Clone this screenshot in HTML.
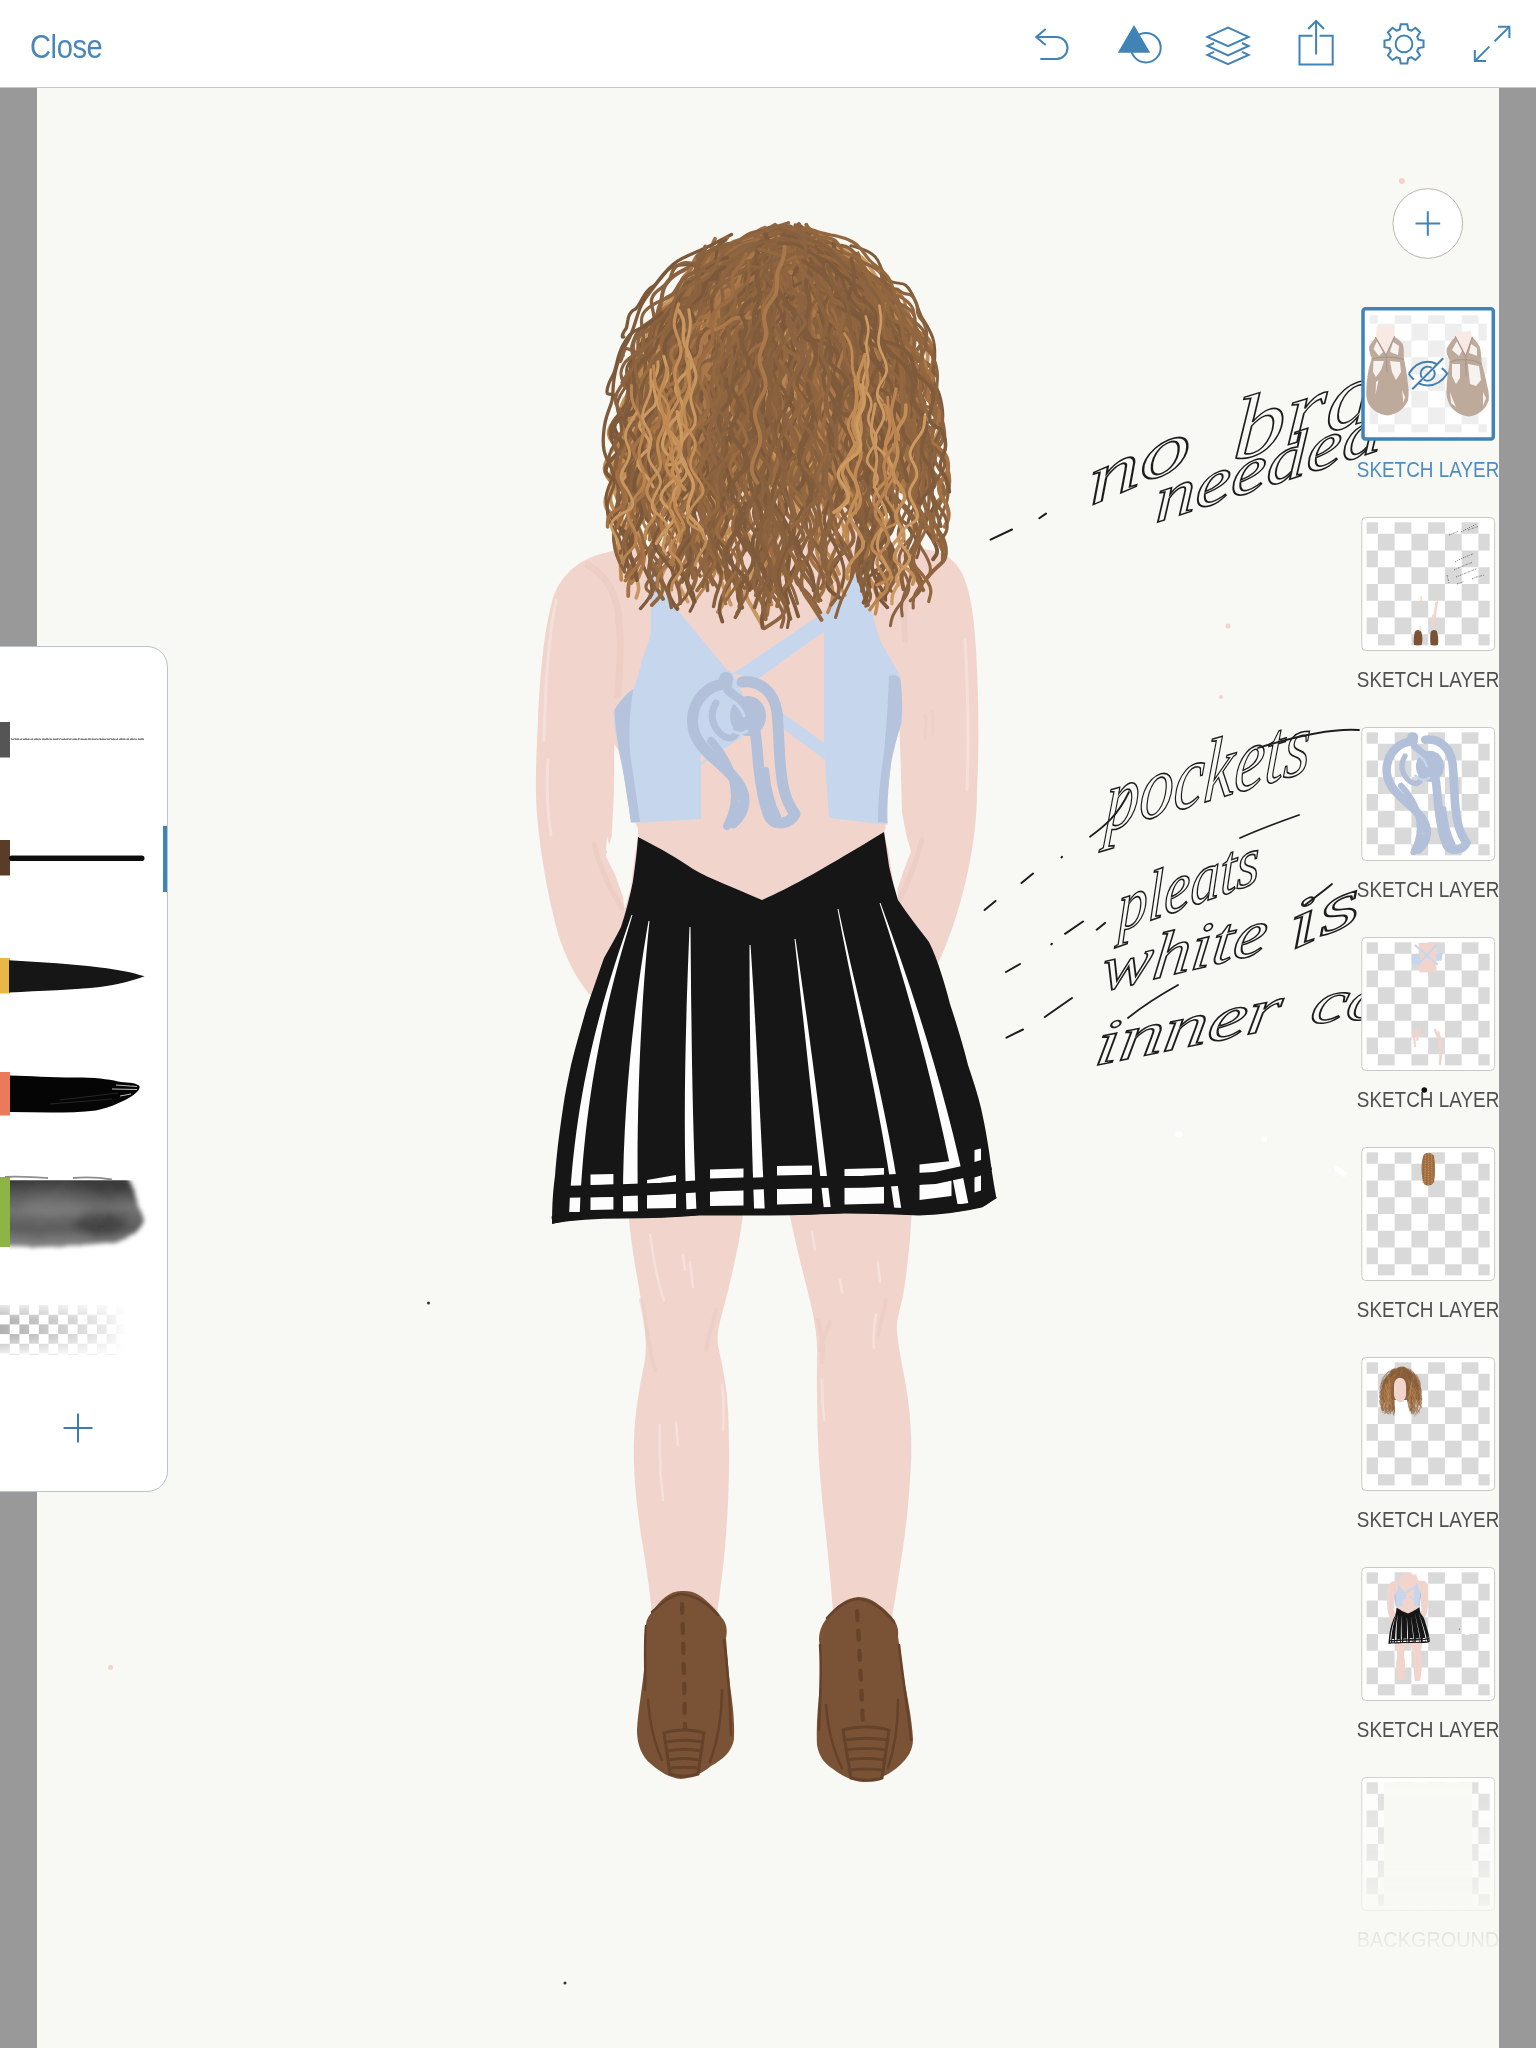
<!DOCTYPE html>
<html lang="en">
<head>
<meta charset="utf-8">
<title>Sketch</title>
<style>

html,body{margin:0;padding:0;}
body{width:1536px;height:2048px;position:relative;overflow:hidden;background:#999;font-family:"Liberation Sans",sans-serif;}
#canvas{position:absolute;left:37px;top:88px;width:1462px;height:1960px;background:#f8f8f4;}
#art{position:absolute;left:0;top:0;width:1536px;height:2048px;}
#stripL{position:absolute;left:0;top:88px;width:37px;height:1960px;background:#999;}
#stripR{position:absolute;left:1499px;top:88px;width:37px;height:1960px;background:#999;}
#header{position:absolute;left:0;top:0;width:1536px;height:87px;background:#fff;border-bottom:1px solid #c6c6c6;}
#close{position:absolute;left:30px;top:28px;font-size:33.5px;line-height:38px;color:#4a87b9;letter-spacing:-0.5px;transform:scaleX(0.87);transform-origin:0 0;}
#hicons{position:absolute;left:0;top:0;width:1536px;height:88px;}
#layers{position:absolute;left:1336px;top:88px;width:163px;height:1960px;overflow:hidden;
 -webkit-mask-image:linear-gradient(to bottom,#000 0,#000 1652px,transparent 1872px);
 mask-image:linear-gradient(to bottom,#000 0,#000 1652px,transparent 1872px);}
#layers svg{position:absolute;left:0;top:0;}
#brushes{position:absolute;left:-22px;top:646px;width:188px;height:844px;background:#fff;border:1px solid #b7c3cf;border-radius:21px;overflow:hidden;}
#brushes svg{position:absolute;left:21px;top:-1px;}
#selbar{position:absolute;left:163px;top:826px;width:4px;height:66px;background:#4083b7;}

</style>
</head>
<body>
<div id="canvas"></div>
<svg id="art" viewBox="0 0 1536 2048">
<g id="skin">
<path fill="#f1d5cc" d="M640,548 C625,548 614,550 605,553 C582,558 562,572 553,598 C545,625 540,670 538,720
 C536,760 535,790 537,815 C540,850 548,900 560,940 C570,968 583,990 596,1000 L640,1010 L900,1000 L934,972
 C946,948 958,915 966,880 C973,850 977,820 977,790 C979,750 979,700 976,650 C974,615 970,590 962,573
 C955,560 945,553 930,550 C915,547 900,547 890,548 L870,540 L850,480 L690,480 L670,540 Z"/>
<path fill="#f8f8f4" d="M607,836 C609,845 611,853 613,862 L606,850 Z"/>
<path fill="none" stroke="#eacbc2" stroke-width="7" stroke-linecap="round" opacity="0.75" d="M588,565 C600,572 608,582 611,589 C616,600 619,612 619,621 C621,640 620.5,650 620,660 C619.5,675 618.5,686 617.7,695"/>
<path fill="none" stroke="#eacbc2" stroke-width="6" stroke-linecap="round" opacity="0.7" d="M905,640 C903,610 905,590 912,570"/>
<path fill="none" stroke="#eacbc2" stroke-width="5" stroke-linecap="round" opacity="0.7" d="M594,845 C600,868 610,890 622,908"/>
<path fill="none" stroke="#eacbc2" stroke-width="5" stroke-linecap="round" opacity="0.7" d="M922,840 C915,865 905,890 898,902"/>
<path fill="none" stroke="#f6e2dc" stroke-width="3" stroke-linecap="round" opacity="0.8" d="M556,600 C548,640 545,690 544,740 M548,760 C546,790 548,815 551,835"/>
<path fill="none" stroke="#f6e2dc" stroke-width="3" stroke-linecap="round" opacity="0.8" d="M965,640 C968,690 969,740 967,790"/>
<path fill="none" stroke="#eacbc2" stroke-width="3" stroke-linecap="round" opacity="0.5" d="M925,715 C926,722 926,730 925,738 M932,712 C933,720 933,728 932,735"/>

<path fill="#f1d5cc" d="M628,1205 L744,1205 C742,1230 735,1262 727,1295 C721,1318 716,1332 718,1345
 C722,1365 727,1385 728,1410 C730,1450 729,1490 727,1520 C725,1555 721,1585 717,1615 L652,1615
 C650,1590 646,1565 641,1535 C636,1500 633,1470 634,1440 C635,1410 640,1385 645,1360 C647,1345 645,1325 641,1300
 C636,1270 630,1240 628,1205 Z"/>
<path fill="#f1d5cc" d="M788,1205 L912,1205 C911,1235 908,1262 904,1290 C901,1308 896,1318 897,1332
 C899,1355 905,1375 908,1400 C912,1430 912,1455 910,1480 C908,1515 903,1550 898,1580 C896,1595 893,1610 891,1625 L834,1625
 C832,1595 829,1565 826,1535 C822,1500 819,1470 818,1440 C817,1410 817,1385 817,1360 C818,1340 815,1322 811,1305
 C804,1275 794,1240 788,1205 Z"/>
<path fill="none" stroke="#f6e2dc" stroke-width="2.5" stroke-linecap="round" opacity="0.9" d="M650,1235 C654,1262 658,1285 664,1300 M690,1262 L693,1287 M683,1255 L685,1270 M660,1425 C659,1450 660,1475 663,1500 M676,1422 L678,1445 M722,1385 C724,1400 724,1415 723,1430"/>
<path fill="none" stroke="#f6e2dc" stroke-width="2.5" stroke-linecap="round" opacity="0.9" d="M812,1232 L815,1250 M878,1262 L880,1282 M840,1280 L842,1292 M876,1315 C874,1325 873,1335 874,1348 M822,1380 C822,1395 823,1410 824,1420"/>
<path fill="none" stroke="#eacbc2" stroke-width="4" stroke-linecap="round" opacity="0.55" d="M641,1300 C646,1320 648,1345 655,1370 M716,1310 C712,1325 708,1338 706,1350 M818,1320 C822,1335 824,1345 822,1362 M830,1322 C826,1332 822,1340 820,1350 M886,1300 C884,1312 880,1322 878,1335"/>
</g>
<g id="shoes">
<path fill="#7a5336" d="M681,1591 C670,1591 660,1600 652,1612 C648,1617 646,1620 646,1626 C644,1640 645,1650 645,1660
 C643,1685 638,1710 637,1730 C637,1745 642,1757 651,1764 C660,1772 670,1778 681,1779 C692,1778 703,1773 711,1766
 C722,1760 732,1752 734,1739 C735,1720 732,1700 730,1685 C728,1665 727,1650 726,1638 C728,1630 726,1622 722,1618
 C715,1608 705,1598 695,1593 C690,1591 686,1591 681,1591 Z"/>
<path fill="#7a5336" d="M858,1597 C846,1598 835,1606 827,1618 C823,1623 819,1630 819,1640 C821,1655 820,1670 820,1685
 C818,1705 816,1725 817,1745 C819,1757 825,1764 833,1769 C842,1776 852,1781 864,1782 C877,1781 890,1774 899,1766
 C908,1758 913,1750 913,1739 C912,1720 908,1700 905,1685 C902,1668 900,1652 898,1636 C899,1628 896,1622 892,1617
 C884,1608 874,1600 866,1598 C863,1597 860,1597 858,1597 Z"/>
<g fill="none" stroke="#65422a" stroke-linecap="round">
<path stroke-width="4.2" stroke-dasharray="9 11" d="M682,1604 C683,1630 684,1670 685,1728"/>
<path stroke-width="4.2" stroke-dasharray="9 11" d="M857,1611 C859,1640 861,1680 863,1726"/>
<path stroke-width="2.5" d="M652,1612 C660,1605 668,1596 681,1594 C694,1595 706,1602 718,1615 M646,1626 C644,1650 646,1670 645,1690 M724,1640 C728,1670 730,1700 731,1735"/>
<path stroke-width="2.5" d="M827,1618 C836,1608 846,1600 858,1599 C872,1600 884,1610 894,1622 M820,1645 C822,1670 820,1700 819,1730 M899,1645 C903,1680 908,1710 911,1740"/>
<path stroke-width="2.5" d="M648,1700 C650,1725 655,1745 662,1760 M722,1690 C722,1715 718,1740 710,1762 M826,1705 C828,1730 834,1752 842,1768 M898,1700 C898,1725 894,1750 888,1768"/>
<path stroke-width="3" d="M664,1733 C676,1729 692,1729 704,1733 L698,1774 C690,1777 678,1777 670,1774 Z" fill="#7a5336"/>
<path stroke-width="3" d="M843,1730 C856,1726 876,1726 889,1730 L882,1778 C874,1781 860,1781 851,1778 Z" fill="#7a5336"/>
<path stroke-width="3" d="M666,1742 C678,1740 692,1740 702,1742 M667,1751 C678,1749 692,1749 701,1751 M668,1760 C678,1758 690,1758 700,1760 M669,1768 C678,1767 690,1767 699,1768"/>
<path stroke-width="3" d="M845,1740 C858,1738 876,1738 888,1740 M846,1750 C858,1748 876,1748 886,1750 M848,1760 C858,1758 874,1758 885,1760 M849,1770 C858,1769 874,1769 883,1770"/>
</g>
</g>
<g id="top">
<path fill="#f8f8f4" d="M614.5,744 L618,750 L621,761 L630,798 L634.5,821 L638,829 L638,836 L634.5,859 L630.7,889 L624.5,909
 L623,897 L614.8,874 L605.7,856 L611.7,836 L614,791 L614.2,750 Z"/>
<path fill="#f8f8f4" d="M899.5,730 L898.3,732 L891.5,760.6 L887,798.4 L885.4,821 L885.4,829 L884,833 L888.4,851.4 L893,881.7 L898.3,902
 L897.5,889 L903.6,871 L911,851.4 L906.6,836 L902,812 L900.6,760.6 Z"/>
<path fill="#c6d6ed" d="M649.5,540 L654.5,540 L656,570 L664.5,595 L686.7,621 L727,670 L733,673.5 L745,700 L733,736 L701,765 L701,819 C680,820 655,822 631,823
 C628,800 625,780 620.8,760.6 C617,740 614,725 613.3,712 C620,700 628,692 633.3,689 C637,680 640,670 641.7,660
 C646,650 650,640 651,630 C651,610 650.5,580 649.5,540 Z"/>
<path fill="#c6d6ed" d="M858,570 L846,591 L824,612 L824,747.5 L825,760 L829,818 C850,820 870,823 887.5,824.6
 C886,810 886,800 887,798.4 C888,785 890,772 891.5,760.6 C894,748 897,738 898.3,731.8 C900,728 901,725 902,722.7
 C903,705 902,690 900,676.7 C893,662 885,650 880,640 C875,625 870,605 866,585 C864,578 862,573 858,570 Z"/>
<path fill="#c6d6ed" d="M824,612 L826,630 L758,679 L733,673.5 Z"/>
<path fill="#c6d6ed" d="M781,712 L824,743 L825,760 L781,727 Z"/>
<path fill="#c6d6ed" d="M700,747.5 L733,728 L742,737 L700,765 Z"/>
<path fill="#f1d5cc" d="M701,745 L712,752 L701,763 Z"/>
<path fill="#b2c1d9" opacity="0.9" d="M633.3,689 C626,694 619,702 614.5,710 C615,730 619,750 623,770 C626,790 629,808 631,822 L640,822
 C637,800 634,780 631,760 C628,740 629,715 633.3,689 Z"/>
<path fill="#b2c1d9" opacity="0.9" d="M889,676 C895,674 899,676 900.5,680 C903,700 902,715 901,724 C897,738 893,750 891,762 C889,780 887,800 887.5,823 L878,822
 C878,800 880,780 883,760 C886,735 888,705 889,676 Z"/>
</g>
<g id="knot" fill="none" stroke="#b2c1d9" stroke-linecap="round" stroke-linejoin="round">
<path stroke-width="11" d="M727,684 C708,684 693,700 692.5,720 C692,738 704,750 718,762 C734,776 745,788 744,802 C743,812 738,819 733,823"/>
<path stroke-width="7" d="M716,703 C709,714 712,727 722,735 C730,741 737,737 736,730"/>
<path stroke-width="8" d="M711,741 C725,756 735,776 735,796 C735,808 731,818 727,826"/>
<path stroke-width="11" d="M742,682 C760,680 774,692 777,712 C780,740 778,765 784,790 C787,802 792,810 795,814 C790,824 776,826 770,818 C763,804 760,780 758,760 C757,745 756,735 754,725"/>
<path stroke-width="6" d="M766,770 C768,790 772,805 778,816"/>
<ellipse cx="748" cy="716" rx="18" ry="20" fill="#b2c1d9" stroke="none"/>
<path stroke-width="9" d="M728,690 C734,696 740,700 746,704"/>
<circle cx="726" cy="679" r="7" fill="#b2c1d9" stroke="none"/>
<path stroke="#c6d6ed" stroke-width="3" d="M731,700 C737,704 742,709 744,716 M729,728 C735,734 742,735 747,731"/>
</g>
<g id="skirt">
<path fill="#161616" d="M638,837 C660,848 680,860 693,869 C710,879 735,888 762,900 C790,888 830,865 884,832
 C886,845 888,858 889,866 C892,880 895,890 898,900 C908,915 920,930 929,942 C938,960 945,985 950,1004
 C957,1025 963,1045 968,1065 C973,1080 978,1095 981,1108 C986,1130 989,1150 991,1165 C993,1180 995,1190 996,1196
 C990,1203 985,1206 981,1207 C960,1212 940,1214 919,1215 C895,1214 870,1213 846,1213 C820,1214 795,1215 769,1215
 C745,1215 722,1215 699,1215 C675,1217 650,1218 623,1218 C608,1218 595,1218 580,1218 C570,1220 560,1222 552,1224
 C552,1205 553,1190 555,1176 C557,1150 560,1128 563,1108 C565,1093 568,1080 571,1065 C576,1045 581,1028 586,1010
 C592,992 598,975 604,958 C610,947 616,937 621,927 C626,912 630,896 633,881 C635,866 637,852 638,837 Z"/>
<path fill="#fdfdfd" d="M631.5,915.0 C601.6,1000.0 575.1,1090.0 569.2,1212.0 L579.8,1212.0 C584.9,1090.0 606.4,1000.0 632.5,915.0 Z"/>
<path fill="#fdfdfd" d="M648.5,921.0 C634.7,1000.0 622.1,1108.0 623.0,1212.0 L638.0,1212.0 C635.9,1108.0 641.3,1000.0 649.5,921.0 Z"/>
<path fill="#fdfdfd" d="M689.5,927.0 C686.7,1000.0 682.4,1108.0 686.5,1211.0 L696.5,1211.0 C691.6,1108.0 691.3,1000.0 690.5,927.0 Z"/>
<path fill="#fdfdfd" d="M749.5,945.0 C749.6,1000.0 750.1,1108.0 754.2,1211.0 L764.8,1211.0 C759.9,1108.0 754.4,1000.0 750.5,945.0 Z"/>
<path fill="#fdfdfd" d="M794.5,939.0 C801.3,1000.0 812.7,1108.0 824.0,1210.0 L831.0,1210.0 C819.3,1108.0 804.7,1000.0 795.5,939.0 Z"/>
<path fill="#fdfdfd" d="M837.5,909.0 C854.3,1000.0 880.7,1108.0 894.5,1210.0 L901.5,1210.0 C887.3,1108.0 857.7,1000.0 838.5,909.0 Z"/>
<path fill="#fdfdfd" d="M879.5,903.0 C911.5,1000.0 939.9,1108.0 957.5,1204.0 L968.5,1204.0 C950.1,1108.0 916.5,1000.0 880.5,903.0 Z"/>
<path fill="#fdfdfd" d="M590.5,1174.4 L613.4,1174.0 L613.4,1184.5 L590.5,1185 Z"/>
<path fill="#fdfdfd" d="M590.5,1197.3 L613.4,1197 L613.4,1209.5 L590.5,1210 Z"/>
<path fill="#fdfdfd" d="M647,1180 L676,1175 L676,1182.5 L647,1185.5 Z"/>
<path fill="#fdfdfd" d="M647,1193.5 L676,1193 L676,1208 L647,1208.6 Z"/>
<path fill="#fdfdfd" d="M710,1169.5 L743.5,1168.5 L743.5,1177.5 L710,1178.5 Z"/>
<path fill="#fdfdfd" d="M710,1191.5 L743.5,1190.5 L743.5,1205.5 L710,1206 Z"/>
<path fill="#fdfdfd" d="M777,1166 L812,1165.5 L812,1174.8 L777,1175.5 Z"/>
<path fill="#fdfdfd" d="M777,1189 L812,1188.5 L812,1203.5 L777,1204.5 Z"/>
<path fill="#fdfdfd" d="M844.5,1169 L884,1168 L884,1176 L844.5,1177 Z"/>
<path fill="#fdfdfd" d="M844.5,1187.5 L884,1186.5 L884,1203.5 L844.5,1204.5 Z"/>
<path fill="#fdfdfd" d="M919.5,1164.5 L951.5,1161 L951.5,1171.5 L919.5,1175 Z"/>
<path fill="#fdfdfd" d="M919.5,1184.5 L951.5,1180.5 L951.5,1196 L919.5,1200 Z"/>
<path fill="#fdfdfd" d="M974.5,1150 L981,1148.5 L981,1160 L974.5,1162 Z"/>
<path fill="#fdfdfd" d="M974.5,1177.5 L981,1175.5 L981,1190.5 L974.5,1192.5 Z"/>
<path fill="none" stroke="#161616" stroke-width="12" d="M557,1192 L601,1191 L661,1188.7 L727,1184.5 L795,1182 L864,1181.7 L935,1178 L978,1168.7 L990,1164"/>
<path fill="none" stroke="#161616" stroke-width="9" d="M770,1152 L771.5,1214"/>
<path fill="none" stroke="#161616" stroke-width="7" stroke-linejoin="round" d="M552,1220 C570,1217 590,1215 623,1215 C650,1215 675,1214 699,1212
 C722,1212 745,1212 769,1212 C795,1212 820,1211 846,1210 C870,1210 895,1211 919,1212 C940,1211 960,1209 981,1204 L995,1195"/>
</g>
<g id="hair">
<path fill="#a97849" d="M771.0,228.0 L732.9,240.0 L707.0,256.0 L686.0,282.0 L659.0,308.0 L647.0,334.0 L638.0,360.0 L629.0,385.0 L622.0,412.0 L620.0,450.0 L620.0,475.0 L621.6,492.0 L647.5,514.4 L673.4,497.1 L699.2,507.4 L725.1,480.4 L750.9,496.4 L776.8,485.2 L802.7,512.6 L828.5,497.9 L854.4,510.1 L880.3,482.6 L906.1,496.0 L932.0,492.0 L931.5,475.0 L929.0,450.0 L924.0,412.0 L921.0,385.0 L917.0,360.0 L911.0,334.0 L902.0,308.0 L876.0,282.0 L858.0,256.0 L832.1,240.0 L799.0,228.0 Z"/>
<g fill="none" stroke-linecap="round" stroke-linejoin="round">
<path stroke="#c48f57" stroke-width="3.2" d="M832.9,268.5Q834.8,273.2 834.9,276.2Q835.0,279.2 835.1,282.3Q835.2,285.3 836.7,287.5Q838.3,289.6 841.4,291.6Q844.6,293.6 847.8,296.8Q851.0,300.1 852.1,303.2Q853.2,306.3 851.9,309.1Q850.6,311.9 848.7,314.9Q846.9,317.9 846.7,321.5Q846.6,325.0 848.4,327.8Q850.2,330.6 851.9,334.3Q853.5,337.9 852.9,341.1Q852.2,344.3 849.5,349.1Q846.9,353.9 845.0,358.5Q843.1,363.2 844.6,366.3Q846.1,369.5 850.5,371.5Q854.8,373.6 858.6,378.5Q862.4,383.4 862.8,387.4Q863.1,391.4 860.5,394.6Q857.8,397.8 855.7,402.2Q853.7,406.7 854.9,410.5Q856.1,414.2 859.7,419.3Q863.2,424.5 865.0,429.4Q866.8,434.4 864.2,437.9Q861.6,441.5 856.3,446.5Q851.0,451.5 847.8,457.3Q844.5,463.0 846.3,467.0Q848.0,471.1 853.0,474.3Q858.0,477.5 861.2,483.6Q864.3,489.7 862.7,494.1Q861.1,498.4 856.8,503.4Q852.5,508.3 850.8,513.9Q849.0,519.5 852.3,523.6Q855.7,527.7 861.1,535.1Q866.5,542.5 868.3,548.7Q870.0,554.9 865.5,558.6Q861.0,562.4 853.9,567.5Q846.7,572.7 843.2,579.1Q839.7,585.6 842.4,590.4L845.1,595.2"/>
<path stroke="#cd9a62" stroke-width="3.5" d="M816.3,248.3Q805.1,249.6 799.7,250.6Q794.4,251.6 789.2,252.5Q784.1,253.4 779.1,253.7Q774.1,254.1 769.1,253.8Q764.2,253.4 759.2,253.4Q754.3,253.4 749.4,253.9Q744.6,254.3 740.0,255.4Q735.5,256.5 731.4,258.3Q727.4,260.1 724.0,262.6Q720.6,265.1 717.7,267.9Q714.8,270.7 712.2,274.2Q709.5,277.6 706.6,280.3Q703.8,283.0 700.5,284.6Q697.1,286.3 693.5,287.9Q689.9,289.5 686.5,292.0Q683.0,294.5 680.5,297.5Q677.9,300.5 676.6,303.9Q675.4,307.4 675.2,311.8Q675.1,316.3 675.4,321.3Q675.7,326.3 675.5,330.6Q675.2,334.9 673.6,338.2Q672.0,341.4 669.0,344.0Q666.0,346.5 662.4,349.5Q658.7,352.5 655.5,357.4Q652.3,362.3 650.8,367.3L649.3,372.2"/>
<path stroke="#b98450" stroke-width="4.3" d="M831.4,318.6Q833.2,320.3 833.5,321.4Q833.8,322.5 833.8,323.8Q833.9,325.1 834.2,326.4Q834.5,327.8 835.4,329.3Q836.2,330.9 837.1,332.6Q838.1,334.4 838.5,336.4Q839.0,338.3 838.6,340.6Q838.2,342.9 837.4,345.9Q836.7,349.0 836.5,351.8Q836.3,354.7 837.3,357.2Q838.3,359.6 840.2,361.8Q842.1,364.0 843.9,367.4Q845.7,370.7 846.3,374.2Q847.0,377.6 846.5,381.0Q846.0,384.4 845.3,388.2Q844.6,392.1 844.8,396.1Q845.0,400.2 846.4,404.3Q847.8,408.4 849.6,413.2Q851.3,418.0 852.0,422.8Q852.7,427.5 851.7,432.0Q850.6,436.4 848.6,441.6Q846.5,446.7 845.1,452.5Q843.6,458.4 844.0,463.7Q844.5,469.1 846.5,474.0Q848.5,478.9 850.5,484.9Q852.5,490.8 852.9,497.0Q853.4,503.1 852.0,508.9Q850.7,514.7 849.0,521.8Q847.3,528.8 847.0,535.6Q846.8,542.4 848.7,548.6Q850.5,554.8 853.2,562.6L856.0,570.5"/>
<path stroke="#cd9a62" stroke-width="3.4" d="M853.9,283.2Q854.0,288.8 853.3,292.8Q852.7,296.7 853.3,299.9Q853.9,303.2 856.1,305.3Q858.2,307.4 860.1,309.8Q862.0,312.3 862.5,315.7Q863.0,319.1 863.6,322.5Q864.2,325.9 866.7,328.5Q869.1,331.2 872.0,334.7Q874.9,338.1 875.5,341.4Q876.1,344.8 874.5,348.0Q872.9,351.3 872.2,355.6Q871.6,360.0 873.4,362.8Q875.3,365.7 877.2,369.0Q879.0,372.3 878.5,376.3Q877.9,380.4 876.7,385.1Q875.5,389.8 877.3,393.0Q879.0,396.1 883.1,399.4Q887.2,402.7 889.3,406.9Q891.4,411.1 889.7,414.7Q888.1,418.2 886.5,422.5Q884.8,426.9 886.4,430.5Q888.1,434.0 890.7,438.6Q893.2,443.1 892.4,447.0Q891.6,451.0 888.3,456.4Q885.0,461.8 884.6,466.5Q884.1,471.2 888.1,474.0Q892.1,476.8 895.5,481.9Q899.0,487.0 897.9,491.2Q896.8,495.3 894.2,500.1Q891.6,504.9 892.8,509.1Q894.0,513.3 897.9,518.8Q901.8,524.2 902.3,529.1Q902.7,534.0 898.3,538.2Q893.8,542.4 890.6,548.5Q887.4,554.7 889.9,558.7Q892.5,562.7 896.7,567.6Q900.9,572.5 900.4,577.4Q899.9,582.3 896.0,587.8Q892.2,593.3 892.1,598.5L891.9,603.7"/>
<path stroke="#c99760" stroke-width="4.1" d="M733.7,313.3Q725.4,321.0 721.9,325.5Q718.4,329.9 715.2,335.0Q712.0,340.1 708.5,344.3Q705.0,348.5 700.8,351.5Q696.7,354.4 692.1,356.4Q687.6,358.5 683.3,361.1Q679.0,363.8 675.6,367.2Q672.2,370.6 669.7,374.5Q667.2,378.4 664.8,382.6Q662.4,386.9 659.4,390.0Q656.4,393.1 652.5,395.5Q648.6,398.0 644.5,400.9Q640.4,403.9 637.4,407.2Q634.4,410.4 633.3,414.1Q632.1,417.8 632.4,421.7Q632.6,425.7 632.7,430.8Q632.9,435.9 631.6,439.3Q630.3,442.8 627.4,444.8Q624.5,446.8 621.3,449.1Q618.1,451.5 616.4,454.8Q614.7,458.1 615.1,461.3Q615.6,464.5 617.1,469.1Q618.7,473.7 619.2,477.4Q619.8,481.0 618.0,483.4Q616.1,485.7 612.4,488.0Q608.7,490.4 607.0,494.6Q605.3,498.9 605.4,502.4Q605.6,505.9 606.6,508.2Q607.6,510.5 610.9,512.8L614.2,515.1"/>
<path stroke="#cd9a62" stroke-width="3.3" d="M773.4,293.5Q763.7,298.9 759.2,301.8Q754.6,304.6 750.2,306.6Q745.8,308.5 741.1,308.9Q736.4,309.3 731.5,308.8Q726.5,308.3 721.7,309.5Q716.9,310.6 713.0,312.7Q709.0,314.7 706.2,317.6Q703.4,320.6 701.4,323.8Q699.5,327.1 697.4,330.7Q695.3,334.3 692.3,336.2Q689.3,338.2 685.4,340.6Q681.6,343.1 678.2,346.0Q674.8,349.0 673.4,352.5Q672.0,356.0 673.2,359.6Q674.3,363.1 676.7,368.6Q679.1,374.1 680.4,378.6Q681.7,383.1 680.4,386.1Q679.1,389.1 675.5,391.4Q672.0,393.7 668.4,398.1Q664.9,402.5 663.9,407.3Q662.9,412.2 665.3,415.8L667.7,419.4"/>
<path stroke="#b98450" stroke-width="3.7" d="M768.4,307.2Q768.3,312.1 767.2,315.1Q766.1,318.2 765.0,321.9Q763.9,325.7 764.1,328.7Q764.2,331.7 766.1,333.8Q767.9,336.0 770.3,338.0Q772.8,340.0 774.2,343.3Q775.7,346.6 775.2,349.7Q774.8,352.9 773.4,357.1Q772.0,361.3 771.6,365.2Q771.3,369.0 773.2,371.9Q775.2,374.9 778.9,379.4Q782.5,383.9 785.2,388.8Q787.9,393.7 787.5,397.8Q787.0,401.8 783.4,404.8Q779.8,407.8 775.6,412.6Q771.3,417.3 769.5,422.3Q767.7,427.2 769.5,431.2Q771.3,435.3 774.6,439.9Q778.0,444.6 779.4,450.4Q780.8,456.1 778.3,460.3L775.8,464.4"/>
<path stroke="#cd9a62" stroke-width="3.6" d="M822.8,271.8Q822.4,277.7 822.5,280.7Q822.7,283.7 822.2,286.8Q821.6,290.0 820.1,293.5Q818.5,297.0 816.6,300.7Q814.8,304.3 814.0,307.8Q813.3,311.2 814.6,314.2Q815.9,317.2 818.7,320.6Q821.4,324.0 823.7,328.6Q826.0,333.3 826.2,337.0Q826.3,340.8 824.1,343.6Q821.9,346.4 819.1,349.4Q816.3,352.3 815.1,356.4Q813.9,360.5 815.1,364.0Q816.4,367.4 818.7,372.3Q821.0,377.3 821.8,381.6Q822.6,386.0 820.2,389.2Q817.9,392.4 813.5,396.8Q809.1,401.3 805.5,406.5Q802.0,411.8 802.0,416.0Q802.0,420.2 805.8,423.3Q809.5,426.4 814.1,431.0Q818.8,435.6 820.8,440.9Q822.8,446.1 820.8,449.9Q818.8,453.6 814.6,457.7Q810.5,461.7 808.0,467.1Q805.6,472.5 807.4,476.6L809.2,480.7"/>
<path stroke="#cd9a62" stroke-width="3.4" d="M722.5,252.7Q722.0,255.9 722.8,259.7Q723.6,263.5 723.2,264.7Q722.8,265.9 720.2,264.3Q717.6,262.8 715.1,262.9Q712.7,263.0 712.3,264.6Q712.0,266.2 711.6,268.1Q711.2,270.0 708.5,271.4Q705.7,272.7 702.7,274.7Q699.8,276.6 700.6,278.8Q701.5,281.1 704.7,284.9Q707.9,288.6 708.3,291.8Q708.7,295.1 705.4,296.0Q702.1,296.9 700.0,299.3Q698.0,301.7 699.5,305.7Q701.0,309.7 701.5,313.5Q701.9,317.4 697.5,319.1Q693.1,320.8 688.2,325.1Q683.2,329.3 683.8,332.8Q684.4,336.3 688.6,340.2Q692.8,344.1 693.3,348.7Q693.7,353.3 689.8,356.5Q685.8,359.8 684.6,364.3Q683.3,368.8 687.2,374.5Q691.1,380.2 693.2,386.2Q695.3,392.2 690.2,395.0Q685.1,397.7 678.7,403.5Q672.2,409.2 672.7,414.2Q673.1,419.3 677.7,424.4Q682.2,429.6 681.8,435.3Q681.4,440.9 676.0,447.0Q670.6,453.0 669.5,459.2Q668.5,465.3 674.7,471.6Q680.9,477.8 684.9,486.0Q688.8,494.2 683.8,498.7Q678.7,503.3 671.8,510.0Q664.9,516.8 666.0,523.2Q667.0,529.7 672.2,537.3Q677.4,544.8 675.8,551.5Q674.2,558.3 666.6,566.5Q659.0,574.7 657.4,582.7L655.7,590.7"/>
<path stroke="#c08a52" stroke-width="3.2" d="M793.0,253.6Q782.7,256.4 777.3,255.9Q771.9,255.5 766.5,255.0Q761.1,254.4 756.1,255.4Q751.1,256.4 746.7,258.3Q742.3,260.3 738.2,262.5Q734.1,264.6 729.7,266.2Q725.3,267.8 720.6,268.8Q715.9,269.9 711.7,271.5Q707.4,273.1 704.4,276.1Q701.4,279.0 699.4,284.0Q697.5,288.9 695.1,293.0Q692.7,297.1 688.9,297.9Q685.1,298.8 680.5,298.5Q675.8,298.3 672.3,300.5Q668.7,302.7 667.1,306.0Q665.4,309.2 664.4,313.9Q663.4,318.6 660.6,320.8Q657.9,323.0 653.1,324.3Q648.4,325.6 644.1,328.4Q639.9,331.2 638.9,334.7Q638.0,338.3 639.9,342.4Q641.9,346.5 643.3,351.9Q644.6,357.4 642.5,360.1Q640.4,362.8 636.2,364.8Q631.9,366.8 629.6,370.7Q627.3,374.7 629.0,378.3Q630.7,382.0 633.8,387.6Q636.9,393.2 636.7,397.1L636.6,401.1"/>
<path stroke="#c08a52" stroke-width="3.7" d="M786.1,281.2Q788.4,284.5 789.0,286.7Q789.5,288.9 789.6,291.6Q789.7,294.3 790.0,296.9Q790.2,299.5 791.5,301.4Q792.8,303.4 795.3,304.6Q797.8,305.8 800.9,308.1Q804.0,310.5 806.4,313.3Q808.8,316.1 809.7,318.9Q810.5,321.8 809.8,324.6Q809.1,327.3 807.8,330.1Q806.6,332.9 806.2,336.7Q805.8,340.4 807.1,343.3Q808.3,346.3 810.5,349.5Q812.7,352.7 814.4,356.4Q816.1,360.0 816.0,363.5Q815.9,367.0 814.0,371.1Q812.1,375.2 809.9,380.5Q807.6,385.7 806.9,390.3Q806.2,394.8 808.2,398.1Q810.2,401.5 814.1,404.0Q818.1,406.5 821.9,411.2Q825.8,415.8 827.6,420.6Q829.3,425.3 828.3,429.5Q827.3,433.7 824.9,437.8Q822.6,441.9 821.2,447.5Q819.8,453.1 821.0,457.6Q822.2,462.1 825.6,467.0Q829.0,471.8 832.5,477.8Q835.9,483.8 836.9,489.2Q837.8,494.6 835.3,499.1Q832.8,503.7 828.3,509.4Q823.8,515.1 820.3,522.2Q816.8,529.3 816.7,535.1Q816.7,540.9 820.3,545.4Q823.8,549.8 828.6,554.9Q833.4,560.0 836.3,566.9L839.1,573.8"/>
<path stroke="#c08a52" stroke-width="3.3" d="M795.8,227.0Q798.7,226.8 799.9,227.7Q801.2,228.5 802.2,230.0Q803.2,231.5 804.4,232.3Q805.6,233.2 807.5,232.8Q809.4,232.4 812.0,232.5Q814.5,232.6 816.7,233.7Q818.8,234.7 819.7,236.4Q820.7,238.1 820.8,240.1Q820.8,242.2 821.3,244.4Q821.7,246.7 823.3,248.2Q824.8,249.8 826.7,251.7Q828.6,253.7 829.4,256.0Q830.3,258.3 829.8,261.6Q829.3,264.9 828.7,268.6Q828.1,272.4 829.1,274.9Q830.2,277.5 833.2,278.9Q836.1,280.3 839.3,282.9Q842.4,285.6 843.8,288.8Q845.2,292.1 844.7,295.3Q844.3,298.5 843.8,302.3Q843.4,306.1 844.8,309.4Q846.1,312.7 848.8,316.8Q851.5,320.8 853.3,324.9Q855.1,329.1 854.3,332.9Q853.5,336.8 851.1,341.8Q848.7,346.7 847.5,352.0Q846.4,357.4 848.1,361.4Q849.9,365.4 853.3,368.9Q856.6,372.4 858.7,377.6Q860.8,382.9 860.2,387.7Q859.6,392.4 858.0,398.2Q856.3,404.0 856.6,409.5Q856.9,414.9 860.0,419.8Q863.1,424.7 866.6,431.2Q870.0,437.7 870.7,443.6Q871.3,449.6 868.6,454.7Q865.8,459.8 862.6,466.7Q859.5,473.7 859.2,480.2Q858.9,486.7 861.7,492.1Q864.5,497.6 867.3,504.4Q870.0,511.3 869.7,517.9Q869.3,524.5 866.4,531.8Q863.4,539.1 861.5,546.9Q859.6,554.7 861.5,561.3Q863.5,567.8 868.0,575.1Q872.5,582.4 875.4,590.9Q878.3,599.4 876.9,606.6L875.4,613.8"/>
<path stroke="#b98450" stroke-width="3.6" d="M798.4,302.7Q791.2,310.6 788.4,314.7Q785.7,318.7 784.5,322.8Q783.3,327.0 783.1,331.1Q782.8,335.2 782.0,339.5Q781.1,343.9 779.0,347.5Q776.9,351.1 774.4,355.0Q771.9,358.9 770.9,362.8Q769.9,366.7 770.7,371.5Q771.6,376.2 772.7,381.5Q773.7,386.8 772.6,390.5Q771.6,394.2 767.9,396.2Q764.2,398.2 760.1,401.6Q756.0,405.0 754.4,408.8Q752.7,412.7 754.0,416.1Q755.2,419.5 756.9,423.6Q758.6,427.7 757.8,431.2Q757.0,434.6 753.6,438.0Q750.2,441.5 747.4,445.7Q744.5,449.9 745.4,453.1Q746.3,456.4 750.6,459.5Q755.0,462.6 758.8,467.4Q762.6,472.2 762.2,475.3Q761.8,478.5 757.6,480.4Q753.5,482.2 749.9,486.7L746.3,491.1"/>
<path stroke="#cd9a62" stroke-width="3.4" d="M789.7,304.3Q790.5,305.7 791.9,306.2Q793.4,306.6 795.1,307.5Q796.7,308.4 797.4,310.1Q798.2,311.7 797.7,313.2Q797.2,314.6 796.4,316.3Q795.6,318.0 795.7,319.9Q795.8,321.9 797.2,324.4Q798.6,327.0 800.5,330.0Q802.4,333.1 803.1,335.9Q803.8,338.7 802.3,340.9Q800.9,343.1 797.8,345.4Q794.8,347.6 792.1,351.7Q789.3,355.7 788.8,359.2Q788.2,362.7 790.0,365.5Q791.7,368.4 794.1,371.5Q796.5,374.7 797.3,378.9Q798.2,383.0 796.7,386.7Q795.2,390.3 792.7,395.4Q790.3,400.4 789.3,405.2Q788.3,409.9 790.2,413.9Q792.1,417.8 796.1,423.0Q800.0,428.2 803.1,434.3Q806.2,440.5 806.0,445.6Q805.8,450.8 802.3,454.9Q798.8,459.0 794.5,464.5Q790.3,470.0 788.4,476.3Q786.6,482.7 788.3,488.0Q790.0,493.3 793.3,499.3Q796.7,505.2 798.4,512.2Q800.1,519.2 798.1,525.0Q796.1,530.7 791.6,538.0Q787.0,545.3 783.5,553.3Q780.0,561.2 780.7,568.0L781.4,574.8"/>
<path stroke="#cd9a62" stroke-width="3.7" d="M807.0,229.6Q814.1,233.4 817.3,235.7Q820.6,238.0 823.7,240.3Q826.9,242.5 830.1,244.3Q833.2,246.1 836.7,247.3Q840.1,248.4 843.7,249.2Q847.3,249.9 851.0,251.3Q854.6,252.8 857.9,254.9Q861.2,257.0 863.9,259.6Q866.6,262.2 868.7,265.2Q870.8,268.1 872.7,271.4Q874.6,274.8 876.8,278.0Q878.9,281.2 881.7,283.9Q884.4,286.5 887.5,289.5Q890.7,292.5 893.7,295.9Q896.8,299.2 899.1,302.9Q901.3,306.6 902.4,310.5Q903.4,314.5 903.4,318.6Q903.4,322.7 903.1,328.2Q902.8,333.7 903.1,338.6Q903.5,343.5 905.0,347.7Q906.6,351.8 909.3,355.4Q912.0,359.0 915.0,363.0Q918.0,367.1 920.2,372.2Q922.4,377.4 923.1,382.4L923.8,387.5"/>
<path stroke="#c99760" stroke-width="3.6" d="M761.7,301.1Q768.2,313.9 770.5,319.8Q772.9,325.7 773.9,331.0Q775.0,336.3 775.2,341.2Q775.5,346.0 776.2,350.7Q776.8,355.4 778.6,359.1Q780.5,362.7 783.4,366.2Q786.3,369.7 789.0,372.7Q791.7,375.6 792.7,378.1Q793.6,380.5 792.3,382.6Q791.0,384.6 788.3,388.2Q785.6,391.9 783.8,396.1Q782.0,400.3 783.3,402.6Q784.6,404.9 789.6,402.6Q794.6,400.4 793.3,395.6L791.9,390.9"/>
<path stroke="#c08a52" stroke-width="3.7" d="M786.9,260.9Q780.7,263.6 778.8,265.7Q776.9,267.8 776.6,270.6Q776.3,273.5 775.9,277.4Q775.5,281.3 773.5,283.2Q771.5,285.2 768.9,286.5Q766.3,287.8 765.0,290.8Q763.8,293.7 763.5,297.6Q763.1,301.4 761.0,303.5Q758.9,305.5 754.7,306.9Q750.4,308.3 747.2,311.2Q744.0,314.0 744.1,317.2Q744.2,320.4 745.4,324.2Q746.6,328.0 745.3,331.2Q744.0,334.4 741.0,337.3Q738.1,340.2 737.5,343.7Q736.8,347.1 738.9,352.3Q741.1,357.5 741.5,362.0Q742.0,366.6 738.1,368.5Q734.2,370.4 729.5,374.1Q724.9,377.7 724.3,381.7Q723.7,385.7 726.0,389.7Q728.3,393.7 727.9,398.1Q727.6,402.4 723.7,406.8Q719.9,411.2 718.2,415.9Q716.4,420.7 719.8,424.6Q723.2,428.5 727.1,435.0Q731.0,441.6 729.4,445.7Q727.8,449.9 722.7,453.6Q717.7,457.3 716.2,462.6Q714.7,467.9 718.0,472.7Q721.3,477.5 722.8,483.2Q724.2,489.0 720.0,493.7Q715.9,498.5 711.6,505.3Q707.4,512.2 709.8,516.9Q712.2,521.6 718.5,527.0Q724.8,532.4 726.4,538.6Q728.0,544.7 723.7,549.1Q719.4,553.6 716.9,560.6Q714.5,567.6 718.7,572.8L722.8,578.0"/>
<path stroke="#c99760" stroke-width="3.1" d="M756.2,233.1Q765.5,237.1 770.0,238.8Q774.6,240.5 779.1,241.7Q783.6,243.0 788.1,244.1Q792.6,245.2 796.9,246.6Q801.2,248.0 805.3,249.9Q809.4,251.7 813.1,253.8Q816.9,255.9 820.4,258.4Q823.9,260.9 827.4,263.2Q830.8,265.6 834.4,267.4Q837.9,269.3 841.6,270.9Q845.3,272.5 849.0,274.4Q852.7,276.3 856.1,278.4Q859.5,280.6 862.4,283.0Q865.2,285.5 867.4,288.4Q869.6,291.2 871.4,294.4Q873.1,297.5 874.8,301.2Q876.4,304.8 878.4,307.8Q880.4,310.7 882.9,312.9Q885.4,315.1 888.2,317.0Q891.0,318.9 893.6,321.5Q896.2,324.2 898.0,327.1Q899.9,330.1 900.9,333.2Q901.8,336.3 902.1,340.1Q902.4,343.9 902.7,347.7L903.0,351.6"/>
<path stroke="#c08a52" stroke-width="3.9" d="M770.4,291.1Q763.3,290.8 759.9,291.3Q756.5,291.7 753.3,292.8Q750.2,293.9 747.2,295.3Q744.3,296.7 741.3,297.9Q738.3,299.2 735.1,300.2Q731.9,301.2 728.7,302.4Q725.6,303.6 722.8,305.4Q720.1,307.2 718.1,309.7Q716.2,312.1 714.7,316.1Q713.2,320.0 711.4,323.2Q709.7,326.3 707.1,328.0Q704.4,329.7 701.0,330.5Q697.5,331.3 694.2,333.1Q690.8,334.9 688.5,337.7Q686.1,340.5 684.8,343.7Q683.6,347.0 682.5,350.9Q681.4,354.9 679.4,358.1Q677.5,361.2 674.3,364.1Q671.1,366.9 667.7,370.5Q664.2,374.1 662.1,378.0Q660.0,381.9 659.9,386.0Q659.8,390.1 660.9,394.9Q661.9,399.6 662.4,405.1Q662.8,410.6 661.4,414.9Q659.9,419.2 656.9,422.7Q653.9,426.2 651.1,430.8Q648.3,435.4 647.3,440.4Q646.3,445.5 647.2,450.8Q648.2,456.2 649.3,462.5Q650.4,468.8 649.7,474.2Q649.0,479.7 646.1,484.3Q643.1,488.8 639.4,495.3Q635.7,501.7 633.7,508.2Q631.7,514.7 632.6,520.6Q633.5,526.4 636.4,531.9Q639.3,537.4 641.5,544.8Q643.7,552.2 643.5,558.8Q643.2,565.4 640.8,571.4L638.4,577.5"/>
<path stroke="#c08a52" stroke-width="3.9" d="M810.8,260.9Q803.3,261.7 799.7,262.5Q796.1,263.2 792.8,264.5Q789.5,265.9 786.6,267.8Q783.7,269.8 781.1,272.1Q778.5,274.4 776.0,277.3Q773.4,280.3 770.5,282.2Q767.7,284.2 764.4,285.3Q761.2,286.5 757.9,287.5Q754.6,288.6 751.6,290.5Q748.7,292.4 746.3,295.3Q744.0,298.1 742.1,301.8Q740.2,305.4 738.1,308.7Q736.1,312.0 733.3,314.1Q730.5,316.2 726.8,317.1Q723.1,318.1 719.0,319.8Q714.9,321.4 711.2,324.0Q707.5,326.5 705.1,329.6Q702.6,332.7 701.5,336.3Q700.3,339.8 699.6,343.6Q699.0,347.4 697.8,351.8Q696.5,356.2 694.1,359.3Q691.7,362.5 688.4,365.3Q685.0,368.1 681.8,371.7Q678.6,375.4 676.7,379.3Q674.8,383.2 674.5,387.4Q674.2,391.5 674.9,397.5Q675.5,403.4 675.5,408.9Q675.5,414.5 673.7,418.6Q671.9,422.8 668.2,425.7Q664.5,428.6 660.1,431.9Q655.6,435.3 652.2,440.1Q648.8,445.0 647.5,449.9Q646.2,454.8 646.8,459.6Q647.3,464.4 648.3,470.2Q649.2,476.0 648.8,481.6Q648.3,487.3 645.8,491.8Q643.2,496.3 639.4,501.7Q635.5,507.1 632.2,513.0Q629.0,519.0 628.1,524.7Q627.1,530.5 628.9,535.8L630.6,541.1"/>
<path stroke="#c48f57" stroke-width="3.3" d="M821.1,252.7Q827.8,254.7 831.1,256.0Q834.4,257.2 837.4,259.0Q840.3,260.8 843.0,263.1Q845.7,265.4 848.1,268.0Q850.5,270.6 852.9,273.0Q855.3,275.5 858.0,277.4Q860.6,279.4 863.6,280.9Q866.6,282.5 869.8,284.5Q872.9,286.5 875.9,289.2Q878.9,291.8 881.3,294.9Q883.6,297.9 885.1,301.3Q886.5,304.7 887.2,308.2Q887.9,311.8 888.5,315.8Q889.0,319.8 889.9,323.8Q890.8,327.9 892.4,331.5Q894.0,335.1 896.2,338.8Q898.3,342.5 900.4,346.9Q902.5,351.4 903.7,355.9Q905.0,360.5 905.0,365.0Q905.0,369.5 903.9,374.3Q902.8,379.1 901.4,384.8Q900.0,390.6 899.2,396.1L898.4,401.6"/>
<path stroke="#b98450" stroke-width="3.7" d="M770.6,264.6Q770.2,267.3 769.5,268.9Q768.7,270.5 768.0,272.2Q767.2,274.0 767.4,275.7Q767.5,277.4 768.7,279.1Q769.8,280.9 771.0,283.5Q772.2,286.2 772.2,288.5Q772.3,290.8 771.1,292.7Q769.9,294.6 768.7,296.8Q767.4,299.0 767.3,301.6Q767.2,304.2 767.9,307.3Q768.6,310.3 768.6,313.3Q768.6,316.3 767.1,319.1Q765.7,321.9 763.7,325.7Q761.7,329.5 761.2,333.0Q760.6,336.5 762.0,339.5Q763.4,342.5 765.4,346.3Q767.3,350.0 767.8,354.1Q768.2,358.1 766.9,361.6Q765.6,365.1 764.2,369.2Q762.8,373.3 763.2,377.4Q763.6,381.5 765.3,386.4Q767.1,391.4 768.0,396.2Q768.8,401.1 767.2,405.2Q765.6,409.3 762.6,414.3Q759.6,419.2 758.1,424.7Q756.5,430.1 757.7,434.8Q759.0,439.4 761.3,444.3Q763.7,449.2 764.4,454.9Q765.1,460.6 763.4,465.7Q761.6,470.7 759.7,477.0Q757.7,483.3 758.3,489.0Q758.8,494.6 761.7,500.6Q764.5,506.7 766.7,513.6Q768.9,520.6 767.9,526.5Q766.8,532.4 763.3,538.0Q759.9,543.6 757.5,550.9Q755.1,558.3 756.1,564.6Q757.1,571.0 759.8,577.5L762.6,584.1"/>
<path stroke="#c99760" stroke-width="3.6" d="M716.5,284.8Q709.6,286.2 706.5,287.9Q703.4,289.7 700.9,292.7Q698.5,295.6 696.1,298.5Q693.8,301.3 690.8,302.4Q687.7,303.5 683.5,303.0Q679.4,302.4 674.9,303.8Q670.4,305.2 667.1,307.5Q663.8,309.9 662.6,313.2Q661.3,316.5 661.3,320.1Q661.3,323.6 660.5,327.9Q659.7,332.1 657.0,334.4Q654.3,336.7 650.6,339.8Q647.0,343.0 644.9,346.7Q642.8,350.4 643.7,354.3Q644.6,358.1 647.2,364.4Q649.8,370.8 650.9,376.1Q651.9,381.3 649.3,384.5Q646.6,387.6 641.4,390.0Q636.1,392.3 631.8,397.9Q627.5,403.5 627.2,408.5Q626.9,413.5 630.0,417.6Q633.1,421.8 636.0,427.9Q638.9,434.1 638.1,439.2Q637.4,444.4 633.3,450.1Q629.2,455.9 625.6,463.3Q622.0,470.7 622.9,476.5L623.9,482.4"/>
<path stroke="#c48f57" stroke-width="3.3" d="M778.3,230.3Q779.1,231.4 778.7,232.4Q778.4,233.4 778.1,234.6Q777.8,235.8 778.4,236.9Q779.1,237.9 780.9,239.7Q782.7,241.4 784.5,243.6Q786.4,245.9 786.7,247.8Q787.1,249.8 785.6,251.4Q784.1,253.0 781.8,255.0Q779.5,257.0 778.3,260.0Q777.1,263.0 777.9,265.4Q778.6,267.9 780.3,270.3Q782.0,272.8 782.7,276.0Q783.3,279.3 782.0,282.7Q780.6,286.0 778.5,290.4Q776.4,294.9 775.8,298.9Q775.3,302.9 777.6,305.9Q779.8,309.0 783.7,313.0Q787.5,317.0 790.1,322.0Q792.7,327.0 792.2,331.3Q791.7,335.5 789.0,339.3Q786.2,343.2 784.2,348.7Q782.1,354.2 782.9,359.0Q783.7,363.9 786.8,369.2Q789.8,374.4 792.0,380.4Q794.2,386.5 793.2,391.8Q792.1,397.1 788.3,403.3Q784.5,409.6 781.4,417.1Q778.4,424.6 779.1,430.7Q779.9,436.9 784.4,441.7Q788.9,446.6 793.6,453.8Q798.4,461.1 799.7,468.2Q800.9,475.4 798.3,481.7L795.7,487.9"/>
<path stroke="#cd9a62" stroke-width="3.6" d="M753.3,281.0Q747.0,283.9 744.0,286.1Q741.1,288.2 738.8,291.0Q736.4,293.7 734.7,296.7Q732.9,299.7 731.3,302.7Q729.7,305.8 727.6,308.7Q725.5,311.6 722.7,314.5Q720.0,317.4 717.0,320.4Q714.0,323.4 711.7,326.5Q709.4,329.7 708.4,333.1Q707.4,336.5 707.5,340.0Q707.7,343.5 708.2,348.4Q708.7,353.2 708.4,357.5Q708.1,361.8 706.3,365.0Q704.5,368.1 701.7,370.5Q698.8,372.9 696.1,375.8Q693.3,378.7 691.8,382.5Q690.3,386.2 690.2,390.2Q690.2,394.1 690.7,399.0Q691.3,403.8 691.0,408.1Q690.6,412.4 688.5,415.6Q686.4,418.8 682.8,422.2Q679.2,425.6 675.7,430.1Q672.2,434.7 670.5,439.1Q668.9,443.5 669.7,447.5Q670.5,451.5 672.9,455.2Q675.3,458.9 677.4,464.3Q679.5,469.8 679.6,474.4Q679.7,479.1 677.6,482.8Q675.5,486.5 672.6,490.8Q669.8,495.2 668.3,500.2Q666.7,505.2 667.8,509.5Q668.8,513.8 671.8,519.0Q674.7,524.1 677.5,530.0Q680.2,535.8 680.6,540.8Q681.0,545.7 678.4,549.7Q675.7,553.7 671.6,558.5Q667.4,563.3 664.3,569.7Q661.1,576.0 661.1,581.4L661.0,586.7"/>
<path stroke="#c99760" stroke-width="3.6" d="M738.8,272.6Q731.9,272.4 728.9,273.5Q725.9,274.6 723.8,276.5Q721.6,278.4 719.9,280.7Q718.3,282.9 716.2,285.0Q714.2,287.0 711.5,288.7Q708.7,290.4 705.9,292.2Q703.0,294.1 701.3,296.5Q699.5,299.0 699.2,302.5Q698.9,306.0 699.1,311.0Q699.3,316.0 698.2,319.4Q697.1,322.7 693.9,323.8Q690.8,324.9 686.7,325.4Q682.5,325.9 679.5,328.6Q676.4,331.3 675.4,334.5Q674.3,337.7 674.3,341.7Q674.3,345.7 673.0,349.3Q671.8,352.8 668.3,355.3Q664.8,357.7 660.6,361.2Q656.3,364.7 654.0,368.5Q651.7,372.2 652.6,376.1Q653.6,379.9 656.2,385.0Q658.9,390.1 660.1,395.7Q661.2,401.3 659.0,404.7Q656.8,408.0 652.5,410.3Q648.3,412.6 645.3,417.1Q642.4,421.6 642.7,426.0Q643.0,430.3 645.2,436.4Q647.4,442.6 647.9,448.0Q648.3,453.5 644.9,457.0Q641.5,460.4 635.8,465.1Q630.1,469.9 626.3,475.7Q622.4,481.4 623.1,486.4Q623.9,491.4 627.9,495.7Q632.0,500.0 635.1,507.0Q638.2,514.1 637.1,519.4Q636.0,524.7 631.8,529.2Q627.5,533.7 624.3,540.3Q621.1,546.9 622.4,552.4Q623.7,557.9 628.4,564.7Q633.1,571.6 636.5,579.1Q639.9,586.7 638.0,592.3L636.2,597.9"/>
<path stroke="#c48f57" stroke-width="2.9" d="M690.5,281.9Q690.0,285.2 688.7,286.6Q687.3,287.9 685.7,290.4Q684.2,292.8 683.8,294.9Q683.5,297.1 684.4,299.1Q685.3,301.0 686.0,303.2Q686.7,305.5 686.2,308.0Q685.6,310.6 684.7,313.4Q683.8,316.3 684.3,318.9Q684.7,321.5 686.4,325.0Q688.1,328.5 689.0,332.1Q689.9,335.7 688.5,338.4Q687.1,341.1 684.5,344.0Q682.0,346.9 680.8,350.6Q679.7,354.4 680.6,357.6Q681.5,360.9 682.4,364.9Q683.2,368.9 682.0,372.5Q680.7,376.1 678.3,380.7Q675.9,385.3 675.4,389.5Q674.9,393.7 677.2,397.5Q679.4,401.2 681.7,406.8Q684.0,412.5 683.3,416.9Q682.6,421.4 679.6,425.0Q676.5,428.6 674.6,433.8Q672.8,439.0 673.9,443.7Q675.0,448.3 676.5,454.4Q678.1,460.4 676.8,465.3Q675.4,470.2 671.5,475.6Q667.6,481.0 665.2,487.0Q662.8,493.1 664.5,498.2Q666.2,503.3 669.4,509.5Q672.7,515.7 673.0,522.0Q673.2,528.4 669.9,533.3Q666.7,538.1 663.9,544.9L661.2,551.6"/>
<path stroke="#c99760" stroke-width="3.8" d="M776.3,260.6Q769.7,266.4 766.9,269.6Q764.0,272.9 762.1,276.9Q760.2,281.0 758.6,285.2Q757.0,289.3 754.4,292.4Q751.8,295.5 748.2,298.7Q744.5,301.8 741.2,305.4Q737.9,309.0 736.8,312.8Q735.6,316.6 736.5,320.3Q737.3,324.0 738.1,328.8Q738.8,333.6 737.4,337.1Q736.1,340.5 733.3,343.2Q730.5,345.9 728.9,349.7Q727.2,353.5 728.3,357.2Q729.4,360.9 731.6,365.8Q733.8,370.6 733.8,374.3Q733.8,377.9 730.5,380.2Q727.2,382.4 723.3,386.9Q719.3,391.4 718.5,395.5Q717.7,399.5 720.8,402.0Q723.9,404.5 727.5,408.0Q731.1,411.4 731.5,414.9Q731.9,418.3 729.3,422.4L726.7,426.4"/>
<path stroke="#c08a52" stroke-width="3.2" d="M800.8,294.4Q802.0,298.8 803.0,300.8Q804.1,302.7 806.1,304.3Q808.1,305.8 810.5,308.1Q812.9,310.4 814.2,312.9Q815.5,315.4 815.2,317.9Q814.8,320.4 814.0,323.3Q813.2,326.2 813.5,329.2Q813.8,332.2 815.4,334.6Q817.0,336.9 818.2,340.0Q819.4,343.0 819.0,346.4Q818.6,349.8 817.5,354.0Q816.4,358.2 816.8,361.7Q817.2,365.1 820.0,367.4Q822.7,369.7 825.9,373.5Q829.0,377.2 830.1,381.1Q831.1,384.9 829.9,388.3Q828.6,391.8 827.5,396.0Q826.3,400.1 827.5,403.9Q828.6,407.6 831.0,412.2Q833.5,416.7 834.3,421.1Q835.2,425.5 833.1,429.5Q830.9,433.4 828.2,439.3Q825.5,445.2 825.5,449.9Q825.6,454.6 828.8,458.2Q832.0,461.7 835.2,466.9Q838.4,472.0 838.4,477.0Q838.4,481.9 836.1,486.8Q833.7,491.6 832.7,497.3Q831.8,503.0 834.2,507.7Q836.7,512.4 840.2,519.0Q843.7,525.5 844.0,531.2Q844.4,536.8 840.7,541.3Q837.0,545.7 833.2,552.9Q829.4,560.1 829.7,565.9Q829.9,571.8 833.6,576.5L837.2,581.3"/>
<path stroke="#c08a52" stroke-width="3.6" d="M841.7,286.1Q845.6,290.5 848.0,292.8Q850.3,295.1 852.2,297.6Q854.1,300.1 854.8,302.9Q855.5,305.7 855.0,309.1Q854.4,312.4 853.7,317.0Q852.9,321.5 853.4,325.0Q853.9,328.5 856.2,330.6Q858.6,332.7 861.8,334.3Q865.0,335.9 867.5,339.1Q869.9,342.3 870.4,345.6Q870.9,349.0 870.1,353.3Q869.4,357.5 869.2,361.7Q869.1,366.0 871.2,368.9Q873.3,371.9 877.3,375.5Q881.2,379.0 884.8,383.5Q888.4,388.0 889.2,392.2Q890.0,396.3 887.7,400.0Q885.3,403.6 881.7,408.5Q878.2,413.4 876.6,418.8Q875.0,424.1 876.8,428.0Q878.7,431.8 882.5,435.3Q886.3,438.7 888.9,444.1Q891.5,449.4 890.6,454.0Q889.7,458.5 886.0,464.0Q882.3,469.4 879.3,475.7L876.2,482.0"/>
<path stroke="#c99760" stroke-width="3.4" d="M757.8,255.5Q749.7,255.4 745.8,255.7Q741.8,256.0 738.1,256.9Q734.3,257.8 730.9,259.4Q727.6,260.9 724.5,262.8Q721.3,264.6 718.2,266.7Q715.1,268.7 711.8,269.9Q708.5,271.2 705.2,272.4Q701.8,273.7 698.9,275.6Q695.9,277.4 693.5,280.3Q691.1,283.2 689.0,286.6Q687.0,290.0 684.6,292.6Q682.2,295.2 679.0,296.6Q675.8,298.0 672.1,299.3Q668.4,300.7 665.1,303.2Q661.8,305.7 659.6,308.8Q657.4,311.9 656.2,315.3Q655.0,318.7 653.9,322.5Q652.7,326.3 650.7,329.6Q648.6,332.9 645.8,336.2Q642.9,339.5 640.4,343.3Q637.8,347.0 636.6,351.0Q635.5,355.0 635.8,359.5Q636.0,364.0 636.5,369.4Q637.0,374.9 636.1,379.4Q635.2,384.0 632.6,387.6Q630.0,391.2 626.9,395.2Q623.8,399.2 621.8,404.3Q619.9,409.3 619.9,414.2Q619.9,419.1 620.8,424.5Q621.8,429.9 621.8,435.5Q621.9,441.1 620.1,446.1Q618.4,451.0 615.7,457.2Q613.1,463.3 611.6,469.6Q610.0,475.8 611.0,481.5Q611.9,487.2 614.6,492.8Q617.3,498.4 619.6,505.4Q621.9,512.5 622.0,518.9Q622.1,525.3 620.3,531.2Q618.4,537.1 618.1,544.2L617.8,551.4"/>
<path stroke="#cd9a62" stroke-width="3.2" d="M671.7,311.5Q668.2,315.8 666.5,318.1Q664.8,320.4 663.6,323.2Q662.4,326.0 661.9,329.2Q661.3,332.5 661.0,335.9Q660.7,339.3 660.0,342.5Q659.3,345.6 657.7,348.3Q656.0,351.0 653.6,354.0Q651.2,357.1 648.7,360.8Q646.2,364.6 644.7,368.3Q643.2,372.0 643.2,375.6Q643.3,379.1 644.7,382.4Q646.2,385.6 648.0,389.4Q649.9,393.2 650.9,397.6Q652.0,401.9 651.5,405.7Q651.0,409.5 649.3,412.9Q647.6,416.3 645.9,420.7Q644.2,425.1 643.7,429.5Q643.2,433.9 644.7,437.7Q646.1,441.5 648.8,446.4Q651.5,451.2 654.0,456.3Q656.5,461.4 657.2,466.0Q657.9,470.6 656.2,474.6Q654.6,478.7 651.5,483.0Q648.4,487.4 645.7,493.7Q643.0,500.0 642.5,505.5Q641.9,511.0 644.1,515.3L646.3,519.6"/>
<path stroke="#cd9a62" stroke-width="3.6" d="M736.4,276.1Q732.1,277.9 730.2,279.1Q728.2,280.3 726.9,282.0Q725.5,283.7 725.0,285.8Q724.4,287.8 724.3,290.7Q724.1,293.5 723.8,296.4Q723.4,299.2 722.2,301.2Q721.0,303.3 719.0,304.6Q717.0,306.0 714.9,307.6Q712.8,309.1 711.4,311.5Q710.0,313.8 709.5,316.9Q709.1,320.0 709.0,323.5Q708.9,327.0 708.2,330.1Q707.4,333.1 705.4,335.5Q703.4,337.8 700.5,340.6Q697.5,343.5 694.8,347.1Q692.0,350.7 690.7,354.3Q689.5,358.0 690.0,361.5Q690.5,365.1 692.0,368.6Q693.5,372.1 694.5,376.9Q695.4,381.7 694.8,385.8Q694.1,389.9 692.1,393.4Q690.0,397.0 688.0,401.5Q685.9,406.1 685.2,410.7Q684.6,415.3 685.8,419.8Q687.0,424.3 689.0,430.2Q691.0,436.1 692.0,441.7Q693.1,447.2 691.8,451.9Q690.5,456.6 687.3,460.7Q684.1,464.8 680.7,470.9Q677.3,477.1 675.8,483.1Q674.3,489.1 675.3,494.5Q676.4,499.9 679.0,504.8Q681.6,509.8 683.6,516.5Q685.6,523.1 685.4,529.2Q685.2,535.3 682.9,541.2Q680.5,547.1 678.1,554.5Q675.6,561.9 675.1,568.7Q674.7,575.6 677.1,581.5Q679.6,587.4 683.7,594.5L687.8,601.7"/>
<path stroke="#c48f57" stroke-width="3.3" d="M827.4,268.0Q831.5,269.9 832.1,271.8Q832.8,273.8 831.8,277.9Q830.9,282.1 831.0,285.1Q831.1,288.2 833.9,287.9Q836.7,287.7 840.0,287.8Q843.2,287.8 844.2,289.9Q845.2,292.0 845.4,295.1Q845.6,298.2 848.3,299.6Q850.9,301.1 855.2,303.3Q859.5,305.6 860.8,308.4Q862.1,311.1 859.3,314.1Q856.5,317.1 854.5,322.3Q852.4,327.4 854.8,329.4Q857.2,331.5 860.7,333.5Q864.2,335.4 863.9,339.1Q863.6,342.8 861.4,348.2Q859.2,353.6 861.3,356.5Q863.3,359.4 869.7,362.1Q876.0,364.8 879.5,369.2Q883.0,373.6 880.0,377.1Q877.1,380.7 873.6,385.8Q870.0,390.9 872.1,394.5Q874.2,398.2 878.5,402.7Q882.7,407.3 881.6,411.7Q880.6,416.0 875.3,422.9Q870.1,429.8 869.5,435.2Q868.9,440.6 875.7,443.0Q882.5,445.4 888.1,452.0Q893.6,458.6 891.3,463.2Q889.0,467.9 884.4,473.8Q879.9,479.6 881.9,484.6Q883.9,489.6 890.0,496.5Q896.0,503.5 895.9,509.4Q895.7,515.2 888.1,521.3Q880.5,527.4 876.3,535.3Q872.2,543.2 877.7,547.5Q883.2,551.9 890.0,558.9Q896.7,565.9 894.8,571.9Q892.9,578.0 886.8,585.5L880.7,593.1"/>
<path stroke="#c99760" stroke-width="3.7" d="M768.8,279.1Q765.3,282.5 763.5,284.4Q761.8,286.2 760.7,288.4Q759.6,290.5 759.3,293.1Q758.9,295.7 758.7,299.0Q758.5,302.2 757.5,304.7Q756.6,307.2 754.6,309.0Q752.7,310.8 750.6,312.6Q748.4,314.4 747.1,317.1Q745.7,319.8 745.2,322.8Q744.7,325.8 744.2,329.0Q743.7,332.3 742.1,334.9Q740.6,337.6 738.2,340.9Q735.9,344.1 734.1,347.6Q732.3,351.0 732.2,354.4Q732.1,357.8 733.3,361.2Q734.4,364.6 735.2,369.0Q736.0,373.5 735.1,377.1Q734.3,380.7 732.3,383.9Q730.4,387.1 729.0,391.1Q727.7,395.2 728.0,399.2Q728.3,403.3 729.4,408.2Q730.5,413.2 730.5,417.7Q730.6,422.2 728.5,425.9Q726.5,429.6 723.7,434.6Q720.9,439.5 719.6,444.6Q718.3,449.6 719.5,454.0Q720.7,458.4 722.9,463.1Q725.0,467.7 725.8,473.1Q726.6,478.5 725.3,483.2Q723.9,487.9 722.1,493.6Q720.3,499.3 720.5,504.7Q720.6,510.0 723.0,515.3Q725.4,520.6 727.9,527.0Q730.3,533.4 730.4,539.1Q730.5,544.8 728.0,549.7Q725.4,554.7 722.9,561.6Q720.3,568.5 720.4,574.7Q720.4,580.9 723.1,586.2Q725.7,591.5 728.3,598.1L730.8,604.7"/>
<path stroke="#c48f57" stroke-width="3.9" d="M878.3,304.2Q882.6,305.7 884.9,306.2Q887.1,306.8 889.4,307.6Q891.6,308.4 893.5,309.8Q895.5,311.2 896.7,313.6Q898.0,316.0 898.6,319.3Q899.3,322.6 899.9,325.8Q900.5,328.9 901.9,331.0Q903.3,333.2 906.0,334.3Q908.6,335.4 912.2,336.2Q915.7,337.0 919.2,339.8Q922.6,342.7 924.8,346.0Q927.0,349.3 927.5,352.9Q928.0,356.5 927.4,360.1Q926.8,363.8 926.3,368.4Q925.9,373.1 926.8,377.3Q927.7,381.5 930.3,385.3Q932.8,389.1 935.8,394.2Q938.8,399.3 939.9,404.6Q941.0,409.9 941.4,415.0Q941.9,420.1 940.6,424.9Q939.3,429.7 936.1,436.6Q932.9,443.5 930.9,450.4Q928.8,457.4 929.3,463.4Q929.9,469.4 933.0,474.6Q936.1,479.8 940.2,485.7L944.3,491.6"/>
<path stroke="#c48f57" stroke-width="3.9" d="M781.7,242.0Q779.1,243.0 777.2,242.7Q775.3,242.4 773.5,243.0Q771.6,243.6 770.4,244.9Q769.3,246.3 768.5,248.0Q767.7,249.6 766.4,251.2Q765.2,252.9 763.1,254.5Q761.1,256.2 759.2,258.1Q757.4,260.0 756.8,262.2Q756.3,264.5 757.0,267.2Q757.7,269.9 758.1,273.4Q758.5,276.9 757.4,279.3Q756.2,281.7 753.9,283.5Q751.7,285.2 750.0,287.9Q748.3,290.5 748.1,293.8Q748.0,297.0 748.2,300.9Q748.4,304.8 747.1,307.9Q745.9,311.0 742.9,313.9Q740.0,316.8 737.2,320.7Q734.5,324.6 734.0,328.4Q733.5,332.2 735.0,335.8Q736.5,339.4 737.5,344.3Q738.5,349.2 737.3,353.2Q736.1,357.2 733.7,361.1Q731.2,365.1 730.0,369.7Q728.8,374.4 730.0,379.3Q731.1,384.1 732.7,390.1Q734.2,396.0 733.3,400.8Q732.4,405.7 728.8,409.6Q725.3,413.5 722.0,419.5Q718.6,425.5 718.2,430.9Q717.8,436.4 719.8,441.3Q721.8,446.3 723.0,452.8Q724.2,459.2 722.5,464.6Q720.8,470.0 717.8,476.5Q714.7,483.0 713.9,489.3Q713.0,495.6 715.4,501.5Q717.9,507.3 720.8,515.3Q723.7,523.2 723.4,529.9Q723.1,536.6 719.4,542.1Q715.7,547.6 712.2,555.1Q708.7,562.7 708.7,569.7L708.7,576.8"/>
<path stroke="#c08a52" stroke-width="3.9" d="M761.8,312.0Q758.1,317.4 756.1,320.2Q754.1,323.0 752.7,325.8Q751.3,328.7 751.1,331.6Q750.9,334.6 751.9,337.5Q752.8,340.4 753.9,344.7Q754.9,349.0 755.0,352.7Q755.1,356.4 753.7,359.3Q752.3,362.1 750.0,364.4Q747.7,366.8 745.7,369.6Q743.8,372.5 743.1,375.9Q742.5,379.3 743.1,383.4Q743.6,387.6 744.1,391.8Q744.6,396.0 743.7,399.5Q742.7,403.0 739.9,405.6Q737.1,408.2 733.6,412.6Q730.0,416.9 727.5,421.2Q725.1,425.5 725.1,429.4Q725.1,433.3 727.3,436.7Q729.5,440.2 732.1,444.6Q734.6,449.1 735.5,453.9Q736.3,458.7 734.8,462.4Q733.2,466.1 730.4,469.8Q727.5,473.6 725.7,478.4Q723.9,483.2 724.6,487.4Q725.3,491.6 728.1,496.6Q730.9,501.7 733.6,507.6Q736.2,513.4 736.4,518.2Q736.5,523.0 733.3,526.6Q730.1,530.2 725.4,534.7Q720.6,539.3 717.2,545.3Q713.8,551.2 713.9,556.2Q713.9,561.2 717.1,565.2Q720.3,569.2 723.9,574.4Q727.6,579.6 728.8,585.3Q730.0,590.9 727.8,595.5Q725.6,600.0 721.8,606.0L717.9,612.1"/>
<path stroke="#b98450" stroke-width="3.0" d="M815.9,245.1Q806.9,248.3 802.4,249.8Q798.0,251.3 793.5,252.4Q789.1,253.5 784.6,254.1Q780.1,254.8 775.7,255.6Q771.2,256.5 766.9,257.8Q762.6,259.2 758.6,260.9Q754.5,262.6 750.8,264.7Q747.0,266.7 743.4,268.9Q739.9,271.1 736.3,273.3Q732.6,275.5 728.9,277.4Q725.2,279.4 721.4,281.4Q717.6,283.4 714.1,285.7Q710.6,287.9 707.5,290.6Q704.5,293.3 701.9,296.4Q699.3,299.5 697.0,303.3Q694.7,307.1 692.2,310.4Q689.7,313.8 686.7,316.3Q683.7,318.8 680.3,320.8Q676.9,322.9 673.6,325.4Q670.2,327.9 667.4,331.0Q664.6,334.2 662.6,337.7Q660.5,341.1 658.9,345.0Q657.4,348.9 655.7,352.8Q653.9,356.8 651.6,360.2Q649.3,363.6 646.4,366.8Q643.5,370.1 640.6,373.9Q637.7,377.7 635.5,381.7Q633.4,385.7 632.4,389.9Q631.4,394.0 631.3,398.3Q631.2,402.6 631.1,407.8Q631.1,413.0 630.2,417.6Q629.3,422.3 627.5,426.3Q625.6,430.3 623.2,434.3Q620.8,438.2 619.0,443.1Q617.1,448.0 616.4,452.8Q615.7,457.6 616.1,462.6L616.5,467.5"/>
<path stroke="#b98450" stroke-width="4.0" d="M789.7,262.9Q792.6,265.8 794.7,267.1Q796.7,268.5 799.2,270.1Q801.7,271.7 803.3,273.8Q805.0,276.0 804.8,278.6Q804.6,281.1 803.7,284.9Q802.8,288.6 803.3,291.6Q803.8,294.6 806.2,296.6Q808.6,298.5 810.6,301.4Q812.7,304.3 812.6,307.8Q812.5,311.4 811.4,316.0Q810.2,320.7 811.0,324.4Q811.8,328.2 815.4,331.5Q818.9,334.8 822.2,339.9Q825.5,344.9 825.2,349.4Q825.0,353.9 821.9,358.0Q818.8,362.1 817.0,368.0Q815.2,373.8 817.1,378.4Q818.9,383.0 821.8,388.9Q824.7,394.9 824.2,400.5Q823.7,406.0 819.8,412.2L815.8,418.3"/>
<path stroke="#c99760" stroke-width="4.1" d="M775.2,239.0Q772.0,240.0 771.9,241.4Q771.7,242.9 772.8,245.0Q774.0,247.2 774.6,249.7Q775.3,252.2 774.3,253.0Q773.3,253.7 771.4,254.0Q769.6,254.4 768.9,255.9Q768.2,257.4 768.9,260.0Q769.5,262.7 769.5,264.9Q769.5,267.1 767.0,267.8Q764.5,268.5 760.7,270.6Q756.9,272.8 754.9,275.4Q752.8,278.0 754.1,280.3Q755.3,282.6 757.7,285.2Q760.1,287.8 760.5,291.0Q760.8,294.2 758.7,296.5Q756.6,298.8 754.9,302.2Q753.3,305.6 754.7,308.7Q756.2,311.9 759.2,316.9Q762.2,321.9 762.8,325.8Q763.3,329.8 759.8,332.1Q756.2,334.3 751.5,338.4Q746.9,342.4 745.6,346.8Q744.2,351.1 746.7,354.6Q749.2,358.0 751.5,362.6Q753.7,367.2 752.3,371.3Q750.8,375.3 747.2,380.9Q743.6,386.5 742.7,391.6Q741.9,396.7 745.8,400.5Q749.6,404.3 754.5,411.3Q759.3,418.2 759.7,423.7Q760.1,429.2 755.6,433.0Q751.1,436.9 747.0,443.1Q742.8,449.3 743.6,454.8Q744.3,460.3 748.2,466.1Q752.1,471.9 753.4,478.4Q754.6,484.9 750.7,490.5Q746.7,496.0 741.8,504.2Q736.9,512.4 737.3,518.9Q737.7,525.4 743.7,530.1Q749.7,534.8 755.1,543.4Q760.4,552.0 759.6,558.6Q758.7,565.3 753.7,571.4Q748.6,577.4 746.4,585.7Q744.1,593.9 747.9,600.3Q751.7,606.7 757.0,615.9L762.2,625.1"/>
<path stroke="#b98450" stroke-width="3.4" d="M798.7,291.0Q799.5,296.2 799.7,298.8Q800.0,301.5 800.3,304.2Q800.7,307.0 801.5,309.8Q802.3,312.7 803.5,315.7Q804.6,318.8 805.8,321.9Q806.9,325.0 807.6,328.1Q808.2,331.2 808.0,334.2Q807.8,337.2 807.0,340.1Q806.2,343.0 805.3,346.7Q804.4,350.4 804.0,354.0Q803.7,357.7 804.3,361.0Q804.8,364.3 806.1,367.4Q807.3,370.5 808.6,373.7Q809.8,376.9 810.5,380.6Q811.1,384.3 810.9,388.0Q810.7,391.6 810.1,395.9Q809.4,400.1 809.1,404.2Q808.8,408.4 809.5,412.1Q810.2,415.9 812.0,419.2Q813.8,422.6 816.0,427.0Q818.2,431.4 819.9,435.9Q821.5,440.4 821.8,444.6Q822.2,448.8 821.2,452.7Q820.2,456.6 818.6,460.6Q817.1,464.7 816.2,469.7Q815.2,474.6 815.6,479.1Q815.9,483.6 817.5,487.6Q819.0,491.7 820.8,496.5Q822.6,501.3 823.5,506.1Q824.4,511.0 823.8,515.5Q823.2,520.1 821.5,525.2Q819.9,530.4 818.3,536.1Q816.8,541.9 816.6,547.1Q816.4,552.3 818.1,556.8Q819.7,561.3 822.6,565.6Q825.5,569.8 828.2,575.7Q830.9,581.6 832.1,587.2Q833.2,592.7 832.4,597.8Q831.7,602.8 829.7,607.6L827.8,612.4"/>
<path stroke="#b98450" stroke-width="4.1" d="M761.4,310.1Q757.9,317.9 756.9,321.7Q755.9,325.5 755.9,329.2Q755.9,332.9 756.7,337.2Q757.4,341.5 758.2,346.3Q759.1,351.1 759.1,355.2Q759.1,359.2 757.8,362.5Q756.5,365.7 754.1,368.3Q751.7,370.9 749.2,373.8Q746.7,376.7 745.1,380.5Q743.6,384.3 743.7,387.7Q743.9,391.1 745.5,394.5Q747.1,397.9 749.1,402.1Q751.1,406.3 752.1,409.9Q753.0,413.5 751.9,416.4Q750.8,419.3 747.9,422.1Q744.9,425.0 741.5,430.1Q738.1,435.1 736.2,439.8L734.2,444.4"/>
<path stroke="#b98450" stroke-width="3.0" d="M762.8,258.2Q759.8,262.5 758.1,264.6Q756.4,266.7 755.3,269.3Q754.2,272.0 753.9,275.2Q753.6,278.5 753.3,281.8Q753.0,285.1 751.8,287.8Q750.5,290.5 747.8,292.3Q745.2,294.1 741.9,297.3Q738.6,300.5 736.1,303.8Q733.7,307.1 733.2,310.3Q732.6,313.6 733.8,316.7Q734.9,319.8 736.3,323.4Q737.6,326.9 737.6,330.8Q737.6,334.7 735.8,337.7Q734.1,340.6 731.8,344.1Q729.6,347.5 728.6,351.3Q727.5,355.0 728.6,358.7Q729.6,362.5 731.7,367.8Q733.8,373.1 734.8,377.8Q735.8,382.5 734.1,385.9Q732.4,389.2 728.4,391.5Q724.4,393.8 720.3,398.3Q716.2,402.8 714.4,407.2Q712.5,411.7 713.6,415.6Q714.7,419.5 717.1,423.4Q719.5,427.2 720.5,432.3Q721.5,437.4 719.7,441.3Q718.0,445.1 714.5,450.1Q711.0,455.0 708.5,460.1Q706.0,465.3 706.8,469.7Q707.6,474.1 711.4,478.3Q715.1,482.5 719.1,489.2Q723.0,495.9 724.0,501.3Q725.0,506.8 722.1,510.6Q719.1,514.5 714.2,518.1Q709.3,521.7 705.9,527.8Q702.6,533.8 703.1,538.8Q703.6,543.8 706.9,548.4Q710.2,553.0 713.0,559.5Q715.8,566.0 715.0,571.2Q714.3,576.3 709.9,581.1Q705.5,585.8 700.6,592.9L695.7,600.0"/>
<path stroke="#b98450" stroke-width="3.9" d="M774.1,247.8Q775.1,249.5 776.3,250.1Q777.5,250.8 778.9,252.1Q780.3,253.4 781.1,255.1Q782.0,256.8 782.0,258.4Q781.9,260.0 781.3,261.5Q780.7,263.0 780.2,264.8Q779.7,266.5 780.0,268.6Q780.3,270.7 781.1,273.1Q781.9,275.6 782.6,278.1Q783.2,280.6 782.8,282.9Q782.4,285.2 780.9,287.4Q779.4,289.5 777.6,292.9Q775.7,296.2 774.7,299.4Q773.7,302.6 774.1,305.4Q774.6,308.3 776.2,310.9Q777.8,313.4 779.3,316.8Q780.8,320.1 781.1,323.6Q781.5,327.2 780.5,330.4Q779.5,333.7 778.2,337.6Q776.9,341.5 776.6,345.4Q776.3,349.3 777.5,353.0Q778.7,356.7 780.7,361.6Q782.6,366.5 783.8,371.3Q784.9,376.0 784.0,380.2Q783.2,384.3 780.7,388.0Q778.1,391.6 775.4,396.7Q772.7,401.9 771.5,407.0Q770.3,412.1 771.2,416.8Q772.1,421.4 774.0,425.9Q775.9,430.5 776.9,436.2Q778.0,442.0 777.1,447.1Q776.2,452.2 773.8,457.9Q771.4,463.5 769.4,469.7Q767.4,475.9 767.5,481.6Q767.6,487.3 769.9,492.5Q772.2,497.6 775.1,504.9Q778.0,512.1 779.3,518.9Q780.5,525.8 779.0,531.7Q777.5,537.6 774.1,542.8Q770.7,548.1 767.8,555.3Q764.8,562.6 764.2,569.4Q763.6,576.3 765.4,582.6Q767.1,588.9 769.3,596.6L771.4,604.4"/>
<path stroke="#b98450" stroke-width="3.0" d="M753.9,268.0Q753.5,270.0 753.7,271.0Q753.8,272.1 753.3,273.4Q752.8,274.7 751.9,276.3Q751.0,277.9 751.0,279.4Q751.0,281.0 752.2,282.7Q753.5,284.4 754.7,286.9Q755.9,289.5 755.4,291.4Q754.9,293.3 753.4,295.0Q751.8,296.6 751.0,299.0Q750.2,301.4 750.8,304.0Q751.3,306.6 751.5,309.5Q751.8,312.4 750.3,315.0Q748.9,317.7 746.9,321.2Q744.9,324.7 744.8,327.9Q744.7,331.1 746.6,333.9Q748.5,336.6 749.9,340.8Q751.4,345.0 750.6,348.4Q749.8,351.8 748.1,355.4Q746.4,358.9 746.5,362.8Q746.5,366.8 748.1,371.5Q749.8,376.2 750.2,380.8Q750.6,385.3 748.2,389.0Q745.9,392.6 743.1,398.0Q740.3,403.4 740.3,408.2Q740.2,413.0 742.5,417.2Q744.8,421.4 745.9,427.1Q747.0,432.7 745.4,437.5Q743.7,442.3 741.9,448.3Q740.1,454.2 741.2,459.4Q742.3,464.6 745.2,471.2Q748.0,477.8 748.5,484.0Q749.1,490.2 746.0,495.2Q743.0,500.2 739.9,507.1Q736.9,514.0 737.4,520.2Q737.9,526.4 740.4,532.8Q743.0,539.1 743.3,546.0Q743.5,552.9 740.6,559.7Q737.7,566.6 735.7,574.3Q733.7,581.9 735.8,588.4L738.0,594.8"/>
<path stroke="#b98450" stroke-width="3.5" d="M745.1,246.0Q752.3,246.4 755.9,247.0Q759.4,247.6 762.8,248.7Q766.1,249.8 769.3,251.0Q772.5,252.3 775.7,253.5Q778.9,254.8 782.2,256.0Q785.4,257.1 788.7,258.4Q792.0,259.6 795.1,261.2Q798.2,262.7 801.0,264.7Q803.7,266.7 806.1,269.5Q808.5,272.3 810.7,275.4Q812.9,278.4 815.4,281.0Q817.9,283.5 820.9,285.2Q823.8,287.0 827.2,288.3Q830.5,289.6 833.7,291.8Q837.0,293.9 839.7,296.7Q842.4,299.4 844.4,302.6Q846.5,305.7 848.2,309.2Q849.8,312.7 851.8,316.3Q853.7,319.9 856.3,322.9Q858.9,325.9 861.9,329.2Q865.0,332.6 867.9,336.3Q870.7,340.0 872.7,343.9Q874.7,347.9 875.5,352.0Q876.4,356.2 876.7,361.1Q876.9,366.0 877.5,371.2Q878.1,376.4 879.8,380.9Q881.4,385.3 884.0,389.2Q886.7,393.1 889.5,397.3Q892.3,401.5 894.4,406.6Q896.5,411.6 897.3,416.7Q898.2,421.8 898.2,427.5Q898.2,433.2 898.5,439.2Q898.7,445.2 900.1,450.6Q901.5,456.0 904.2,460.9Q906.8,465.9 909.7,472.1Q912.6,478.4 914.6,484.7Q916.6,491.0 916.9,497.1Q917.1,503.3 916.1,509.2Q915.0,515.2 913.7,522.2L912.5,529.3"/>
<path stroke="#c08a52" stroke-width="3.7" d="M710.2,301.4Q702.3,303.0 698.9,304.5Q695.5,306.1 692.7,308.3Q689.9,310.5 687.4,312.9Q684.8,315.3 682.1,317.4Q679.3,319.5 676.0,321.3Q672.7,323.2 669.3,325.1Q665.9,327.0 663.1,329.4Q660.4,331.9 659.1,335.0Q657.8,338.1 657.6,342.6Q657.5,347.2 657.4,352.2Q657.3,357.3 656.0,360.6Q654.6,364.0 651.4,365.4Q648.3,366.9 644.1,367.8Q640.0,368.6 636.5,371.6Q633.1,374.5 631.6,378.0Q630.1,381.6 630.4,385.3Q630.7,389.1 631.1,393.9Q631.5,398.8 630.2,402.4Q628.9,406.1 625.4,409.0Q622.0,411.9 617.7,416.5Q613.5,421.0 610.8,425.7Q608.2,430.3 608.7,434.6Q609.3,438.8 612.7,442.5Q616.0,446.1 619.6,452.1Q623.3,458.0 624.6,463.3Q625.9,468.6 624.0,472.7Q622.0,476.7 618.4,480.4Q614.7,484.0 612.3,490.0Q609.8,496.0 610.6,501.0Q611.4,506.0 615.1,511.1Q618.8,516.1 622.6,522.5Q626.5,528.9 627.4,534.5Q628.4,540.1 625.5,544.9Q622.6,549.7 621.4,556.8Q620.2,563.8 620.8,571.8L621.3,579.8"/>
<path stroke="#b98450" stroke-width="2.8" d="M795.0,224.8Q802.0,226.9 805.5,227.9Q809.0,229.0 812.4,230.1Q815.9,231.2 819.1,232.7Q822.4,234.2 825.2,236.2Q828.0,238.2 830.3,241.4Q832.7,244.6 835.0,247.7Q837.3,250.7 840.0,252.8Q842.7,254.8 846.0,255.9Q849.4,257.0 852.9,258.1Q856.5,259.3 859.6,261.7Q862.7,264.0 865.0,267.0Q867.2,269.9 868.7,273.2Q870.2,276.5 871.8,280.3Q873.4,284.1 875.8,287.0Q878.2,289.9 881.5,292.9Q884.8,295.8 888.0,299.3Q891.2,302.8 893.3,306.7Q895.3,310.6 895.7,314.7Q896.0,318.8 895.4,323.7Q894.8,328.6 894.8,334.0Q894.7,339.3 896.2,343.6Q897.7,347.9 900.6,351.4Q903.6,354.9 906.7,359.3Q909.7,363.7 911.3,368.8Q912.9,373.8 912.6,378.8Q912.3,383.7 911.1,389.9L909.9,396.0"/>
<path stroke="#b98450" stroke-width="3.0" d="M712.9,311.5Q706.1,313.5 702.3,313.5Q698.5,313.5 694.5,313.8Q690.5,314.2 687.0,315.8Q683.4,317.3 680.5,319.6Q677.7,321.8 675.5,324.5Q673.3,327.2 671.3,329.9Q669.2,332.6 666.5,335.1Q663.8,337.5 660.5,339.8Q657.2,342.1 653.8,344.5Q650.4,347.0 648.0,349.9Q645.6,352.8 644.8,356.3Q644.0,359.7 644.5,364.1Q644.9,368.5 645.4,373.7Q645.9,378.9 644.9,382.7Q644.0,386.5 641.2,388.8Q638.4,391.1 634.6,392.8Q630.8,394.4 627.7,398.0Q624.6,401.5 623.4,405.4Q622.3,409.3 623.0,413.4Q623.7,417.5 624.6,422.7Q625.6,427.9 625.1,432.2Q624.5,436.5 621.6,439.6Q618.8,442.8 614.7,447.7Q610.5,452.6 607.5,458.0Q604.4,463.3 604.2,468.1Q604.0,472.8 606.9,476.8Q609.8,480.8 613.8,485.7Q617.9,490.7 620.4,496.6Q623.0,502.5 622.5,507.4Q622.0,512.3 619.1,516.6Q616.3,520.8 614.5,526.9Q612.7,533.0 613.8,538.9Q614.9,544.7 616.9,549.3Q618.9,553.8 622.3,560.3L625.7,566.8"/>
<path stroke="#cd9a62" stroke-width="2.9" d="M812.6,258.8Q818.1,260.6 820.6,261.9Q823.0,263.3 825.5,264.8Q828.0,266.2 830.9,267.4Q833.8,268.6 837.0,269.9Q840.2,271.2 843.1,273.0Q846.0,274.8 847.8,277.4Q849.6,280.0 850.2,283.1Q850.8,286.3 851.2,290.8Q851.6,295.4 853.0,298.7Q854.4,302.0 857.3,304.0Q860.1,306.0 863.4,308.0Q866.7,310.1 869.0,313.7Q871.3,317.2 871.8,321.1Q872.3,325.1 872.0,330.4Q871.7,335.7 872.5,340.3Q873.4,344.8 876.4,348.0Q879.4,351.3 883.8,355.4Q888.2,359.5 891.6,364.7Q895.0,369.8 895.7,374.9Q896.3,380.0 894.4,384.8Q892.5,389.7 890.4,396.1Q888.3,402.6 888.6,408.6Q888.9,414.5 891.8,419.4L894.8,424.2"/>
<path stroke="#cd9a62" stroke-width="3.4" d="M770.8,297.5Q770.1,301.3 771.5,302.5Q772.9,303.8 774.9,304.9Q776.9,306.1 777.9,308.3Q778.9,310.6 778.4,312.6Q778.0,314.7 777.5,317.3Q777.1,319.8 778.1,322.2Q779.1,324.6 781.5,327.9Q783.8,331.2 785.2,334.4Q786.7,337.6 785.5,340.1Q784.2,342.6 781.0,345.1Q777.8,347.5 775.4,351.6Q773.0,355.7 773.4,358.8Q773.9,361.9 776.3,364.5Q778.7,367.1 780.1,370.8Q781.4,374.5 780.1,378.0Q778.7,381.6 776.3,386.2Q773.9,390.9 773.6,394.9Q773.4,399.0 776.6,402.0Q779.9,405.0 784.0,410.7Q788.1,416.4 789.2,421.2Q790.3,426.0 787.1,429.3Q784.0,432.7 779.9,437.1Q775.7,441.5 774.5,446.6Q773.4,451.7 776.0,455.7Q778.6,459.6 781.2,465.6Q783.9,471.5 782.8,476.3Q781.7,481.1 777.1,486.6Q772.6,492.2 769.1,498.7Q765.6,505.2 767.1,510.2Q768.7,515.2 774.2,519.9Q779.6,524.6 783.7,532.0Q787.8,539.5 786.5,545.0Q785.3,550.5 780.3,555.0Q775.3,559.5 772.2,566.6Q769.0,573.7 771.2,579.3L773.3,584.9"/>
<path stroke="#c48f57" stroke-width="3.7" d="M771.2,274.7Q771.1,280.3 771.8,283.0Q772.5,285.8 771.9,288.8Q771.4,291.9 769.8,295.2Q768.3,298.5 768.3,301.6Q768.3,304.7 770.9,308.3Q773.5,311.9 775.8,316.4Q778.1,320.9 776.8,323.9Q775.6,326.8 771.8,328.9Q768.0,330.9 765.9,334.9Q763.9,338.9 765.3,342.0Q766.6,345.2 768.0,349.4Q769.4,353.7 767.2,356.9Q764.9,360.2 760.9,365.1Q756.8,370.0 756.4,374.0Q755.9,377.9 760.4,380.7Q764.9,383.5 769.0,389.3Q773.1,395.1 771.7,398.7Q770.4,402.4 765.8,405.5Q761.3,408.6 760.1,413.2Q759.0,417.7 762.7,422.3Q766.4,426.8 768.9,432.2Q771.4,437.6 767.5,440.7Q763.6,443.7 757.1,449.7Q750.6,455.8 749.5,460.7Q748.5,465.7 754.4,468.4Q760.2,471.2 765.1,477.4Q770.0,483.7 767.7,487.7L765.3,491.7"/>
<path stroke="#c08a52" stroke-width="3.6" d="M774.3,284.4Q762.5,290.3 757.1,293.9Q751.7,297.5 747.0,301.4Q742.2,305.3 738.1,309.2Q733.9,313.2 729.9,317.2Q726.0,321.3 721.8,324.6Q717.6,328.0 713.1,330.9Q708.6,333.9 703.9,336.6Q699.3,339.4 695.2,342.3Q691.0,345.2 688.0,348.4Q685.0,351.7 683.3,355.4Q681.7,359.1 680.9,363.6Q680.2,368.2 679.4,373.2Q678.7,378.2 677.1,381.5Q675.5,384.8 672.7,386.2Q669.9,387.6 666.3,387.9Q662.7,388.3 659.4,390.1Q656.2,391.8 654.5,394.2Q652.8,396.6 653.0,399.0Q653.3,401.4 654.8,404.8Q656.3,408.3 657.5,411.2Q658.8,414.1 658.2,415.5Q657.7,416.9 655.0,417.4Q652.3,418.0 648.7,420.8L645.1,423.7"/>
<path stroke="#a57246" stroke-width="4.3" d="M820.8,247.8Q830.1,253.8 834.2,257.0Q838.4,260.2 841.8,263.7Q845.3,267.1 848.0,270.7Q850.7,274.3 852.9,278.1Q855.1,281.9 857.2,285.9Q859.2,289.9 861.5,293.1Q863.7,296.4 866.2,299.0Q868.8,301.6 871.3,304.2Q873.9,306.8 876.0,309.9Q878.0,313.1 879.0,316.3Q880.0,319.5 879.7,322.8Q879.5,326.2 878.5,330.0Q877.5,333.8 876.6,337.1Q875.7,340.5 875.6,343.3Q875.5,346.1 876.5,348.6Q877.5,351.1 879.1,354.3Q880.6,357.4 881.6,362.0Q882.7,366.7 882.2,370.8L881.7,374.9"/>
<path stroke="#8a613e" stroke-width="3.5" d="M739.0,247.4Q737.5,249.5 737.1,250.7Q736.7,252.0 735.8,253.0Q734.9,254.0 733.6,255.1Q732.4,256.1 731.9,257.6Q731.5,259.0 732.2,261.6Q733.0,264.2 733.5,266.8Q734.0,269.4 732.7,270.6Q731.4,271.8 728.7,272.4Q726.0,273.0 724.1,275.2Q722.2,277.4 722.2,279.7Q722.2,282.0 722.6,284.5Q723.0,287.1 721.8,289.6Q720.7,292.1 718.3,295.2Q716.0,298.3 715.0,301.4Q714.0,304.5 715.7,307.2Q717.4,309.9 719.7,314.3Q722.0,318.7 722.0,322.3Q722.0,325.9 719.4,328.5Q716.9,331.1 714.9,334.8Q712.8,338.5 713.4,342.2Q714.0,345.9 715.6,350.8Q717.1,355.6 716.4,359.7Q715.6,363.8 712.3,368.1Q709.0,372.5 706.5,377.8Q704.0,383.1 705.4,387.4Q706.7,391.8 710.1,396.3Q713.6,400.9 714.9,406.6Q716.3,412.2 714.2,416.7Q712.0,421.2 709.8,426.9Q707.6,432.6 708.7,437.8Q709.8,443.0 713.1,449.6Q716.3,456.2 717.1,462.4Q718.0,468.6 714.6,473.5Q711.2,478.4 707.2,485.9Q703.3,493.4 703.5,499.8Q703.7,506.2 707.5,511.4Q711.3,516.6 713.8,524.1Q716.2,531.5 714.4,537.8Q712.6,544.0 709.6,552.1Q706.6,560.1 707.6,567.1Q708.5,574.1 713.4,581.3L718.2,588.6"/>
<path stroke="#8c6340" stroke-width="2.9" d="M759.1,238.5Q756.2,244.2 756.3,246.9Q756.3,249.6 757.3,252.2Q758.3,254.8 758.8,257.9Q759.2,261.1 758.5,263.9Q757.8,266.8 756.6,269.6Q755.5,272.5 755.5,275.7Q755.4,278.8 756.6,282.8Q757.7,286.7 758.3,290.5Q759.0,294.3 757.6,297.1Q756.3,299.9 753.3,302.4Q750.3,304.9 747.9,308.8Q745.5,312.7 745.3,316.1Q745.2,319.6 746.6,322.7Q748.0,325.8 748.6,329.5Q749.2,333.2 747.8,336.9Q746.3,340.5 744.4,344.7Q742.5,348.9 742.5,352.6Q742.5,356.3 745.0,360.1Q747.5,363.9 750.1,369.0Q752.6,374.1 752.3,378.1Q752.0,382.1 748.9,385.0Q745.9,387.9 743.0,392.2Q740.1,396.6 740.0,400.7Q739.9,404.9 741.9,408.9Q744.0,412.9 744.9,417.7Q745.8,422.4 743.6,426.3Q741.4,430.2 738.1,435.7Q734.7,441.2 733.9,446.0Q733.1,450.8 736.1,454.4Q739.2,458.0 743.2,463.4Q747.3,468.8 748.3,473.9Q749.2,479.0 746.5,482.9Q743.7,486.7 740.6,491.6Q737.5,496.5 737.8,501.4Q738.1,506.2 741.4,511.4Q744.6,516.6 746.5,522.4Q748.5,528.1 746.1,532.4Q743.8,536.7 739.0,542.6Q734.2,548.5 731.9,554.6Q729.6,560.8 732.4,565.1Q735.1,569.5 740.0,574.4Q745.0,579.3 746.9,585.4Q748.8,591.4 746.2,596.0Q743.5,600.6 740.1,607.0L736.7,613.3"/>
<path stroke="#9c6c43" stroke-width="3.2" d="M786.4,290.4Q775.4,292.0 771.0,294.2Q766.5,296.4 762.9,299.5Q759.3,302.6 755.5,305.4Q751.7,308.2 747.2,309.4Q742.7,310.5 738.5,312.3Q734.4,314.1 731.9,317.9Q729.5,321.7 728.1,328.0Q726.7,334.2 723.9,336.8Q721.1,339.5 715.8,337.4Q710.5,335.4 705.1,335.9Q699.7,336.4 697.4,339.3Q695.1,342.1 695.2,346.3Q695.4,350.6 693.8,354.0Q692.3,357.4 687.4,358.1Q682.4,358.8 677.9,361.2Q673.3,363.6 674.0,367.0Q674.7,370.4 679.1,376.5Q683.6,382.6 685.0,387.1Q686.5,391.7 681.5,391.5Q676.4,391.4 670.4,393.6Q664.3,395.7 664.3,398.9L664.3,402.1"/>
<path stroke="#86603d" stroke-width="3.5" d="M799.0,224.2Q801.9,227.3 802.1,228.7Q802.2,230.1 800.8,231.3Q799.3,232.5 797.3,234.2Q795.2,236.0 794.2,238.3Q793.1,240.6 793.7,242.4Q794.3,244.1 795.6,245.6Q796.9,247.2 797.4,249.2Q797.9,251.3 796.9,254.0Q795.9,256.8 794.6,259.8Q793.3,262.9 793.6,265.4Q793.9,267.9 796.4,269.6Q798.9,271.3 802.2,274.9Q805.5,278.5 807.1,281.9Q808.7,285.4 807.6,288.1Q806.4,290.8 803.7,293.1Q801.1,295.5 799.5,299.3Q797.9,303.1 798.7,306.3Q799.6,309.5 801.7,313.3Q803.8,317.0 804.5,321.0Q805.2,324.9 803.1,328.3Q801.0,331.6 797.6,336.9Q794.2,342.2 792.6,346.9Q791.0,351.6 793.1,355.1Q795.1,358.7 799.4,362.1Q803.8,365.6 806.8,371.1Q809.9,376.7 809.4,381.2Q808.9,385.6 805.9,389.4Q802.8,393.1 800.7,398.6Q798.6,404.1 799.8,408.7Q801.1,413.3 804.7,419.2Q808.2,425.2 810.4,431.2Q812.5,437.3 810.4,442.0Q808.4,446.7 803.3,452.0Q798.2,457.3 794.3,464.3Q790.3,471.4 790.8,477.0Q791.4,482.7 795.8,487.1Q800.2,491.5 804.2,498.3Q808.3,505.0 808.3,511.2Q808.3,517.5 804.6,523.0Q800.9,528.5 797.6,536.1Q794.4,543.6 795.5,549.9Q796.6,556.1 801.6,562.7Q806.7,569.4 811.2,577.9Q815.7,586.4 815.1,593.2L814.6,600.1"/>
<path stroke="#a57246" stroke-width="4.0" d="M765.2,227.7Q760.1,229.5 758.3,231.0Q756.5,232.4 755.8,234.3Q755.0,236.1 754.9,238.2Q754.7,240.2 754.2,242.2Q753.6,244.3 752.1,246.3Q750.6,248.3 748.6,250.4Q746.5,252.5 745.1,254.9Q743.6,257.2 743.7,259.7Q743.8,262.3 745.2,265.9Q746.6,269.6 748.0,273.9Q749.5,278.3 749.2,281.6Q749.0,284.8 746.6,286.7Q744.1,288.5 740.4,289.7Q736.7,291.0 733.7,294.2Q730.7,297.5 729.8,300.9Q728.8,304.3 729.7,307.6Q730.5,310.9 731.4,315.3Q732.2,319.7 731.2,323.4Q730.2,327.0 727.0,330.4Q723.8,333.8 720.0,338.3Q716.2,342.9 714.3,347.3Q712.4,351.7 713.7,355.7Q715.0,359.6 718.5,363.8Q722.0,367.9 725.0,374.3Q728.0,380.7 728.0,385.7Q728.1,390.7 725.0,394.2Q721.9,397.8 717.7,401.6Q713.6,405.5 711.3,411.0Q709.1,416.4 710.2,421.3Q711.2,426.1 714.2,432.4Q717.1,438.7 718.8,445.2Q720.6,451.6 718.7,456.6Q716.8,461.5 711.6,466.0Q706.5,470.5 701.2,477.7Q695.9,484.9 693.9,491.4Q691.9,497.9 694.4,503.2Q697.0,508.5 701.9,513.8Q706.9,519.1 710.4,527.0Q713.9,535.0 713.2,541.4L712.5,547.7"/>
<path stroke="#8c6340" stroke-width="3.7" d="M789.3,265.3Q794.1,269.4 797.0,271.3Q799.8,273.2 802.7,275.2Q805.6,277.1 807.7,279.6Q809.8,282.0 810.9,285.0Q812.0,288.0 813.1,291.9Q814.1,295.9 816.1,298.5Q818.1,301.1 821.0,302.7Q823.9,304.3 826.4,306.5Q828.8,308.8 830.2,312.2Q831.6,315.5 832.8,319.1Q834.0,322.7 836.5,325.0Q838.9,327.4 842.5,329.9Q846.0,332.5 848.7,335.7Q851.4,338.8 851.9,342.3Q852.5,345.8 852.1,349.8Q851.6,353.8 852.4,357.8Q853.2,361.9 855.7,364.7Q858.2,367.4 860.5,371.0Q862.8,374.5 863.1,378.5Q863.4,382.4 862.7,387.6Q861.9,392.8 862.8,396.9Q863.7,401.1 867.1,403.6Q870.5,406.2 874.1,410.6Q877.8,414.9 878.8,419.2Q879.8,423.5 878.5,427.6Q877.3,431.6 876.7,436.7Q876.2,441.7 878.2,445.6Q880.3,449.5 883.0,454.6Q885.7,459.6 885.9,464.2Q886.1,468.9 883.7,474.1Q881.2,479.3 879.5,485.2Q877.8,491.1 879.7,495.4Q881.6,499.8 885.5,504.1Q889.3,508.4 891.1,514.0Q892.9,519.6 891.2,524.4Q889.6,529.1 887.6,535.0Q885.6,540.9 886.8,546.0Q887.9,551.1 891.4,557.2Q894.8,563.3 896.1,569.4Q897.4,575.5 894.5,580.3Q891.6,585.0 887.6,591.6L883.5,598.2"/>
<path stroke="#7f5a3b" stroke-width="3.7" d="M765.4,294.9Q765.8,297.0 766.3,298.0Q766.8,299.0 767.3,300.2Q767.8,301.4 768.0,303.0Q768.2,304.5 768.0,306.3Q767.8,308.2 767.6,310.2Q767.4,312.3 767.6,314.3Q767.8,316.2 768.7,318.0Q769.5,319.8 771.0,321.7Q772.4,323.6 773.8,326.3Q775.3,328.9 776.1,331.6Q777.0,334.3 777.0,336.9Q776.9,339.6 776.3,342.2Q775.6,344.8 775.0,347.8Q774.4,350.8 774.5,354.1Q774.5,357.4 775.4,360.5Q776.2,363.6 777.4,367.3Q778.5,370.9 779.3,374.6Q780.0,378.4 779.8,382.0Q779.6,385.7 778.6,389.8Q777.6,393.9 776.6,398.6Q775.5,403.3 775.3,407.8Q775.1,412.3 776.2,416.4Q777.3,420.4 779.4,424.3Q781.4,428.1 783.5,433.0Q785.5,438.0 786.5,443.0Q787.6,448.1 787.3,452.9Q787.0,457.7 786.0,462.6Q785.1,467.4 784.4,473.1Q783.8,478.9 784.4,484.3Q784.9,489.7 786.7,495.1Q788.4,500.5 790.5,506.7Q792.5,513.0 793.6,519.1Q794.7,525.3 794.2,531.1Q793.8,536.9 792.0,542.8Q790.3,548.6 788.5,555.9Q786.7,563.2 786.3,570.2Q785.8,577.1 787.2,583.4Q788.5,589.7 791.0,595.7Q793.6,601.7 795.9,609.0L798.2,616.4"/>
<path stroke="#8c6340" stroke-width="4.0" d="M784.9,231.5Q775.5,234.1 771.1,235.8Q766.6,237.6 762.3,239.3Q758.1,241.1 753.8,242.2Q749.6,243.3 745.3,243.6Q741.0,243.8 736.6,243.5Q732.1,243.2 727.8,244.0Q723.4,244.8 719.4,246.2Q715.4,247.7 711.9,249.7Q708.4,251.8 705.3,254.3Q702.3,256.8 699.4,259.6Q696.5,262.4 693.3,264.6Q690.1,266.8 686.5,268.6Q682.9,270.5 679.1,272.6Q675.3,274.8 672.0,277.4Q668.8,280.0 666.6,283.2Q664.3,286.4 663.3,290.0Q662.2,293.6 661.6,298.8Q661.0,303.9 660.0,308.3Q658.9,312.7 656.7,315.8Q654.4,318.9 651.1,321.1Q647.7,323.3 644.0,326.0Q640.3,328.8 637.6,332.8Q634.9,336.8 633.8,341.0Q632.7,345.2 633.0,349.6Q633.3,353.9 633.8,359.4Q634.3,364.8 633.7,369.6Q633.1,374.4 630.8,378.3L628.5,382.3"/>
<path stroke="#8f6541" stroke-width="4.3" d="M780.2,243.6Q770.4,242.9 765.8,244.3Q761.3,245.7 757.0,247.7Q752.8,249.6 748.4,249.9Q743.9,250.2 739.0,249.6Q734.1,248.9 729.0,249.1Q724.0,249.3 720.0,251.1Q716.1,253.0 713.8,256.5Q711.6,260.1 710.1,265.2Q708.7,270.3 706.3,273.6Q703.9,276.9 699.8,277.1Q695.7,277.3 691.4,278.7Q687.2,280.0 685.1,283.2Q683.1,286.3 683.6,292.2Q684.1,298.1 684.4,303.4Q684.6,308.8 681.4,310.5Q678.2,312.2 671.7,312.6Q665.2,312.9 659.5,316.7Q653.7,320.6 652.8,324.8Q651.9,329.0 655.2,332.9Q658.5,336.8 661.2,342.8Q664.0,348.7 662.1,352.4Q660.3,356.2 655.0,360.5Q649.8,364.8 646.8,370.5Q643.8,376.2 646.9,380.3L650.0,384.5"/>
<path stroke="#8a613e" stroke-width="4.1" d="M804.2,312.0Q810.8,310.8 814.1,310.8Q817.4,310.9 820.3,312.0Q823.3,313.1 825.5,315.1Q827.8,317.2 829.6,319.9Q831.3,322.7 833.0,325.8Q834.8,329.0 837.0,330.5Q839.3,332.0 842.3,332.4Q845.2,332.8 848.2,333.7Q851.2,334.6 853.3,336.8Q855.4,339.0 856.3,342.8Q857.2,346.6 857.5,351.0Q857.8,355.4 858.8,358.8Q859.9,362.3 862.7,363.9Q865.6,365.5 870.1,365.9Q874.6,366.4 879.5,369.4Q884.3,372.5 887.5,376.0Q890.7,379.6 891.3,383.5Q891.9,387.4 890.5,391.4Q889.2,395.3 887.8,400.3Q886.5,405.3 887.1,410.0Q887.6,414.6 890.6,418.0Q893.5,421.3 897.3,426.2Q901.1,431.1 903.4,436.2Q905.7,441.4 905.0,446.2Q904.3,451.1 901.0,456.8Q897.8,462.6 894.4,470.0Q891.1,477.3 890.3,483.5Q889.6,489.7 892.6,494.3Q895.6,498.9 901.0,502.9Q906.4,506.8 911.1,514.3Q915.8,521.8 917.1,528.6Q918.5,535.5 916.1,541.3Q913.6,547.1 909.6,553.6Q905.5,560.0 903.1,567.9Q900.8,575.7 902.1,582.4L903.5,589.1"/>
<path stroke="#9c6c43" stroke-width="3.0" d="M775.3,275.5Q767.5,280.8 763.6,283.5Q759.8,286.2 757.1,289.5Q754.4,292.8 753.3,297.2Q752.2,301.5 751.4,307.3Q750.6,313.1 748.3,316.5Q746.0,319.9 741.9,320.7Q737.7,321.6 733.4,322.9Q729.1,324.3 726.8,327.4Q724.5,330.5 724.1,334.9Q723.8,339.3 723.0,343.6Q722.2,347.9 718.6,349.3Q715.1,350.7 709.7,353.1Q704.2,355.5 700.6,358.7Q697.0,361.9 697.7,365.4Q698.5,368.9 702.1,373.4Q705.6,377.9 707.4,383.0Q709.1,388.2 706.3,390.1Q703.5,392.0 698.5,393.9Q693.6,395.7 691.6,399.3Q689.6,402.9 692.7,406.2Q695.8,409.5 700.2,414.9L704.6,420.4"/>
<path stroke="#9c6c43" stroke-width="4.2" d="M796.2,232.7Q798.6,239.9 800.3,243.1Q802.0,246.2 804.4,248.3Q806.9,250.5 809.5,252.3Q812.2,254.1 814.4,256.6Q816.6,259.1 817.9,262.6Q819.1,266.1 820.0,270.0Q820.9,273.9 822.3,277.2Q823.7,280.4 826.5,282.3Q829.3,284.2 833.3,285.8Q837.2,287.4 841.0,290.4Q844.7,293.4 847.0,296.7Q849.3,300.0 849.5,303.5Q849.8,307.0 849.1,310.5Q848.3,314.0 848.2,318.3Q848.1,322.6 849.7,326.0Q851.3,329.3 854.1,332.5Q856.8,335.6 859.1,339.5Q861.5,343.3 861.8,347.1Q862.1,350.9 860.4,355.6Q858.7,360.2 856.7,365.8Q854.7,371.4 854.6,375.9Q854.6,380.4 857.4,383.4Q860.2,386.3 864.6,389.0Q869.1,391.6 872.6,396.6Q876.2,401.6 876.9,406.1Q877.7,410.6 875.8,414.5Q873.9,418.5 871.6,423.3Q869.3,428.1 869.1,433.0Q868.9,437.8 871.5,441.9Q874.1,445.9 877.7,451.8Q881.2,457.7 882.9,463.1Q884.5,468.5 882.5,472.9Q880.4,477.2 875.8,481.7Q871.1,486.1 866.9,492.6Q862.7,499.1 861.8,504.4Q861.0,509.8 863.9,514.1Q866.8,518.3 871.0,523.3Q875.2,528.3 877.3,534.7Q879.3,541.2 877.4,546.2Q875.5,551.1 871.1,556.2Q866.8,561.2 863.4,567.6L860.1,574.0"/>
<path stroke="#7f5a3b" stroke-width="3.8" d="M755.8,240.6Q754.5,244.0 753.7,245.7Q753.0,247.4 751.7,248.8Q750.4,250.2 748.6,251.4Q746.8,252.5 744.7,254.6Q742.7,256.7 741.0,259.0Q739.4,261.4 738.6,263.9Q737.8,266.5 737.9,269.1Q737.9,271.7 738.1,274.6Q738.4,277.4 738.1,280.7Q737.8,284.1 736.6,287.0Q735.5,289.9 733.8,293.3Q732.2,296.6 730.9,300.2Q729.6,303.9 729.4,307.5Q729.1,311.2 729.9,315.3Q730.7,319.5 731.7,324.4Q732.7,329.3 732.8,333.9Q732.9,338.4 731.4,342.4Q729.9,346.4 727.3,350.0Q724.6,353.6 722.1,358.6Q719.5,363.7 718.2,368.8Q717.0,374.0 717.4,378.9Q717.8,383.8 719.0,388.8Q720.3,393.9 721.0,399.9Q721.7,405.9 720.8,411.4Q719.9,416.8 717.6,422.4Q715.3,428.0 712.9,434.6Q710.5,441.2 709.5,447.6Q708.5,453.9 709.7,459.9L710.8,465.8"/>
<path stroke="#8c6340" stroke-width="4.3" d="M770.2,288.3Q777.9,296.7 780.9,301.1Q783.8,305.5 786.1,310.0Q788.3,314.6 790.6,319.5Q792.8,324.5 795.7,328.7Q798.5,332.9 802.0,336.2Q805.4,339.5 808.7,343.0Q812.1,346.6 814.5,350.5Q816.9,354.4 818.1,359.3Q819.4,364.1 820.2,369.3Q821.1,374.4 822.7,378.5Q824.3,382.6 827.4,385.1Q830.5,387.6 834.7,389.5Q838.9,391.4 842.7,394.9Q846.6,398.3 848.6,401.9Q850.6,405.4 850.5,409.0Q850.4,412.6 849.4,416.2Q848.4,419.9 848.3,424.0Q848.2,428.1 850.1,430.7Q851.9,433.4 854.9,436.5Q857.9,439.7 860.1,443.2Q862.2,446.8 861.8,449.9Q861.4,453.0 858.4,455.8Q855.5,458.7 852.2,463.0Q848.8,467.2 847.6,470.4Q846.3,473.5 848.2,475.7Q850.0,477.8 853.6,480.0Q857.2,482.2 859.7,486.7L862.2,491.2"/>
<path stroke="#8c6340" stroke-width="3.6" d="M734.7,250.2Q730.8,252.1 729.4,253.5Q728.0,254.8 727.7,256.7Q727.5,258.5 727.6,261.1Q727.7,263.7 726.8,265.5Q725.9,267.4 724.2,268.7Q722.6,269.9 721.5,271.9Q720.5,273.9 720.4,276.7Q720.3,279.6 719.5,281.9Q718.7,284.2 716.3,285.9Q713.9,287.5 711.5,290.2Q709.1,292.9 708.7,295.7Q708.3,298.4 709.3,301.2Q710.3,304.0 710.2,307.3Q710.1,310.6 708.4,313.5Q706.7,316.3 705.8,319.6Q704.9,323.0 706.0,326.8Q707.1,330.6 708.1,334.9Q709.1,339.2 707.5,342.3Q705.9,345.4 702.9,348.8Q699.8,352.3 698.6,356.4Q697.4,360.6 698.8,364.3Q700.1,368.0 700.8,372.4Q701.5,376.9 699.7,381.2Q698.0,385.4 696.2,390.4Q694.4,395.4 695.7,399.6Q697.0,403.8 699.9,409.2Q702.8,414.7 703.2,419.8Q703.6,424.8 700.9,428.9Q698.1,433.0 696.2,438.7Q694.3,444.3 695.8,449.2Q697.2,454.0 699.1,460.0Q701.0,465.9 699.6,471.0Q698.3,476.2 695.3,482.9Q692.4,489.6 692.4,495.5Q692.5,501.4 696.2,506.5Q699.9,511.6 702.5,518.5Q705.1,525.4 703.6,531.1Q702.1,536.8 699.7,543.5Q697.4,550.2 698.7,556.3Q700.0,562.5 703.4,569.7Q706.9,576.9 707.2,583.7L707.5,590.5"/>
<path stroke="#93683f" stroke-width="2.9" d="M829.4,323.8Q829.5,330.3 830.8,333.0Q832.1,335.7 833.3,338.7Q834.4,341.6 834.3,344.9Q834.3,348.2 834.1,351.7Q834.0,355.2 835.3,358.5Q836.5,361.8 838.5,365.7Q840.4,369.7 840.5,373.2Q840.7,376.7 838.6,379.5Q836.5,382.4 834.8,386.6Q833.1,390.9 833.9,394.2Q834.6,397.6 836.2,401.1Q837.8,404.5 837.3,408.1Q836.8,411.7 834.8,416.2Q832.8,420.7 832.7,424.5Q832.5,428.4 835.4,431.9Q838.2,435.3 840.6,440.2Q843.0,445.1 841.7,448.7Q840.4,452.3 837.3,455.8Q834.2,459.3 833.6,463.5Q832.9,467.8 835.1,471.9Q837.2,476.1 837.9,480.7Q838.6,485.2 835.4,489.0Q832.3,492.8 829.0,497.9Q825.8,503.1 826.9,507.0Q828.0,511.0 831.9,515.4Q835.9,519.9 836.9,525.0Q838.0,530.1 834.7,533.3Q831.3,536.6 828.6,541.6L825.9,546.6"/>
<path stroke="#8c6340" stroke-width="4.2" d="M797.0,266.1Q807.7,275.6 813.3,278.2Q818.9,280.8 825.0,280.7Q831.1,280.6 837.2,280.2Q843.3,279.8 848.5,281.6Q853.7,283.5 857.6,286.5Q861.6,289.5 865.2,293.4Q868.8,297.3 873.2,298.4Q877.6,299.5 883.0,300.0Q888.4,300.4 893.4,301.7Q898.4,302.9 901.0,305.9Q903.5,308.8 903.3,313.1Q903.1,317.4 902.3,324.3Q901.5,331.1 903.0,333.6Q904.6,336.1 909.1,335.0Q913.6,333.9 918.0,334.9Q922.5,336.0 923.2,338.7Q923.9,341.4 920.6,345.5Q917.3,349.6 914.5,353.4Q911.7,357.2 913.9,358.2Q916.1,359.2 922.6,361.5Q929.0,363.7 932.7,369.6L936.4,375.5"/>
<path stroke="#8c6340" stroke-width="3.6" d="M840.4,288.1Q842.2,291.7 843.2,293.7Q844.2,295.7 845.1,297.9Q845.9,300.1 846.3,302.3Q846.6,304.6 846.4,307.4Q846.3,310.3 845.9,313.6Q845.6,317.0 845.7,320.1Q845.7,323.3 846.7,326.1Q847.7,328.8 849.5,331.2Q851.4,333.5 853.7,335.9Q856.0,338.3 857.9,341.8Q859.9,345.2 860.8,348.8Q861.8,352.3 861.9,355.8Q862.0,359.3 861.7,363.3Q861.4,367.3 861.7,371.5Q862.0,375.8 863.5,379.5Q864.9,383.3 867.3,387.4Q869.7,391.5 872.2,396.1Q874.7,400.8 876.2,405.4Q877.8,410.0 877.8,414.6Q877.8,419.1 876.5,423.6Q875.2,428.0 873.7,434.2Q872.2,440.3 871.8,446.1Q871.4,452.0 872.7,457.0Q874.1,462.0 877.0,466.4Q879.8,470.8 883.0,475.9Q886.2,481.0 888.2,487.0L890.3,492.9"/>
<path stroke="#7f5a3b" stroke-width="3.3" d="M751.6,285.6Q748.1,292.2 745.5,293.7Q742.9,295.2 739.9,295.9Q736.9,296.7 734.4,298.5Q732.0,300.3 730.2,303.2Q728.4,306.1 726.1,308.1Q723.8,310.2 720.2,311.2Q716.7,312.2 713.1,314.0Q709.5,315.9 707.6,318.6Q705.7,321.3 705.5,324.5Q705.3,327.8 704.6,331.7Q703.9,335.7 701.5,337.9Q699.0,340.0 696.2,342.4Q693.5,344.8 692.6,348.2Q691.6,351.6 692.0,356.6Q692.3,361.5 690.9,364.9Q689.6,368.3 685.6,369.5Q681.5,370.7 677.4,374.0Q673.2,377.4 672.1,381.0Q670.9,384.6 671.9,388.3Q672.9,392.0 672.5,396.4Q672.1,400.8 669.1,404.1Q666.0,407.5 663.4,411.6Q660.8,415.7 661.7,419.7Q662.5,423.6 665.2,429.7Q667.8,435.7 667.5,440.4Q667.3,445.0 663.2,447.6Q659.0,450.1 655.1,454.7Q651.2,459.2 651.3,463.7Q651.3,468.2 653.5,473.3Q655.6,478.3 655.0,483.1Q654.3,487.9 650.2,492.8Q646.1,497.6 643.4,503.2Q640.7,508.9 643.1,513.3Q645.5,517.7 649.9,523.9Q654.3,530.1 654.9,535.7Q655.4,541.4 651.5,545.3Q647.5,549.3 644.6,555.4Q641.6,561.6 643.6,566.6Q645.6,571.5 649.1,578.4Q652.7,585.3 651.7,590.8Q650.8,596.4 645.7,602.5L640.5,608.6"/>
<path stroke="#8c6340" stroke-width="3.9" d="M824.6,261.0Q827.4,263.6 829.2,264.9Q831.0,266.2 833.2,267.5Q835.5,268.9 837.9,270.5Q840.3,272.0 842.0,274.0Q843.8,276.0 844.3,278.4Q844.8,280.7 844.2,283.3Q843.6,285.8 842.6,289.6Q841.7,293.4 841.6,296.8Q841.4,300.2 842.7,302.6Q844.0,305.0 846.5,306.9Q848.9,308.7 851.3,311.0Q853.7,313.3 854.9,316.6Q856.1,319.8 855.7,323.5Q855.4,327.1 854.4,331.7Q853.3,336.3 853.1,340.5Q852.8,344.7 854.5,348.0Q856.2,351.3 859.7,354.1Q863.2,356.9 867.1,361.8Q871.0,366.7 873.4,371.5Q875.7,376.3 875.5,380.7Q875.2,385.1 872.7,389.1Q870.2,393.1 867.3,398.2Q864.4,403.3 863.3,408.9Q862.1,414.6 863.5,419.3Q864.9,424.0 868.0,428.6Q871.0,433.2 873.6,439.4Q876.1,445.5 876.2,451.2Q876.3,456.8 873.6,461.8Q870.8,466.8 867.0,474.2Q863.1,481.6 860.7,488.6Q858.3,495.6 859.2,501.5Q860.2,507.5 864.2,512.4L868.3,517.4"/>
<path stroke="#7f5a3b" stroke-width="3.8" d="M764.4,305.6Q761.6,308.3 760.5,309.9Q759.4,311.5 758.9,313.5Q758.5,315.5 758.6,318.5Q758.7,321.5 758.7,324.4Q758.7,327.2 757.8,329.4Q756.9,331.5 754.9,332.9Q752.8,334.2 750.2,335.4Q747.5,336.6 745.3,339.3Q743.1,342.0 742.1,344.8Q741.1,347.6 741.2,350.5Q741.3,353.4 741.4,356.7Q741.6,360.1 740.7,363.3Q739.8,366.5 737.7,369.8Q735.6,373.1 733.1,376.9Q730.6,380.8 729.3,384.6Q727.9,388.5 728.6,392.2Q729.2,395.9 731.2,399.9Q733.3,403.9 735.2,409.3Q737.1,414.7 737.1,419.3Q737.2,423.9 735.1,427.7Q733.0,431.4 730.0,435.1Q727.0,438.7 725.0,443.9Q723.0,449.1 723.1,454.0Q723.3,458.8 725.1,464.1Q726.8,469.3 728.2,475.4Q729.7,481.4 729.0,486.7Q728.3,492.0 725.2,496.6Q722.2,501.3 718.5,508.1Q714.8,514.9 712.8,521.4Q710.9,527.8 712.1,533.5Q713.2,539.2 716.7,544.2Q720.2,549.3 723.5,556.7Q726.7,564.1 727.5,571.0L728.2,577.8"/>
<path stroke="#8c6340" stroke-width="3.5" d="M821.4,239.5Q826.6,241.5 829.0,242.6Q831.4,243.7 833.8,244.3Q836.3,244.9 838.7,245.2Q841.2,245.4 843.7,246.0Q846.2,246.5 848.4,247.7Q850.7,248.9 852.6,251.0Q854.5,253.0 856.1,255.3Q857.8,257.6 859.7,259.6Q861.5,261.5 863.9,262.8Q866.3,264.1 869.2,265.2Q872.2,266.3 875.2,268.4Q878.2,270.5 880.6,273.0Q883.0,275.6 884.4,278.6Q885.8,281.5 886.4,284.8Q887.0,288.0 887.5,291.7Q888.0,295.4 889.1,299.1Q890.2,302.9 892.2,306.0Q894.2,309.2 896.6,312.8Q899.0,316.4 900.9,320.5Q902.9,324.6 903.6,328.8Q904.4,333.0 904.1,337.8Q903.8,342.5 903.2,348.2Q902.6,353.8 902.8,359.0Q903.1,364.2 904.8,368.7Q906.6,373.3 909.4,377.4Q912.3,381.6 915.2,387.2Q918.1,392.8 919.8,398.7Q921.4,404.5 921.4,410.2Q921.4,416.0 920.3,421.6Q919.1,427.2 918.3,434.0Q917.4,440.8 917.8,447.2Q918.3,453.7 920.2,459.8Q922.1,465.9 924.4,473.4Q926.8,480.9 928.2,488.3Q929.5,495.7 928.9,502.7L928.2,509.7"/>
<path stroke="#86603d" stroke-width="3.1" d="M773.5,229.9Q768.6,233.3 766.2,235.1Q763.9,236.9 761.4,238.1Q758.9,239.4 756.1,239.9Q753.3,240.4 750.3,240.9Q747.4,241.5 744.6,242.8Q741.8,244.2 739.5,246.0Q737.1,247.8 735.1,249.9Q733.0,252.0 730.8,254.1Q728.6,256.2 726.0,258.1Q723.4,260.1 720.7,262.1Q717.9,264.1 715.7,266.5Q713.4,268.9 711.9,271.7Q710.4,274.6 709.4,278.3Q708.4,282.0 706.9,285.5Q705.5,289.0 703.2,291.4Q700.9,293.9 697.9,295.9Q695.0,297.9 692.3,300.7Q689.7,303.6 687.9,307.0Q686.2,310.3 685.2,314.2Q684.1,318.1 682.7,322.0Q681.3,325.9 678.8,329.0Q676.4,332.1 673.3,335.7Q670.2,339.2 667.6,343.2Q665.0,347.1 663.9,351.3Q662.7,355.4 662.8,359.6Q662.8,363.9 662.6,369.2Q662.5,374.6 661.0,379.1Q659.6,383.5 656.9,387.3Q654.3,391.1 651.7,395.7Q649.2,400.2 648.0,405.1Q646.8,409.9 646.9,415.4Q647.0,420.9 646.9,426.7Q646.7,432.5 645.1,437.5Q643.4,442.5 640.3,446.9Q637.1,451.4 634.0,457.2Q630.9,463.0 629.4,468.7Q628.0,474.4 628.5,479.9Q628.9,485.5 629.8,491.7Q630.7,498.0 630.2,504.2Q629.7,510.5 627.5,516.0Q625.2,521.5 622.6,528.0L620.0,534.5"/>
<path stroke="#a57246" stroke-width="3.9" d="M892.8,305.6Q897.8,307.2 900.4,307.9Q903.1,308.7 905.2,310.3Q907.4,312.0 908.7,314.7Q909.9,317.5 910.8,320.7Q911.6,324.0 912.9,326.7Q914.2,329.3 916.8,330.9Q919.4,332.4 923.1,334.6Q926.9,336.9 928.8,339.9Q930.6,343.0 931.8,346.4Q932.9,349.7 933.3,353.1Q933.7,356.6 933.3,359.8Q932.9,363.1 931.0,368.1Q929.1,373.1 929.1,377.2Q929.2,381.3 931.5,384.2Q933.9,387.2 936.3,390.8Q938.7,394.3 939.5,398.9Q940.4,403.4 940.4,407.5Q940.4,411.5 937.6,416.9Q934.8,422.3 931.9,428.1Q928.9,434.0 928.7,438.8Q928.6,443.6 931.9,447.3Q935.3,451.0 940.5,456.1Q945.7,461.2 947.5,468.1Q949.2,475.1 949.4,480.7Q949.5,486.3 947.3,490.4Q945.1,494.6 939.8,499.5L934.6,504.3"/>
<path stroke="#8f6541" stroke-width="3.2" d="M712.8,280.2Q711.3,286.1 710.9,289.3Q710.4,292.5 708.2,293.8Q705.9,295.1 702.0,296.1Q698.1,297.0 695.5,299.4Q692.9,301.8 692.9,304.6Q692.9,307.5 693.0,310.4Q693.1,313.3 691.1,316.1Q689.0,318.8 687.0,321.8Q684.9,324.8 685.9,328.1Q686.8,331.3 689.0,336.6Q691.2,341.9 690.0,345.0Q688.8,348.0 684.4,349.4Q679.9,350.7 677.2,354.4Q674.5,358.2 675.5,361.5Q676.6,364.9 677.2,369.2Q677.7,373.5 674.4,377.0Q671.1,380.5 667.8,385.0Q664.5,389.4 666.3,393.0Q668.2,396.6 672.7,402.0Q677.1,407.3 677.3,411.8Q677.4,416.4 673.0,418.9Q668.6,421.5 666.5,426.4Q664.4,431.3 667.2,436.1Q670.1,440.8 671.6,446.2Q673.2,451.7 668.7,455.4Q664.3,459.1 659.3,465.5Q654.3,471.9 656.2,476.3Q658.1,480.7 664.0,485.5Q669.9,490.4 670.8,495.9Q671.8,501.5 667.3,506.0Q662.8,510.6 661.5,516.5Q660.2,522.5 665.4,528.0Q670.6,533.5 674.0,540.2Q677.4,546.9 672.7,551.1Q668.0,555.2 661.6,563.1L655.3,570.9"/>
<path stroke="#7f5a3b" stroke-width="4.1" d="M774.9,314.1Q771.0,316.8 768.2,318.6Q765.5,320.3 762.6,322.3Q759.7,324.3 757.9,326.7Q756.0,329.2 756.0,331.9Q756.0,334.7 757.3,337.7Q758.5,340.7 759.4,345.1Q760.3,349.5 759.4,352.4Q758.4,355.4 755.7,357.3Q753.1,359.2 750.4,361.9Q747.7,364.6 746.9,368.0Q746.1,371.4 747.4,375.8Q748.8,380.3 750.4,385.4Q752.0,390.5 751.4,394.4Q750.8,398.2 747.0,400.5Q743.2,402.7 737.9,406.7Q732.6,410.7 729.1,415.5Q725.6,420.4 726.0,424.7Q726.4,428.9 729.8,432.6Q733.3,436.4 736.4,442.1Q739.6,447.9 739.3,452.9Q739.1,457.8 735.3,461.5Q731.6,465.2 727.4,471.3Q723.3,477.5 722.5,483.0L721.8,488.4"/>
<path stroke="#8f6541" stroke-width="3.3" d="M783.8,281.2Q787.7,289.1 790.4,291.9Q793.1,294.8 796.1,297.1Q799.2,299.5 801.7,302.6Q804.2,305.6 805.8,309.7Q807.3,313.8 808.5,318.3Q809.6,322.8 811.5,326.3Q813.4,329.8 816.9,331.7Q820.3,333.6 824.9,335.3Q829.5,337.0 833.7,340.1Q837.8,343.1 840.1,346.6Q842.4,350.1 842.6,353.9Q842.9,357.7 842.4,361.6Q842.0,365.5 842.7,369.9Q843.5,374.3 846.1,377.1Q848.8,379.8 852.1,383.4Q855.5,386.9 857.5,390.6Q859.5,394.4 859.0,398.2Q858.5,401.9 856.4,408.0Q854.2,414.0 853.1,419.4Q852.0,424.9 853.9,428.1Q855.8,431.4 860.5,432.9Q865.3,434.4 870.3,437.9Q875.3,441.3 877.7,445.6Q880.1,449.8 879.1,453.7Q878.1,457.5 875.7,461.9Q873.4,466.2 872.8,471.0Q872.2,475.8 874.9,478.9Q877.7,482.0 882.2,486.9Q886.8,491.8 889.6,496.6Q892.5,501.5 891.1,505.5Q889.8,509.4 884.9,513.2Q880.1,517.0 875.5,523.4Q870.9,529.8 870.2,534.6Q869.5,539.3 873.3,542.3Q877.0,545.3 882.2,549.1Q887.4,552.9 889.9,558.3Q892.3,563.7 890.0,567.6Q887.8,571.4 883.1,576.3L878.4,581.1"/>
<path stroke="#7c583a" stroke-width="3.7" d="M808.0,299.3Q809.4,305.9 810.9,307.8Q812.3,309.7 814.8,310.2Q817.3,310.7 819.8,311.4Q822.4,312.1 824.0,314.1Q825.5,316.2 826.6,318.9Q827.7,321.6 829.6,323.3Q831.6,325.1 834.7,327.1Q837.8,329.1 840.3,331.5Q842.9,334.0 843.2,336.8Q843.6,339.7 842.6,343.4Q841.6,347.0 841.8,350.8Q842.0,354.7 844.3,356.8Q846.7,359.0 849.2,361.4Q851.8,363.9 852.3,367.3Q852.9,370.8 852.2,375.5Q851.5,380.3 852.4,383.9Q853.3,387.5 857.1,389.7Q860.8,391.9 864.7,396.0Q868.6,400.1 869.4,404.1Q870.2,408.1 868.3,411.8Q866.4,415.6 865.5,420.7Q864.6,425.8 866.7,429.3Q868.9,432.9 871.8,437.6Q874.8,442.2 874.8,446.7Q874.7,451.1 872.0,456.9Q869.2,462.7 868.0,468.4Q866.8,474.2 869.9,478.0Q873.0,481.7 877.8,486.5Q882.6,491.2 884.3,496.8Q885.9,502.3 883.6,507.0Q881.2,511.6 879.3,517.8Q877.3,524.0 879.4,529.0Q881.5,533.9 885.5,540.5Q889.4,547.1 889.9,553.1Q890.5,559.1 886.4,564.4Q882.3,569.8 878.5,577.5Q874.7,585.2 876.1,591.0Q877.5,596.8 882.4,602.1L887.3,607.4"/>
<path stroke="#8f6541" stroke-width="3.6" d="M765.5,306.0Q760.9,312.1 759.0,315.7Q757.1,319.2 755.5,323.1Q754.0,327.0 752.5,330.8Q751.0,334.6 748.9,337.8Q746.8,341.0 743.9,343.4Q741.0,345.8 737.7,348.3Q734.4,350.7 731.5,354.0Q728.5,357.3 726.5,360.8Q724.5,364.2 723.5,367.9Q722.5,371.5 721.9,375.1Q721.3,378.8 720.2,382.7Q719.1,386.6 717.1,389.9Q715.1,393.2 712.6,396.9Q710.0,400.6 708.0,404.3Q706.0,408.1 705.3,411.8Q704.6,415.6 705.1,419.8Q705.7,424.0 706.5,429.2Q707.3,434.3 707.0,438.7Q706.8,443.1 704.8,446.4Q702.8,449.7 699.6,452.3Q696.5,454.9 693.6,459.0Q690.8,463.0 689.4,467.1Q688.1,471.3 688.6,475.2Q689.0,479.2 690.0,483.7Q691.0,488.2 691.1,492.8Q691.1,497.3 689.4,500.9Q687.6,504.6 684.6,509.1Q681.7,513.6 679.3,518.4Q676.9,523.2 676.7,527.6Q676.4,532.0 678.5,535.8Q680.6,539.6 683.6,544.5Q686.6,549.4 688.4,554.7Q690.2,559.9 689.5,564.2Q688.8,568.5 686.2,572.1Q683.6,575.7 681.0,580.6L678.4,585.5"/>
<path stroke="#7f5a3b" stroke-width="3.3" d="M764.7,232.7Q763.0,235.9 762.3,237.7Q761.6,239.4 761.5,241.5Q761.5,243.6 762.0,246.1Q762.6,248.5 762.9,250.9Q763.2,253.4 762.4,255.5Q761.7,257.7 759.9,260.3Q758.2,262.9 756.2,266.2Q754.2,269.5 753.4,272.6Q752.5,275.6 753.4,278.1Q754.2,280.7 756.4,282.9Q758.5,285.1 760.5,288.4Q762.4,291.7 763.0,295.0Q763.6,298.4 762.6,301.3Q761.6,304.3 760.2,307.5Q758.9,310.8 758.6,314.4Q758.3,318.0 759.7,321.5Q761.1,325.0 763.3,329.5Q765.6,334.0 766.8,338.2Q768.1,342.5 767.1,346.1Q766.1,349.6 763.2,352.6Q760.2,355.6 757.0,360.7Q753.8,365.9 752.5,370.6Q751.2,375.3 752.5,379.2Q753.9,383.0 756.6,386.5Q759.4,390.0 761.4,395.0Q763.3,400.0 762.9,404.5Q762.6,409.0 760.3,413.7Q758.0,418.5 755.9,424.1Q753.7,429.7 754.0,434.6Q754.2,439.5 757.2,443.6Q760.3,447.6 764.2,454.1Q768.2,460.6 770.4,466.6Q772.6,472.6 771.3,477.5Q770.0,482.5 766.1,486.7Q762.3,490.8 758.6,497.3Q754.8,503.7 753.9,509.8Q753.0,515.8 755.3,520.8Q757.6,525.9 761.0,531.7Q764.4,537.6 766.0,544.1Q767.5,550.6 765.6,556.1Q763.7,561.6 759.6,568.5Q755.6,575.5 752.6,582.9L749.6,590.4"/>
<path stroke="#8f6541" stroke-width="3.4" d="M723.6,273.6Q721.1,281.5 719.2,285.4Q717.3,289.2 714.8,293.2Q712.4,297.3 710.4,301.3Q708.4,305.3 707.8,309.2Q707.2,313.1 707.8,316.8Q708.4,320.6 709.0,325.3Q709.5,330.0 708.8,334.1Q708.0,338.1 706.0,341.3Q703.9,344.5 701.9,348.0Q699.9,351.5 699.3,355.2Q698.7,359.0 699.4,363.7Q700.0,368.5 700.2,372.9Q700.4,377.3 698.6,380.5Q696.8,383.7 693.3,386.6Q689.8,389.4 686.6,393.4Q683.3,397.5 682.5,401.2Q681.7,404.9 683.2,408.3Q684.7,411.6 686.3,415.9Q688.0,420.2 687.4,423.9Q686.9,427.7 684.2,430.5Q681.6,433.4 679.0,437.3Q676.5,441.2 676.6,444.7Q676.6,448.2 679.2,452.3Q681.7,456.4 684.0,461.4Q686.3,466.4 685.4,469.8Q684.6,473.2 680.6,474.9Q676.5,476.6 672.3,480.5Q668.1,484.3 666.9,487.9L665.8,491.6"/>
<path stroke="#8c6340" stroke-width="4.2" d="M773.5,256.9Q769.8,260.8 767.6,262.8Q765.4,264.8 763.3,267.0Q761.1,269.1 759.7,271.6Q758.3,274.0 757.8,276.6Q757.2,279.3 756.9,282.6Q756.6,286.0 755.6,289.0Q754.6,292.0 752.7,294.2Q750.8,296.5 748.8,298.8Q746.8,301.0 745.6,304.0Q744.4,307.1 743.9,310.8Q743.5,314.5 742.7,318.0Q742.0,321.5 740.1,324.2Q738.2,326.8 735.2,329.6Q732.3,332.3 729.8,335.8Q727.3,339.2 726.4,342.7Q725.5,346.3 726.0,349.8Q726.4,353.3 726.6,357.6Q726.8,361.8 725.5,365.5Q724.3,369.1 722.0,372.6Q719.7,376.1 718.1,380.2Q716.5,384.2 716.7,388.2Q716.8,392.1 717.9,397.5Q719.0,402.8 719.0,407.5Q718.9,412.3 716.7,415.8Q714.4,419.4 711.0,423.2Q707.6,427.0 705.3,431.8Q703.1,436.6 703.2,441.1Q703.3,445.6 704.6,450.3Q705.8,455.0 705.8,460.2Q705.8,465.4 703.7,469.7Q701.5,474.1 698.7,479.6Q696.0,485.1 695.1,490.2Q694.2,495.4 696.0,500.1Q697.7,504.8 700.1,511.3Q702.5,517.9 702.6,523.6Q702.8,529.3 700.0,533.8Q697.3,538.3 694.0,543.7L690.6,549.1"/>
<path stroke="#8f6541" stroke-width="3.8" d="M808.2,242.2Q804.6,240.7 803.5,241.5Q802.4,242.3 802.5,243.2Q802.7,244.1 803.0,245.1Q803.2,246.1 802.4,247.5Q801.5,248.9 799.8,250.7Q798.1,252.5 797.5,254.2Q796.9,255.9 798.5,257.2Q800.2,258.5 802.9,260.9Q805.6,263.2 807.0,265.9Q808.3,268.5 807.2,270.3Q806.0,272.1 803.8,273.7Q801.6,275.4 801.0,278.1Q800.3,280.8 801.7,283.8Q803.1,286.8 804.3,290.2Q805.4,293.5 804.0,296.2Q802.6,298.8 799.3,302.6Q795.9,306.5 793.8,310.7Q791.7,314.9 793.2,318.0Q794.7,321.2 798.4,324.1Q802.0,327.0 804.2,331.7Q806.4,336.4 805.2,340.1Q804.0,343.9 801.5,348.0Q799.1,352.2 799.0,356.8Q798.9,361.3 801.9,366.2Q805.0,371.0 807.8,376.7Q810.7,382.5 809.7,387.1Q808.7,391.8 804.2,396.2Q799.8,400.7 796.2,407.4Q792.7,414.1 793.6,419.4Q794.6,424.6 798.7,428.8Q802.9,433.0 805.4,439.7Q808.0,446.3 806.2,451.7Q804.5,457.1 801.1,464.4Q797.7,471.6 797.6,478.1Q797.5,484.6 802.0,490.2Q806.5,495.7 811.5,504.0Q816.5,512.2 816.7,519.1Q816.9,526.0 812.2,531.5Q807.4,536.9 803.0,545.5Q798.5,554.1 799.2,561.4Q799.9,568.6 804.6,575.1L809.3,581.5"/>
<path stroke="#a57246" stroke-width="3.8" d="M702.1,252.7Q697.4,255.5 696.0,257.6Q694.6,259.6 693.8,261.9Q693.0,264.3 692.0,266.7Q691.1,269.2 689.3,271.2Q687.6,273.1 685.5,275.1Q683.5,277.1 682.1,279.4Q680.8,281.8 680.5,285.3Q680.3,288.9 680.2,292.7Q680.2,296.5 678.9,299.2Q677.7,301.9 674.7,303.2Q671.8,304.6 668.3,306.6Q664.8,308.7 662.6,311.7Q660.3,314.8 660.0,318.0Q659.6,321.2 660.0,324.5Q660.3,327.9 659.5,331.5Q658.7,335.0 656.2,338.3Q653.7,341.6 651.2,345.4Q648.7,349.2 648.2,352.9Q647.6,356.7 649.3,360.6Q651.0,364.6 652.9,370.1Q654.8,375.6 654.4,379.9Q654.0,384.2 651.0,387.1Q648.0,390.1 644.5,393.8Q641.0,397.5 639.7,402.1Q638.3,406.6 639.5,410.8Q640.6,415.0 641.9,420.6Q643.2,426.1 642.1,430.6Q640.9,435.1 637.4,439.8Q633.8,444.6 630.7,450.3Q627.5,456.0 627.6,461.1Q627.8,466.1 631.0,470.3Q634.3,474.6 637.5,481.3Q640.8,487.9 640.8,493.5Q640.9,499.1 637.8,503.6Q634.7,508.0 631.8,514.0Q628.8,520.0 629.1,525.7Q629.3,531.4 632.5,537.5Q635.6,543.6 638.0,550.5Q640.4,557.4 639.0,563.1Q637.5,568.7 633.0,574.7Q628.5,580.6 628.3,588.4L628.2,596.1"/>
<path stroke="#93683f" stroke-width="3.1" d="M816.9,243.1Q818.2,247.2 818.6,250.1Q819.0,253.0 820.0,254.3Q820.9,255.7 822.8,255.8Q824.6,255.8 826.7,256.0Q828.7,256.2 830.0,257.7Q831.3,259.2 831.6,261.8Q831.9,264.4 832.4,266.9Q832.8,269.4 834.7,270.7Q836.6,272.0 840.0,273.2Q843.4,274.4 846.8,276.9Q850.2,279.3 851.6,282.1Q853.0,284.9 852.0,287.7Q851.0,290.5 849.1,293.9Q847.2,297.3 846.8,301.2Q846.4,305.2 848.2,307.8Q850.1,310.5 852.8,313.6Q855.5,316.6 856.6,320.4Q857.7,324.2 856.2,328.3Q854.7,332.4 852.3,338.0Q849.9,343.5 849.6,348.2Q849.2,352.8 852.3,355.9Q855.4,359.1 860.3,363.0Q865.1,366.9 868.4,372.4Q871.6,377.9 871.1,382.6Q870.6,387.4 867.6,391.6Q864.6,395.8 862.5,401.8Q860.4,407.8 861.6,412.9Q862.9,418.0 866.5,423.8Q870.1,429.7 872.6,436.2Q875.0,442.7 873.4,448.2Q871.8,453.6 867.1,459.8Q862.3,465.9 858.3,473.7Q854.3,481.6 854.7,487.9Q855.1,494.3 859.6,499.4Q864.2,504.4 869.0,512.0Q873.7,519.5 874.6,526.9Q875.5,534.3 872.1,540.4Q868.6,546.4 864.5,554.4L860.3,562.5"/>
<path stroke="#93683f" stroke-width="3.7" d="M712.0,266.8Q709.0,270.4 708.3,274.1Q707.5,277.8 706.5,280.5Q705.5,283.2 703.2,283.7Q700.8,284.3 697.4,283.8Q694.1,283.3 691.3,285.0Q688.6,286.8 687.5,289.3Q686.4,291.8 685.8,295.2Q685.3,298.5 683.2,300.8Q681.2,303.0 677.4,305.5Q673.6,308.0 670.3,311.1Q667.0,314.2 666.8,317.7Q666.6,321.2 668.9,325.5Q671.2,329.9 672.6,335.5Q674.0,341.1 671.9,344.3Q669.7,347.6 665.5,349.9Q661.2,352.2 658.7,356.7Q656.1,361.2 657.2,365.9Q658.4,370.6 660.4,377.0Q662.5,383.5 661.1,388.2Q659.8,392.9 654.5,396.6Q649.1,400.3 643.9,406.6Q638.6,412.9 638.3,418.4Q637.9,424.0 642.1,428.7Q646.2,433.5 649.6,441.1Q653.0,448.8 651.3,454.5L649.6,460.1"/>
<path stroke="#9c6c43" stroke-width="3.9" d="M817.2,304.4Q820.7,311.8 822.8,315.2Q824.9,318.6 827.5,321.8Q830.2,324.9 832.8,327.9Q835.4,330.8 836.8,333.7Q838.1,336.7 837.5,339.4Q836.9,342.2 835.0,346.2Q833.0,350.2 831.6,353.8Q830.1,357.4 830.8,359.1Q831.5,360.7 834.4,360.9Q837.3,361.1 840.7,362.5Q844.0,363.8 845.2,366.0Q846.4,368.2 844.4,368.9Q842.4,369.6 838.9,369.8L835.4,370.0"/>
<path stroke="#ab784a" stroke-width="4.2" d="M714.6,253.2Q709.9,259.5 707.4,262.4Q704.9,265.2 702.8,268.6Q700.8,271.9 699.6,275.9Q698.4,279.9 697.7,284.3Q697.0,288.7 695.9,292.5Q694.7,296.4 692.3,299.3Q689.9,302.1 686.3,304.4Q682.7,306.7 679.0,310.5Q675.3,314.2 672.8,318.1Q670.4,321.9 670.1,325.7Q669.8,329.4 671.0,333.1Q672.3,336.7 673.4,341.0Q674.6,345.4 674.2,349.5Q673.9,353.5 671.7,356.6Q669.6,359.7 667.0,363.8Q664.4,368.0 663.2,372.1Q662.0,376.2 663.3,379.7Q664.7,383.3 667.6,388.4Q670.6,393.4 673.1,398.5Q675.5,403.5 675.4,407.5Q675.2,411.4 672.1,414.3Q668.9,417.1 664.6,421.0Q660.3,424.9 657.6,430.2Q654.9,435.4 655.5,439.5Q656.1,443.7 659.5,446.6Q662.9,449.6 666.5,453.9Q670.1,458.2 671.3,462.6Q672.4,467.0 670.4,470.7Q668.4,474.4 665.1,480.6Q661.8,486.9 660.3,492.6L658.8,498.2"/>
<path stroke="#ab784a" stroke-width="3.3" d="M879.1,270.8Q883.3,273.9 885.2,275.8Q887.0,277.7 888.2,280.4Q889.4,283.1 890.8,285.7Q892.2,288.2 894.7,290.1Q897.2,291.9 900.0,294.4Q902.8,297.0 904.1,299.9Q905.4,302.7 905.1,305.7Q904.9,308.8 905.0,312.5Q905.1,316.2 906.9,318.9Q908.6,321.6 910.5,324.6Q912.5,327.5 912.7,331.1Q913.0,334.7 912.4,339.2Q911.8,343.8 912.9,347.2Q914.0,350.6 917.4,353.1Q920.7,355.6 923.5,359.6Q926.2,363.7 926.1,367.4Q926.1,371.2 924.9,375.3Q923.7,379.4 924.5,383.4Q925.3,387.4 927.9,391.7Q930.5,395.9 931.4,400.3Q932.3,404.7 930.3,409.2Q928.2,413.7 926.4,419.3Q924.6,424.9 926.3,428.9Q928.0,433.0 931.7,437.1Q935.4,441.2 936.6,446.3Q937.9,451.4 936.0,455.9Q934.0,460.4 933.0,466.0Q932.0,471.6 934.5,476.3Q937.0,481.0 939.9,487.2Q942.9,493.3 941.8,498.4Q940.8,503.4 936.8,508.9Q932.7,514.3 931.1,520.5Q929.5,526.7 932.2,531.4L935.0,536.1"/>
<path stroke="#7c583a" stroke-width="4.1" d="M704.9,275.6Q696.0,279.2 693.1,282.0Q690.2,284.8 688.8,288.5Q687.4,292.1 685.9,296.4Q684.5,300.7 681.6,303.3Q678.7,305.9 675.3,307.7Q671.9,309.6 669.9,313.1Q667.8,316.5 667.4,321.9Q667.0,327.3 665.8,331.4Q664.6,335.6 660.6,336.5Q656.5,337.4 650.9,338.8Q645.3,340.2 641.9,343.4Q638.4,346.6 638.6,350.3Q638.7,354.1 639.5,358.4Q640.3,362.7 638.3,365.9Q636.4,369.1 632.3,372.5Q628.3,375.9 626.5,379.7Q624.7,383.5 627.3,387.9Q629.8,392.2 633.1,398.8Q636.4,405.3 635.2,408.9Q634.0,412.5 628.4,413.7Q622.7,414.9 618.2,419.5Q613.7,424.1 614.5,428.0Q615.3,432.0 618.7,436.6Q622.0,441.2 621.8,445.5Q621.6,449.8 616.6,454.2Q611.6,458.6 607.8,464.4Q604.0,470.1 606.9,473.8Q609.7,477.5 616.8,481.9Q623.9,486.3 627.3,491.8Q630.7,497.4 627.1,500.9Q623.5,504.5 618.6,509.8Q613.6,515.1 614.4,519.9Q615.3,524.8 621.3,529.2Q627.3,533.6 630.7,539.1Q634.0,544.6 629.9,548.7L625.9,552.9"/>
<path stroke="#8a613e" stroke-width="4.2" d="M790.9,238.3Q788.3,241.2 787.5,242.7Q786.7,244.3 786.6,246.0Q786.5,247.7 786.9,249.5Q787.3,251.3 787.7,253.7Q788.1,256.2 788.0,258.5Q787.9,260.7 787.0,262.7Q786.2,264.6 785.0,266.4Q783.8,268.2 782.9,270.4Q781.9,272.5 781.7,275.1Q781.5,277.7 781.8,280.8Q782.0,283.8 782.2,286.8Q782.3,289.8 781.7,292.5Q781.0,295.2 779.3,297.5Q777.6,299.8 775.5,303.1Q773.4,306.3 771.8,309.7Q770.2,313.2 769.8,316.5Q769.5,319.8 770.3,323.0Q771.1,326.1 772.3,329.4Q773.5,332.7 774.0,336.8Q774.5,340.8 773.8,344.4Q773.1,348.0 771.7,351.7Q770.3,355.4 769.2,359.7Q768.0,364.0 768.1,368.0Q768.2,372.0 769.5,376.3Q770.9,380.5 772.5,385.6Q774.1,390.7 774.8,395.5Q775.4,400.4 774.4,404.6Q773.3,408.9 770.9,412.7Q768.6,416.6 766.2,421.9Q763.9,427.2 762.9,432.5Q761.9,437.7 762.7,442.5Q763.5,447.3 765.2,451.9Q767.0,456.5 768.2,462.3Q769.4,468.1 769.0,473.4Q768.7,478.7 766.9,484.2Q765.1,489.6 763.1,496.0Q761.2,502.3 760.8,508.2Q760.3,514.2 761.9,519.5Q763.6,524.9 766.5,530.9Q769.4,536.8 771.8,543.8Q774.1,550.7 774.5,557.1Q774.9,563.4 773.0,569.1Q771.2,574.9 768.5,580.9Q765.9,587.0 764.2,594.2Q762.6,601.5 763.2,608.1L763.8,614.6"/>
<path stroke="#8f6541" stroke-width="3.2" d="M707.3,251.8Q704.1,252.2 701.6,253.1Q699.1,254.0 697.7,255.3Q696.3,256.6 697.5,258.1Q698.7,259.5 701.1,261.5Q703.6,263.4 704.5,265.9Q705.4,268.4 703.9,269.5Q702.4,270.7 700.7,272.1Q699.0,273.4 699.5,276.1Q700.1,278.7 702.0,282.3Q703.9,285.8 703.8,288.5Q703.8,291.2 700.2,292.3Q696.6,293.4 692.1,297.1Q687.6,300.8 686.4,304.1Q685.2,307.5 687.9,310.0Q690.6,312.6 693.4,316.2Q696.1,319.9 695.2,323.3Q694.3,326.7 691.1,330.6Q688.0,334.6 687.2,338.7Q686.4,342.8 690.0,346.9Q693.5,351.0 697.6,357.1Q701.6,363.2 701.0,367.5Q700.3,371.9 694.8,374.4Q689.3,376.9 684.6,383.1Q679.9,389.2 680.6,393.9Q681.3,398.7 685.4,403.3Q689.5,407.9 690.6,413.8Q691.8,419.8 687.7,424.9Q683.6,430.0 679.1,437.2Q674.6,444.3 675.9,449.7Q677.2,455.2 683.8,460.9Q690.4,466.5 695.0,474.6Q699.7,482.7 697.1,488.3Q694.5,493.8 687.9,499.1Q681.3,504.5 678.6,512.1Q676.0,519.8 680.0,525.4Q684.0,531.1 688.7,540.1L693.3,549.0"/>
<path stroke="#93683f" stroke-width="3.9" d="M806.3,224.8Q807.1,226.8 808.3,227.9Q809.6,228.9 810.5,230.5Q811.5,232.0 811.4,232.9Q811.3,233.8 810.3,234.4Q809.3,235.0 808.5,235.9Q807.6,236.7 807.8,238.3Q807.9,239.9 808.8,241.9Q809.7,244.0 810.1,245.9Q810.5,247.9 809.4,249.4Q808.3,250.8 805.9,252.5Q803.5,254.2 801.2,257.1Q798.8,259.9 798.2,262.5Q797.6,265.1 799.0,267.2Q800.4,269.3 802.5,271.4Q804.6,273.5 805.6,276.7Q806.6,280.0 805.8,282.7Q805.0,285.5 803.5,288.9Q801.9,292.2 801.5,295.7Q801.1,299.2 802.8,302.3Q804.5,305.5 807.2,310.1Q809.9,314.7 811.3,319.0Q812.8,323.3 811.6,326.9Q810.3,330.5 807.1,333.6Q803.9,336.7 801.1,342.1Q798.3,347.5 798.0,352.1Q797.8,356.7 800.0,360.6Q802.1,364.5 804.5,369.2Q806.9,373.9 807.2,378.9Q807.5,383.9 805.4,389.1Q803.3,394.2 800.9,400.5Q798.5,406.7 798.5,412.2Q798.6,417.8 801.8,422.2Q805.0,426.7 809.3,433.3Q813.6,440.0 815.8,446.5Q818.1,453.1 816.6,458.7Q815.1,464.3 811.5,469.4Q807.9,474.5 805.4,482.0Q803.0,489.5 803.9,495.9Q804.8,502.3 808.1,508.4Q811.5,514.6 814.1,522.2Q816.7,529.8 815.8,536.6Q815.0,543.3 811.3,550.8Q807.6,558.2 804.3,567.1Q801.0,575.9 801.4,583.5Q801.9,591.0 806.4,597.1Q810.9,603.2 816.2,611.6L821.5,619.9"/>
<path stroke="#93683f" stroke-width="4.1" d="M780.2,284.7Q775.8,289.8 773.3,291.2Q770.8,292.7 767.9,293.1Q765.0,293.5 762.5,295.0Q760.0,296.5 758.2,299.1Q756.3,301.8 753.9,303.5Q751.5,305.1 748.0,305.6Q744.4,306.1 741.0,307.9Q737.6,309.6 736.1,312.3Q734.6,315.1 734.1,318.5Q733.6,322.0 731.9,324.9Q730.1,327.8 727.1,330.0Q724.2,332.1 722.5,335.3Q720.8,338.4 721.1,343.1Q721.4,347.8 720.8,352.1Q720.1,356.3 716.5,358.1Q712.9,359.9 708.8,363.2Q704.7,366.5 703.6,370.5Q702.5,374.5 703.4,378.9Q704.3,383.3 703.1,387.6Q702.0,391.9 698.5,396.2Q694.9,400.4 693.3,405.1Q691.6,409.9 693.8,414.8Q696.0,419.8 697.8,426.2Q699.6,432.7 697.1,436.8Q694.5,441.0 690.2,445.6Q685.9,450.3 685.1,455.8Q684.4,461.3 686.7,467.2Q689.0,473.1 688.7,479.0Q688.5,484.9 684.4,490.8Q680.2,496.6 677.6,503.4Q675.1,510.2 678.0,515.6L681.0,521.0"/>
<path stroke="#8f6541" stroke-width="4.2" d="M798.4,260.1Q800.0,266.5 801.1,269.9Q802.2,273.2 801.0,275.5Q799.8,277.7 796.3,279.5Q792.8,281.2 790.3,284.5Q787.9,287.8 788.5,290.6Q789.2,293.3 790.5,295.9Q791.8,298.5 790.7,301.8Q789.7,305.1 787.8,308.7Q786.0,312.3 787.1,315.2Q788.3,318.1 792.1,322.4Q795.8,326.7 797.2,330.7Q798.6,334.8 795.4,337.0Q792.3,339.3 788.8,342.7Q785.2,346.2 785.7,349.6Q786.2,353.1 788.5,357.0Q790.7,360.9 789.4,364.3Q788.2,367.7 784.0,372.8Q779.9,377.9 779.1,382.2Q778.3,386.4 783.1,389.0Q787.8,391.5 792.1,397.2Q796.4,402.9 794.9,406.5Q793.3,410.2 789.2,413.9Q785.2,417.6 785.6,421.9Q786.0,426.1 790.1,431.4Q794.2,436.6 794.6,441.2Q794.9,445.8 789.3,450.2Q783.7,454.5 779.6,460.9Q775.5,467.2 778.9,470.7Q782.4,474.3 788.6,478.8Q794.8,483.3 795.2,488.2Q795.5,493.2 790.9,498.1Q786.3,503.0 785.9,508.4Q785.4,513.8 791.5,518.9Q797.6,524.0 801.5,530.3Q805.5,536.7 800.8,540.5Q796.1,544.4 789.1,551.6Q782.1,558.8 782.9,564.1Q783.6,569.5 790.5,573.4Q797.4,577.2 799.6,583.4L801.8,589.6"/>
<path stroke="#93683f" stroke-width="3.1" d="M857.5,273.2Q863.9,276.4 866.7,278.7Q869.5,281.1 872.0,283.7Q874.5,286.4 877.1,288.6Q879.8,290.7 882.9,291.9Q886.0,293.0 889.8,293.5Q893.6,294.0 897.6,295.8Q901.6,297.5 905.1,299.8Q908.5,302.1 910.7,305.1Q912.9,308.0 913.6,311.4Q914.4,314.8 914.4,318.4Q914.4,322.0 914.9,326.4Q915.3,330.8 917.0,333.9Q918.7,337.1 921.6,339.4Q924.6,341.7 927.6,345.4Q930.6,349.1 931.7,353.0Q932.9,356.9 933.4,360.7Q933.8,364.6 931.9,369.6Q930.0,374.6 927.9,380.3Q925.8,386.0 925.3,390.7Q924.9,395.5 927.0,399.0Q929.2,402.6 933.3,405.6Q937.4,408.5 939.9,414.1Q942.4,419.7 943.6,425.4Q944.7,431.1 944.8,436.0L945.0,440.8"/>
<path stroke="#ab784a" stroke-width="3.0" d="M766.4,285.2Q763.3,291.0 762.3,295.0Q761.3,299.0 760.3,302.9Q759.3,306.8 757.6,309.6Q755.9,312.4 753.1,313.9Q750.3,315.3 746.7,316.0Q743.1,316.6 739.5,318.3Q735.9,320.0 733.3,322.8Q730.7,325.5 729.4,328.5Q728.1,331.6 727.6,334.8Q727.1,338.1 726.2,341.7Q725.3,345.4 723.2,348.0Q721.0,350.7 717.7,353.9Q714.5,357.1 711.1,360.5Q707.8,363.9 705.9,367.4Q704.1,371.0 704.4,374.6Q704.8,378.2 706.8,382.3Q708.9,386.3 710.9,392.1Q712.9,397.9 713.1,402.4Q713.4,407.0 711.1,410.0Q708.8,413.0 704.9,415.2Q701.0,417.4 697.6,421.2Q694.2,425.0 693.0,429.3Q691.7,433.5 693.0,437.5Q694.2,441.4 696.3,447.1Q698.4,452.8 699.2,457.8Q700.0,462.9 697.9,466.6Q695.8,470.3 691.3,474.2Q686.8,478.0 682.2,483.9Q677.6,489.8 675.6,495.2Q673.5,500.6 675.3,505.0Q677.0,509.4 681.4,512.9Q685.9,516.5 690.3,522.7Q694.7,528.9 696.3,534.6Q697.9,540.3 695.9,544.8Q693.9,549.2 689.9,553.7Q685.9,558.1 683.0,564.7L680.2,571.3"/>
<path stroke="#7c583a" stroke-width="4.3" d="M767.9,258.0Q772.2,258.6 774.6,259.8Q777.0,260.9 778.0,262.3Q779.0,263.7 778.1,265.2Q777.2,266.6 775.4,268.0Q773.6,269.5 772.8,271.9Q772.0,274.3 772.9,275.9Q773.9,277.4 775.3,279.1Q776.8,280.8 776.9,282.9Q777.0,285.0 775.4,288.4Q773.7,291.7 772.1,295.2Q770.5,298.7 771.2,301.1Q771.9,303.6 775.3,304.8Q778.7,306.1 782.7,309.4Q786.6,312.7 788.1,316.1Q789.7,319.5 788.2,322.3Q786.7,325.1 784.4,328.2Q782.1,331.2 781.9,335.0Q781.7,338.8 784.2,342.4Q786.6,346.0 789.1,350.4Q791.6,354.9 791.1,358.7Q790.6,362.5 786.9,366.6Q783.2,370.6 779.6,376.6Q775.9,382.6 776.0,387.2Q776.0,391.7 780.0,394.8Q784.1,397.8 788.7,402.5Q793.3,407.2 794.6,412.4Q795.9,417.6 793.4,421.9Q790.8,426.1 788.1,432.1Q785.3,438.2 786.2,443.3Q787.0,448.4 791.6,454.0Q796.1,459.6 800.1,466.4Q804.2,473.3 803.6,478.9Q802.9,484.5 797.7,488.8Q792.5,493.2 787.3,501.4Q782.1,509.6 781.8,516.1Q781.4,522.6 786.0,527.4Q790.5,532.2 795.2,539.1Q800.0,545.9 800.1,552.7Q800.2,559.4 795.9,566.1Q791.6,572.8 788.0,581.3Q784.3,589.8 786.1,596.4L787.8,603.0"/>
<path stroke="#7f5a3b" stroke-width="3.9" d="M874.9,317.5Q876.4,318.9 877.5,319.7Q878.7,320.6 879.7,321.8Q880.8,323.1 881.1,324.7Q881.5,326.3 880.9,328.8Q880.3,331.4 879.2,334.7Q878.1,338.1 877.6,341.2Q877.0,344.3 878.1,346.7Q879.1,349.1 881.7,350.8Q884.4,352.5 887.9,354.7Q891.4,357.0 894.1,360.9Q896.9,364.8 897.9,368.7Q898.9,372.6 898.0,376.5Q897.2,380.4 895.7,384.9Q894.2,389.5 893.7,394.8Q893.3,400.1 895.0,404.7Q896.6,409.2 900.1,414.4Q903.6,419.5 907.1,425.8Q910.6,432.0 912.2,438.1Q913.8,444.3 912.5,450.0Q911.1,455.7 907.6,461.9Q904.1,468.1 900.7,476.8L897.3,485.4"/>
<path stroke="#a57246" stroke-width="3.6" d="M813.9,262.2Q809.7,264.0 808.5,266.0Q807.2,268.1 807.8,269.4Q808.3,270.6 809.3,271.8Q810.3,273.0 809.8,275.1Q809.3,277.1 807.8,279.8Q806.3,282.4 806.3,284.4Q806.4,286.5 809.3,287.4Q812.3,288.4 815.8,291.5Q819.4,294.6 820.3,297.2Q821.1,299.9 818.9,301.8Q816.7,303.7 814.6,306.2Q812.5,308.8 813.3,311.4Q814.1,314.0 816.2,317.5Q818.3,321.0 818.1,324.1Q817.8,327.1 814.4,330.7Q810.9,334.4 807.9,339.0Q804.9,343.6 806.4,346.7Q807.8,349.7 812.6,352.1Q817.3,354.4 820.3,359.2Q823.2,363.9 821.7,367.4Q820.2,370.8 817.2,374.8Q814.3,378.7 814.7,382.8Q815.2,386.9 819.2,392.0Q823.1,397.1 825.4,402.3Q827.6,407.6 824.3,411.1Q821.0,414.7 815.2,420.4Q809.4,426.1 807.6,431.7Q805.8,437.4 809.7,441.0Q813.7,444.7 818.3,450.0Q822.9,455.2 822.4,460.4Q821.9,465.6 817.6,471.4Q813.4,477.1 812.0,483.3Q810.7,489.4 815.4,494.1Q820.1,498.8 825.9,506.7Q831.8,514.6 831.5,520.5Q831.2,526.5 824.8,530.6Q818.3,534.7 813.2,542.9Q808.0,551.0 809.9,556.9Q811.8,562.7 817.3,568.8Q822.9,574.9 824.1,582.0Q825.3,589.2 820.0,595.7L814.7,602.2"/>
<path stroke="#7f5a3b" stroke-width="3.3" d="M703.9,263.8Q697.3,265.0 693.9,265.0Q690.5,264.9 686.9,264.6Q683.3,264.4 679.8,265.0Q676.2,265.7 672.9,266.9Q669.6,268.2 667.5,270.1Q665.5,272.0 663.5,274.4Q661.5,276.8 659.5,279.3Q657.5,281.9 655.8,284.4Q654.1,286.9 652.5,289.0Q650.8,291.0 649.0,293.4Q647.2,295.8 645.3,298.6Q643.5,301.4 641.8,304.5Q640.1,307.7 638.7,311.7Q637.3,315.6 635.8,320.4Q634.3,325.2 632.9,329.4Q631.4,333.5 630.0,336.7Q628.6,340.0 627.0,342.5Q625.5,345.1 623.6,348.6Q621.8,352.1 620.0,356.6Q618.2,361.2 616.9,365.7Q615.6,370.2 614.8,374.6Q613.9,379.0 613.4,384.4Q612.9,389.7 612.8,394.9Q612.6,400.1 610.8,404.7Q609.1,409.3 607.0,415.4Q605.0,421.4 604.2,427.7Q603.4,433.9 603.2,439.8Q603.1,445.6 604.1,450.8Q605.1,456.0 608.6,462.1Q612.1,468.2 614.9,475.2Q617.7,482.3 618.4,488.8Q619.1,495.3 617.7,501.5L616.3,507.6"/>
<path stroke="#93683f" stroke-width="4.2" d="M754.4,300.1Q753.5,306.0 752.3,308.2Q751.2,310.3 749.3,311.7Q747.4,313.1 745.3,314.5Q743.2,315.8 741.8,318.0Q740.4,320.2 739.6,323.0Q738.8,325.9 737.8,328.5Q736.8,331.2 734.7,333.2Q732.7,335.1 729.9,337.8Q727.2,340.5 725.3,343.4Q723.3,346.3 723.0,349.3Q722.7,352.3 723.6,355.6Q724.4,358.8 724.6,362.9Q724.8,366.9 723.4,369.9Q722.0,373.0 719.8,375.7Q717.5,378.4 716.2,382.0Q714.9,385.6 715.3,389.6Q715.6,393.7 716.4,398.4Q717.2,403.1 716.3,407.0Q715.5,410.8 712.5,413.6Q709.5,416.3 706.1,420.8Q702.8,425.3 701.4,429.7Q700.1,434.1 701.2,438.1Q702.3,442.1 703.8,446.8Q705.4,451.5 705.0,456.2Q704.6,460.9 702.1,465.2Q699.7,469.4 697.6,474.6Q695.4,479.8 695.9,484.5Q696.3,489.3 698.8,494.8Q701.4,500.4 703.1,506.5Q704.8,512.6 703.3,517.4Q701.9,522.2 698.1,526.5Q694.3,530.7 691.4,536.9Q688.5,543.1 688.9,548.6Q689.3,554.0 691.8,559.3Q694.3,564.7 695.5,571.1Q696.7,577.5 694.6,582.8L692.6,588.1"/>
<path stroke="#7c583a" stroke-width="4.3" d="M793.6,293.8Q787.7,297.2 785.3,299.5Q783.0,301.7 781.4,305.0Q779.7,308.3 777.9,311.5Q776.1,314.7 773.3,316.2Q770.4,317.7 767.2,318.9Q764.0,320.1 761.7,322.6Q759.4,325.1 757.7,328.2Q756.0,331.3 753.5,333.5Q750.9,335.8 747.6,338.2Q744.2,340.6 741.9,343.5Q739.7,346.4 739.3,349.7Q738.9,353.1 738.6,357.5Q738.3,362.0 736.1,364.7Q733.9,367.4 731.0,369.8Q728.1,372.2 726.9,375.7Q725.7,379.3 725.5,383.9Q725.4,388.5 723.6,391.7Q721.8,395.0 717.9,397.8Q714.1,400.5 711.4,404.3Q708.8,408.2 709.1,412.0Q709.4,415.9 710.3,420.5Q711.1,425.1 709.4,428.8Q707.7,432.5 705.0,436.5Q702.3,440.5 702.0,444.6Q701.8,448.8 703.6,454.4Q705.4,459.9 705.0,464.6Q704.7,469.3 701.0,472.4Q697.3,475.5 694.3,480.7Q691.3,485.8 692.0,490.3Q692.8,494.8 694.5,499.9Q696.2,505.0 694.9,509.6Q693.5,514.1 690.4,519.7Q687.4,525.3 687.6,530.3Q687.7,535.4 691.2,540.8Q694.6,546.2 696.2,552.2Q697.7,558.2 694.8,562.5Q691.9,566.9 689.0,572.9Q686.1,578.8 687.4,584.0Q688.8,589.2 691.6,595.3L694.5,601.5"/>
<path stroke="#8c6340" stroke-width="3.8" d="M747.4,266.5Q743.4,268.7 741.6,270.2Q739.8,271.7 738.6,274.0Q737.4,276.4 736.3,278.8Q735.2,281.2 733.2,282.8Q731.2,284.4 728.4,286.4Q725.6,288.4 723.3,290.8Q721.0,293.2 720.3,295.9Q719.6,298.6 720.0,301.4Q720.4,304.3 720.2,307.9Q720.0,311.4 718.3,313.9Q716.6,316.4 714.6,319.0Q712.6,321.6 711.8,324.8Q711.1,327.9 711.7,332.3Q712.2,336.6 712.0,340.5Q711.8,344.4 709.4,346.8Q707.0,349.3 703.5,352.2Q699.9,355.1 697.7,358.9Q695.5,362.7 695.8,366.4Q696.1,370.0 697.2,374.0Q698.2,378.0 697.4,382.0Q696.7,386.0 694.1,389.9Q691.6,393.8 689.9,398.1Q688.1,402.5 689.1,406.5Q690.0,410.5 692.3,416.2Q694.6,421.9 694.8,426.8Q695.1,431.8 692.2,435.2Q689.3,438.7 685.7,443.1Q682.0,447.4 680.9,452.4Q679.9,457.3 681.5,461.8Q683.1,466.3 684.1,472.0Q685.1,477.7 683.1,482.1Q681.0,486.6 677.5,492.6Q674.0,498.6 672.9,504.1Q671.8,509.6 674.5,514.2Q677.2,518.9 680.6,525.6Q684.0,532.4 684.0,538.1Q684.0,543.9 680.6,548.4Q677.1,552.9 674.3,559.2Q671.5,565.6 672.5,571.2Q673.5,576.8 676.5,583.5Q679.5,590.2 680.0,596.7L680.4,603.1"/>
<path stroke="#8c6340" stroke-width="3.0" d="M768.6,303.1Q763.3,308.8 759.7,310.7Q756.2,312.6 751.8,314.5Q747.4,316.4 744.3,319.0Q741.3,321.7 740.7,325.4Q740.2,329.1 740.1,334.3Q740.0,339.5 737.8,342.6Q735.6,345.7 731.9,347.0Q728.2,348.2 726.0,351.3Q723.7,354.4 723.6,359.7Q723.4,364.9 721.9,368.6Q720.4,372.4 715.4,372.8Q710.4,373.2 704.9,376.0Q699.4,378.9 697.8,382.5Q696.3,386.0 698.0,390.0Q699.7,393.9 699.6,398.8Q699.6,403.7 695.8,406.0Q692.0,408.3 688.9,412.0Q685.8,415.7 687.3,420.1Q688.9,424.6 691.8,431.5Q694.7,438.4 692.6,441.7Q690.6,444.9 683.8,445.9Q677.0,446.9 672.6,451.2Q668.2,455.6 669.9,459.5Q671.5,463.4 674.1,468.5Q676.7,473.7 673.8,476.8Q671.0,480.0 665.4,485.0Q659.8,489.9 659.5,494.3Q659.1,498.7 665.1,503.7Q671.0,508.6 674.8,515.2Q678.5,521.9 674.3,524.6Q670.0,527.3 663.3,531.1Q656.6,534.9 656.4,539.6Q656.3,544.3 661.3,549.5Q666.4,554.7 667.0,559.9Q667.7,565.0 660.9,569.3Q654.2,573.6 648.9,580.3Q643.6,587.0 647.8,590.7L652.0,594.4"/>
<path stroke="#93683f" stroke-width="3.9" d="M722.5,326.4Q722.0,329.5 721.2,330.5Q720.5,331.5 718.9,331.7Q717.3,331.9 715.2,332.5Q713.1,333.2 711.5,334.8Q709.9,336.4 709.4,338.4Q708.9,340.3 708.9,342.4Q708.9,344.5 708.4,346.8Q707.8,349.1 706.2,351.6Q704.7,354.2 703.0,357.0Q701.3,359.8 700.8,362.7Q700.3,365.6 701.3,368.6Q702.4,371.6 703.8,376.0Q705.2,380.4 705.1,384.2Q705.0,388.0 703.0,390.9Q701.0,393.8 698.4,397.1Q695.8,400.5 694.5,404.7Q693.2,409.0 693.8,413.1Q694.5,417.1 695.4,422.3Q696.4,427.4 695.7,432.1Q695.0,436.7 692.3,441.3Q689.6,446.0 686.9,451.7Q684.1,457.5 683.6,462.9Q683.1,468.2 685.3,473.1Q687.4,478.0 690.0,484.4Q692.6,490.9 692.9,497.2Q693.3,503.4 691.0,508.8Q688.6,514.1 685.9,520.5Q683.1,526.9 682.7,533.5Q682.2,540.1 684.3,546.8Q686.4,553.4 688.6,561.4L690.7,569.3"/>
<path stroke="#8f6541" stroke-width="3.5" d="M793.8,232.9Q794.0,235.2 793.8,236.7Q793.5,238.1 793.5,239.5Q793.6,240.8 794.5,241.6Q795.4,242.4 797.0,243.0Q798.6,243.5 800.1,245.1Q801.6,246.8 802.1,248.5Q802.7,250.2 802.5,251.9Q802.3,253.7 802.1,255.6Q802.0,257.5 802.7,259.6Q803.4,261.8 804.6,264.2Q805.8,266.6 806.4,269.1Q807.1,271.6 806.5,274.0Q805.9,276.3 804.6,279.7Q803.3,283.0 802.7,286.3Q802.2,289.6 803.2,292.3Q804.2,295.0 806.1,297.4Q808.1,299.9 809.5,303.4Q810.9,306.9 810.9,310.2Q810.9,313.6 810.1,317.3Q809.4,321.1 809.5,324.9Q809.5,328.8 811.1,332.5Q812.7,336.2 814.8,340.7Q816.9,345.2 817.6,349.6Q818.4,353.9 817.2,357.9Q815.9,361.8 813.9,366.6Q811.9,371.4 811.2,376.5Q810.5,381.6 811.8,386.0Q813.1,390.3 815.2,394.9Q817.3,399.4 818.1,404.7Q818.9,410.0 817.8,415.1Q816.7,420.3 815.3,426.4Q813.9,432.5 814.3,438.0Q814.7,443.5 817.2,448.5Q819.7,453.5 822.5,460.1Q825.3,466.8 826.0,472.9Q826.7,479.1 824.9,484.6Q823.1,490.2 820.8,496.6Q818.6,503.1 818.3,509.8Q818.0,516.5 820.0,522.4Q821.9,528.4 824.0,535.6Q826.1,542.9 826.0,549.7Q825.8,556.5 823.5,563.6Q821.1,570.7 819.1,578.7Q817.0,586.8 817.8,594.0L818.5,601.2"/>
<path stroke="#7f5a3b" stroke-width="2.9" d="M688.6,281.6Q683.3,287.1 681.3,290.1Q679.2,293.2 677.3,296.4Q675.3,299.6 673.0,302.6Q670.6,305.6 667.9,308.1Q665.2,310.6 662.8,313.5Q660.3,316.4 658.6,319.8Q656.9,323.3 655.9,327.5Q654.9,331.6 653.6,335.5Q652.3,339.3 649.9,342.0Q647.6,344.7 644.3,346.6Q641.0,348.5 637.8,351.8Q634.7,355.1 632.8,358.6Q631.0,362.1 630.5,365.8Q630.0,369.4 629.8,373.3Q629.6,377.2 628.3,380.9Q627.0,384.6 624.7,388.2Q622.3,391.7 620.1,395.7Q617.9,399.7 617.3,403.6Q616.7,407.5 617.9,411.6Q619.1,415.7 620.5,420.9Q622.0,426.2 621.7,430.4Q621.5,434.7 619.2,438.0Q616.9,441.3 614.0,445.1Q611.1,449.0 609.9,453.6Q608.6,458.2 609.5,462.3Q610.5,466.4 612.2,471.2Q613.9,476.0 614.2,480.6Q614.5,485.3 612.5,489.5Q610.6,493.7 608.7,499.4Q606.9,505.1 607.2,510.3Q607.5,515.4 608.9,519.5Q610.4,523.5 613.6,528.2Q616.8,532.8 619.2,538.2Q621.5,543.6 621.0,548.4L620.4,553.1"/>
<path stroke="#86603d" stroke-width="4.1" d="M782.3,288.7Q783.1,291.0 784.3,291.8Q785.6,292.5 787.7,293.0Q789.7,293.5 791.9,295.4Q794.1,297.3 795.6,299.4Q797.1,301.4 797.4,303.5Q797.7,305.5 797.0,307.5Q796.3,309.5 795.4,311.7Q794.5,313.8 794.3,316.4Q794.2,319.1 795.2,321.5Q796.1,324.0 797.8,327.1Q799.5,330.1 800.8,333.3Q802.1,336.4 802.1,339.4Q802.1,342.5 800.5,345.5Q799.0,348.5 796.8,353.3Q794.6,358.0 793.2,362.5Q791.8,366.9 792.4,370.6Q792.9,374.3 795.5,377.2Q798.1,380.1 801.6,383.0Q805.1,386.0 807.9,390.8Q810.6,395.5 811.3,400.0Q812.0,404.4 810.8,408.6Q809.6,412.7 807.8,417.5Q806.0,422.4 805.4,427.8Q804.8,433.1 806.4,437.6Q808.0,442.1 811.4,447.3Q814.8,452.4 818.2,458.5Q821.5,464.6 822.9,470.3Q824.3,476.0 822.8,481.2Q821.3,486.3 817.7,491.3Q814.2,496.4 810.7,504.1Q807.2,511.8 806.1,518.6Q805.0,525.4 807.1,531.0Q809.1,536.6 813.3,541.4Q817.5,546.3 821.5,553.2Q825.4,560.0 826.8,567.0L828.3,574.0"/>
<path stroke="#8f6541" stroke-width="3.3" d="M837.0,284.2Q847.0,292.5 852.0,296.2Q857.1,299.8 861.1,304.4Q865.2,309.0 868.2,314.5Q871.3,320.0 874.7,324.4Q878.1,328.9 883.0,330.9Q887.9,333.0 893.6,335.7Q899.2,338.4 903.4,341.8Q907.5,345.2 908.9,349.3Q910.2,353.4 910.1,358.1Q910.0,362.8 911.2,367.2Q912.5,371.5 916.0,373.0Q919.5,374.6 923.1,377.4Q926.6,380.3 927.1,383.4Q927.7,386.5 925.2,391.5Q922.8,396.5 921.2,400.7Q919.5,404.9 922.2,405.8Q924.8,406.7 930.4,407.5Q936.0,408.3 938.6,411.8Q941.2,415.3 939.9,417.1Q938.7,419.0 934.0,420.0Q929.3,420.9 927.6,422.6Q925.9,424.3 928.5,426.8L931.1,429.3"/>
<path stroke="#7c583a" stroke-width="2.9" d="M795.3,244.6Q800.5,247.8 803.0,249.5Q805.6,251.1 808.3,252.7Q810.9,254.2 813.7,255.8Q816.5,257.3 819.2,259.1Q821.8,260.9 824.0,263.1Q826.2,265.3 828.0,268.4Q829.7,271.6 831.5,274.8Q833.2,278.0 835.5,280.3Q837.7,282.7 840.7,284.2Q843.7,285.6 847.0,287.2Q850.2,288.8 853.1,291.4Q855.9,294.0 857.8,297.1Q859.7,300.1 861.0,303.4Q862.3,306.6 863.7,310.3Q865.2,314.1 867.5,317.0Q869.8,320.0 872.8,323.2Q875.8,326.5 878.5,330.0Q881.3,333.6 882.8,337.4Q884.3,341.3 884.5,345.3Q884.7,349.3 884.5,354.6Q884.4,360.0 885.1,364.7Q885.9,369.5 888.3,373.1Q890.6,376.8 893.9,380.0Q897.1,383.2 899.8,387.9Q902.4,392.6 903.5,397.3Q904.5,402.0 904.4,407.2Q904.2,412.3 904.2,418.0Q904.2,423.8 905.8,428.7Q907.4,433.6 910.5,438.1Q913.7,442.6 917.0,448.4Q920.4,454.1 922.0,459.8L923.7,465.5"/>
<path stroke="#7f5a3b" stroke-width="2.9" d="M815.7,241.5Q818.1,244.6 819.5,245.9Q820.9,247.1 822.6,248.2Q824.3,249.3 825.7,250.9Q827.2,252.5 828.0,254.9Q828.8,257.3 829.1,260.3Q829.4,263.2 830.0,265.9Q830.7,268.6 832.4,270.6Q834.1,272.6 836.7,274.3Q839.3,276.1 841.8,279.2Q844.3,282.4 845.4,285.7Q846.6,289.0 846.4,292.4Q846.1,295.8 845.6,299.6Q845.1,303.5 845.5,307.5Q846.0,311.5 847.8,315.4Q849.6,319.3 851.6,323.9Q853.6,328.6 854.2,333.2Q854.7,337.9 853.4,342.2Q852.1,346.6 850.0,352.6Q848.0,358.7 847.2,364.4Q846.5,370.0 848.0,375.0Q849.6,379.9 852.4,384.8Q855.3,389.8 857.3,396.3Q859.2,402.8 858.9,408.8Q858.5,414.8 856.4,420.8Q854.3,426.7 852.6,433.8L851.0,440.9"/>
<path stroke="#86603d" stroke-width="3.3" d="M770.2,244.7Q765.5,245.6 763.4,247.0Q761.4,248.4 759.7,250.7Q758.0,252.9 756.4,255.1Q754.9,257.2 752.9,258.2Q750.9,259.2 748.0,258.7Q745.2,258.2 741.6,257.7Q738.1,257.3 734.6,258.3Q731.1,259.3 728.6,261.1Q726.1,262.9 725.0,265.5Q723.9,268.0 723.7,270.8Q723.5,273.7 723.0,276.8Q722.6,279.9 721.0,282.4Q719.5,285.0 716.7,287.0Q714.0,289.1 711.2,291.9Q708.5,294.6 707.0,297.7Q705.5,300.8 706.0,304.1Q706.5,307.4 708.2,312.7Q709.9,318.1 711.0,323.2Q712.2,328.2 711.2,331.8Q710.3,335.4 706.8,337.5Q703.3,339.6 698.7,341.7Q694.1,343.9 690.4,348.3Q686.7,352.8 685.6,357.2Q684.5,361.5 685.8,365.6Q687.0,369.7 688.8,374.7Q690.7,379.6 690.9,384.8Q691.1,390.0 688.7,394.0Q686.2,398.0 682.2,403.6Q678.1,409.2 674.9,415.1Q671.7,421.0 671.5,426.4Q671.3,431.7 674.4,436.3Q677.6,440.9 682.2,447.3Q686.9,453.6 690.1,460.8Q693.2,467.9 692.8,473.8Q692.4,479.6 688.8,484.4Q685.1,489.1 680.6,494.9Q676.2,500.6 673.9,507.8Q671.7,515.0 673.1,521.2Q674.5,527.3 678.5,533.8Q682.4,540.2 685.8,548.2Q689.3,556.1 689.4,563.2Q689.5,570.2 685.8,576.1L682.1,582.1"/>
<path stroke="#86603d" stroke-width="3.6" d="M782.8,250.9Q787.9,251.6 790.9,251.4Q793.8,251.3 796.2,252.7Q798.5,254.1 800.2,256.6Q801.9,259.0 804.1,260.7Q806.2,262.4 809.6,263.8Q813.0,265.1 816.1,267.1Q819.3,269.2 820.3,272.0Q821.2,274.9 820.5,278.8Q819.8,282.7 820.2,286.7Q820.6,290.6 823.4,292.5Q826.2,294.3 829.1,296.9Q832.0,299.4 832.5,303.0Q832.9,306.6 831.9,311.8Q830.9,317.0 832.2,320.7Q833.4,324.3 837.9,326.7Q842.5,329.1 846.5,333.7Q850.5,338.2 850.3,342.4Q850.1,346.7 847.3,351.2Q844.5,355.8 844.1,361.0Q843.7,366.2 847.0,370.2Q850.4,374.1 853.0,379.7Q855.7,385.2 853.8,389.9Q851.9,394.5 847.9,401.6Q843.9,408.7 843.9,414.3Q843.9,420.0 848.9,423.9L853.9,427.9"/>
<path stroke="#7c583a" stroke-width="3.0" d="M699.8,302.9Q693.9,303.6 691.0,303.9Q688.1,304.2 685.4,305.4Q682.8,306.6 680.6,308.9Q678.5,311.3 676.6,313.9Q674.7,316.5 672.5,318.1Q670.2,319.7 667.1,319.8Q664.0,319.9 660.1,320.3Q656.3,320.6 652.6,322.3Q649.0,323.9 646.7,326.4Q644.4,328.9 643.7,332.0Q643.0,335.1 642.9,338.4Q642.9,341.7 642.1,345.5Q641.3,349.2 639.0,351.7Q636.7,354.1 633.7,357.1Q630.7,360.2 628.6,363.7Q626.5,367.3 626.5,371.0Q626.5,374.7 628.2,379.9Q629.9,385.0 631.4,390.5Q632.8,396.0 632.0,400.1Q631.2,404.2 627.7,407.1Q624.3,409.9 619.8,413.7Q615.4,417.4 612.6,422.8Q609.7,428.1 609.9,432.9Q610.1,437.8 612.5,442.2Q614.8,446.6 616.7,452.7Q618.7,458.8 618.0,464.1Q617.4,469.4 614.3,474.9Q611.1,480.4 608.4,487.5Q605.6,494.5 606.1,500.8Q606.5,507.1 608.5,512.2Q610.5,517.3 615.7,523.8Q620.9,530.3 624.6,537.8Q628.3,545.3 628.1,551.8Q627.9,558.3 625.9,564.1L624.0,570.0"/>
<path stroke="#7c583a" stroke-width="4.2" d="M780.2,270.8Q773.8,272.7 770.5,273.9Q767.1,275.1 764.6,276.9Q762.0,278.7 760.9,281.3Q759.7,283.9 759.5,286.8Q759.4,289.8 758.9,293.8Q758.5,297.8 756.8,300.3Q755.2,302.8 752.4,304.2Q749.7,305.5 747.2,307.3Q744.7,309.2 743.5,312.4Q742.4,315.6 742.5,320.1Q742.5,324.6 742.2,328.7Q741.8,332.7 739.4,334.8Q737.0,336.9 732.5,337.5Q728.1,338.0 723.4,341.0Q718.7,343.9 716.0,347.2Q713.4,350.5 713.6,354.1Q713.9,357.6 715.3,361.3Q716.7,364.9 716.8,369.5Q716.9,374.2 714.4,377.1Q711.9,379.9 708.3,383.6Q704.6,387.3 702.5,391.3Q700.4,395.3 701.5,399.2Q702.6,403.1 705.6,409.4Q708.6,415.7 710.3,421.5Q711.9,427.4 709.7,430.9Q707.5,434.5 702.1,436.3Q696.7,438.1 691.5,442.7Q686.4,447.3 684.7,452.1Q682.9,457.0 684.9,461.3Q686.8,465.6 689.3,471.2Q691.9,476.9 691.4,482.0Q690.9,487.1 686.7,491.2Q682.5,495.3 677.6,501.4Q672.6,507.5 671.0,513.0Q669.4,518.6 672.7,523.1Q676.0,527.5 681.6,534.2Q687.1,540.9 690.1,548.0Q693.1,555.1 690.8,560.0Q688.5,564.8 682.7,568.2Q676.9,571.7 672.4,578.6Q667.9,585.4 668.2,591.2Q668.6,597.0 672.9,602.9L677.2,608.7"/>
<path stroke="#7c583a" stroke-width="4.0" d="M826.2,304.7Q829.8,308.9 829.9,310.5Q830.0,312.2 829.0,313.6Q828.0,315.1 827.9,317.0Q827.7,318.8 828.9,321.3Q830.1,323.7 830.7,326.2Q831.4,328.6 829.6,330.4Q827.9,332.2 824.9,335.5Q821.8,338.9 820.6,342.1Q819.4,345.3 821.4,347.4Q823.4,349.5 826.2,351.9Q829.1,354.3 829.7,357.5Q830.2,360.8 828.5,363.9Q826.8,367.1 826.3,370.8Q825.7,374.4 828.3,377.8Q831.0,381.1 834.3,385.8Q837.7,390.5 837.6,394.2Q837.5,398.0 833.6,400.8Q829.7,403.6 826.3,409.1Q822.9,414.7 823.8,418.7Q824.7,422.7 828.3,426.1Q831.9,429.4 833.2,434.3Q834.5,439.2 831.8,444.1Q829.1,448.9 826.6,454.9Q824.0,460.9 826.3,465.1Q828.5,469.4 834.2,474.6Q839.9,479.7 843.1,485.9Q846.2,492.0 843.4,496.6Q840.7,501.1 835.8,506.7Q831.0,512.3 830.4,518.4Q829.9,524.5 834.1,529.4Q838.3,534.3 841.3,541.1Q844.3,547.9 841.5,553.2Q838.7,558.4 833.4,566.8Q828.0,575.2 827.5,582.1Q826.9,588.9 833.0,593.2L839.1,597.5"/>
<path stroke="#8c6340" stroke-width="4.1" d="M769.3,261.7Q769.1,262.3 768.3,262.2Q767.4,262.2 765.6,262.7Q763.7,263.2 761.6,264.5Q759.4,265.8 758.1,267.3Q756.7,268.7 756.9,270.1Q757.1,271.5 758.8,272.6Q760.5,273.8 762.6,275.3Q764.8,276.8 766.0,279.2Q767.2,281.7 766.9,283.6Q766.6,285.6 765.1,287.3Q763.7,288.9 762.5,291.4Q761.4,293.8 761.6,296.3Q761.9,298.8 763.7,302.1Q765.5,305.4 767.7,309.1Q769.9,312.9 770.7,316.3Q771.6,319.7 770.0,322.5Q768.4,325.2 765.0,327.6Q761.6,330.1 758.1,334.9Q754.7,339.8 753.2,344.2Q751.7,348.6 753.0,352.2Q754.3,355.8 757.3,359.0Q760.3,362.1 762.9,366.7Q765.4,371.2 765.7,375.9Q766.0,380.5 764.0,384.8Q761.9,389.1 759.3,395.0Q756.7,401.0 755.9,406.5Q755.0,412.0 757.3,416.5Q759.5,421.0 763.9,426.4Q768.3,431.9 772.4,438.8Q776.5,445.7 777.6,451.8Q778.7,457.9 776.1,463.0Q773.5,468.1 768.9,473.1Q764.3,478.1 760.8,486.0Q757.2,493.8 757.1,500.5Q756.9,507.2 760.1,512.8Q763.3,518.4 767.4,525.3Q771.5,532.1 773.5,539.7Q775.4,547.3 773.6,553.9Q771.8,560.5 767.5,568.7Q763.1,576.9 759.5,586.1L755.9,595.2"/>
<path stroke="#8a613e" stroke-width="3.7" d="M697.8,278.3Q700.3,286.5 700.7,290.2Q701.0,294.0 699.2,296.6Q697.4,299.3 695.0,302.1Q692.6,304.9 691.9,308.3Q691.1,311.8 691.4,315.1Q691.7,318.4 690.6,322.0Q689.5,325.5 687.2,329.4Q684.8,333.3 684.1,336.9Q683.4,340.5 685.5,343.7Q687.7,346.9 689.6,351.8Q691.4,356.6 690.1,359.9Q688.8,363.2 686.1,366.1Q683.4,368.9 683.1,372.7Q682.7,376.4 684.1,381.1Q685.5,385.7 684.6,389.4Q683.7,393.1 679.8,396.7Q675.9,400.3 673.3,404.7Q670.7,409.1 672.6,412.5Q674.5,416.0 677.4,420.5Q680.3,425.1 679.5,429.0Q678.7,432.9 675.5,436.5Q672.4,440.0 672.1,444.1Q671.9,448.2 674.9,453.5Q678.0,458.8 678.6,463.6Q679.3,468.3 674.8,470.7Q670.3,473.1 665.9,478.4Q661.4,483.6 662.2,487.6Q663.1,491.6 666.5,496.0Q670.0,500.4 669.5,504.8Q668.9,509.2 664.7,513.6Q660.5,518.0 659.4,522.7Q658.4,527.3 662.7,532.0Q667.0,536.7 670.1,542.9Q673.1,549.1 669.4,552.3Q665.8,555.5 660.0,559.8Q654.3,564.2 654.1,568.8L653.9,573.4"/>
<path stroke="#7f5a3b" stroke-width="3.3" d="M786.5,230.2Q783.9,235.6 781.8,237.2Q779.7,238.8 777.7,240.7Q775.7,242.7 774.8,245.7Q773.8,248.7 773.1,251.9Q772.4,255.2 770.3,257.2Q768.3,259.2 764.8,260.7Q761.3,262.2 758.1,264.9Q755.0,267.7 754.1,270.7Q753.2,273.7 754.0,276.8Q754.8,279.9 754.9,283.7Q755.0,287.4 753.1,290.0Q751.1,292.7 748.9,296.1Q746.7,299.5 746.6,302.9Q746.6,306.3 748.4,311.2Q750.3,316.2 751.0,320.6Q751.7,325.0 749.0,327.7Q746.4,330.3 742.1,333.3Q737.9,336.4 735.8,340.7Q733.8,344.9 735.2,348.6Q736.5,352.3 738.2,356.7Q740.0,361.2 738.7,365.1Q737.5,368.9 734.2,373.9Q730.8,378.8 729.6,383.6Q728.4,388.4 731.4,392.0Q734.4,395.6 738.5,401.7Q742.6,407.8 743.0,412.7Q743.5,417.6 739.8,421.1Q736.1,424.7 732.8,430.2Q729.5,435.8 730.6,440.5Q731.6,445.2 735.2,450.5Q738.8,455.8 739.7,461.2Q740.6,466.7 737.0,471.8Q733.3,476.9 729.6,484.1Q725.8,491.3 727.2,496.5Q728.6,501.8 734.4,505.8Q740.2,509.9 744.5,516.7L748.7,523.4"/>
<path stroke="#86603d" stroke-width="3.0" d="M830.9,249.5Q839.7,251.8 844.2,252.7Q848.6,253.7 852.4,256.1Q856.1,258.6 858.9,261.9Q861.7,265.1 864.3,268.6Q866.9,272.2 870.4,274.2Q873.8,276.3 878.2,278.6Q882.6,281.0 886.6,283.7Q890.6,286.5 892.6,289.9Q894.5,293.4 894.1,297.3Q893.8,301.2 892.8,306.8Q891.8,312.3 892.6,316.3Q893.4,320.2 896.6,322.2Q899.8,324.2 903.5,326.8Q907.1,329.4 908.4,333.2Q909.7,337.0 908.1,341.3Q906.4,345.6 904.2,350.8Q902.0,356.0 902.7,359.6Q903.3,363.3 907.5,365.6Q911.7,368.0 916.4,373.8Q921.2,379.6 922.4,384.6Q923.7,389.6 920.1,392.7Q916.5,395.8 911.1,399.2Q905.8,402.6 903.0,407.3L900.3,411.9"/>
<path stroke="#7f5a3b" stroke-width="2.9" d="M850.8,245.7Q858.6,247.8 862.3,249.1Q866.0,250.4 869.3,252.3Q872.6,254.2 875.1,256.8Q877.6,259.4 879.4,263.7Q881.2,267.9 883.0,272.0Q884.7,276.1 887.0,278.6Q889.4,281.2 892.7,282.1Q896.1,283.0 900.0,283.4Q904.0,283.7 906.1,285.6Q908.3,287.6 910.1,290.5Q911.9,293.5 913.4,296.8Q915.0,300.2 916.8,304.7Q918.5,309.2 919.8,312.7Q921.1,316.3 922.6,318.5Q924.1,320.7 926.2,324.3Q928.3,327.9 930.3,332.0Q932.3,336.1 933.4,340.3Q934.5,344.5 934.7,348.6Q934.9,352.6 934.8,357.2Q934.6,361.8 933.8,367.7Q933.1,373.7 933.3,378.3Q933.6,382.9 935.8,386.6Q938.0,390.2 939.4,394.5Q940.8,398.8 941.8,404.5Q942.8,410.1 942.9,415.0Q943.0,419.9 941.7,425.4Q940.5,430.9 937.1,437.3Q933.7,443.8 932.9,449.5Q932.0,455.2 934.7,460.2L937.3,465.1"/>
<path stroke="#86603d" stroke-width="3.5" d="M738.3,320.0Q739.6,323.6 741.0,325.8Q742.4,328.0 743.4,330.9Q744.5,333.7 744.1,335.9Q743.8,338.2 742.3,340.0Q740.8,341.9 739.4,344.2Q738.1,346.5 738.1,349.3Q738.1,352.1 739.6,355.8Q741.1,359.4 742.5,363.1Q743.9,366.9 743.5,370.1Q743.1,373.3 740.5,376.1Q737.8,378.8 734.5,384.0Q731.1,389.1 729.7,393.8Q728.2,398.5 729.9,402.2Q731.7,405.8 735.5,408.7Q739.4,411.5 742.6,416.7Q745.8,421.9 746.1,426.6Q746.4,431.3 744.1,435.7Q741.8,440.1 739.6,446.5Q737.5,452.8 738.4,458.0Q739.3,463.2 743.6,467.6Q747.9,472.0 753.1,478.7L758.2,485.3"/>
<path stroke="#93683f" stroke-width="3.6" d="M804.1,229.3Q809.4,231.4 811.3,233.2Q813.2,235.1 814.3,237.3Q815.3,239.6 816.5,241.8Q817.6,244.1 819.6,246.3Q821.5,248.5 823.6,250.8Q825.7,253.2 826.7,255.8Q827.6,258.4 827.1,261.5Q826.7,264.7 826.1,268.8Q825.6,272.9 826.7,275.7Q827.9,278.5 830.5,280.2Q833.2,282.0 835.6,284.6Q838.0,287.1 838.7,290.3Q839.4,293.5 839.2,297.3Q839.0,301.2 840.0,304.5Q841.0,307.8 843.9,311.0Q846.8,314.1 849.6,318.0Q852.4,321.9 852.8,325.7Q853.1,329.4 851.1,332.9Q849.1,336.3 847.6,341.5Q846.1,346.6 847.1,350.4Q848.2,354.2 850.9,357.5Q853.7,360.8 855.0,365.2Q856.3,369.7 855.0,374.3Q853.8,378.8 852.1,384.3Q850.5,389.7 851.6,394.0Q852.7,398.3 856.5,402.4Q860.4,406.4 863.5,412.1Q866.6,417.7 866.0,422.4Q865.5,427.2 862.4,431.5Q859.4,435.7 857.7,441.6Q856.1,447.5 857.9,452.2Q859.6,456.8 862.3,462.7Q865.1,468.7 864.9,474.1Q864.7,479.5 861.2,485.1Q857.7,490.7 854.7,497.5Q851.8,504.2 853.0,509.5Q854.3,514.9 858.6,520.2Q862.9,525.4 865.6,532.5Q868.2,539.7 866.3,545.2Q864.4,550.8 860.5,556.7L856.7,562.6"/>
<path stroke="#8f6541" stroke-width="4.1" d="M694.8,308.0Q694.0,308.3 692.4,308.1Q690.9,308.0 688.7,308.4Q686.5,308.7 684.7,310.3Q683.0,312.0 682.4,313.6Q681.9,315.2 682.5,316.8Q683.2,318.3 684.2,320.0Q685.2,321.6 685.5,323.7Q685.8,325.8 684.8,328.3Q683.8,330.8 682.0,333.8Q680.3,336.8 679.2,339.9Q678.1,343.0 678.7,345.7Q679.3,348.5 681.8,351.0Q684.3,353.5 687.3,358.1Q690.3,362.7 692.0,367.0Q693.7,371.3 693.0,374.8Q692.3,378.4 689.5,381.4Q686.7,384.4 683.6,388.4Q680.5,392.3 679.1,397.2Q677.6,402.1 678.6,406.4Q679.6,410.7 682.1,415.4Q684.5,420.2 686.2,425.9Q687.9,431.6 687.2,436.6Q686.4,441.6 683.2,446.8Q680.0,451.9 676.2,458.9Q672.4,465.9 670.6,472.4Q668.9,478.9 670.6,484.5Q672.4,490.0 676.8,494.8Q681.3,499.5 685.8,507.3Q690.3,515.2 692.1,522.5Q693.9,529.9 692.0,536.2Q690.1,542.5 686.1,548.3Q682.1,554.1 679.0,562.6L676.0,571.1"/>
<path stroke="#93683f" stroke-width="3.7" d="M811.3,233.2Q802.5,234.4 798.1,234.9Q793.8,235.5 789.6,236.1Q785.3,236.8 781.2,237.7Q777.1,238.7 773.2,240.0Q769.2,241.4 765.4,243.1Q761.7,244.8 758.0,246.7Q754.4,248.5 750.8,250.2Q747.1,251.9 743.5,253.2Q739.8,254.6 736.1,255.6Q732.3,256.6 728.6,257.8Q724.8,259.0 721.1,260.7Q717.4,262.4 714.0,264.4Q710.5,266.5 707.5,268.9Q704.4,271.3 701.8,274.0Q699.1,276.7 696.6,279.6Q694.1,282.4 691.6,285.6Q689.0,288.7 686.3,291.4Q683.5,294.2 680.6,296.7Q677.6,299.2 674.5,302.1Q671.5,305.1 668.7,308.2Q665.9,311.4 663.7,314.8Q661.5,318.2 659.9,321.9Q658.2,325.5 657.1,329.8Q655.9,334.2 654.8,338.7Q653.7,343.2 652.2,347.4Q650.7,351.6 648.6,355.3Q646.5,359.0 643.9,362.4Q641.2,365.8 638.5,369.5Q635.7,373.2 633.3,377.7Q630.9,382.2 629.3,386.8Q627.7,391.5 627.0,396.1Q626.2,400.8 626.0,405.6L625.8,410.5"/>
<path stroke="#93683f" stroke-width="3.0" d="M804.5,303.1Q808.3,310.2 810.4,313.8Q812.6,317.3 815.2,320.8Q817.8,324.3 820.1,327.9Q822.4,331.4 823.4,335.1Q824.4,338.8 824.5,343.0Q824.5,347.2 824.8,351.7Q825.2,356.2 826.9,359.5Q828.6,362.9 831.1,365.7Q833.6,368.6 835.2,372.2Q836.9,375.9 837.1,380.0Q837.2,384.1 837.3,388.4Q837.3,392.7 838.9,396.0Q840.5,399.4 843.4,403.1Q846.3,406.7 848.5,410.9Q850.6,415.1 850.2,418.8Q849.8,422.6 847.8,426.3Q845.8,430.0 844.8,434.4Q843.9,438.9 845.2,442.3Q846.6,445.8 848.5,449.8Q850.4,453.9 850.3,457.8Q850.1,461.8 847.7,466.0Q845.3,470.2 843.4,474.7Q841.5,479.2 842.5,482.9Q843.5,486.5 846.5,490.7Q849.6,494.9 851.0,500.0Q852.5,505.0 850.5,508.5Q848.5,512.0 844.9,515.4Q841.3,518.8 839.8,523.1L838.3,527.4"/>
<path stroke="#8c6340" stroke-width="3.1" d="M791.1,250.6Q793.2,256.8 793.7,259.7Q794.2,262.6 792.9,264.7Q791.6,266.8 788.8,268.5Q786.0,270.2 783.9,273.4Q781.7,276.6 781.6,279.4Q781.6,282.2 782.7,284.8Q783.9,287.4 784.1,290.4Q784.3,293.3 782.6,296.9Q780.9,300.4 779.3,304.1Q777.6,307.8 778.4,310.8Q779.2,313.9 782.4,317.5Q785.6,321.0 788.2,325.6Q790.7,330.2 789.9,333.6Q789.0,336.9 785.6,339.4Q782.2,341.8 779.9,346.2Q777.6,350.5 778.6,354.1Q779.6,357.7 782.0,362.1Q784.4,366.5 784.4,370.6Q784.4,374.7 781.0,378.9Q777.6,383.1 774.1,388.6Q770.7,394.2 771.4,398.4Q772.1,402.6 776.8,405.6Q781.5,408.7 785.5,414.6Q789.6,420.6 789.0,425.1Q788.4,429.6 784.6,433.3Q780.7,437.0 778.7,442.7Q776.7,448.4 779.4,452.6Q782.1,456.7 786.4,463.1Q790.7,469.6 791.1,474.8Q791.5,480.1 786.6,484.2Q781.7,488.3 776.5,495.8Q771.3,503.3 771.5,508.8L771.8,514.3"/>
<path stroke="#86603d" stroke-width="3.6" d="M881.3,273.4Q882.2,277.7 882.3,279.9Q882.4,282.1 882.5,284.5Q882.7,286.8 883.3,289.3Q883.9,291.9 885.1,294.7Q886.3,297.5 887.6,300.4Q889.0,303.4 889.8,306.3Q890.5,309.3 890.3,312.1Q890.0,315.0 888.8,317.8Q887.6,320.5 886.3,324.7Q884.9,328.8 884.4,332.6Q884.0,336.4 884.9,339.7Q885.7,343.0 887.7,345.9Q889.6,348.8 891.6,352.3Q893.5,355.7 894.5,359.7Q895.4,363.6 895.0,367.4Q894.7,371.2 893.6,376.0Q892.6,380.7 892.1,385.4Q891.6,390.1 892.8,394.2Q893.9,398.2 896.7,401.9Q899.4,405.6 902.5,410.8Q905.7,416.0 907.7,421.1Q909.6,426.1 909.5,430.8Q909.3,435.5 907.3,439.9Q905.4,444.3 903.1,449.9Q900.9,455.6 900.1,461.5Q899.3,467.4 900.8,472.3L902.3,477.2"/>
<path stroke="#9c6c43" stroke-width="3.0" d="M810.3,243.4Q812.2,247.2 813.0,249.2Q813.7,251.2 814.8,253.2Q815.9,255.1 817.7,257.0Q819.4,258.9 821.2,261.0Q823.0,263.1 824.1,265.4Q825.2,267.8 825.0,270.4Q824.9,273.0 824.0,277.1Q823.0,281.2 822.5,285.0Q822.0,288.8 823.0,291.4Q824.0,294.1 826.7,295.8Q829.4,297.5 832.7,299.4Q836.1,301.3 838.5,304.8Q840.9,308.2 841.4,311.6Q841.9,315.0 841.1,318.3Q840.2,321.7 839.4,325.9Q838.7,330.2 839.6,333.8Q840.6,337.5 843.3,341.3Q846.0,345.0 849.1,349.7Q852.2,354.4 853.5,358.9Q854.9,363.4 853.6,367.4Q852.2,371.4 848.8,375.6Q845.5,379.8 842.5,385.8Q839.5,391.9 839.0,396.9Q838.5,402.0 840.9,406.0Q843.3,410.1 846.9,414.2Q850.5,418.3 852.7,424.2Q854.9,430.1 854.1,435.2Q853.3,440.3 850.3,445.7Q847.3,451.2 844.7,457.7Q842.1,464.2 842.3,469.9Q842.5,475.6 846.0,480.3Q849.4,485.0 853.9,492.7Q858.5,500.4 860.9,507.6L863.2,514.9"/>
<path stroke="#86603d" stroke-width="3.6" d="M820.5,272.2Q828.1,278.3 831.2,281.6Q834.4,284.9 836.3,288.4Q838.2,292.0 838.9,295.8Q839.7,299.5 840.3,303.3Q840.9,307.1 842.4,311.0Q843.8,314.9 846.3,318.0Q848.7,321.2 851.2,324.8Q853.6,328.4 854.9,332.1Q856.1,335.8 855.8,340.2Q855.4,344.7 854.4,350.0Q853.4,355.4 853.6,359.8Q853.8,364.1 856.3,366.9Q858.7,369.7 862.8,371.5Q867.0,373.4 870.7,377.6Q874.4,381.7 875.8,385.8Q877.2,389.8 876.2,393.5Q875.2,397.2 873.5,401.3Q871.8,405.5 871.8,409.7Q871.8,414.0 874.3,417.4Q876.7,420.8 880.1,425.6Q883.5,430.4 885.1,434.9Q886.6,439.4 884.8,443.0Q882.9,446.6 878.6,450.6Q874.3,454.7 870.7,460.1Q867.0,465.5 866.7,469.7Q866.4,473.8 869.6,476.9Q872.8,480.0 876.8,484.3Q880.8,488.5 882.2,493.7Q883.6,498.8 881.2,502.3Q878.8,505.8 874.5,509.9Q870.2,514.1 867.6,518.8L865.0,523.6"/>
<path stroke="#8a613e" stroke-width="3.1" d="M768.6,277.6Q764.4,278.5 762.8,279.8Q761.2,281.0 760.1,282.6Q759.0,284.2 757.8,285.8Q756.5,287.5 754.5,289.0Q752.6,290.6 750.4,292.3Q748.2,294.0 746.9,296.1Q745.6,298.3 745.7,300.7Q745.9,303.2 746.7,306.9Q747.6,310.6 747.5,313.9Q747.5,317.3 745.7,319.3Q744.0,321.3 741.2,322.9Q738.5,324.4 736.6,327.3Q734.7,330.2 734.4,333.3Q734.2,336.5 734.6,340.7Q735.1,344.8 734.4,348.4Q733.6,351.9 730.9,354.7Q728.1,357.6 724.8,361.8Q721.4,366.1 719.9,370.3Q718.3,374.4 719.6,378.3Q720.8,382.1 723.2,386.6Q725.7,391.1 726.6,396.3Q727.6,401.5 725.8,405.5Q724.1,409.6 721.3,413.8Q718.5,418.1 717.4,423.2Q716.2,428.4 717.8,433.4Q719.3,438.3 721.7,444.8Q724.1,451.2 724.2,456.8Q724.3,462.4 721.2,466.8Q718.0,471.2 713.8,477.6Q709.5,483.9 707.7,490.4Q706.0,496.8 707.9,502.3Q709.9,507.7 713.4,513.5Q716.9,519.4 718.2,526.3Q719.6,533.2 717.5,539.0Q715.4,544.9 712.2,552.4Q709.1,559.9 708.6,567.0L708.2,574.1"/>
<path stroke="#7c583a" stroke-width="3.3" d="M808.3,315.2Q805.4,317.3 804.6,319.0Q803.8,320.7 803.5,323.0Q803.2,325.2 802.3,327.2Q801.5,329.2 799.5,331.1Q797.6,333.1 795.4,335.7Q793.3,338.3 792.4,340.9Q791.5,343.5 792.4,346.1Q793.3,348.7 794.7,352.1Q796.0,355.4 795.9,358.8Q795.9,362.1 794.2,364.7Q792.4,367.3 790.8,370.5Q789.2,373.8 789.3,377.2Q789.4,380.6 790.8,385.3Q792.2,389.9 792.5,394.1Q792.8,398.4 790.6,401.5Q788.4,404.7 784.8,408.8Q781.3,413.0 779.4,417.7Q777.5,422.4 778.6,426.5Q779.7,430.6 782.0,435.1Q784.3,439.6 784.7,444.8Q785.1,449.9 782.8,454.3Q780.5,458.6 778.1,464.4Q775.7,470.1 776.1,475.1Q776.6,480.2 779.7,485.9Q782.8,491.7 785.1,498.3Q787.4,504.9 785.9,510.2Q784.5,515.5 780.2,520.3Q775.9,525.2 773.0,532.1L770.0,539.0"/>
<path stroke="#7c583a" stroke-width="3.9" d="M864.7,330.7Q872.5,336.2 875.5,339.3Q878.6,342.5 880.5,346.0Q882.5,349.5 884.2,353.1Q886.0,356.6 888.5,359.9Q891.1,363.2 894.0,366.4Q897.0,369.7 899.0,373.1Q901.1,376.6 901.5,380.7Q902.0,384.7 901.8,389.9Q901.7,395.2 903.0,399.0Q904.2,402.8 907.5,404.9Q910.8,407.0 914.4,409.7Q918.1,412.3 919.9,416.0Q921.7,419.7 921.5,423.4Q921.3,427.0 921.2,431.5Q921.1,435.9 923.1,439.0Q925.2,442.1 928.6,446.2Q932.0,450.4 933.8,454.5Q935.6,458.7 934.0,462.2Q932.4,465.7 929.3,470.4Q926.1,475.0 924.9,479.5Q923.7,484.1 925.9,487.2Q928.1,490.3 931.2,494.0Q934.3,497.8 934.6,502.0Q935.0,506.3 932.3,510.1Q929.5,514.0 927.0,518.7Q924.4,523.4 925.5,527.2Q926.5,530.9 930.3,535.9Q934.1,540.8 936.2,546.6Q938.3,552.4 935.7,555.8L933.1,559.2"/>
<path stroke="#8f6541" stroke-width="4.0" d="M886.7,286.9Q893.0,292.5 895.2,295.6Q897.4,298.6 898.5,301.9Q899.6,305.2 900.4,308.6Q901.1,312.0 902.4,315.3Q903.7,318.6 905.9,321.8Q908.0,325.1 910.2,328.4Q912.4,331.7 913.6,335.2Q914.7,338.6 914.4,342.7Q914.1,346.8 913.3,351.9Q912.6,356.9 913.0,361.0Q913.4,365.0 915.8,367.7Q918.3,370.4 921.9,372.5Q925.6,374.6 928.5,378.5Q931.4,382.5 932.3,386.3Q933.1,390.1 932.3,393.8Q931.5,397.5 930.9,401.9Q930.4,406.4 931.7,410.0Q933.1,413.6 936.1,417.8Q939.1,422.0 941.1,426.6Q943.0,431.2 943.4,435.3Q943.8,439.3 941.2,442.8Q938.6,446.2 935.3,451.9Q932.0,457.5 931.0,462.3Q929.9,467.1 932.1,470.6Q934.2,474.1 937.7,477.7Q941.2,481.2 943.0,486.3Q944.8,491.4 943.5,495.5Q942.1,499.6 939.0,504.5Q935.8,509.4 934.1,514.5Q932.5,519.6 934.2,523.6Q936.0,527.7 940.0,533.2Q944.0,538.6 945.2,544.9Q946.4,551.2 945.5,555.8Q944.6,560.4 941.1,563.4Q937.5,566.4 932.5,571.7L927.5,577.1"/>
<path stroke="#7c583a" stroke-width="3.2" d="M775.3,310.3Q780.7,314.1 783.6,315.7Q786.4,317.2 789.4,318.2Q792.5,319.2 795.3,320.8Q798.1,322.4 800.4,325.1Q802.6,327.8 804.4,331.1Q806.2,334.5 808.3,337.0Q810.4,339.6 813.5,340.6Q816.6,341.5 820.4,342.0Q824.2,342.4 827.8,344.3Q831.3,346.3 833.6,348.9Q835.8,351.6 836.9,354.7Q838.0,357.9 839.2,361.3Q840.4,364.7 842.6,367.4Q844.9,370.0 848.1,372.9Q851.3,375.8 853.9,379.1Q856.5,382.3 857.2,385.9Q857.9,389.5 857.1,394.3Q856.4,399.2 856.0,404.4Q855.7,409.5 857.5,413.0Q859.3,416.5 863.1,418.7Q866.8,420.9 870.4,424.6Q874.1,428.2 875.5,432.6Q877.0,436.9 876.4,441.1Q875.9,445.4 875.3,450.9Q874.8,456.4 876.5,460.7Q878.1,465.0 881.8,469.5Q885.5,474.0 888.7,479.4Q891.9,484.9 892.2,489.9Q892.5,495.0 889.9,499.6Q887.3,504.1 884.5,510.9Q881.6,517.7 881.5,523.4Q881.4,529.2 884.3,533.7Q887.3,538.2 890.6,543.9Q894.0,549.5 894.7,555.6Q895.4,561.7 893.0,567.4Q890.6,573.1 887.9,580.4Q885.2,587.6 885.4,593.9L885.6,600.1"/>
<path stroke="#7c583a" stroke-width="3.6" d="M799.7,267.1Q799.0,271.7 798.2,273.3Q797.4,275.0 795.7,275.8Q794.0,276.6 791.5,276.8Q789.1,277.1 786.5,278.3Q783.9,279.5 782.0,281.5Q780.1,283.5 779.3,285.7Q778.5,288.0 778.4,290.4Q778.3,292.8 778.1,295.2Q777.9,297.7 776.8,300.3Q775.8,302.8 773.7,305.6Q771.7,308.4 769.5,311.4Q767.3,314.3 766.1,317.4Q764.9,320.5 765.4,323.5Q765.8,326.5 767.6,330.1Q769.4,333.6 771.1,338.4Q772.9,343.2 773.2,347.3Q773.5,351.3 771.8,354.3Q770.0,357.4 767.0,359.9Q764.0,362.4 761.1,366.1Q758.3,369.7 757.2,373.9Q756.0,378.1 756.8,382.1Q757.5,386.0 759.0,391.0Q760.5,395.9 761.0,400.8Q761.5,405.7 759.8,409.8Q758.2,413.9 754.8,418.4Q751.4,422.9 747.9,428.6Q744.5,434.4 743.0,439.7Q741.6,445.0 743.0,449.7Q744.5,454.4 747.9,458.6Q751.3,462.8 754.5,469.6Q757.7,476.3 758.7,482.4Q759.6,488.4 757.7,493.4Q755.8,498.4 752.4,503.2Q749.0,507.9 746.5,514.6Q744.1,521.3 744.3,527.3Q744.6,533.3 747.4,539.1Q750.2,545.0 753.6,552.6Q757.0,560.2 758.3,567.2Q759.6,574.2 757.5,580.0L755.4,585.9"/>
<path stroke="#86603d" stroke-width="3.4" d="M811.0,232.3Q801.1,233.8 796.5,235.2Q791.8,236.6 787.3,238.0Q782.8,239.5 778.3,240.7Q773.9,241.9 769.4,243.0Q764.9,244.0 760.6,245.4Q756.3,246.7 752.5,248.8Q748.8,250.9 745.6,254.5Q742.3,258.1 739.1,261.3Q735.9,264.5 732.2,265.9Q728.5,267.3 724.2,267.4Q719.9,267.4 715.7,268.6Q711.5,269.8 708.2,272.1Q704.9,274.4 702.5,277.4Q700.2,280.4 697.9,283.9Q695.6,287.4 692.4,289.4Q689.2,291.4 685.2,293.5Q681.2,295.6 677.6,298.2Q674.1,300.9 672.3,304.3Q670.5,307.6 670.4,311.8Q670.3,315.9 670.1,321.1Q670.0,326.3 668.2,329.7Q666.3,333.0 662.8,334.9Q659.2,336.7 655.7,339.8Q652.3,342.9 650.9,346.7Q649.4,350.6 650.0,355.1Q650.5,359.6 651.0,364.7Q651.4,369.7 649.6,373.4Q647.8,377.0 643.9,380.4Q640.0,383.8 636.5,388.7Q633.0,393.7 632.5,398.3L632.0,403.0"/>
<path stroke="#86603d" stroke-width="3.3" d="M752.1,254.6Q752.1,260.3 751.6,263.3Q751.1,266.3 749.8,268.4Q748.4,270.5 746.4,272.1Q744.5,273.7 742.9,275.8Q741.2,277.8 740.5,280.7Q739.8,283.6 739.7,287.1Q739.5,290.5 739.0,293.6Q738.4,296.7 736.4,298.8Q734.4,300.9 731.1,302.7Q727.8,304.6 724.5,307.7Q721.2,310.9 719.5,314.1Q717.8,317.3 718.2,320.6Q718.5,323.8 719.8,326.9Q721.2,330.1 721.7,334.3Q722.3,338.5 721.0,341.7Q719.7,345.0 717.2,348.3Q714.7,351.6 713.0,355.5Q711.2,359.4 711.5,363.1Q711.9,366.8 714.0,371.7Q716.1,376.6 717.9,381.9Q719.7,387.2 719.1,391.4Q718.5,395.5 715.2,398.4Q711.8,401.2 707.6,405.1Q703.3,409.0 700.7,414.0Q698.2,419.0 698.7,423.4Q699.2,427.7 701.6,431.7Q704.0,435.6 705.5,441.2Q707.1,446.8 705.9,451.3Q704.7,455.8 701.3,460.9Q697.9,466.0 695.0,471.8Q692.1,477.7 692.3,482.8Q692.6,487.8 696.1,492.0Q699.7,496.1 704.1,503.1Q708.4,510.1 710.2,516.3Q711.9,522.5 709.6,527.2Q707.4,532.0 702.8,536.2Q698.3,540.5 695.1,547.4Q691.9,554.3 692.5,560.0Q693.1,565.7 696.7,571.0L700.3,576.2"/>
<path stroke="#86603d" stroke-width="3.8" d="M787.1,302.9Q799.8,311.2 805.4,315.4Q810.9,319.6 815.8,324.2Q820.6,328.9 824.9,333.4Q829.3,337.9 833.5,341.5Q837.6,345.1 841.8,347.3Q846.0,349.6 850.1,350.9Q854.3,352.2 857.9,353.8Q861.6,355.4 864.3,357.5Q867.0,359.5 868.5,361.7Q870.0,363.9 870.5,366.4Q871.1,369.0 871.2,371.0Q871.3,373.0 871.9,373.6Q872.4,374.1 873.9,374.5Q875.4,374.9 876.0,378.1Q876.6,381.3 875.1,383.9L873.6,386.5"/>
<path stroke="#ab784a" stroke-width="3.1" d="M684.8,305.3Q680.0,309.9 678.4,312.5Q676.9,315.2 675.2,317.8Q673.4,320.5 671.1,323.1Q668.7,325.7 666.8,328.5Q665.0,331.3 664.8,334.5Q664.5,337.7 664.8,342.1Q665.0,346.5 663.5,349.5Q662.1,352.5 659.3,354.5Q656.5,356.5 654.7,359.8Q652.9,363.1 652.9,366.8Q652.8,370.5 652.3,374.3Q651.8,378.1 649.2,381.4Q646.6,384.7 644.1,388.8Q641.5,392.9 641.9,396.6Q642.3,400.4 644.6,404.6Q646.9,408.8 647.3,413.2Q647.6,417.7 645.4,421.0Q643.1,424.3 641.8,428.9Q640.5,433.4 642.1,437.9Q643.8,442.3 645.5,447.4Q647.2,452.5 645.4,456.5Q643.6,460.4 640.2,465.9Q636.9,471.4 636.8,476.4Q636.7,481.5 640.1,485.2Q643.6,489.0 645.8,494.5Q648.0,500.0 646.4,504.7Q644.8,509.4 643.4,515.7Q642.0,521.9 644.9,526.2Q647.7,530.5 652.1,536.7L656.5,542.8"/>
<path stroke="#93683f" stroke-width="4.0" d="M752.4,267.2Q751.9,274.8 752.4,279.1Q752.9,283.5 752.2,286.8Q751.5,290.2 748.2,291.8Q744.9,293.4 740.6,295.8Q736.3,298.3 734.0,301.8Q731.6,305.2 732.3,308.5Q732.9,311.8 734.1,315.3Q735.3,318.8 734.1,322.2Q732.9,325.5 729.6,329.5Q726.3,333.4 724.8,337.3Q723.2,341.1 725.8,344.3Q728.4,347.5 732.5,353.6Q736.7,359.7 737.5,364.1Q738.3,368.5 734.0,370.6Q729.8,372.6 724.7,376.2Q719.5,379.8 718.8,384.0Q718.0,388.2 721.4,391.9Q724.8,395.6 726.9,400.8Q729.0,405.9 725.6,408.9Q722.3,411.9 716.4,418.0Q710.6,424.1 709.1,429.0Q707.7,433.9 713.2,436.6Q718.7,439.2 725.6,445.1Q732.5,451.0 733.5,455.8Q734.5,460.6 729.0,463.4L723.5,466.2"/>
<path stroke="#8c6340" stroke-width="3.7" d="M798.9,224.0Q795.1,226.5 794.9,228.2Q794.6,229.8 795.8,231.8Q797.0,233.7 797.7,236.6Q798.3,239.4 797.1,240.9Q796.0,242.4 794.4,243.7Q792.8,245.0 792.6,247.4Q792.4,249.9 793.0,253.0Q793.7,256.1 792.7,258.2Q791.7,260.3 788.4,261.7Q785.1,263.1 782.0,266.1Q779.0,269.0 779.0,271.7Q778.9,274.4 780.9,276.9Q782.8,279.4 783.3,282.9Q783.8,286.4 781.8,289.1Q779.9,291.8 778.3,295.2Q776.8,298.6 778.3,302.0Q779.8,305.4 782.4,310.4Q785.0,315.4 784.4,319.0Q783.9,322.6 779.8,324.6Q775.6,326.6 772.2,331.2Q768.8,335.7 769.4,339.5Q769.9,343.3 772.3,347.3Q774.6,351.2 774.1,355.4Q773.6,359.6 770.2,364.4Q766.7,369.1 765.1,374.0Q763.5,378.8 766.6,382.5Q769.7,386.2 773.8,392.7Q778.0,399.1 777.7,404.0Q777.5,408.9 773.0,412.2Q768.6,415.5 765.7,421.3Q762.9,427.2 764.8,431.8Q766.8,436.4 769.6,442.7Q772.3,449.1 770.5,454.0Q768.7,458.9 763.6,465.3Q758.4,471.7 756.6,478.0Q754.8,484.4 759.0,488.8Q763.3,493.3 768.3,500.5Q773.3,507.6 772.7,513.6Q772.1,519.5 767.4,524.8Q762.8,530.1 761.2,537.0Q759.7,543.9 763.7,550.2Q767.8,556.5 771.3,564.4Q774.8,572.3 771.8,578.0L768.8,583.7"/>
<path stroke="#8c6340" stroke-width="3.0" d="M749.0,283.4Q748.5,289.0 747.8,291.0Q747.0,293.0 745.4,294.2Q743.8,295.3 741.8,296.2Q739.7,297.1 738.0,298.6Q736.3,300.2 735.6,302.6Q734.9,305.1 734.8,308.1Q734.6,311.1 734.1,313.8Q733.6,316.6 731.8,318.6Q730.0,320.7 727.2,323.5Q724.4,326.2 721.9,329.6Q719.3,333.0 718.4,336.3Q717.5,339.7 718.6,342.8Q719.7,345.9 721.9,349.3Q724.0,352.7 725.2,357.2Q726.5,361.7 725.8,365.3Q725.1,369.0 723.0,372.2Q720.9,375.4 719.1,379.9Q717.4,384.4 717.7,388.6Q718.0,392.8 720.2,397.6Q722.3,402.4 724.7,407.8Q727.0,413.3 727.3,418.2Q727.6,423.1 725.2,427.2Q722.8,431.3 719.1,436.7Q715.4,442.1 713.0,448.4Q710.7,454.7 711.4,460.0Q712.2,465.3 715.5,469.7Q718.9,474.1 722.3,479.9Q725.7,485.7 726.7,491.8Q727.7,497.9 725.9,503.3Q724.2,508.8 721.6,516.4Q719.1,523.9 718.8,530.8Q718.4,537.6 721.6,543.1L724.9,548.5"/>
<path stroke="#8f6541" stroke-width="3.5" d="M780.9,301.1Q774.0,300.4 770.7,301.0Q767.5,301.6 764.7,303.1Q762.0,304.6 759.7,306.5Q757.4,308.5 755.2,310.4Q753.0,312.4 750.2,314.0Q747.5,315.7 744.3,317.3Q741.1,319.0 738.0,321.1Q735.0,323.2 733.2,326.0Q731.5,328.8 731.4,332.1Q731.3,335.3 732.2,340.4Q733.2,345.4 733.5,350.0Q733.9,354.6 732.4,357.6Q730.9,360.5 727.5,362.4Q724.1,364.3 720.3,366.8Q716.4,369.4 714.1,373.6Q711.7,377.9 711.8,382.0Q711.9,386.2 713.5,391.0Q715.2,395.8 716.4,401.3Q717.5,406.7 716.4,411.2Q715.2,415.7 711.7,420.1Q708.1,424.5 704.1,431.0Q700.2,437.6 698.4,443.8Q696.6,450.1 698.5,455.3Q700.4,460.5 705.0,464.8Q709.7,469.0 714.4,476.3Q719.0,483.5 720.9,490.2L722.8,496.8"/>
<path stroke="#8c6340" stroke-width="3.8" d="M808.5,237.1Q807.3,244.0 807.6,247.0Q807.9,250.0 809.2,252.5Q810.5,255.0 812.3,257.3Q814.1,259.6 815.6,262.5Q817.1,265.4 817.6,268.5Q818.2,271.7 818.0,274.8Q817.9,278.0 817.8,281.5Q817.7,285.0 818.6,288.2Q819.4,291.3 821.3,294.8Q823.2,298.2 825.3,302.1Q827.5,305.9 828.8,309.6Q830.1,313.3 829.6,316.6Q829.2,320.0 827.3,323.1Q825.5,326.1 823.4,330.5Q821.4,334.9 820.6,339.2Q819.9,343.4 820.9,346.9Q822.0,350.4 824.2,353.4Q826.4,356.4 828.2,360.2Q830.0,364.1 830.2,368.0Q830.4,371.9 829.1,376.2Q827.8,380.5 826.2,385.4Q824.7,390.3 824.7,394.6Q824.6,398.9 826.8,402.3Q829.0,405.7 832.7,409.7Q836.3,413.8 839.4,418.8Q842.5,423.9 843.4,428.4Q844.2,432.9 842.4,436.7Q840.6,440.6 837.7,444.4Q834.7,448.3 832.9,453.7Q831.0,459.2 831.6,463.7Q832.3,468.1 834.9,471.8Q837.6,475.5 840.2,480.9Q842.9,486.3 843.5,491.1Q844.1,496.0 841.9,500.1Q839.7,504.2 836.3,510.5Q832.9,516.7 830.8,522.6Q828.7,528.6 829.8,533.2Q830.9,537.9 834.9,541.4Q838.9,544.9 843.6,550.5Q848.3,556.0 850.8,561.8Q853.3,567.7 852.3,572.5L851.3,577.4"/>
<path stroke="#7f5a3b" stroke-width="4.0" d="M833.4,243.2Q834.1,247.8 834.4,250.5Q834.7,253.1 835.3,255.8Q835.9,258.6 837.0,261.0Q838.1,263.4 839.5,265.7Q840.9,268.0 842.1,270.5Q843.3,273.0 843.9,275.9Q844.6,278.8 844.7,282.2Q844.9,285.5 845.0,288.9Q845.1,292.3 845.8,295.4Q846.4,298.6 848.0,301.2Q849.6,303.8 851.8,306.5Q854.0,309.1 856.1,312.7Q858.3,316.3 859.6,319.8Q860.8,323.4 860.9,326.9Q861.1,330.3 860.4,333.7Q859.7,337.1 859.2,341.0Q858.6,344.8 858.9,348.7Q859.2,352.6 860.4,356.2Q861.7,359.8 863.2,364.0Q864.8,368.3 865.7,372.6Q866.7,376.8 866.3,380.8Q865.9,384.8 864.5,389.2Q863.1,393.6 861.5,398.8Q860.0,403.9 859.5,408.7Q859.1,413.4 860.2,417.6Q861.4,421.8 863.7,425.6Q866.0,429.4 868.2,434.5Q870.5,439.6 871.4,444.7Q872.4,449.8 871.7,454.5Q870.9,459.2 869.3,463.8Q867.6,468.3 866.3,473.9Q865.0,479.5 865.2,484.6Q865.4,489.8 867.1,494.8Q868.8,499.9 870.8,506.1Q872.9,512.3 873.8,518.2Q874.7,524.1 873.6,529.4Q872.5,534.6 869.6,539.3Q866.8,544.0 863.8,550.7Q860.8,557.3 859.3,563.6Q857.7,569.9 858.3,575.5L859.0,581.2"/>
<path stroke="#8a613e" stroke-width="3.5" d="M768.8,264.1Q759.2,260.9 754.3,260.8Q749.5,260.6 745.4,262.1Q741.2,263.6 737.9,266.1Q734.6,268.5 731.2,270.8Q727.8,273.0 723.6,274.4Q719.5,275.8 715.2,277.3Q711.0,278.8 708.2,281.6Q705.4,284.4 704.4,289.5Q703.4,294.5 702.4,300.3Q701.4,306.1 698.2,308.0Q695.1,309.9 690.0,309.1Q685.0,308.3 680.7,310.0Q676.4,311.8 674.7,315.2Q673.0,318.6 672.5,323.6Q672.0,328.6 669.3,331.4Q666.7,334.1 661.2,335.8Q655.7,337.5 650.8,340.7Q645.8,343.9 645.2,347.8Q644.6,351.8 647.6,356.8Q650.6,361.8 652.3,368.2Q654.0,374.7 651.0,377.4Q648.0,380.1 642.7,382.2Q637.4,384.3 635.2,388.6Q633.1,393.0 635.6,398.3Q638.1,403.5 640.6,410.0Q643.1,416.5 640.4,419.9Q637.6,423.4 630.4,426.8Q623.1,430.3 618.2,436.2Q613.2,442.2 615.2,446.7Q617.2,451.2 623.1,455.8Q629.0,460.3 631.4,466.6Q633.7,472.8 629.8,476.7Q625.9,480.5 621.1,487.3Q616.3,494.2 617.6,499.4L618.9,504.6"/>
<path stroke="#8f6541" stroke-width="2.9" d="M780.7,258.2Q784.7,255.8 786.9,255.8Q789.0,255.9 790.7,256.9Q792.4,258.0 793.6,259.5Q794.8,261.0 796.2,262.6Q797.5,264.2 799.6,265.6Q801.7,267.0 804.4,268.5Q807.1,270.1 809.2,272.2Q811.3,274.2 811.9,276.8Q812.4,279.4 811.6,282.4Q810.7,285.5 809.8,289.9Q808.9,294.3 809.7,297.5Q810.4,300.6 812.9,302.6Q815.5,304.6 818.5,306.9Q821.5,309.2 823.1,312.8Q824.6,316.4 824.3,320.4Q824.0,324.4 823.1,329.4Q822.3,334.5 823.0,338.7Q823.7,343.0 826.9,346.1Q830.1,349.2 834.3,354.3Q838.4,359.4 840.9,364.6Q843.4,369.8 842.7,374.6Q842.0,379.4 839.2,384.0Q836.3,388.6 834.2,395.3Q832.1,402.1 832.9,407.6Q833.7,413.2 837.0,417.8Q840.2,422.5 843.1,429.2Q845.9,436.0 845.8,442.1Q845.6,448.3 842.7,455.0Q839.7,461.7 836.8,469.8Q833.9,477.8 834.2,484.7Q834.6,491.6 838.7,497.2L842.8,502.9"/>
<path stroke="#7f5a3b" stroke-width="3.8" d="M691.2,322.7Q687.1,323.5 684.7,324.0Q682.3,324.4 680.1,326.0Q678.0,327.6 676.6,329.5Q675.1,331.5 674.3,333.7Q673.5,335.9 672.6,338.3Q671.8,340.6 670.3,343.0Q668.9,345.3 666.8,347.8Q664.6,350.3 662.5,352.9Q660.4,355.6 659.2,358.5Q658.1,361.4 658.3,364.4Q658.5,367.5 659.4,371.6Q660.4,375.7 660.9,380.0Q661.3,384.3 660.3,387.7Q659.2,391.0 656.7,393.6Q654.1,396.2 651.3,399.1Q648.4,402.0 646.7,406.0Q644.9,410.0 644.8,414.0Q644.8,417.9 645.5,422.7Q646.3,427.5 646.3,432.3Q646.3,437.1 644.4,441.1Q642.6,445.0 639.3,449.4Q636.0,453.9 632.9,459.2Q629.8,464.5 628.7,469.5Q627.6,474.6 629.1,479.3Q630.5,484.0 633.1,489.3Q635.6,494.6 637.2,501.1Q638.8,507.5 637.9,512.9Q636.9,518.3 634.0,522.9Q631.1,527.6 628.2,533.6Q625.4,539.7 624.6,545.8Q623.8,551.9 625.6,557.6Q627.3,563.4 629.9,570.9L632.5,578.5"/>
<path stroke="#a57246" stroke-width="3.7" d="M715.1,238.6Q713.0,242.8 712.4,245.1Q711.8,247.4 711.0,249.7Q710.2,252.0 708.8,254.3Q707.3,256.6 705.7,259.1Q704.0,261.5 703.0,264.1Q701.9,266.6 701.9,269.4Q701.9,272.1 702.4,276.1Q703.0,280.1 703.0,283.6Q702.9,287.2 701.4,289.8Q699.9,292.4 697.3,294.3Q694.6,296.1 692.1,299.0Q689.6,301.8 688.4,305.1Q687.2,308.4 687.2,311.7Q687.3,315.0 687.3,318.9Q687.3,322.9 686.0,326.2Q684.7,329.6 682.1,333.2Q679.5,336.8 677.0,340.8Q674.5,344.8 673.8,348.7Q673.0,352.6 674.4,356.3Q675.7,360.0 677.6,365.1Q679.5,370.2 679.9,375.0Q680.3,379.8 678.4,383.5Q676.4,387.1 673.4,390.5Q670.4,393.8 668.5,398.6Q666.6,403.3 666.9,407.7Q667.3,412.1 668.8,417.7Q670.3,423.3 670.6,428.5Q670.9,433.8 668.6,437.9Q666.3,442.0 662.3,446.9Q658.4,451.9 655.4,457.5Q652.5,463.2 652.6,468.3Q652.7,473.4 655.3,477.9Q658.0,482.5 660.4,488.9Q662.9,495.3 662.7,500.9Q662.5,506.6 659.6,511.2Q656.7,515.7 653.7,521.9Q650.6,528.0 650.2,533.8L649.7,539.7"/>
<path stroke="#8a613e" stroke-width="3.4" d="M742.8,294.8Q737.2,298.1 735.5,300.7Q733.7,303.3 732.1,307.2Q730.6,311.0 728.1,312.8Q725.6,314.6 722.4,315.3Q719.2,315.9 716.7,317.7Q714.2,319.6 712.7,322.9Q711.2,326.2 709.1,328.6Q707.0,331.0 703.3,331.9Q699.5,332.9 695.7,335.0Q691.8,337.1 690.3,340.0Q688.7,343.0 689.1,346.5Q689.5,350.0 688.9,354.1Q688.3,358.2 685.6,360.2Q682.8,362.2 680.3,365.2Q677.7,368.3 677.8,372.2Q677.8,376.2 678.7,381.4Q679.6,386.6 677.7,389.7Q675.9,392.7 671.1,394.7Q666.4,396.7 663.0,400.7Q659.7,404.7 660.3,408.6Q660.8,412.5 662.5,416.9Q664.1,421.4 662.6,425.2Q661.1,429.1 657.6,433.6Q654.1,438.1 653.5,442.5Q652.8,447.0 656.1,451.9Q659.4,456.8 661.8,462.8Q664.2,468.7 661.6,472.5Q659.1,476.3 654.4,480.6Q649.7,484.9 648.7,490.2Q647.8,495.5 650.8,500.1Q653.8,504.8 655.1,510.6Q656.4,516.4 653.0,521.4Q649.5,526.5 646.1,533.3Q642.6,540.1 644.8,545.0Q646.9,550.0 652.7,555.5Q658.5,561.0 660.7,567.4Q662.8,573.8 659.4,578.6Q655.9,583.5 653.0,590.6L650.1,597.6"/>
<path stroke="#8c6340" stroke-width="3.1" d="M757.1,252.9Q755.2,256.0 754.9,257.6Q754.6,259.3 754.8,260.9Q755.0,262.5 755.1,264.3Q755.2,266.1 754.8,268.2Q754.3,270.3 753.1,272.7Q752.0,275.1 750.7,277.8Q749.3,280.4 748.7,283.1Q748.0,285.7 748.6,288.0Q749.2,290.4 751.0,292.5Q752.8,294.6 755.0,297.8Q757.1,301.0 758.5,304.5Q759.9,307.9 759.9,311.0Q759.8,314.1 758.5,316.8Q757.1,319.6 755.4,322.4Q753.8,325.2 753.0,329.0Q752.1,332.8 752.8,336.3Q753.4,339.7 755.1,343.8Q756.8,347.9 758.2,352.2Q759.7,356.6 759.7,360.6Q759.7,364.6 758.0,368.2Q756.2,371.8 753.4,376.9Q750.7,381.9 748.5,387.3Q746.4,392.7 746.3,397.4Q746.2,402.2 748.4,406.2Q750.5,410.1 753.9,413.9Q757.3,417.7 760.0,423.5Q762.8,429.2 763.5,434.5Q764.2,439.8 762.7,444.6Q761.3,449.4 759.1,454.9Q756.9,460.4 755.8,466.5Q754.7,472.7 756.0,478.0Q757.2,483.4 760.5,488.9Q763.8,494.5 767.3,501.4Q770.8,508.3 772.5,514.8Q774.1,521.2 772.8,527.0Q771.5,532.8 768.0,538.1Q764.5,543.3 760.9,551.6L757.3,559.8"/>
<path stroke="#7f5a3b" stroke-width="3.5" d="M793.0,246.2Q783.3,247.5 778.7,248.7Q774.1,250.0 769.8,251.6Q765.5,253.3 761.3,254.9Q757.1,256.6 752.9,258.0Q748.7,259.4 744.4,260.7Q740.2,262.0 736.2,263.7Q732.1,265.4 728.7,267.7Q725.2,270.0 722.1,273.5Q719.0,277.0 715.9,280.0Q712.8,282.9 709.2,284.5Q705.5,286.0 701.4,286.5Q697.3,287.0 693.3,288.7Q689.3,290.4 686.1,292.9Q683.0,295.4 680.7,298.5Q678.4,301.5 676.2,305.0Q674.1,308.5 671.2,311.0Q668.3,313.6 664.8,316.0Q661.2,318.4 657.8,321.3Q654.4,324.1 652.4,327.5Q650.4,330.9 649.9,334.7Q649.4,338.6 649.2,343.8Q649.0,349.0 647.6,352.8Q646.1,356.7 643.1,359.2Q640.1,361.8 636.7,364.6Q633.2,367.4 631.1,371.4Q629.0,375.4 628.7,379.4Q628.5,383.5 628.9,388.6Q629.3,393.8 628.5,398.2Q627.7,402.6 624.9,405.9Q622.2,409.2 618.8,414.2Q615.4,419.1 613.6,424.0Q611.8,429.0 612.8,433.5L613.7,437.9"/>
<path stroke="#7f5a3b" stroke-width="2.9" d="M770.1,242.3Q763.3,243.7 759.8,244.0Q756.3,244.4 752.8,244.5Q749.3,244.7 745.7,245.4Q742.2,246.1 738.7,247.2Q735.3,248.2 732.1,249.7Q728.9,251.2 726.1,253.2Q723.3,255.1 720.8,257.3Q718.3,259.6 715.9,262.0Q713.4,264.4 710.9,266.8Q708.3,269.2 705.5,271.1Q702.7,273.1 699.7,275.2Q696.7,277.2 693.9,279.6Q691.1,282.0 688.7,284.8Q686.4,287.5 684.6,290.6Q682.9,293.7 681.6,297.8Q680.4,302.0 679.1,306.0Q677.9,310.1 676.2,313.6Q674.5,317.2 672.0,320.0Q669.5,322.8 666.4,325.2Q663.2,327.5 660.0,330.6Q656.7,333.6 654.0,337.5Q651.2,341.3 649.5,345.3Q647.7,349.4 646.9,353.6Q646.1,357.8 645.7,362.2Q645.3,366.5 644.7,371.5Q644.0,376.5 642.6,381.0Q641.1,385.5 638.8,389.7Q636.4,393.8 633.8,398.9Q631.1,403.9 628.9,409.1Q626.7,414.3 625.8,419.5Q624.8,424.7 625.2,429.8Q625.5,434.9 626.7,440.6Q627.9,446.3 629.0,452.8Q630.1,459.3 630.2,465.4Q630.2,471.4 628.9,476.9Q627.5,482.4 625.1,487.6Q622.7,492.8 620.3,498.8Q617.8,504.8 616.2,511.4L614.7,518.1"/>
<path stroke="#86603d" stroke-width="3.2" d="M772.7,248.2Q771.7,255.4 770.3,258.0Q768.8,260.5 766.5,262.4Q764.2,264.3 762.2,266.5Q760.2,268.7 759.1,271.8Q758.1,274.9 757.4,278.3Q756.7,281.7 755.1,284.4Q753.5,287.1 750.5,289.5Q747.6,291.9 744.6,295.0Q741.7,298.2 740.3,301.5Q739.0,304.7 739.7,308.0Q740.3,311.2 741.4,315.1Q742.4,319.1 742.0,322.8Q741.5,326.5 739.4,329.3Q737.3,332.0 735.4,335.5Q733.5,338.9 733.5,342.5Q733.4,346.1 734.8,351.1Q736.1,356.0 736.4,360.3Q736.8,364.6 734.4,367.6Q732.0,370.5 728.1,373.8Q724.1,377.1 721.5,381.5Q719.0,385.9 719.4,389.8Q719.9,393.7 722.0,397.3Q724.1,401.0 724.8,405.7Q725.5,410.5 723.6,414.2Q721.6,417.9 719.0,422.9Q716.3,427.8 716.2,432.2Q716.0,436.6 718.9,440.9Q721.8,445.1 724.9,451.0Q728.0,456.9 727.9,461.5Q727.7,466.2 724.1,469.5Q720.5,472.9 716.9,478.2Q713.2,483.5 713.0,488.4Q712.7,493.3 715.6,497.3Q718.4,501.3 720.6,507.1Q722.8,512.8 721.4,517.4Q720.1,522.0 716.3,528.0Q712.6,534.0 710.8,540.0Q709.0,546.0 711.8,550.3Q714.7,554.6 719.9,559.8Q725.2,565.0 728.1,571.1Q731.0,577.3 729.1,582.1L727.2,587.0"/>
<path stroke="#8c6340" stroke-width="3.9" d="M758.0,297.1Q752.0,297.4 749.0,297.5Q746.1,297.6 743.3,298.5Q740.5,299.4 738.1,301.4Q735.7,303.4 733.7,306.0Q731.7,308.6 729.7,310.8Q727.7,313.0 725.1,313.9Q722.6,314.8 719.1,314.5Q715.7,314.1 711.7,314.8Q707.8,315.5 704.1,317.2Q700.5,318.9 698.0,321.4Q695.6,323.9 694.7,327.0Q693.8,330.0 693.8,333.3Q693.9,336.6 693.6,340.6Q693.3,344.6 691.8,347.8Q690.3,350.9 687.5,353.2Q684.7,355.6 681.6,359.0Q678.6,362.5 676.6,366.3Q674.7,370.0 674.9,373.9Q675.0,377.7 676.8,382.8Q678.7,387.9 680.6,393.8Q682.5,399.7 682.8,404.5Q683.0,409.4 680.6,413.0Q678.2,416.5 673.9,419.4Q669.6,422.2 665.3,427.5Q661.0,432.7 658.7,438.3Q656.5,443.9 657.2,449.0Q657.9,454.1 660.5,458.7Q663.2,463.4 665.7,469.7Q668.2,476.1 668.6,482.0Q668.9,488.0 666.5,493.1Q664.1,498.3 660.4,505.6Q656.7,513.0 654.2,520.5Q651.7,527.9 652.5,534.4Q653.3,540.8 657.5,546.0Q661.7,551.3 667.4,558.4L673.1,565.5"/>
<path stroke="#ab784a" stroke-width="4.2" d="M781.1,275.6Q786.1,275.6 788.3,276.6Q790.6,277.7 792.3,279.4Q793.9,281.1 795.3,283.1Q796.6,285.0 798.2,287.0Q799.9,289.0 802.3,291.0Q804.6,292.9 807.4,295.1Q810.1,297.4 812.2,300.0Q814.2,302.7 814.7,305.7Q815.3,308.8 814.5,312.5Q813.8,316.2 813.1,321.0Q812.4,325.8 813.2,329.5Q814.0,333.3 816.6,335.9Q819.2,338.6 822.5,341.4Q825.8,344.2 828.0,348.5Q830.2,352.8 830.3,357.1Q830.5,361.4 829.4,366.8Q828.3,372.1 827.9,377.6Q827.6,383.1 829.5,387.5Q831.5,392.0 835.4,396.7Q839.4,401.4 843.1,407.6Q846.9,413.8 848.1,419.7Q849.3,425.6 847.3,431.0Q845.3,436.3 842.0,442.6L838.7,448.8"/>
<path stroke="#86603d" stroke-width="3.2" d="M851.9,308.4Q854.9,312.4 857.6,314.3Q860.3,316.2 862.8,318.6Q865.4,320.9 865.8,323.6Q866.3,326.2 865.4,329.3Q864.5,332.4 864.8,335.8Q865.0,339.2 867.1,341.3Q869.1,343.4 870.5,346.0Q871.9,348.7 871.5,352.8Q871.0,357.0 871.0,360.7Q871.0,364.5 874.0,366.3Q877.0,368.2 881.1,371.2Q885.1,374.2 886.3,377.7Q887.6,381.1 886.1,384.4Q884.6,387.7 884.4,391.7Q884.3,395.8 886.9,399.1Q889.5,402.3 891.3,406.2Q893.1,410.1 891.3,414.2Q889.5,418.3 887.2,423.9Q884.9,429.6 886.8,433.0Q888.8,436.4 893.6,439.2Q898.4,442.0 900.5,446.5Q902.6,451.0 900.7,454.8Q898.8,458.7 898.1,463.8Q897.3,469.0 900.8,473.0Q904.3,477.1 907.7,482.3Q911.1,487.5 909.1,491.6Q907.2,495.8 902.8,501.9Q898.4,507.9 898.4,513.1Q898.4,518.2 903.1,521.3Q907.9,524.4 910.6,530.0Q913.2,535.7 910.7,540.6Q908.1,545.5 906.0,551.9Q903.9,558.3 907.7,562.1Q911.5,566.0 917.0,572.9Q922.5,579.7 921.9,585.0Q921.4,590.3 915.8,595.5L910.3,600.7"/>
<path stroke="#a57246" stroke-width="3.1" d="M775.3,308.1Q771.8,308.4 770.3,309.3Q768.8,310.2 767.9,311.5Q767.0,312.9 766.5,314.5Q766.1,316.0 765.5,317.7Q764.9,319.3 763.8,321.1Q762.7,322.9 761.2,324.9Q759.7,326.8 758.5,329.1Q757.3,331.3 757.1,333.6Q756.9,336.0 757.7,338.6Q758.5,341.2 759.6,344.8Q760.7,348.4 761.0,351.7Q761.2,354.9 760.1,357.6Q758.9,360.2 756.8,362.7Q754.8,365.1 752.9,368.5Q751.1,372.0 750.6,375.7Q750.1,379.3 750.8,382.9Q751.5,386.4 752.5,390.9Q753.4,395.4 753.3,399.6Q753.2,403.8 751.6,407.7Q749.9,411.7 747.7,416.9Q745.4,422.2 744.1,427.4Q742.8,432.6 743.6,437.3Q744.4,442.0 746.9,446.2Q749.4,450.5 752.0,456.4Q754.6,462.3 755.6,468.1Q756.5,473.9 755.4,479.1Q754.3,484.4 752.3,489.8Q750.3,495.2 749.2,501.8Q748.2,508.4 749.3,514.3Q750.4,520.2 753.1,526.7Q755.8,533.2 758.1,540.3Q760.4,547.5 760.6,554.2Q760.7,560.8 758.5,567.1L756.3,573.3"/>
<path stroke="#8c6340" stroke-width="3.2" d="M892.5,289.0Q896.2,288.5 897.7,289.4Q899.3,290.4 900.7,291.7Q902.1,293.0 903.9,293.4Q905.8,293.8 908.4,294.3Q911.0,294.8 912.2,296.1Q913.5,297.3 914.6,299.4Q915.7,301.5 916.6,303.9Q917.4,306.4 917.4,309.8Q917.4,313.2 918.6,315.6Q919.7,317.9 921.4,319.6Q923.1,321.2 924.3,324.1Q925.5,327.0 926.3,330.5Q927.1,334.1 926.1,338.5Q925.2,343.0 925.9,346.5Q926.6,350.0 929.4,352.3Q932.2,354.6 933.9,358.9Q935.6,363.2 936.5,367.6Q937.4,372.0 937.4,376.0Q937.4,380.0 936.9,384.9Q936.5,389.8 937.0,394.6Q937.5,399.4 939.1,404.2Q940.7,409.1 941.7,414.9Q942.8,420.6 942.8,425.6Q942.8,430.5 939.6,437.1Q936.5,443.7 934.8,450.3Q933.1,456.9 935.4,462.2Q937.7,467.5 941.9,473.5Q946.2,479.5 947.4,486.8Q948.6,494.0 947.0,500.1Q945.4,506.2 942.0,513.3Q938.6,520.4 938.2,527.7L937.8,535.0"/>
<path stroke="#7f5a3b" stroke-width="4.0" d="M835.4,307.6Q835.5,311.3 835.5,313.2Q835.4,315.2 834.9,317.3Q834.3,319.5 833.5,322.1Q832.6,324.6 831.9,327.3Q831.1,329.9 831.1,332.5Q831.1,335.1 832.0,337.5Q832.8,339.9 834.2,342.5Q835.6,345.1 836.8,348.5Q837.9,351.9 838.1,355.1Q838.3,358.3 837.6,361.4Q836.9,364.5 835.9,367.7Q834.9,370.9 834.5,374.7Q834.1,378.5 834.7,382.1Q835.4,385.6 836.7,390.0Q838.0,394.4 839.0,398.7Q839.9,403.1 839.7,407.3Q839.4,411.4 837.8,415.2Q836.2,419.1 834.2,424.3Q832.2,429.5 831.0,434.7Q829.9,439.8 830.4,444.5Q831.0,449.2 833.0,453.5Q835.0,457.8 837.1,463.0Q839.2,468.2 840.2,473.8Q841.1,479.4 840.3,484.5Q839.5,489.7 837.7,495.3Q836.0,501.0 834.9,507.2Q833.9,513.4 834.6,519.2L835.3,524.9"/>
<path stroke="#7c583a" stroke-width="3.3" d="M731.5,234.5Q718.8,241.3 712.6,244.4Q706.5,247.6 700.3,250.2Q694.1,252.9 688.3,255.5Q682.4,258.1 677.5,261.2Q672.6,264.4 669.2,268.2Q665.7,272.0 662.1,276.5Q658.5,281.1 656.2,283.6Q653.8,286.1 652.1,287.0Q650.4,288.0 648.5,289.9Q646.6,291.9 644.6,294.8Q642.7,297.8 640.7,301.6Q638.6,305.4 637.2,307.3Q635.8,309.2 634.6,309.5Q633.4,309.8 631.9,311.3Q630.4,312.9 629.3,315.1Q628.3,317.3 628.0,319.5Q627.6,321.8 627.1,324.6Q626.6,327.5 626.1,328.4Q625.5,329.4 624.3,331.1Q623.1,332.9 622.5,335.0Q621.9,337.2 622.8,337.1L623.7,336.9"/>
<path stroke="#7c583a" stroke-width="3.2" d="M854.6,321.8Q857.6,327.5 857.6,330.4Q857.6,333.4 857.3,336.3Q856.9,339.3 857.5,342.7Q858.1,346.0 859.8,348.8Q861.5,351.5 863.0,354.7Q864.4,357.9 864.3,361.3Q864.2,364.7 862.8,369.4Q861.4,374.1 860.9,378.2Q860.4,382.3 862.4,385.0Q864.4,387.6 868.3,389.7Q872.2,391.7 875.4,395.8Q878.5,399.8 878.9,403.5Q879.3,407.2 877.6,410.5Q875.8,413.8 874.9,418.0Q873.9,422.2 875.6,425.7Q877.4,429.1 880.5,433.7Q883.6,438.3 884.9,442.6Q886.1,446.9 883.7,450.3Q881.3,453.7 877.1,459.0Q872.9,464.4 871.0,469.4Q869.1,474.5 871.5,477.9Q873.8,481.3 878.3,484.7Q882.7,488.0 885.0,493.2Q887.2,498.5 885.3,502.3Q883.4,506.2 879.9,511.3Q876.3,516.3 875.7,521.2Q875.0,526.0 878.6,530.1Q882.3,534.1 886.8,540.8Q891.4,547.5 892.0,552.8Q892.5,558.0 887.7,561.2Q882.9,564.4 876.8,569.9L870.7,575.4"/>
<path stroke="#8c6340" stroke-width="3.0" d="M849.4,279.7Q852.5,283.8 853.9,286.2Q855.2,288.5 856.1,291.3Q857.0,294.2 857.6,297.3Q858.1,300.5 858.8,303.5Q859.6,306.5 861.0,308.9Q862.5,311.4 864.8,313.2Q867.1,315.0 869.8,317.5Q872.5,319.9 874.7,322.9Q877.0,325.9 878.1,329.0Q879.2,332.1 879.3,335.2Q879.4,338.3 879.2,341.5Q879.0,344.6 879.5,348.2Q879.9,351.8 881.4,354.9Q882.8,358.0 884.8,361.5Q886.7,365.1 888.2,368.7Q889.6,372.3 889.7,375.9Q889.8,379.4 888.8,383.5Q887.7,387.6 886.5,392.4Q885.3,397.3 885.3,401.5Q885.2,405.8 886.9,409.2Q888.6,412.6 891.5,415.4Q894.4,418.3 897.1,422.5Q899.8,426.8 900.9,431.1Q902.1,435.5 901.6,439.5Q901.1,443.6 899.8,448.0Q898.6,452.4 898.3,457.2Q897.9,462.0 899.3,466.2Q900.7,470.3 903.3,475.1Q906.0,479.9 908.3,485.1Q910.6,490.4 911.0,495.2Q911.4,500.0 909.6,504.3Q907.8,508.5 904.8,513.8Q901.9,519.0 899.9,524.9Q898.0,530.8 898.3,535.9Q898.6,540.9 901.1,545.2Q903.6,549.5 906.4,554.5Q909.3,559.5 910.6,565.3Q911.9,571.0 910.8,576.1Q909.7,581.2 907.2,586.9Q904.6,592.6 902.8,598.8Q901.0,605.1 901.6,610.5L902.2,616.0"/>
<path stroke="#7f5a3b" stroke-width="3.3" d="M700.2,298.1Q691.7,307.7 688.4,312.7Q685.1,317.7 682.8,322.8Q680.5,327.8 678.6,333.6Q676.7,339.4 674.5,344.9Q672.3,350.4 669.3,354.6Q666.2,358.7 662.5,361.6Q658.7,364.5 654.8,367.1Q651.0,369.7 648.0,373.3Q645.0,376.9 643.4,380.6Q641.9,384.3 641.6,389.4Q641.3,394.4 641.4,399.3Q641.4,404.2 640.5,407.7Q639.6,411.3 636.8,412.9Q634.1,414.6 629.8,415.2Q625.5,415.8 621.0,418.8Q616.5,421.7 613.5,424.8Q610.5,427.8 610.4,430.6Q610.3,433.4 612.9,435.4Q615.6,437.4 619.3,439.2Q623.1,441.0 625.8,443.5Q628.5,446.0 628.6,447.4Q628.7,448.8 626.5,450.1L624.3,451.4"/>
<path stroke="#9c6c43" stroke-width="3.1" d="M716.4,253.0Q713.2,255.1 712.3,256.8Q711.4,258.6 710.9,261.0Q710.4,263.5 709.6,265.5Q708.7,267.5 707.1,268.4Q705.6,269.3 703.6,269.9Q701.7,270.5 700.2,272.0Q698.7,273.5 698.2,276.1Q697.7,278.7 697.6,281.7Q697.5,284.8 696.7,287.1Q695.8,289.4 693.4,290.6Q690.9,291.7 687.5,293.5Q684.0,295.2 681.1,298.0Q678.2,300.8 677.3,303.8Q676.4,306.8 677.3,309.8Q678.2,312.8 679.4,316.3Q680.6,319.8 680.4,323.5Q680.2,327.2 678.2,330.1Q676.2,332.9 673.8,336.9Q671.5,340.9 670.7,344.8Q669.9,348.7 671.4,352.7Q672.9,356.7 675.3,362.3Q677.6,368.0 678.5,373.0Q679.3,378.0 677.2,381.7Q675.2,385.5 671.2,388.9Q667.2,392.2 663.9,397.9Q660.5,403.6 660.0,408.7Q659.5,413.9 661.6,418.4Q663.6,423.0 665.8,428.7Q668.1,434.4 668.0,440.0Q667.9,445.6 665.2,451.0Q662.5,456.4 659.3,463.3Q656.2,470.2 655.6,476.5Q655.0,482.7 658.0,488.0Q661.0,493.2 665.6,500.2Q670.1,507.2 672.8,514.6Q675.5,522.1 674.3,528.3Q673.1,534.6 669.2,540.2Q665.3,545.7 662.1,553.8Q658.9,561.8 659.2,569.1Q659.6,576.3 663.1,582.7L666.6,589.1"/>
<path stroke="#8a613e" stroke-width="3.4" d="M736.2,241.5Q730.3,244.5 727.3,245.2Q724.3,246.0 721.3,246.2Q718.2,246.5 715.4,247.6Q712.5,248.7 710.2,251.3Q707.9,254.0 706.0,257.1Q704.1,260.3 701.8,262.2Q699.6,264.0 696.4,263.8Q693.1,263.6 689.1,262.9Q685.2,262.3 681.5,263.5Q677.9,264.8 675.6,267.0Q673.3,269.3 672.3,272.2Q671.2,275.1 670.1,278.2Q669.0,281.3 666.7,283.5Q664.3,285.7 661.0,288.1Q657.6,290.4 654.9,293.2Q652.2,296.0 651.6,299.4Q651.0,302.7 652.2,307.6Q653.4,312.5 654.2,317.8Q655.0,323.0 653.3,326.2Q651.6,329.4 647.5,330.9Q643.4,332.4 639.2,335.4Q635.0,338.3 633.1,342.4Q631.2,346.5 631.9,350.5Q632.6,354.6 633.6,359.8Q634.6,365.1 633.3,369.3Q632.0,373.6 628.1,377.7Q624.3,381.8 620.3,387.2Q616.4,392.6 615.6,397.6Q614.7,402.7 617.6,407.1Q620.4,411.4 624.3,417.8Q628.2,424.2 629.5,430.3Q630.8,436.4 628.3,441.0Q625.7,445.6 621.6,450.4Q617.6,455.2 615.8,461.6Q614.0,468.0 616.0,473.3Q618.0,478.7 621.7,486.0Q625.3,493.2 626.5,499.9Q627.7,506.6 624.6,512.0Q621.5,517.4 617.2,525.2Q612.9,532.9 613.8,540.9Q614.6,548.9 616.8,555.1Q619.0,561.3 621.9,566.6L624.7,572.0"/>
<path stroke="#8c6340" stroke-width="4.2" d="M843.7,268.1Q850.0,271.4 853.3,273.6Q856.6,275.9 859.7,278.5Q862.7,281.1 865.1,284.0Q867.5,286.9 869.0,290.1Q870.6,293.3 871.6,296.5Q872.7,299.8 874.0,303.3Q875.3,306.8 877.2,309.9Q879.1,313.0 881.5,316.1Q883.9,319.1 886.2,322.4Q888.6,325.7 890.1,329.2Q891.5,332.7 891.8,336.3Q892.1,339.9 891.7,344.8Q891.3,349.7 891.2,354.3Q891.1,358.9 892.2,362.5Q893.4,366.2 896.0,368.9Q898.6,371.6 901.9,374.3Q905.3,377.1 908.0,381.2Q910.7,385.4 911.8,389.5Q912.9,393.6 912.3,397.5Q911.8,401.4 910.7,405.8Q909.6,410.1 909.3,414.8Q909.1,419.4 910.6,423.2Q912.0,427.1 914.7,431.5Q917.4,436.0 919.9,441.1Q922.3,446.1 922.9,450.8Q923.5,455.5 921.8,459.6Q920.0,463.6 916.8,468.1Q913.5,472.6 910.8,478.3Q908.0,484.0 907.3,489.0Q906.7,493.9 908.4,498.1L910.2,502.3"/>
<path stroke="#8a613e" stroke-width="3.8" d="M773.2,299.8Q770.5,305.3 769.4,308.3Q768.3,311.3 766.5,313.6Q764.7,315.8 761.6,317.0Q758.5,318.1 755.0,320.5Q751.4,323.0 749.0,325.8Q746.6,328.6 746.2,331.7Q745.8,334.8 746.4,338.0Q747.0,341.2 746.6,345.1Q746.3,349.0 744.1,351.6Q742.0,354.2 739.4,357.5Q736.7,360.8 735.7,364.3Q734.7,367.7 736.0,372.1Q737.3,376.4 738.9,381.7Q740.5,387.1 739.7,390.9Q738.9,394.7 735.1,396.7Q731.2,398.7 726.7,402.3Q722.1,405.9 720.1,410.1Q718.1,414.4 719.4,418.3Q720.7,422.1 722.8,426.9Q724.9,431.6 724.4,436.0Q723.9,440.5 720.3,444.4Q716.7,448.4 713.1,453.7Q709.6,458.9 709.7,463.5Q709.7,468.1 713.7,472.3Q717.7,476.5 721.8,483.3Q725.8,490.1 725.8,495.2Q725.7,500.2 721.3,503.5L716.9,506.9"/>
<path stroke="#7f5a3b" stroke-width="3.6" d="M840.5,311.7Q847.5,313.5 851.2,313.9Q854.8,314.3 858.3,314.9Q861.9,315.6 865.0,317.3Q868.1,319.1 870.5,321.5Q872.9,324.0 874.6,327.4Q876.4,330.9 877.8,334.3Q879.3,337.8 881.2,340.4Q883.1,343.0 886.0,344.6Q888.9,346.1 892.7,347.9Q896.5,349.7 900.6,352.7Q904.7,355.7 907.8,359.2Q911.0,362.7 912.2,366.5Q913.4,370.3 912.4,374.0Q911.3,377.6 908.7,381.0Q906.2,384.3 903.5,389.7Q900.8,395.1 899.5,399.7Q898.2,404.4 899.2,408.1L900.1,411.8"/>
<path stroke="#93683f" stroke-width="3.2" d="M729.1,247.1Q726.8,254.8 725.6,258.7Q724.3,262.6 723.4,266.5Q722.5,270.3 722.4,274.1Q722.3,277.9 722.7,282.5Q723.0,287.0 722.9,291.2Q722.8,295.5 721.6,299.1Q720.4,302.6 718.3,305.7Q716.2,308.7 714.3,312.4Q712.3,316.2 711.5,320.0Q710.6,323.8 710.9,327.4Q711.1,331.0 711.4,335.2Q711.6,339.3 710.7,342.9Q709.9,346.5 707.8,350.2Q705.7,353.9 703.7,358.0Q701.7,362.1 701.2,365.8Q700.7,369.6 702.1,372.9Q703.5,376.2 705.5,380.5Q707.5,384.9 708.2,389.1Q708.9,393.2 707.5,396.4Q706.1,399.6 703.7,402.6Q701.2,405.7 699.7,409.7Q698.3,413.7 699.0,417.1Q699.7,420.5 701.7,424.6L703.8,428.7"/>
<path stroke="#8c6340" stroke-width="3.0" d="M775.4,309.0Q779.5,310.4 781.6,311.4Q783.6,312.5 785.2,314.1Q786.7,315.6 787.6,317.6Q788.5,319.6 788.9,321.9Q789.4,324.3 789.9,327.1Q790.4,329.9 791.4,332.2Q792.5,334.5 794.2,336.4Q795.9,338.4 797.7,340.6Q799.5,342.9 800.6,345.8Q801.8,348.8 802.0,352.1Q802.2,355.5 801.9,359.5Q801.7,363.5 801.8,367.3Q801.9,371.2 803.1,374.6Q804.4,378.1 806.7,381.4Q808.9,384.6 811.3,389.3Q813.8,394.0 815.1,398.7Q816.4,403.5 816.1,408.0Q815.8,412.5 814.2,416.9Q812.7,421.3 811.3,426.7Q809.8,432.1 809.6,437.6Q809.4,443.0 810.6,448.1Q811.8,453.2 813.5,459.3Q815.2,465.3 816.0,471.6Q816.7,477.9 815.5,483.7Q814.4,489.5 811.8,495.9L809.2,502.2"/>
<path stroke="#8f6541" stroke-width="4.2" d="M819.3,245.3Q823.8,247.5 825.7,249.2Q827.6,250.8 828.3,253.2Q829.0,255.6 829.1,258.3Q829.2,260.9 830.0,263.4Q830.8,265.9 833.0,268.6Q835.1,271.3 837.7,274.4Q840.3,277.4 841.4,280.4Q842.5,283.3 841.2,286.0Q839.9,288.6 837.3,291.9Q834.7,295.1 833.3,299.2Q831.8,303.2 832.8,306.1Q833.8,309.0 836.2,311.3Q838.7,313.6 840.1,316.8Q841.6,320.1 840.8,323.7Q840.0,327.3 838.1,331.8Q836.3,336.4 836.1,340.2Q835.9,344.0 838.8,346.6Q841.6,349.2 845.9,353.6Q850.2,358.0 852.6,362.6Q855.0,367.1 853.6,370.7Q852.2,374.3 848.6,377.2Q845.0,380.1 842.7,385.3Q840.3,390.4 841.4,394.3Q842.5,398.2 845.5,402.4Q848.4,406.6 849.8,411.4Q851.1,416.3 848.6,420.0Q846.2,423.7 841.9,429.8Q837.6,435.8 835.6,441.2Q833.5,446.6 836.1,450.5Q838.7,454.4 844.0,458.6Q849.3,462.9 852.7,469.2Q856.2,475.5 854.9,480.2Q853.6,484.8 849.2,488.5Q844.8,492.1 841.9,498.2Q839.1,504.3 840.7,509.1Q842.3,513.8 846.5,520.3Q850.8,526.8 852.8,533.2Q854.7,539.6 851.4,544.0Q848.1,548.4 841.5,554.1Q834.9,559.8 830.6,566.7Q826.2,573.6 827.8,578.9L829.3,584.2"/>
<path stroke="#7f5a3b" stroke-width="3.9" d="M788.0,250.4Q780.6,252.3 777.0,253.7Q773.4,255.1 770.0,256.8Q766.6,258.5 763.2,260.0Q759.8,261.4 756.4,262.5Q753.0,263.7 749.5,264.5Q746.0,265.3 742.5,266.1Q739.0,267.0 735.6,268.3Q732.2,269.6 729.1,271.4Q725.9,273.2 723.0,275.5Q720.2,277.7 717.5,280.4Q714.9,283.1 712.2,285.8Q709.6,288.5 706.8,290.8Q703.9,293.1 700.8,295.0Q697.6,296.9 694.2,299.2Q690.9,301.5 687.6,304.2Q684.2,306.9 681.4,309.9Q678.5,312.9 676.2,316.3Q674.0,319.6 672.5,323.3Q670.9,326.9 669.8,330.9Q668.6,334.8 667.4,339.4Q666.2,343.9 664.4,348.0Q662.7,352.1 660.4,355.8Q658.0,359.4 655.2,362.8Q652.5,366.2 649.7,370.3Q647.0,374.5 644.9,378.9Q642.8,383.4 641.5,388.1Q640.3,392.7 639.8,397.8Q639.4,402.8 639.2,408.6Q639.0,414.3 638.4,419.9Q637.8,425.4 636.3,430.5L634.9,435.6"/>
<path stroke="#86603d" stroke-width="3.5" d="M762.4,281.6Q759.4,287.1 758.4,290.0Q757.5,292.9 756.8,295.8Q756.0,298.7 755.0,301.7Q754.1,304.6 752.7,307.6Q751.2,310.7 749.7,313.7Q748.2,316.8 747.2,320.0Q746.2,323.2 746.0,326.4Q745.8,329.6 746.0,333.7Q746.2,337.8 746.0,341.6Q745.9,345.5 744.7,348.7Q743.5,351.9 741.5,354.7Q739.4,357.4 737.3,360.6Q735.2,363.8 733.9,367.5Q732.5,371.2 732.3,374.8Q732.0,378.4 732.2,382.3Q732.3,386.1 731.8,390.0Q731.4,394.0 729.8,397.6Q728.3,401.2 726.3,405.4Q724.2,409.6 722.9,413.8Q721.5,418.0 721.7,422.0Q721.8,425.9 723.2,429.8Q724.6,433.6 725.9,438.7Q727.2,443.7 727.2,448.2Q727.2,452.6 725.6,456.4Q724.1,460.3 722.0,464.2Q719.9,468.1 718.8,472.7Q717.7,477.4 718.2,481.7Q718.7,486.1 720.0,491.1Q721.3,496.1 721.9,501.1Q722.5,506.1 721.4,510.5Q720.2,514.8 717.7,519.5Q715.2,524.2 713.1,529.8Q710.9,535.3 710.7,540.3Q710.5,545.3 712.3,549.7Q714.2,554.0 716.7,559.0Q719.2,564.1 720.4,569.6Q721.6,575.1 720.8,580.0Q719.9,584.9 717.9,589.9Q715.9,594.9 714.7,600.7L713.6,606.5"/>
<path stroke="#7c583a" stroke-width="4.0" d="M797.4,267.8Q794.7,272.7 794.2,275.3Q793.7,277.8 794.1,280.8Q794.6,283.7 795.1,287.4Q795.6,291.1 795.2,294.1Q794.7,297.1 792.9,299.2Q791.2,301.4 789.0,303.4Q786.7,305.3 785.3,308.3Q783.9,311.2 783.7,314.2Q783.4,317.3 783.4,320.8Q783.4,324.3 782.2,327.2Q781.1,330.2 778.8,333.4Q776.4,336.7 774.1,340.3Q771.9,344.0 771.4,347.4Q770.8,350.8 772.3,354.0Q773.7,357.1 775.5,361.3Q777.4,365.5 777.7,369.5Q778.0,373.5 776.4,376.6Q774.7,379.8 772.6,383.1Q770.6,386.4 770.0,390.3Q769.4,394.2 770.7,398.5Q772.0,402.8 773.3,407.5Q774.6,412.2 773.8,416.1Q773.1,420.0 770.1,423.3Q767.0,426.6 763.9,431.7Q760.7,436.8 759.9,441.3Q759.1,445.8 761.2,449.5Q763.2,453.3 765.8,457.7Q768.5,462.1 769.1,466.9Q769.8,471.7 767.9,475.6Q766.0,479.6 763.8,484.9Q761.7,490.2 761.9,494.9Q762.2,499.6 765.1,504.3Q768.1,509.0 771.1,514.9Q774.1,520.8 774.3,525.8Q774.4,530.8 771.2,534.7Q768.0,538.7 764.3,544.6Q760.7,550.5 759.9,556.1Q759.0,561.8 761.6,566.1Q764.2,570.5 767.5,575.8Q770.8,581.1 771.4,586.7Q772.0,592.2 769.4,597.5Q766.9,602.8 764.1,609.7Q761.4,616.5 762.0,622.1L762.7,627.7"/>
<path stroke="#93683f" stroke-width="3.7" d="M727.2,237.8Q723.0,241.2 721.4,243.2Q719.7,245.1 717.9,247.1Q716.1,249.1 713.8,250.9Q711.5,252.8 709.0,254.6Q706.5,256.5 704.6,258.8Q702.7,261.0 701.9,263.7Q701.2,266.3 701.1,270.1Q701.1,273.9 700.7,277.7Q700.2,281.4 698.5,283.8Q696.7,286.2 693.8,287.6Q690.9,289.0 688.2,290.9Q685.4,292.9 683.9,295.9Q682.3,298.9 681.9,302.4Q681.4,306.0 680.7,309.7Q680.1,313.5 677.9,316.1Q675.8,318.8 672.4,321.7Q669.0,324.7 665.9,328.2Q662.8,331.8 661.8,335.4Q660.7,339.0 661.7,342.7Q662.8,346.3 664.2,351.2Q665.6,356.0 665.4,360.5Q665.2,364.9 662.8,368.1Q660.4,371.2 657.5,374.6Q654.5,378.1 653.1,382.3Q651.7,386.6 652.6,391.2Q653.4,395.8 654.8,401.5Q656.1,407.2 655.6,411.9Q655.1,416.6 651.9,419.9Q648.6,423.3 644.2,428.0Q639.9,432.8 637.3,438.1Q634.7,443.3 635.4,448.0Q636.1,452.7 638.7,457.2Q641.2,461.7 642.7,467.9Q644.1,474.0 642.7,478.9Q641.2,483.7 637.9,488.8Q634.6,494.0 632.5,499.9Q630.4,505.8 631.6,511.0Q632.8,516.2 636.3,522.6Q639.7,529.0 642.1,535.9Q644.4,542.8 643.1,548.3Q641.8,553.8 637.3,558.1Q632.9,562.5 629.6,569.7L626.2,576.9"/>
<path stroke="#7c583a" stroke-width="3.9" d="M703.0,256.0Q699.1,260.7 698.2,263.3Q697.4,265.8 697.8,268.5Q698.1,271.1 698.9,274.4Q699.6,277.7 699.5,281.2Q699.5,284.7 698.1,287.2Q696.7,289.8 694.6,292.0Q692.5,294.2 691.0,297.0Q689.6,299.9 689.6,303.6Q689.5,307.2 690.2,311.6Q690.9,315.9 690.8,319.7Q690.6,323.5 688.4,326.1Q686.2,328.7 682.4,331.3Q678.5,333.8 675.0,337.8Q671.5,341.8 670.2,345.7Q669.0,349.6 670.2,353.2Q671.4,356.8 673.4,360.8Q675.3,364.8 675.7,369.5Q676.1,374.2 674.0,377.6Q671.9,381.1 668.7,385.4Q665.6,389.7 664.0,394.3Q662.4,398.8 663.7,402.9Q665.0,407.0 668.2,412.9Q671.3,418.9 673.2,424.8Q675.1,430.7 673.6,435.0Q672.0,439.3 667.3,442.2Q662.7,445.1 657.9,450.4Q653.1,455.8 651.4,461.2Q649.7,466.5 651.7,471.1Q653.6,475.7 656.7,481.2Q659.8,486.7 660.6,492.6Q661.3,498.6 658.3,502.9L655.3,507.2"/>
<path stroke="#ab784a" stroke-width="3.7" d="M714.6,269.8Q715.4,275.6 715.4,278.5Q715.4,281.5 714.3,284.8Q713.1,288.1 712.3,291.4Q711.5,294.7 712.8,297.6Q714.1,300.6 716.3,305.2Q718.6,309.7 718.9,313.4Q719.2,317.0 716.6,319.4Q714.0,321.8 711.3,324.9Q708.5,328.0 708.3,331.5Q708.0,335.0 709.3,338.5Q710.6,342.1 710.0,345.6Q709.5,349.0 706.5,353.3Q703.5,357.5 701.7,361.7Q699.9,365.9 702.0,369.0Q704.2,372.1 708.2,376.4Q712.1,380.7 713.1,385.0Q714.1,389.3 711.3,392.2Q708.5,395.1 706.2,399.1Q703.8,403.0 705.2,406.8Q706.6,410.5 709.4,415.6Q712.1,420.7 711.1,424.5Q710.1,428.2 705.3,432.5Q700.5,436.9 697.6,442.1Q694.7,447.4 697.5,450.7Q700.2,454.1 705.0,458.1Q709.9,462.2 710.8,466.8Q711.6,471.5 708.2,475.2Q704.7,478.9 703.0,484.1Q701.2,489.3 704.9,493.2Q708.5,497.1 713.1,503.1Q717.7,509.1 716.7,513.4Q715.6,517.6 709.6,521.8Q703.6,526.0 700.1,532.2Q696.7,538.4 700.1,542.0Q703.5,545.5 708.7,550.1Q713.9,554.7 713.7,559.4Q713.5,564.2 708.7,569.9L704.0,575.5"/>
<path stroke="#8f6541" stroke-width="3.1" d="M888.5,315.2Q889.8,320.8 891.4,322.9Q892.9,325.0 895.4,326.4Q898.0,327.9 900.5,330.5Q903.1,333.2 904.5,336.0Q905.9,338.8 906.0,341.7Q906.1,344.5 906.0,347.4Q905.9,350.3 906.7,353.3Q907.6,356.3 909.3,359.5Q911.1,362.7 912.3,366.0Q913.6,369.3 913.1,372.4Q912.7,375.5 911.1,380.0Q909.5,384.4 908.9,388.5Q908.2,392.6 909.7,395.6Q911.3,398.6 914.3,401.0Q917.3,403.5 919.5,407.5Q921.6,411.6 921.6,415.3Q921.5,419.0 920.2,422.8Q918.9,426.6 918.7,430.8Q918.6,435.0 920.6,438.8Q922.7,442.6 925.3,447.5Q928.0,452.3 928.5,456.6Q929.0,461.0 926.5,464.5Q924.0,468.0 920.8,473.2Q917.6,478.5 916.7,483.3Q915.7,488.1 917.9,491.9Q920.1,495.7 922.9,500.2Q925.6,504.7 926.0,509.6Q926.3,514.5 923.9,519.0Q921.5,523.5 919.2,529.2Q916.9,534.8 917.6,539.5Q918.4,544.2 922.0,549.3Q925.6,554.4 928.4,560.9Q931.2,567.3 930.1,572.3Q929.0,577.3 924.7,581.0Q920.3,584.7 916.6,591.0Q913.0,597.3 913.1,602.7L913.2,608.0"/>
<path stroke="#a57246" stroke-width="4.2" d="M886.0,325.7Q889.2,330.7 890.2,334.7Q891.2,338.7 892.9,341.4Q894.6,344.0 897.5,344.7Q900.4,345.4 903.3,346.4Q906.3,347.4 907.7,350.3Q909.2,353.3 909.8,357.1Q910.4,361.0 912.5,363.2Q914.5,365.5 918.7,366.7Q923.0,368.0 927.1,370.9Q931.2,373.8 932.2,377.1Q933.1,380.5 931.2,384.0Q929.3,387.4 928.1,392.4Q927.0,397.4 929.1,400.3Q931.3,403.2 934.8,406.4Q938.3,409.7 938.9,413.7Q939.6,417.7 936.7,422.9Q933.8,428.1 931.7,433.6Q929.7,439.2 932.4,442.5Q935.0,445.8 940.4,449.6Q945.7,453.5 947.1,459.1Q948.4,464.8 947.9,468.9Q947.5,473.1 943.4,478.1Q939.3,483.1 939.1,488.3Q939.0,493.5 943.1,499.0Q947.3,504.5 948.3,511.2Q949.2,517.9 947.0,522.2L944.7,526.6"/>
<path stroke="#7f5a3b" stroke-width="3.2" d="M785.2,265.1Q785.0,272.4 785.3,276.8Q785.6,281.3 785.3,285.1Q785.0,288.9 783.2,291.6Q781.5,294.2 778.5,295.9Q775.5,297.6 772.3,299.7Q769.1,301.9 767.0,305.2Q765.0,308.5 764.7,311.9Q764.3,315.2 764.7,319.0Q765.2,322.7 764.8,326.5Q764.4,330.3 762.2,333.2Q759.9,336.1 756.5,340.1Q753.1,344.2 750.3,348.3Q747.6,352.4 747.3,356.2Q747.1,360.0 749.7,363.2Q752.3,366.4 755.9,371.2Q759.5,376.0 761.5,381.0Q763.4,386.0 762.3,389.6Q761.1,393.1 757.7,395.8Q754.2,398.6 751.1,402.9Q748.0,407.2 747.6,411.6Q747.3,415.9 750.0,419.7Q752.7,423.6 756.1,429.1Q759.6,434.6 760.7,439.3Q761.8,444.0 759.0,447.5Q756.2,451.1 751.1,456.2Q746.0,461.4 742.1,467.8Q738.2,474.3 738.5,479.1Q738.9,483.9 743.7,486.8L748.4,489.7"/>
<path stroke="#a57246" stroke-width="3.6" d="M739.8,314.8Q732.7,317.7 730.0,320.3Q727.3,323.0 725.2,327.7Q723.2,332.4 720.6,335.2Q718.0,337.9 713.8,337.3Q709.7,336.8 705.1,336.6Q700.5,336.5 697.4,338.6Q694.3,340.8 692.5,343.9Q690.8,346.9 688.2,349.6Q685.6,352.3 681.2,353.9Q676.8,355.6 673.0,357.9Q669.2,360.3 668.6,363.9Q668.0,367.6 669.2,373.9Q670.4,380.2 669.2,384.4Q668.0,388.5 663.3,388.9Q658.6,389.2 654.2,391.3Q649.8,393.3 649.0,397.0Q648.3,400.8 649.1,406.7Q649.8,412.6 647.1,415.4Q644.3,418.2 637.9,420.6Q631.5,422.9 627.3,426.9Q623.1,430.9 624.9,435.1Q626.7,439.3 630.4,445.6Q634.2,451.9 633.2,456.4Q632.3,460.9 626.8,463.2Q621.4,465.5 618.4,470.3Q615.4,475.1 618.4,480.4Q621.3,485.7 624.7,492.9Q628.1,500.2 624.7,503.7Q621.4,507.2 614.5,511.2Q607.7,515.1 607.7,521.0L607.6,526.9"/>
<path stroke="#8c6340" stroke-width="3.5" d="M778.6,292.7Q776.2,296.7 774.4,298.9Q772.7,301.1 771.3,303.4Q769.9,305.8 769.8,308.0Q769.7,310.3 771.1,312.4Q772.5,314.6 774.4,317.8Q776.3,321.0 777.3,324.3Q778.3,327.6 777.5,330.1Q776.7,332.5 774.7,334.5Q772.8,336.5 771.1,338.9Q769.5,341.3 769.4,344.3Q769.2,347.3 770.4,351.0Q771.5,354.8 772.3,358.5Q773.1,362.1 772.0,365.1Q770.9,368.0 767.9,370.9Q764.9,373.8 761.6,378.2Q758.4,382.7 757.0,386.6Q755.7,390.6 757.3,393.9Q758.9,397.1 762.1,399.9Q765.3,402.7 767.6,407.6Q769.9,412.5 769.6,416.4Q769.4,420.4 767.0,423.7Q764.7,427.0 762.7,431.8Q760.7,436.7 761.2,440.9Q761.7,445.0 764.8,449.6Q767.8,454.3 771.0,459.9Q774.2,465.6 774.7,470.4Q775.3,475.2 772.2,478.9Q769.2,482.6 764.5,487.6Q759.8,492.5 756.9,498.6Q753.9,504.8 754.9,509.5Q755.8,514.3 759.7,518.1Q763.5,521.9 767.0,527.6Q770.4,533.2 770.6,538.6Q770.8,544.0 767.8,549.1Q764.8,554.2 761.6,561.2Q758.3,568.2 758.3,574.0Q758.4,579.8 762.6,584.0Q766.8,588.3 772.6,595.3Q778.4,602.4 781.6,609.2Q784.8,616.0 783.1,621.5L781.4,627.0"/>
<path stroke="#8c6340" stroke-width="4.1" d="M776.5,226.1Q784.3,228.3 787.8,230.7Q791.3,233.0 794.0,235.8Q796.6,238.6 798.5,241.7Q800.4,244.8 802.4,247.9Q804.4,251.0 807.2,253.8Q809.9,256.7 813.0,259.5Q816.1,262.2 818.7,265.3Q821.2,268.3 822.3,271.7Q823.4,275.2 823.4,279.9Q823.5,284.5 823.8,289.4Q824.2,294.3 826.2,297.5Q828.1,300.7 831.6,302.4Q835.1,304.1 838.7,306.2Q842.4,308.4 844.6,311.8Q846.8,315.2 847.4,318.9Q848.0,322.6 848.4,327.1Q848.9,331.7 850.8,334.9Q852.8,338.2 856.5,341.2Q860.2,344.1 863.9,347.9Q867.7,351.7 869.3,355.5Q871.0,359.4 869.9,363.2Q868.9,367.0 866.8,372.0Q864.7,377.0 864.2,382.0Q863.7,387.0 865.8,390.2Q868.0,393.5 871.6,396.1Q875.1,398.8 877.3,403.0Q879.6,407.3 879.0,411.3Q878.5,415.3 876.6,421.0Q874.7,426.7 874.2,431.6Q873.7,436.5 876.5,439.7Q879.2,442.9 884.1,446.8Q888.9,450.7 892.4,455.8Q896.0,461.0 895.8,465.4Q895.7,469.8 892.5,473.5Q889.2,477.2 886.2,482.6Q883.2,488.0 883.4,492.7Q883.6,497.4 886.7,501.1Q889.8,504.8 892.8,510.4Q895.7,516.1 895.3,520.8Q894.8,525.4 891.0,530.0Q887.1,534.6 883.1,540.9Q879.0,547.2 878.6,552.2Q878.2,557.2 882.1,561.0Q885.9,564.7 890.9,570.5L895.8,576.3"/>
<path stroke="#8f6541" stroke-width="3.9" d="M789.1,228.1Q780.2,230.8 775.9,232.2Q771.5,233.6 767.3,235.1Q763.0,236.6 759.1,238.5Q755.1,240.3 751.6,242.5Q748.0,244.7 744.8,247.3Q741.6,249.8 738.5,252.8Q735.4,255.7 732.2,258.1Q729.0,260.5 725.6,262.4Q722.2,264.2 718.8,266.0Q715.4,267.8 712.3,270.2Q709.3,272.7 706.8,275.5Q704.3,278.3 702.3,281.8Q700.3,285.4 698.3,288.7Q696.3,292.1 693.8,294.7Q691.4,297.4 688.4,299.4Q685.4,301.4 682.2,304.2Q679.0,306.9 676.4,310.1Q673.8,313.2 672.2,316.6Q670.7,320.0 670.1,323.6Q669.6,327.1 669.3,331.2Q669.0,335.2 668.1,339.1Q667.2,343.0 665.5,346.2Q663.7,349.4 661.5,353.0Q659.3,356.5 657.6,360.5L656.0,364.6"/>
<path stroke="#8a613e" stroke-width="3.9" d="M817.6,246.7Q822.8,249.6 825.5,250.8Q828.2,251.9 831.2,252.5Q834.2,253.2 837.3,254.4Q840.4,255.7 843.3,257.4Q846.1,259.1 848.4,261.4Q850.6,263.6 852.2,266.2Q853.8,268.9 855.3,271.8Q856.8,274.8 858.8,277.5Q860.7,280.2 863.3,282.4Q865.8,284.6 868.3,287.3Q870.9,290.1 872.6,293.2Q874.4,296.3 875.1,300.1Q875.9,303.9 876.2,308.4Q876.6,312.9 877.8,316.7Q878.9,320.6 881.3,323.5Q883.8,326.4 887.1,329.2Q890.4,332.0 893.2,336.2Q896.0,340.3 897.3,344.5Q898.6,348.8 898.5,353.1Q898.3,357.4 898.1,362.4Q897.8,367.4 898.7,372.2Q899.7,376.9 902.1,381.3Q904.5,385.6 907.2,390.9Q909.9,396.3 911.1,401.6Q912.4,406.9 911.5,412.0L910.6,417.0"/>
<path stroke="#8a613e" stroke-width="4.3" d="M795.7,225.8Q798.3,227.0 799.6,227.6Q801.0,228.2 802.3,229.0Q803.6,229.8 804.7,230.9Q805.8,231.9 806.5,233.7Q807.3,235.5 807.8,237.6Q808.4,239.6 809.1,241.4Q809.8,243.2 811.1,244.5Q812.3,245.8 814.2,246.7Q816.0,247.5 818.1,248.8Q820.2,250.0 821.9,252.0Q823.6,254.0 824.7,256.2Q825.7,258.5 826.2,260.9Q826.6,263.3 827.0,265.8Q827.3,268.4 828.1,271.1Q828.9,273.8 830.4,276.5Q831.9,279.2 833.6,282.2Q835.4,285.3 836.7,288.4Q838.1,291.6 838.5,294.9Q838.9,298.1 838.4,301.4Q837.9,304.6 837.2,309.1Q836.4,313.5 836.3,317.7Q836.2,321.8 837.2,325.5Q838.3,329.2 840.2,332.5Q842.2,335.8 844.2,339.6Q846.3,343.4 847.5,347.9Q848.8,352.3 848.9,356.7Q849.0,361.1 848.5,365.8Q848.0,370.6 847.8,375.7Q847.6,380.8 848.5,385.6Q849.4,390.4 851.3,395.1Q853.3,399.8 855.5,405.5Q857.8,411.2 859.1,416.8Q860.5,422.4 860.3,427.8Q860.1,433.2 858.6,438.3Q857.2,443.5 855.5,449.8Q853.9,456.2 853.4,462.5Q852.8,468.9 853.8,474.8Q854.7,480.6 856.7,486.2Q858.7,491.9 860.4,498.6Q862.0,505.3 862.4,511.9Q862.7,518.5 861.6,524.9Q860.5,531.3 858.9,538.9Q857.2,546.5 856.5,553.9Q855.7,561.3 856.7,568.2Q857.7,575.1 860.2,581.7Q862.6,588.4 865.1,596.7L867.7,605.0"/>
<path stroke="#8c6340" stroke-width="3.1" d="M782.8,226.3Q787.3,225.4 789.3,225.8Q791.3,226.2 792.5,227.5Q793.7,228.9 794.1,230.7Q794.5,232.6 794.6,234.6Q794.8,236.7 795.5,238.6Q796.2,240.6 797.8,241.5Q799.4,242.4 801.2,243.5Q803.1,244.6 804.2,246.5Q805.3,248.3 805.1,251.1Q805.0,254.0 804.1,257.7Q803.3,261.5 803.1,264.6Q802.9,267.7 804.6,269.3Q806.3,271.0 809.9,271.5Q813.4,272.1 817.3,274.2Q821.3,276.3 823.8,279.3Q826.3,282.3 826.6,285.4Q826.8,288.4 825.6,291.5Q824.3,294.5 823.4,298.2Q822.5,301.9 823.5,305.3Q824.5,308.7 827.3,312.1Q830.0,315.6 832.9,319.8Q835.7,323.9 836.5,327.9Q837.3,331.9 835.4,335.6Q833.5,339.2 830.2,344.9Q826.8,350.5 824.7,356.3Q822.6,362.0 823.5,366.4Q824.5,370.7 828.3,373.8Q832.1,377.0 836.6,381.1Q841.0,385.3 843.3,390.8Q845.6,396.3 844.8,401.2Q844.0,406.0 841.4,411.3Q838.8,416.6 837.3,422.9Q835.8,429.2 837.4,434.3Q839.1,439.4 843.3,445.1Q847.6,450.8 851.8,457.9Q856.0,465.0 857.1,471.4Q858.2,477.7 855.2,483.0Q852.2,488.3 847.0,494.5Q841.9,500.7 838.2,508.7Q834.5,516.8 834.8,523.5Q835.1,530.2 839.0,535.7Q842.8,541.1 847.3,548.1Q851.7,555.0 853.2,562.7Q854.7,570.3 852.2,576.8Q849.7,583.3 845.2,591.8Q840.7,600.4 838.2,608.9L835.6,617.5"/>
<path stroke="#8c6340" stroke-width="3.7" d="M779.6,257.9Q780.9,261.2 780.9,263.3Q780.9,265.5 781.2,268.0Q781.6,270.4 782.9,271.6Q784.2,272.7 786.0,273.5Q787.8,274.3 788.9,276.1Q790.0,277.8 790.1,280.7Q790.1,283.6 790.1,286.4Q790.2,289.3 791.8,290.9Q793.3,292.5 796.6,293.4Q799.9,294.2 803.3,296.8Q806.6,299.3 808.0,302.1Q809.3,304.9 808.5,307.6Q807.6,310.4 806.4,313.6Q805.2,316.8 805.7,320.1Q806.2,323.4 808.5,326.2Q810.8,329.1 812.7,332.7Q814.6,336.3 814.1,339.6Q813.6,343.0 811.2,347.9Q808.8,352.9 807.4,357.8Q805.9,362.7 807.6,366.1Q809.3,369.5 813.5,371.9Q817.7,374.4 821.2,379.3Q824.6,384.3 824.8,388.7Q825.0,393.1 822.9,397.1Q820.7,401.1 819.5,406.5Q818.2,412.0 820.1,416.2Q822.1,420.5 825.7,426.3Q829.4,432.2 831.0,437.8Q832.7,443.4 830.3,448.0Q827.9,452.6 823.4,458.8Q818.9,465.0 816.7,471.6Q814.5,478.2 816.8,483.2Q819.0,488.2 823.5,493.0Q828.0,497.9 830.2,504.7Q832.5,511.5 830.6,517.1Q828.6,522.7 825.1,529.8Q821.6,536.8 821.0,543.6Q820.4,550.4 824.3,556.0Q828.1,561.7 833.0,570.2Q837.8,578.8 838.8,586.2Q839.7,593.5 835.4,599.2L831.1,604.8"/>
<path stroke="#8a613e" stroke-width="3.3" d="M778.1,281.0Q763.7,284.7 756.8,287.1Q749.9,289.5 743.6,292.3Q737.2,295.0 731.6,298.1Q726.0,301.2 721.0,304.5Q715.9,307.8 711.1,310.9Q706.3,314.0 701.3,316.3Q696.3,318.7 691.3,320.4Q686.2,322.1 681.2,323.5Q676.3,324.9 672.0,326.6Q667.7,328.2 664.4,330.6Q661.1,333.0 658.7,336.4Q656.2,339.7 654.1,344.5Q652.0,349.3 649.6,352.4Q647.2,355.5 644.2,355.8Q641.3,356.0 637.9,354.0Q634.5,351.9 631.5,350.3Q628.4,348.6 626.9,348.6Q625.4,348.5 624.8,349.6Q624.2,350.6 623.4,353.0Q622.7,355.4 621.7,358.4Q620.8,361.3 620.4,361.4Q619.9,361.5 620.7,357.9Q621.4,354.4 622.3,355.0L623.2,355.5"/>
<path stroke="#7c583a" stroke-width="4.0" d="M765.2,232.1Q765.8,233.0 765.8,233.9Q765.8,234.8 765.9,235.8Q766.0,236.7 766.6,237.7Q767.3,238.6 768.4,240.2Q769.6,241.9 771.0,243.8Q772.3,245.7 773.0,247.7Q773.7,249.7 773.4,251.6Q773.0,253.5 771.7,255.4Q770.3,257.2 768.7,259.7Q767.1,262.3 766.1,265.3Q765.1,268.4 765.3,271.2Q765.5,274.0 766.6,276.7Q767.7,279.4 768.9,282.5Q770.0,285.7 770.3,289.3Q770.6,292.9 769.7,296.5Q768.8,300.1 767.2,304.6Q765.6,309.1 764.4,313.6Q763.3,318.1 763.7,322.3Q764.0,326.6 765.9,330.5Q767.8,334.4 770.2,339.8Q772.7,345.2 774.3,350.9Q776.0,356.6 775.7,361.8Q775.4,367.0 773.4,371.7Q771.3,376.5 768.7,381.6Q766.0,386.8 764.3,393.1Q762.7,399.5 762.9,405.4Q763.1,411.4 764.8,417.2Q766.5,423.1 768.2,430.4Q769.9,437.7 770.1,444.5Q770.2,451.4 768.2,457.7Q766.1,464.0 762.8,471.4Q759.4,478.9 756.6,487.1L753.8,495.2"/>
<path stroke="#7f5a3b" stroke-width="3.5" d="M769.1,298.7Q771.6,300.0 772.6,301.0Q773.7,302.0 774.2,303.3Q774.7,304.6 774.7,306.1Q774.6,307.5 774.3,309.7Q774.0,311.9 773.9,314.0Q773.8,316.2 774.4,318.0Q774.9,319.8 776.1,321.4Q777.2,323.1 778.6,324.8Q780.0,326.6 781.0,329.0Q782.0,331.3 782.2,334.0Q782.5,336.6 782.2,339.7Q781.9,342.9 781.6,346.2Q781.3,349.5 781.7,352.8Q782.1,356.0 783.4,359.0Q784.6,362.0 786.4,365.9Q788.3,369.8 789.8,374.0Q791.3,378.2 791.7,382.4Q792.2,386.5 791.3,390.4Q790.5,394.4 788.8,398.2Q787.2,402.1 785.8,407.2Q784.3,412.3 783.9,417.3Q783.5,422.2 784.3,426.9Q785.1,431.7 786.4,436.6Q787.8,441.6 788.7,447.3Q789.5,453.1 789.1,458.6Q788.7,464.1 787.1,469.6Q785.4,475.2 783.4,481.8Q781.3,488.3 780.1,494.8Q779.0,501.3 779.4,507.4Q779.9,513.6 781.7,519.5Q783.6,525.4 785.7,532.9Q787.8,540.4 788.9,547.9Q789.9,555.5 789.0,562.5L788.1,569.5"/>
<path stroke="#9c6c43" stroke-width="4.2" d="M778.9,306.8Q787.1,308.4 791.6,307.6Q796.0,306.7 800.8,306.2Q805.5,305.7 810.0,306.4Q814.5,307.0 818.1,308.9Q821.8,310.7 824.7,313.5Q827.5,316.3 830.1,319.1Q832.8,321.9 836.0,324.1Q839.3,326.3 843.2,327.8Q847.1,329.3 850.8,331.2Q854.4,333.2 856.8,336.1Q859.1,339.0 860.0,344.0Q860.8,348.9 861.4,354.5Q862.0,360.1 864.1,363.2Q866.2,366.3 870.6,366.6Q874.9,366.9 880.2,367.3Q885.5,367.8 889.4,370.6Q893.4,373.5 894.6,377.2Q895.9,380.8 895.6,385.0Q895.3,389.2 895.9,393.8Q896.5,398.5 899.8,400.9Q903.0,403.4 907.9,407.1Q912.8,410.8 916.4,414.9Q919.9,419.1 919.7,423.3Q919.5,427.5 916.2,432.2Q912.8,436.9 909.7,443.9Q906.5,450.8 907.0,455.4Q907.4,460.1 911.7,462.7Q916.1,465.3 921.2,469.1Q926.3,472.9 928.3,478.1Q930.2,483.4 928.0,487.8Q925.8,492.2 922.2,498.7Q918.6,505.3 917.9,510.9Q917.2,516.5 921.2,520.4Q925.1,524.3 931.1,531.1Q937.1,538.0 940.2,545.0L943.4,551.9"/>
<path stroke="#8a613e" stroke-width="3.3" d="M820.4,276.7Q818.4,280.7 817.7,283.0Q817.1,285.3 817.6,288.2Q818.2,291.1 818.5,293.9Q818.9,296.8 817.1,299.0Q815.4,301.2 812.5,304.8Q809.7,308.5 808.6,311.8Q807.6,315.2 809.5,317.7Q811.5,320.2 814.0,323.3Q816.5,326.4 816.4,329.8Q816.4,333.1 814.6,336.5Q812.8,339.9 812.7,343.5Q812.7,347.1 815.6,351.1Q818.5,355.2 820.8,359.7Q823.1,364.3 821.3,367.5Q819.4,370.8 815.1,374.8Q810.8,378.8 809.1,383.6Q807.4,388.4 810.0,391.7Q812.7,394.9 815.7,399.2Q818.7,403.5 817.7,407.6Q816.7,411.7 813.5,417.4Q810.2,423.1 810.3,427.8Q810.4,432.5 815.3,436.4Q820.3,440.3 824.7,446.4Q829.2,452.5 827.7,457.0Q826.3,461.4 821.3,466.0Q816.2,470.5 814.5,476.6Q812.7,482.7 816.6,486.5Q820.4,490.4 824.1,496.7Q827.8,503.1 825.6,507.9L823.4,512.7"/>
<path stroke="#8c6340" stroke-width="4.0" d="M810.3,259.3Q818.4,264.7 822.0,268.1Q825.5,271.5 828.2,276.1Q830.9,280.7 833.9,284.5Q836.9,288.2 841.5,289.5Q846.0,290.8 851.1,292.7Q856.3,294.6 859.8,297.7Q863.4,300.9 865.0,304.8Q866.6,308.7 868.5,312.7Q870.3,316.7 873.7,319.6Q877.2,322.5 880.6,325.8Q884.1,329.0 885.2,332.9Q886.2,336.7 885.7,342.9Q885.1,349.2 886.4,353.3Q887.8,357.5 892.3,358.6Q896.8,359.7 901.3,362.4Q905.8,365.1 907.0,368.9Q908.2,372.7 907.5,377.1Q906.9,381.6 908.6,385.1Q910.3,388.6 914.7,392.1Q919.2,395.5 921.7,399.5Q924.3,403.6 922.0,407.2Q919.8,410.8 916.3,416.7Q912.9,422.6 913.7,426.4Q914.5,430.1 919.0,432.2Q923.5,434.3 925.7,438.7Q927.9,443.1 925.5,447.1Q923.0,451.0 920.6,456.0Q918.3,461.0 921.1,464.1Q923.9,467.1 929.1,472.6Q934.3,478.2 934.8,482.8Q935.3,487.4 929.9,489.5Q924.6,491.7 920.1,496.8Q915.7,501.9 917.2,505.6Q918.8,509.3 922.3,514.6Q925.8,519.9 924.1,523.8L922.4,527.7"/>
<path stroke="#9c6c43" stroke-width="3.2" d="M778.8,243.8Q783.2,245.8 785.6,246.8Q787.9,247.8 789.7,249.5Q791.4,251.1 792.5,253.9Q793.5,256.6 794.8,259.2Q796.1,261.7 798.5,262.6Q800.8,263.5 803.4,264.3Q806.0,265.2 807.7,267.2Q809.5,269.3 810.7,272.0Q811.9,274.7 814.0,276.5Q816.1,278.3 819.0,280.5Q822.0,282.7 823.8,285.3Q825.7,287.9 825.6,290.9Q825.6,293.9 825.6,297.9Q825.6,301.9 827.3,304.6Q829.1,307.2 831.6,309.6Q834.1,312.0 835.0,315.4Q836.0,318.7 835.8,323.2Q835.7,327.6 837.0,331.0Q838.4,334.4 841.8,337.2Q845.2,340.1 847.8,344.1Q850.3,348.1 850.1,351.9Q849.8,355.8 848.8,360.3Q847.8,364.8 848.9,368.9Q850.1,373.0 852.6,377.2Q855.1,381.4 855.6,385.8Q856.1,390.3 854.4,395.8Q852.7,401.2 852.4,406.5Q852.1,411.8 855.2,415.5Q858.2,419.3 861.4,424.6Q864.6,430.0 864.5,435.1Q864.4,440.1 862.6,445.5Q860.9,450.8 861.5,456.2Q862.1,461.6 865.0,467.5Q867.9,473.3 868.7,479.2Q869.5,485.1 866.7,490.7Q864.0,496.2 861.7,503.2Q859.4,510.2 861.3,515.8Q863.1,521.3 866.4,527.4Q869.7,533.5 869.7,540.0Q869.7,546.4 867.1,553.0Q864.4,559.6 864.2,566.4Q863.9,573.2 867.2,580.1L870.5,587.0"/>
<path stroke="#8f6541" stroke-width="3.9" d="M758.6,237.8Q757.2,238.9 757.1,240.2Q757.0,241.5 756.7,242.8Q756.4,244.0 754.8,244.6Q753.2,245.1 750.5,246.7Q747.9,248.3 745.8,250.4Q743.8,252.4 743.8,254.5Q743.8,256.6 745.6,258.5Q747.4,260.4 749.1,263.5Q750.8,266.6 750.5,269.3Q750.3,272.0 748.4,274.1Q746.4,276.2 745.0,279.4Q743.5,282.6 744.2,285.7Q744.9,288.9 747.1,293.6Q749.4,298.2 750.4,302.5Q751.5,306.9 749.4,309.9Q747.4,313.0 743.1,316.4Q738.8,319.8 735.6,324.9Q732.4,330.0 732.7,334.4Q733.0,338.7 735.9,342.5Q738.7,346.4 740.8,351.9Q742.9,357.5 741.6,362.2Q740.4,366.9 737.0,372.6Q733.6,378.2 731.8,384.3Q730.0,390.3 732.2,395.3Q734.4,400.3 739.1,407.2Q743.7,414.1 746.3,421.4Q748.9,428.6 746.7,434.2Q744.5,439.8 739.2,445.0Q733.9,450.3 730.3,458.2Q726.7,466.1 727.9,472.7Q729.1,479.3 733.2,486.0L737.3,492.7"/>
<path stroke="#8c6340" stroke-width="3.6" d="M755.8,293.6Q751.3,299.0 749.6,303.2Q747.8,307.3 745.4,310.1Q743.0,312.8 739.6,313.7Q736.1,314.5 732.6,315.4Q729.0,316.2 726.6,318.8Q724.1,321.3 722.4,325.1Q720.8,328.8 718.4,331.5Q716.1,334.1 712.0,335.4Q708.0,336.7 703.7,339.1Q699.5,341.4 697.4,344.6Q695.3,347.7 695.7,351.5Q696.1,355.3 696.4,360.6Q696.8,365.9 694.7,368.9Q692.5,371.9 688.6,373.8Q684.7,375.6 682.2,379.2Q679.8,382.8 680.4,387.4Q681.0,392.1 682.1,397.9Q683.2,403.7 681.1,407.0Q678.9,410.3 673.4,412.3Q667.9,414.3 663.3,418.8Q658.7,423.2 658.6,427.5Q658.6,431.9 661.5,436.3Q664.5,440.8 665.3,446.4Q666.2,452.0 662.7,455.2Q659.2,458.4 655.0,463.9Q650.7,469.3 650.9,474.1L651.0,478.8"/>
<path stroke="#8f6541" stroke-width="3.7" d="M760.6,306.7Q764.5,308.7 764.8,310.6Q765.1,312.6 765.1,314.8Q765.1,317.0 767.0,319.3Q768.9,321.5 771.6,324.3Q774.2,327.1 774.1,329.5Q774.1,331.8 770.9,333.7Q767.7,335.6 765.4,339.4Q763.0,343.2 764.3,345.4Q765.5,347.7 767.8,349.7Q770.0,351.7 769.4,355.0Q768.8,358.2 766.6,362.3Q764.5,366.3 765.7,369.1Q766.8,371.8 771.6,374.9Q776.3,378.0 779.2,382.3Q782.1,386.5 779.6,389.2Q777.1,391.9 773.2,395.4Q769.4,398.9 769.8,402.5Q770.1,406.1 773.3,410.0Q776.4,413.9 776.0,417.7Q775.6,421.5 771.0,426.5Q766.4,431.5 764.2,436.5Q762.1,441.5 766.5,444.2Q770.9,446.8 776.5,452.1Q782.1,457.4 781.8,461.8Q781.4,466.2 776.8,469.9Q772.2,473.5 771.5,478.5Q770.7,483.5 775.2,488.8Q779.8,494.1 781.8,499.8Q783.9,505.5 778.6,508.9Q773.4,512.3 767.1,519.7Q760.8,527.0 762.2,531.8Q763.5,536.6 770.2,540.8Q776.9,545.1 778.9,551.4Q781.0,557.7 776.0,562.3Q771.1,567.0 768.1,573.7Q765.1,580.3 770.2,585.3Q775.2,590.4 781.3,598.6Q787.3,606.9 784.6,612.1Q781.8,617.2 773.1,622.8L764.3,628.4"/>
<path stroke="#7c583a" stroke-width="3.7" d="M762.9,310.2Q760.4,313.4 759.8,315.4Q759.2,317.4 759.2,320.5Q759.2,323.5 759.4,326.6Q759.6,329.7 759.1,332.1Q758.5,334.6 756.8,336.0Q755.0,337.4 752.2,338.2Q749.4,339.0 746.5,340.8Q743.6,342.6 741.7,345.3Q739.7,347.9 739.2,350.7Q738.7,353.4 739.1,356.2Q739.5,359.0 739.6,362.1Q739.8,365.3 738.8,368.2Q737.7,371.1 735.4,374.4Q733.1,377.8 730.7,381.4Q728.2,385.1 727.1,388.7Q726.0,392.3 727.0,395.6Q728.0,398.9 730.5,402.8Q733.0,406.6 735.4,411.8Q737.8,417.1 738.3,421.4Q738.8,425.8 736.9,429.2Q735.0,432.5 731.7,435.4Q728.4,438.3 725.7,442.9Q723.0,447.5 722.4,452.1Q721.8,456.7 723.5,460.7Q725.1,464.8 727.3,470.4Q729.5,476.0 730.1,481.2Q730.8,486.3 728.8,490.6Q726.8,494.9 722.9,500.3Q719.1,505.7 715.7,512.0Q712.3,518.4 711.7,524.0Q711.0,529.6 713.7,534.2Q716.5,538.8 721.0,543.5Q725.5,548.1 729.1,555.0Q732.7,561.9 733.3,567.9Q733.8,573.9 731.3,579.0Q728.8,584.1 725.3,590.1Q721.8,596.1 720.3,603.1Q718.7,610.1 720.5,615.9L722.4,621.6"/>
<path stroke="#8c6340" stroke-width="3.0" d="M804.4,228.9Q803.5,230.9 803.3,232.0Q803.0,233.1 804.0,234.5Q804.9,235.8 806.8,238.1Q808.6,240.4 809.7,242.4Q810.7,244.4 809.6,245.6Q808.5,246.8 805.8,247.5Q803.1,248.2 800.9,250.7Q798.7,253.1 798.7,255.2Q798.6,257.3 799.9,259.1Q801.2,260.9 801.8,263.2Q802.3,265.5 800.9,268.3Q799.5,271.2 797.5,274.5Q795.5,277.8 795.4,280.6Q795.3,283.4 798.0,285.5Q800.8,287.5 804.3,291.6Q807.8,295.8 809.0,299.4Q810.2,303.1 808.2,305.7Q806.1,308.3 803.0,311.2Q800.0,314.1 799.2,318.0Q798.3,322.0 800.2,325.4Q802.2,328.9 804.1,333.5Q806.1,338.1 805.0,341.8Q804.0,345.5 800.2,350.2Q796.5,354.8 793.5,360.3Q790.5,365.7 791.6,369.9Q792.7,374.0 797.2,377.1Q801.7,380.1 805.4,386.1Q809.2,392.2 809.0,397.0Q808.7,401.8 805.5,405.8Q802.2,409.7 800.1,415.7Q798.1,421.7 800.1,426.4Q802.1,431.1 806.3,437.7Q810.4,444.4 812.0,450.5Q813.6,456.6 810.3,461.3Q806.9,465.9 801.3,472.7Q795.8,479.6 793.4,486.6Q791.0,493.6 794.2,498.8Q797.3,503.9 802.6,509.4Q807.9,514.9 809.9,522.0Q812.0,529.1 809.1,534.8Q806.2,540.4 802.3,548.5Q798.4,556.6 798.8,563.5Q799.2,570.3 804.7,576.6Q810.1,582.8 815.5,591.7L821.0,600.5"/>
<path stroke="#8a613e" stroke-width="3.9" d="M709.9,285.5Q706.5,290.9 705.4,293.7Q704.3,296.6 703.8,300.4Q703.2,304.3 702.6,308.1Q702.0,311.9 700.7,315.0Q699.4,318.1 697.2,320.3Q694.9,322.6 692.1,324.5Q689.4,326.3 686.9,329.1Q684.4,331.8 682.8,335.0Q681.3,338.2 680.6,341.5Q680.0,344.8 679.5,348.5Q679.0,352.2 677.7,355.6Q676.4,358.9 674.1,362.1Q671.8,365.3 669.1,369.0Q666.4,372.6 664.5,376.4Q662.6,380.1 662.3,383.8Q662.1,387.5 663.4,391.0Q664.6,394.5 666.1,399.5Q667.6,404.4 668.0,408.9Q668.3,413.3 666.8,416.9Q665.4,420.4 662.8,423.5Q660.3,426.5 658.2,430.6Q656.1,434.7 655.6,438.9Q655.2,443.1 656.4,447.5Q657.5,451.9 658.9,457.1Q660.4,462.2 660.3,466.7Q660.3,471.3 658.1,474.9Q656.0,478.6 652.6,483.4Q649.2,488.1 646.6,493.5Q644.0,498.9 643.8,503.7Q643.7,508.5 646.0,512.5Q648.3,516.5 651.5,521.0Q654.7,525.6 656.5,531.1Q658.4,536.6 657.7,541.3Q657.1,546.1 654.7,550.5Q652.3,555.0 650.4,561.0Q648.5,567.0 649.0,572.1Q649.4,577.3 652.4,581.8Q655.5,586.3 659.2,592.6L663.0,598.9"/>
<path stroke="#7c583a" stroke-width="4.0" d="M758.0,251.2Q757.7,257.3 757.2,260.3Q756.8,263.2 755.7,266.6Q754.7,270.0 753.4,273.5Q752.1,277.0 751.2,280.5Q750.2,283.9 750.2,287.2Q750.1,290.5 751.2,293.4Q752.2,296.4 753.8,299.4Q755.5,302.4 756.9,306.4Q758.3,310.4 758.7,314.1Q759.1,317.8 758.4,321.1Q757.7,324.4 756.5,327.6Q755.2,330.8 754.3,334.4Q753.5,338.1 753.7,341.7Q753.9,345.3 755.1,349.4Q756.3,353.5 757.7,357.8Q759.1,362.1 759.6,366.1Q760.1,370.2 759.0,373.7Q757.9,377.2 755.6,380.9Q753.2,384.5 750.8,389.4Q748.4,394.4 747.3,398.9Q746.2,403.5 747.0,407.4Q747.9,411.3 750.2,414.6Q752.6,418.0 755.1,422.1Q757.6,426.3 758.8,430.9Q760.0,435.6 759.4,439.7Q758.8,443.8 757.0,448.1Q755.1,452.3 753.6,457.4Q752.1,462.6 752.4,467.1Q752.6,471.6 754.8,475.4Q757.1,479.2 760.3,484.6Q763.6,490.0 766.0,495.4Q768.5,500.7 768.6,505.4Q768.8,510.1 766.5,514.2Q764.2,518.2 760.8,523.0Q757.3,527.7 754.9,533.8Q752.4,539.8 752.5,544.9Q752.5,550.0 755.0,554.2L757.5,558.3"/>
<path stroke="#7f5a3b" stroke-width="3.8" d="M807.4,245.1Q807.7,249.9 808.3,252.4Q809.0,254.9 810.1,257.5Q811.2,260.2 812.0,262.9Q812.8,265.6 812.7,268.4Q812.6,271.2 811.9,274.9Q811.1,278.7 810.7,282.2Q810.3,285.8 811.2,288.7Q812.2,291.5 814.6,293.7Q816.9,296.0 819.3,299.1Q821.7,302.3 822.8,305.8Q823.9,309.3 823.5,312.6Q823.2,315.9 822.5,319.5Q821.8,323.2 822.3,326.9Q822.8,330.5 824.8,334.3Q826.8,338.0 829.0,342.3Q831.2,346.5 831.7,350.5Q832.2,354.5 830.5,358.0Q828.9,361.6 826.4,366.7Q824.0,371.8 823.1,376.6Q822.2,381.4 823.9,385.2Q825.6,389.0 828.6,392.4Q831.6,395.9 833.5,400.9Q835.5,405.8 834.9,410.2Q834.4,414.6 832.4,419.7Q830.4,424.8 829.5,430.2Q828.6,435.5 830.5,439.8Q832.4,444.1 836.1,449.3Q839.8,454.6 842.5,460.5Q845.1,466.3 844.5,471.3Q843.8,476.3 840.4,480.5L837.0,484.7"/>
<path stroke="#9c6c43" stroke-width="3.5" d="M794.6,277.7Q796.3,281.3 796.5,283.4Q796.6,285.6 796.4,288.5Q796.1,291.5 796.2,294.2Q796.2,296.9 797.3,298.9Q798.3,300.9 800.4,302.4Q802.4,303.8 804.7,305.5Q807.0,307.3 808.5,310.0Q810.1,312.6 810.5,315.3Q810.9,318.1 810.8,320.9Q810.7,323.7 811.1,326.9Q811.5,330.0 813.1,333.0Q814.7,335.9 816.9,339.4Q819.1,342.8 820.7,346.4Q822.2,349.9 822.0,353.3Q821.8,356.6 820.2,360.0Q818.5,363.4 816.9,368.2Q815.3,373.1 815.2,377.3Q815.1,381.4 816.9,384.8Q818.8,388.1 821.3,391.3Q823.9,394.6 825.5,399.1Q827.0,403.6 826.7,407.7Q826.3,411.9 824.9,417.0Q823.5,422.0 822.9,427.1Q822.3,432.1 823.9,436.3Q825.4,440.5 828.7,445.3Q831.9,450.0 834.8,455.7Q837.7,461.4 838.2,466.6Q838.7,471.8 836.5,476.3Q834.4,480.9 831.4,486.3Q828.5,491.8 827.1,497.9Q825.8,504.0 827.2,509.2Q828.6,514.4 831.4,519.6Q834.3,524.8 836.1,531.2Q837.9,537.6 836.9,543.2Q836.0,548.9 833.0,555.3Q830.0,561.8 827.6,569.0L825.2,576.2"/>
<path stroke="#8c6340" stroke-width="3.0" d="M776.4,246.7Q775.7,251.3 774.8,254.1Q773.9,257.0 773.2,259.8Q772.5,262.6 772.8,265.0Q773.0,267.4 774.5,269.3Q775.9,271.2 778.0,272.9Q780.2,274.5 782.0,277.4Q783.9,280.3 784.6,283.1Q785.3,286.0 784.9,288.7Q784.5,291.4 783.9,294.1Q783.2,296.8 783.3,299.9Q783.3,303.0 784.5,306.2Q785.8,309.5 787.6,313.2Q789.4,316.8 790.5,320.4Q791.6,324.0 791.1,327.2Q790.5,330.4 788.4,333.3Q786.2,336.1 783.7,340.7Q781.2,345.4 780.0,349.6Q778.8,353.9 779.6,357.4Q780.5,360.9 782.8,363.9Q785.1,367.0 787.3,370.9Q789.5,374.7 790.1,379.0Q790.7,383.3 789.4,387.0Q788.2,390.8 786.3,395.7Q784.5,400.6 783.8,405.3Q783.2,409.9 784.7,413.8Q786.3,417.7 789.5,422.7Q792.6,427.6 795.3,433.2Q798.0,438.8 798.4,443.7Q798.8,448.7 796.3,452.7Q793.9,456.7 790.2,461.0Q786.5,465.3 783.8,471.3Q781.1,477.2 781.1,482.3Q781.1,487.5 783.5,491.9Q785.8,496.3 788.4,501.9Q791.1,507.5 791.7,513.2Q792.3,518.9 790.1,523.7Q787.9,528.5 784.3,535.0Q780.8,541.6 778.4,548.0Q776.1,554.4 776.9,559.9Q777.8,565.4 781.5,570.0Q785.3,574.7 789.6,582.2Q793.9,589.7 795.7,596.7L797.6,603.6"/>
<path stroke="#ab784a" stroke-width="3.2" d="M754.5,258.0Q748.8,260.9 746.5,262.9Q744.3,265.0 742.5,267.4Q740.8,269.8 739.0,272.3Q737.2,274.9 734.9,277.1Q732.7,279.3 730.1,280.9Q727.4,282.5 724.8,284.5Q722.2,286.6 720.2,289.0Q718.2,291.5 717.1,295.1Q716.0,298.8 715.2,302.9Q714.4,307.1 713.1,310.4Q711.8,313.8 709.1,315.7Q706.5,317.6 702.8,318.5Q699.0,319.3 695.1,321.5Q691.2,323.8 688.4,326.8Q685.6,329.8 684.4,333.2Q683.2,336.6 683.0,340.1Q682.8,343.7 682.3,347.8Q681.8,351.8 679.9,355.2Q678.0,358.5 674.9,361.8Q671.8,365.1 668.6,368.9Q665.5,372.7 663.9,376.6Q662.3,380.6 662.9,384.6Q663.4,388.6 665.2,394.1Q666.9,399.6 667.9,405.3Q669.0,411.0 667.8,415.3Q666.5,419.6 663.0,422.5Q659.6,425.4 655.4,428.8Q651.2,432.1 648.5,437.1Q645.8,442.0 645.6,446.7Q645.3,451.4 646.8,456.4Q648.2,461.3 649.2,467.3Q650.2,473.3 648.9,478.2Q647.6,483.0 643.9,487.4Q640.2,491.7 636.0,497.8Q631.8,503.9 629.6,509.8Q627.4,515.6 628.5,520.8Q629.7,526.0 633.2,530.8Q636.8,535.6 640.1,543.0Q643.4,550.5 644.0,556.8Q644.6,563.1 641.9,568.2Q639.2,573.2 635.2,578.4L631.2,583.5"/>
<path stroke="#8c6340" stroke-width="3.9" d="M785.7,249.8Q775.4,251.9 770.4,253.1Q765.5,254.3 760.9,255.8Q756.3,257.4 752.2,259.4Q748.1,261.5 744.4,263.8Q740.7,266.1 737.3,268.8Q733.8,271.4 730.3,273.6Q726.8,275.7 723.2,277.0Q719.6,278.4 716.0,279.9Q712.4,281.4 709.2,283.3Q706.0,285.3 703.6,287.7Q701.2,290.1 699.6,293.5Q697.9,296.9 696.7,300.6Q695.4,304.3 693.9,307.0Q692.3,309.8 689.9,311.3Q687.4,312.8 684.3,313.5Q681.1,314.2 677.9,316.5Q674.8,318.9 672.7,321.6Q670.6,324.4 670.2,327.2Q669.8,330.1 670.7,332.8L671.7,335.5"/>
<path stroke="#7f5a3b" stroke-width="3.0" d="M801.6,237.8Q805.2,241.5 808.0,242.9Q810.7,244.4 813.7,245.9Q816.6,247.5 817.6,249.9Q818.6,252.4 817.8,256.2Q817.0,260.0 817.3,263.7Q817.7,267.4 820.3,268.5Q823.0,269.6 825.6,270.9Q828.3,272.2 828.8,275.7Q829.3,279.2 829.8,282.7Q830.3,286.2 833.7,287.2Q837.1,288.2 841.7,290.8Q846.3,293.5 847.8,296.6Q849.2,299.6 847.2,302.9Q845.3,306.1 844.6,310.5Q843.9,315.0 846.7,317.1Q849.4,319.2 851.8,322.6Q854.1,325.9 852.6,330.3Q851.2,334.7 849.3,340.1Q847.5,345.5 850.4,347.9Q853.3,350.3 859.2,353.0Q865.0,355.6 867.2,359.8Q869.4,363.9 866.9,367.4Q864.3,371.0 863.3,375.8Q862.2,380.6 865.8,384.3Q869.3,388.0 872.2,392.7Q875.0,397.5 872.1,401.2Q869.1,404.9 864.6,411.9Q860.0,418.9 861.4,423.0Q862.9,427.2 868.9,430.2Q875.0,433.2 877.4,438.5Q879.8,443.8 876.5,448.2Q873.1,452.6 871.6,458.4Q870.0,464.2 874.8,468.8Q879.5,473.4 883.9,479.9Q888.3,486.4 885.0,490.7Q881.7,495.0 875.1,501.3Q868.4,507.6 868.1,513.3Q867.8,518.9 873.5,523.0Q879.2,527.1 881.2,533.5Q883.2,540.0 878.3,545.6Q873.4,551.2 870.6,558.1Q867.7,565.0 873.1,569.5Q878.5,574.1 884.8,582.6L891.1,591.2"/>
<path stroke="#8a613e" stroke-width="2.9" d="M778.0,262.3Q777.5,266.3 777.6,268.6Q777.8,270.9 777.7,273.2Q777.7,275.6 777.1,277.7Q776.5,279.8 775.0,281.5Q773.4,283.3 771.2,285.3Q769.0,287.2 766.9,290.3Q764.8,293.4 763.5,296.5Q762.2,299.6 762.2,302.6Q762.2,305.6 763.2,308.6Q764.2,311.5 765.4,314.8Q766.6,318.1 767.0,322.0Q767.4,325.8 766.6,329.3Q765.7,332.8 763.9,336.8Q762.2,340.8 760.5,345.3Q758.8,349.8 758.4,354.1Q758.0,358.4 759.3,362.4Q760.6,366.4 763.1,371.2Q765.7,376.1 768.1,381.8Q770.6,387.5 771.5,392.7Q772.4,398.0 771.1,402.6Q769.8,407.2 766.8,411.4Q763.8,415.6 760.6,421.4Q757.4,427.2 755.7,433.4Q754.0,439.6 754.7,445.1L755.4,450.7"/>
<path stroke="#8a613e" stroke-width="3.5" d="M840.1,275.8Q844.6,286.6 846.9,291.7Q849.2,296.8 851.1,301.9Q852.9,307.0 854.2,312.3Q855.6,317.5 856.5,322.7Q857.4,328.0 858.4,332.8Q859.5,337.6 861.1,341.8Q862.8,345.9 865.2,349.3Q867.6,352.7 870.2,356.8Q872.8,360.8 874.7,364.8Q876.6,368.7 877.3,372.4Q878.0,376.1 877.5,379.4Q877.0,382.7 876.1,386.0Q875.2,389.4 874.9,392.8Q874.7,396.2 875.5,398.8Q876.3,401.4 877.9,404.0Q879.5,406.7 880.7,409.6Q881.9,412.6 881.7,415.0Q881.5,417.4 879.7,418.9Q877.8,420.3 875.2,422.5Q872.6,424.7 870.7,426.4L868.9,428.0"/>
<path stroke="#86603d" stroke-width="4.1" d="M815.2,318.8Q818.7,326.7 821.3,329.6Q824.0,332.5 828.0,334.9Q832.0,337.3 835.8,340.6Q839.6,343.9 841.3,347.5Q843.0,351.1 842.7,354.9Q842.5,358.7 842.7,363.2Q842.9,367.7 845.1,370.8Q847.3,373.8 850.3,377.0Q853.2,380.1 854.2,383.8Q855.1,387.4 853.8,392.8Q852.5,398.2 852.1,403.0Q851.7,407.9 854.8,410.1Q857.9,412.3 863.2,414.4Q868.4,416.5 871.5,420.3Q874.6,424.1 873.6,427.6Q872.6,431.2 870.6,435.4Q868.6,439.7 869.8,443.1Q871.1,446.6 875.2,450.1Q879.4,453.7 881.7,457.7Q883.9,461.7 881.2,464.8Q878.4,467.9 873.8,473.8Q869.1,479.7 868.5,483.8Q867.8,488.0 872.6,489.6Q877.4,491.3 882.3,495.3Q887.3,499.3 886.9,503.0Q886.5,506.6 882.2,510.3Q877.9,514.0 876.3,518.4L874.7,522.7"/>
<path stroke="#7f5a3b" stroke-width="3.0" d="M801.4,226.9Q807.6,231.4 810.2,234.0Q812.9,236.6 814.7,240.0Q816.6,243.5 818.3,247.4Q820.1,251.3 822.7,253.8Q825.3,256.4 828.8,257.7Q832.3,259.0 835.5,261.2Q838.8,263.4 840.9,266.4Q843.0,269.3 844.8,272.6Q846.6,275.9 849.2,278.6Q851.9,281.3 855.2,284.1Q858.5,286.9 861.0,290.0Q863.4,293.1 864.0,296.6Q864.6,300.2 864.6,304.9Q864.7,309.7 866.2,313.2Q867.8,316.8 870.8,319.0Q873.9,321.2 876.5,324.3Q879.0,327.4 879.8,331.3Q880.5,335.2 880.9,339.8Q881.2,344.3 883.5,347.4Q885.7,350.5 889.5,353.6Q893.3,356.8 895.9,360.7Q898.6,364.6 898.4,368.5Q898.1,372.4 896.8,376.9Q895.5,381.5 896.2,385.7Q896.9,390.0 899.6,393.2Q902.4,396.5 904.3,400.8Q906.1,405.1 905.2,409.5Q904.3,413.9 902.8,419.4Q901.2,425.0 902.5,429.0Q903.7,433.1 907.6,436.5Q911.6,439.9 914.4,444.9Q917.2,449.9 916.4,454.2Q915.5,458.5 913.3,463.2Q911.0,467.8 911.2,472.6Q911.3,477.4 914.1,482.1Q917.0,486.8 918.5,492.1Q920.0,497.4 917.6,501.5Q915.3,505.7 911.8,511.8Q908.3,517.9 908.1,523.0Q907.9,528.1 911.3,532.0Q914.8,535.9 917.3,542.1Q919.9,548.3 918.3,553.1L916.7,557.8"/>
<path stroke="#8f6541" stroke-width="3.4" d="M805.5,259.0Q803.5,264.3 802.2,267.5Q800.9,270.8 800.1,274.1Q799.2,277.4 799.1,280.5Q799.0,283.6 799.6,286.6Q800.3,289.5 801.0,292.5Q801.7,295.5 801.8,298.8Q802.0,302.0 801.4,305.4Q800.9,308.8 800.1,312.4Q799.4,316.0 799.3,319.5Q799.2,322.9 800.0,326.2Q800.9,329.4 802.3,333.6Q803.7,337.8 804.6,341.8Q805.5,345.9 805.1,349.5Q804.8,353.0 803.1,356.2Q801.5,359.3 799.5,362.9Q797.5,366.6 796.4,370.7Q795.2,374.8 795.5,378.6Q795.7,382.3 796.8,385.9Q797.9,389.4 798.6,393.7Q799.3,398.0 798.6,401.9Q798.0,405.8 796.2,410.1Q794.4,414.4 792.8,419.0Q791.1,423.6 790.8,427.9Q790.6,432.1 792.1,435.8Q793.7,439.6 796.0,444.2Q798.4,448.9 799.8,454.0Q801.3,459.0 800.8,463.3Q800.2,467.6 798.0,471.3Q795.8,475.0 793.5,479.5Q791.2,483.9 790.4,488.7Q789.6,493.5 790.6,497.7Q791.7,502.0 793.5,507.3Q795.2,512.5 795.8,517.6Q796.4,522.7 794.8,527.0Q793.2,531.3 790.1,536.2Q787.0,541.1 784.4,546.7Q781.7,552.3 781.4,557.3Q781.0,562.3 783.2,566.6Q785.3,570.9 788.2,576.1L791.2,581.3"/>
<path stroke="#7f5a3b" stroke-width="4.0" d="M853.2,327.5Q857.9,328.2 860.2,329.0Q862.4,329.8 864.2,331.8Q866.0,333.7 867.2,336.5Q868.5,339.3 869.8,341.6Q871.2,344.0 873.4,345.0Q875.7,346.0 879.0,345.9Q882.4,345.9 886.0,347.7Q889.5,349.6 891.9,352.2Q894.3,354.8 895.0,357.9Q895.6,361.0 895.4,364.3Q895.1,367.7 895.7,371.6Q896.3,375.5 898.6,378.4Q900.8,381.3 903.9,385.1Q907.0,389.0 908.9,393.2Q910.8,397.3 910.3,401.5Q909.7,405.6 907.4,411.2Q905.2,416.8 903.6,422.7Q902.0,428.7 903.2,433.4Q904.5,438.0 908.3,441.6Q912.2,445.2 916.2,450.6Q920.3,456.0 921.8,462.0Q923.4,467.9 921.8,473.3Q920.2,478.7 917.6,485.3Q915.0,491.8 914.4,498.5Q913.9,505.2 916.6,510.8L919.3,516.5"/>
<path stroke="#8c6340" stroke-width="3.3" d="M798.8,294.9Q803.0,299.9 805.0,303.4Q807.1,306.9 808.4,310.3Q809.6,313.8 809.7,317.1Q809.9,320.5 809.5,323.7Q809.2,327.0 809.3,330.4Q809.4,333.8 810.5,337.5Q811.5,341.1 812.9,344.9Q814.3,348.7 814.9,352.4Q815.4,356.0 814.5,359.4Q813.6,362.8 811.8,367.2Q810.0,371.7 808.9,376.2Q807.7,380.6 808.4,384.2Q809.0,387.8 811.3,390.8Q813.6,393.8 816.0,397.5Q818.4,401.3 819.3,405.4Q820.2,409.5 819.2,413.2Q818.3,416.9 816.9,421.1Q815.5,425.3 815.4,429.5Q815.4,433.6 817.3,437.5Q819.2,441.3 821.7,446.3Q824.3,451.4 825.3,455.9Q826.3,460.5 824.7,464.2Q823.0,467.9 819.6,471.7Q816.2,475.5 813.5,480.7Q810.8,485.9 810.8,490.3Q810.7,494.6 813.1,498.2Q815.4,501.9 817.8,506.5Q820.2,511.2 820.4,515.9Q820.5,520.5 818.0,524.6Q815.6,528.6 812.7,534.0Q809.8,539.4 809.2,544.1Q808.5,548.9 811.0,552.8Q813.5,556.6 817.3,562.7Q821.1,568.7 822.9,574.4Q824.6,580.2 822.7,584.4L820.7,588.5"/>
<path stroke="#93683f" stroke-width="3.7" d="M750.4,302.9Q745.2,304.5 742.7,305.7Q740.2,306.8 738.4,309.5Q736.6,312.3 735.2,315.5Q733.7,318.6 731.2,319.5Q728.8,320.3 725.2,319.5Q721.5,318.6 718.4,319.9Q715.2,321.2 713.6,323.6Q712.0,325.9 710.8,328.5Q709.5,331.1 706.9,333.1Q704.2,335.1 701.1,337.2Q697.9,339.4 696.8,342.3Q695.6,345.2 696.6,349.6Q697.6,354.1 697.5,358.5Q697.4,362.8 694.3,364.4Q691.2,365.9 687.4,367.9Q683.6,369.8 682.4,373.2Q681.2,376.6 681.7,381.2Q682.2,385.7 680.5,389.1Q678.8,392.5 674.4,395.8Q670.0,399.2 667.1,403.4Q664.2,407.6 665.7,411.6Q667.2,415.6 670.0,421.2Q672.7,426.8 671.8,431.2Q670.9,435.7 667.1,439.0Q663.2,442.3 661.7,447.3Q660.1,452.2 662.4,457.8Q664.7,463.4 665.9,469.4Q667.2,475.4 663.5,479.2Q659.8,482.9 654.6,489.1Q649.4,495.2 648.9,500.8Q648.4,506.4 652.4,511.2Q656.3,516.0 658.2,522.7Q660.1,529.5 657.0,534.5Q653.8,539.6 650.9,546.7Q648.0,553.8 650.6,559.2Q653.2,564.6 658.1,572.7Q663.0,580.7 662.9,587.3Q662.8,593.8 657.3,599.4L651.8,605.1"/>
<path stroke="#a57246" stroke-width="4.2" d="M757.0,274.9Q747.9,282.1 743.0,284.8Q738.0,287.5 733.4,290.6Q728.8,293.7 725.0,297.4Q721.2,301.2 717.8,305.3Q714.3,309.4 710.4,312.6Q706.6,315.8 702.2,318.9Q697.8,322.1 693.9,325.4Q690.1,328.8 687.7,332.6Q685.4,336.5 684.1,341.1Q682.8,345.6 681.1,350.2Q679.4,354.7 676.3,357.4Q673.2,360.1 669.8,362.6Q666.4,365.0 664.3,368.5Q662.3,371.9 661.8,376.4Q661.2,380.9 660.4,384.9Q659.5,388.9 656.6,391.1Q653.8,393.3 649.9,396.1Q646.1,398.9 643.9,402.3Q641.7,405.7 642.4,409.0Q643.0,412.2 644.7,416.0Q646.3,419.8 646.0,423.1Q645.7,426.4 643.3,429.0Q640.9,431.6 639.4,435.2Q637.8,438.8 639.4,441.4Q640.9,444.1 644.1,447.9Q647.2,451.7 648.3,454.7Q649.4,457.8 647.1,460.3Q644.9,462.7 642.3,467.2L639.7,471.7"/>
<path stroke="#8f6541" stroke-width="3.1" d="M773.3,243.6Q780.7,243.7 784.3,244.3Q787.9,244.8 791.3,245.7Q794.7,246.7 797.9,247.8Q801.2,249.0 804.3,250.3Q807.5,251.7 810.6,252.9Q813.8,254.1 817.0,255.2Q820.1,256.2 823.3,257.6Q826.4,259.0 829.3,260.8Q832.2,262.5 834.7,264.7Q837.3,266.9 839.4,269.9Q841.6,272.9 843.6,276.0Q845.7,279.1 847.9,281.8Q850.2,284.5 852.8,286.7Q855.5,288.8 858.6,290.6Q861.7,292.3 864.9,294.7Q868.1,297.2 870.9,300.3Q873.6,303.3 875.7,306.8Q877.8,310.2 879.1,313.9Q880.5,317.6 881.5,321.6Q882.6,325.5 883.9,329.8Q885.2,334.1 887.1,338.0Q889.0,342.0 891.5,346.0Q893.9,350.0 896.4,354.6Q898.9,359.1 900.7,363.9Q902.6,368.6 903.3,373.5Q904.1,378.3 904.0,383.2Q903.8,388.1 903.4,394.2Q902.9,400.2 902.9,406.2Q902.8,412.1 903.8,417.6Q904.8,423.0 906.8,428.2Q908.8,433.4 911.2,438.7Q913.5,444.1 915.3,450.5Q917.1,456.9 917.7,463.3Q918.4,469.7 917.9,475.9Q917.4,482.2 916.3,489.0Q915.3,495.9 914.7,503.1L914.1,510.3"/>
<path stroke="#8c6340" stroke-width="3.0" d="M840.5,315.0Q845.2,320.6 847.2,323.5Q849.1,326.4 850.2,329.6Q851.3,332.7 851.7,337.2Q852.2,341.6 852.8,345.7Q853.5,349.9 855.1,352.9Q856.8,356.0 859.7,358.0Q862.5,360.0 865.8,362.0Q869.1,363.9 871.6,367.1Q874.0,370.4 875.2,373.8Q876.4,377.2 876.7,380.7Q877.1,384.3 878.0,388.1Q878.8,391.9 881.0,395.0Q883.2,398.1 886.2,401.8Q889.2,405.5 891.7,409.2Q894.1,413.0 894.6,416.7Q895.1,420.5 893.6,424.0Q892.2,427.6 890.3,432.8Q888.5,438.0 888.1,442.5Q887.8,447.0 889.7,450.3Q891.6,453.5 894.6,456.3Q897.7,459.0 899.9,463.2Q902.0,467.5 901.9,471.5Q901.8,475.5 900.2,480.2Q898.5,485.0 897.4,489.9Q896.3,494.8 897.5,498.7Q898.8,502.5 902.3,506.2Q905.9,509.9 909.4,515.3Q913.0,520.7 914.2,525.5Q915.3,530.4 913.1,534.2Q910.9,538.1 907.2,542.0Q903.4,545.9 901.0,551.4Q898.5,556.9 899.1,561.3Q899.7,565.8 902.5,569.8Q905.3,573.8 907.4,579.5Q909.5,585.3 908.6,590.0Q907.7,594.6 903.9,599.1Q900.1,603.7 896.2,609.6Q892.3,615.5 891.3,620.6L890.4,625.7"/>
<path stroke="#8c6340" stroke-width="4.1" d="M839.8,255.4Q839.2,260.1 839.9,262.2Q840.7,264.3 841.5,266.5Q842.3,268.8 841.9,271.6Q841.5,274.5 840.1,278.0Q838.7,281.6 838.0,284.8Q837.3,288.1 838.8,290.2Q840.4,292.4 843.8,293.8Q847.3,295.2 850.3,298.7Q853.3,302.1 854.0,305.2Q854.7,308.3 853.3,311.0Q851.9,313.8 850.9,317.0Q849.8,320.2 851.0,323.4Q852.1,326.6 854.7,330.5Q857.3,334.4 858.6,338.1Q859.9,341.8 858.1,344.9Q856.3,348.0 852.8,353.0Q849.2,358.0 847.4,363.0Q845.5,367.9 847.6,371.0Q849.6,374.2 854.0,376.4Q858.4,378.6 861.4,383.3Q864.4,388.0 863.8,392.0Q863.3,396.0 860.8,400.5Q858.4,405.1 857.9,410.0Q857.5,414.8 860.9,418.4Q864.3,422.0 869.0,427.7Q873.7,433.3 875.4,438.3Q877.0,443.3 873.8,447.2Q870.6,451.1 865.5,456.8Q860.4,462.6 858.5,468.7Q856.6,474.7 859.6,478.7Q862.7,482.6 867.6,486.8Q872.6,491.1 874.3,496.7Q876.1,502.3 873.3,507.3Q870.4,512.2 866.6,519.6Q862.9,526.9 863.4,532.5Q863.9,538.1 869.6,541.8Q875.4,545.5 881.9,552.9Q888.4,560.3 889.8,566.5Q891.3,572.6 886.8,577.3L882.2,581.9"/>
<path stroke="#9c6c43" stroke-width="3.9" d="M777.4,287.8Q774.9,289.5 774.7,290.4Q774.5,291.3 775.2,292.1Q775.8,292.9 775.8,294.1Q775.8,295.3 774.9,297.0Q774.0,298.7 773.9,300.3Q773.8,301.9 775.5,303.0Q777.2,304.1 779.2,306.7Q781.3,309.2 781.4,311.3Q781.6,313.4 779.9,315.1Q778.3,316.8 777.3,319.2Q776.3,321.7 777.1,324.1Q778.0,326.6 778.8,329.6Q779.6,332.7 778.3,335.3Q777.0,338.0 774.7,341.9Q772.4,345.8 772.2,349.1Q772.0,352.5 774.6,355.0Q777.1,357.6 779.3,361.9Q781.5,366.1 780.8,369.7Q780.1,373.3 778.2,377.0Q776.2,380.7 776.5,384.7Q776.7,388.8 779.0,393.7Q781.2,398.6 781.9,403.4Q782.6,408.1 779.7,411.9Q776.9,415.6 773.7,421.5Q770.5,427.5 770.9,432.3Q771.3,437.2 774.4,441.6Q777.5,446.0 778.8,451.8Q780.0,457.6 777.8,462.7Q775.6,467.8 773.8,474.1Q772.0,480.4 774.1,485.6Q776.1,490.8 779.6,498.1Q783.2,505.5 783.1,511.7Q783.1,518.0 778.9,523.2Q774.8,528.5 771.9,536.0Q768.9,543.6 770.6,549.8Q772.3,555.9 775.3,563.0Q778.4,570.0 777.6,576.9Q776.9,583.8 773.0,591.6Q769.2,599.4 768.1,607.2L767.0,615.0"/>
<path stroke="#86603d" stroke-width="3.0" d="M784.0,294.4Q782.2,297.8 781.0,299.5Q779.8,301.2 778.5,303.0Q777.1,304.8 775.9,306.8Q774.7,308.8 773.9,310.9Q773.1,313.1 772.9,316.0Q772.6,318.8 772.6,321.9Q772.6,325.1 772.2,327.9Q771.8,330.8 770.6,333.2Q769.4,335.6 767.3,337.5Q765.3,339.5 762.9,341.7Q760.6,343.9 758.6,347.0Q756.6,350.1 755.6,353.3Q754.5,356.4 754.4,359.7Q754.3,362.9 754.5,366.2Q754.8,369.5 754.5,373.3Q754.3,377.1 753.1,380.5Q751.9,384.0 750.0,387.8Q748.1,391.7 746.2,395.8Q744.3,399.9 743.3,404.1Q742.3,408.2 742.8,412.1Q743.2,416.1 744.7,420.4Q746.1,424.7 747.6,430.1Q749.0,435.5 749.3,440.4Q749.6,445.3 748.3,449.6Q746.9,453.9 744.5,457.8Q742.1,461.7 739.7,466.6Q737.3,471.4 736.1,476.7Q734.9,481.9 735.3,486.9Q735.7,491.9 737.1,497.2Q738.4,502.6 739.4,508.6Q740.5,514.6 740.0,520.2Q739.6,525.7 737.5,530.7Q735.4,535.6 732.5,542.0Q729.6,548.5 727.4,555.0Q725.3,561.6 725.1,567.7Q725.0,573.7 726.9,579.3L728.8,584.9"/>
<path stroke="#7f5a3b" stroke-width="3.4" d="M793.3,310.2Q796.2,312.6 798.0,314.3Q799.8,315.9 801.5,317.8Q803.1,319.7 803.7,321.6Q804.4,323.6 803.8,325.5Q803.3,327.4 801.8,329.3Q800.4,331.1 799.0,334.0Q797.6,336.9 797.2,339.7Q796.8,342.5 797.6,344.8Q798.4,347.1 800.0,349.3Q801.5,351.4 802.7,354.3Q803.8,357.2 803.8,360.1Q803.7,363.1 802.4,366.8Q801.1,370.6 799.5,374.7Q797.9,378.8 797.3,382.5Q796.8,386.3 798.2,389.5Q799.6,392.6 802.6,395.3Q805.6,398.0 808.8,403.0Q812.1,407.9 813.9,412.6Q815.7,417.3 815.1,421.4Q814.6,425.4 812.1,429.0Q809.7,432.6 807.0,437.0Q804.3,441.3 803.1,446.5Q801.9,451.6 803.0,456.1Q804.0,460.6 806.5,465.6Q809.0,470.7 811.0,476.6Q813.0,482.5 812.8,487.8Q812.7,493.1 809.9,497.6Q807.1,502.0 803.1,508.6Q799.0,515.2 796.0,521.9Q793.0,528.6 792.8,534.5Q792.7,540.4 795.7,545.4Q798.7,550.5 803.0,556.2Q807.3,561.9 810.4,569.6Q813.5,577.3 813.5,583.9L813.4,590.5"/>
<path stroke="#7c583a" stroke-width="3.0" d="M800.6,282.6Q795.6,285.5 793.0,286.7Q790.3,287.9 788.0,289.9Q785.8,291.9 784.1,294.9Q782.5,297.9 780.9,300.8Q779.2,303.7 776.8,305.2Q774.3,306.8 770.6,306.9Q767.0,307.0 763.2,308.7Q759.4,310.3 756.7,312.6Q754.0,314.9 752.9,317.9Q751.8,320.8 751.3,323.9Q750.9,327.1 749.6,330.4Q748.2,333.7 745.6,336.0Q742.9,338.3 740.1,341.1Q737.2,343.9 735.9,347.1Q734.6,350.3 735.1,354.6Q735.6,358.9 736.3,364.2Q737.1,369.4 735.9,373.0Q734.7,376.6 731.0,378.2Q727.3,379.9 722.9,382.3Q718.5,384.6 715.9,388.4Q713.3,392.2 713.3,396.0Q713.3,399.9 714.2,404.3Q715.0,408.8 714.1,413.0Q713.1,417.2 709.7,420.7Q706.3,424.3 702.6,428.8Q698.9,433.4 697.9,437.8Q696.8,442.2 699.0,446.3Q701.3,450.4 704.3,456.8Q707.4,463.2 707.9,468.6Q708.4,473.9 705.2,477.4Q702.1,480.9 697.7,484.7Q693.3,488.5 691.3,493.8Q689.3,499.1 690.8,503.7Q692.3,508.4 694.7,514.8Q697.2,521.3 696.9,526.7Q696.7,532.1 692.6,536.2Q688.5,540.4 683.7,547.1Q678.8,553.9 677.2,559.9Q675.7,565.9 678.9,570.7Q682.0,575.4 686.8,581.5Q691.6,587.6 693.5,594.3Q695.4,601.1 692.7,606.2L690.1,611.3"/>
<path stroke="#7f5a3b" stroke-width="3.7" d="M807.2,255.3Q813.0,255.9 815.6,257.3Q818.3,258.7 820.6,260.9Q823.0,263.2 825.5,264.5Q828.1,265.9 831.6,265.4Q835.0,265.0 838.8,265.7Q842.6,266.5 845.5,268.2Q848.4,270.0 850.0,272.8Q851.6,275.7 852.9,279.0Q854.2,282.4 856.7,284.6Q859.2,286.8 862.6,288.8Q866.1,290.8 868.5,293.7Q870.9,296.5 871.4,300.8Q871.8,305.1 871.9,310.4Q872.0,315.8 874.3,318.8Q876.7,321.8 881.4,322.8Q886.1,323.8 890.4,327.4Q894.7,330.9 896.1,335.0Q897.4,339.2 896.9,344.0Q896.5,348.8 897.6,353.7Q898.8,358.6 902.9,362.1Q907.0,365.7 911.1,370.5Q915.3,375.3 915.9,380.3Q916.5,385.2 914.0,391.4Q911.6,397.6 910.4,404.7Q909.3,411.7 912.6,416.0Q915.9,420.3 921.3,424.4L926.8,428.6"/>
<path stroke="#93683f" stroke-width="3.3" d="M716.8,281.5Q717.2,292.1 716.1,296.5Q715.0,301.0 712.1,303.7Q709.1,306.4 706.0,309.1Q703.0,311.7 701.5,315.7Q700.1,319.7 699.5,324.4Q699.0,329.1 696.7,332.3Q694.4,335.5 689.9,338.3Q685.4,341.1 681.5,344.8Q677.6,348.5 677.3,352.4Q676.9,356.2 679.0,360.4Q681.1,364.5 681.6,369.7Q682.1,374.8 679.2,377.4Q676.3,380.0 672.9,383.2Q669.6,386.5 669.7,390.3Q669.7,394.0 672.2,400.2Q674.6,406.3 674.6,410.7Q674.5,415.1 669.5,416.4Q664.6,417.6 658.6,421.5Q652.7,425.3 651.4,429.2Q650.1,433.1 653.4,436.4Q656.8,439.7 658.8,444.9Q660.9,450.0 657.8,452.5Q654.7,455.0 650.0,459.5Q645.3,464.0 645.5,467.7Q645.7,471.4 651.1,476.2Q656.5,480.9 660.1,486.8Q663.8,492.6 660.2,494.9Q656.6,497.2 649.4,499.8Q642.2,502.4 639.6,506.9L637.1,511.4"/>
<path stroke="#8f6541" stroke-width="4.2" d="M775.1,225.0Q769.6,228.2 766.6,229.4Q763.6,230.6 760.8,232.2Q758.1,233.8 756.2,237.2Q754.2,240.6 752.5,244.2Q750.7,247.8 747.9,249.0Q745.1,250.2 741.0,249.2Q737.0,248.3 733.3,249.6Q729.5,250.9 727.3,253.2Q725.1,255.6 723.6,258.4Q722.1,261.2 719.6,263.5Q717.1,265.9 713.5,267.8Q709.8,269.8 707.2,272.3Q704.7,274.9 704.5,278.3Q704.3,281.8 704.8,287.6Q705.3,293.4 703.6,296.5Q701.8,299.6 697.6,300.2Q693.4,300.8 689.8,303.2Q686.2,305.5 685.3,308.9Q684.3,312.4 684.2,317.2Q684.0,321.9 681.4,324.6Q678.8,327.3 674.0,330.3Q669.1,333.2 665.9,336.9Q662.7,340.7 663.7,344.7Q664.7,348.6 667.0,354.2Q669.4,359.9 668.7,364.4Q668.0,368.9 664.0,371.2Q659.9,373.5 656.9,377.7Q654.0,381.9 654.9,386.7Q655.8,391.4 657.6,397.8Q659.4,404.1 657.3,408.0Q655.1,412.0 649.3,415.4Q643.4,418.9 639.4,424.2Q635.4,429.6 636.8,434.2Q638.2,438.9 641.8,444.3Q645.3,449.8 645.1,455.2Q644.8,460.7 640.6,465.1Q636.3,469.6 633.8,475.4Q631.3,481.3 634.1,486.3Q637.0,491.3 641.2,499.1Q645.4,506.9 644.5,512.4Q643.6,517.9 637.6,521.8Q631.5,525.8 627.1,532.9Q622.7,540.1 624.6,545.5Q626.6,551.0 630.9,557.2Q635.2,563.5 635.0,569.8L634.7,576.0"/>
<path stroke="#8a613e" stroke-width="3.7" d="M824.6,303.8Q828.5,300.5 830.6,300.8Q832.7,301.1 833.7,302.5Q834.7,304.0 835.1,305.7Q835.5,307.5 837.1,309.2Q838.7,310.9 841.3,312.9Q844.0,314.8 845.3,317.2Q846.6,319.7 845.1,322.3Q843.5,324.9 841.4,329.7Q839.3,334.5 839.9,337.6Q840.6,340.8 844.1,342.4Q847.6,344.1 850.3,347.7Q852.9,351.2 852.2,355.0Q851.6,358.7 850.0,364.1Q848.4,369.4 850.1,373.3Q851.9,377.2 856.7,381.9Q861.6,386.6 864.5,392.1Q867.5,397.7 865.2,402.3Q862.8,406.9 858.5,413.0Q854.1,419.0 853.7,425.2Q853.2,431.4 857.3,435.9Q861.3,440.4 864.4,447.5Q867.4,454.5 865.0,460.4Q862.7,466.3 858.3,475.0L854.0,483.7"/>
<path stroke="#7f5a3b" stroke-width="3.9" d="M812.9,239.7Q819.7,244.6 822.9,247.4Q826.0,250.2 828.8,253.2Q831.7,256.2 834.6,258.9Q837.5,261.6 840.6,263.6Q843.7,265.6 847.2,266.9Q850.7,268.2 854.4,269.7Q858.1,271.3 861.6,273.5Q865.1,275.7 868.0,278.3Q870.8,280.9 872.7,283.9Q874.6,286.9 875.6,290.1Q876.7,293.2 877.5,296.9Q878.3,300.6 879.6,304.0Q880.8,307.5 882.9,310.1Q884.9,312.7 887.7,315.0Q890.5,317.3 893.4,320.4Q896.2,323.5 898.2,326.8Q900.1,330.1 900.6,333.5L901.0,336.8"/>
<path stroke="#8f6541" stroke-width="3.2" d="M794.1,242.2Q783.1,244.5 777.7,245.5Q772.3,246.6 767.1,247.8Q762.0,249.1 757.2,251.0Q752.5,252.8 748.2,255.6Q743.9,258.4 739.9,261.6Q735.8,264.9 731.6,266.9Q727.4,268.8 722.9,269.4Q718.4,270.1 713.9,270.7Q709.4,271.3 705.4,273.1Q701.5,275.0 698.3,277.7Q695.0,280.3 692.1,283.6Q689.2,286.8 685.9,288.9Q682.6,290.9 678.6,292.1Q674.6,293.2 670.5,295.1Q666.5,297.0 663.5,299.6Q660.6,302.2 659.2,305.5Q657.9,308.8 657.4,313.1Q656.9,317.4 655.7,321.2Q654.5,325.0 651.8,327.0Q649.1,329.0 645.8,330.9Q642.4,332.7 640.2,335.9Q637.9,339.0 637.8,342.3Q637.6,345.7 638.5,350.5Q639.3,355.2 639.1,359.0Q638.9,362.8 636.4,365.1Q633.9,367.5 630.2,370.9Q626.5,374.2 624.2,378.5L621.9,382.7"/>
<path stroke="#8f6541" stroke-width="4.3" d="M760.6,275.0Q758.3,277.0 757.7,278.4Q757.1,279.7 757.3,281.8Q757.5,283.9 757.8,286.5Q758.1,289.0 757.4,290.7Q756.7,292.4 754.9,293.3Q753.1,294.2 751.0,295.3Q748.9,296.4 747.7,298.5Q746.5,300.6 746.2,302.8Q746.0,305.1 745.8,307.8Q745.5,310.6 744.1,312.8Q742.7,315.0 740.4,317.9Q738.1,320.7 736.3,323.7Q734.5,326.7 734.5,329.7Q734.6,332.7 736.1,335.8Q737.6,339.0 738.6,343.3Q739.7,347.7 738.9,351.0Q738.1,354.4 735.7,357.2Q733.4,359.9 731.6,363.6Q729.7,367.3 729.7,371.1Q729.8,374.9 730.9,379.9Q732.0,384.8 732.0,389.4Q732.0,393.9 729.7,397.5Q727.3,401.0 723.8,405.8Q720.3,410.5 718.3,415.6Q716.2,420.6 717.1,425.2Q717.9,429.7 720.2,434.5Q722.5,439.2 723.5,445.1Q724.4,450.9 722.7,455.7Q721.0,460.5 718.3,465.9Q715.5,471.3 714.5,477.1Q713.5,482.8 715.3,488.4Q717.2,493.9 719.6,501.1Q722.1,508.3 722.0,514.6Q722.0,520.9 718.7,525.9Q715.3,530.9 711.2,537.6Q707.0,544.3 705.5,551.2Q704.0,558.1 705.9,564.1Q707.8,570.2 710.4,577.3L713.1,584.3"/>
<path stroke="#93683f" stroke-width="3.7" d="M769.8,272.6Q768.7,279.6 768.4,283.5Q768.2,287.5 767.2,290.8Q766.3,294.1 764.1,296.4Q761.9,298.7 759.1,300.8Q756.4,302.8 754.3,306.1Q752.2,309.4 751.6,312.7Q750.9,316.1 751.0,319.7Q751.0,323.4 750.3,327.0Q749.5,330.6 747.2,333.9Q744.9,337.2 742.2,341.2Q739.5,345.2 738.3,349.1Q737.2,352.9 738.5,356.4Q739.9,359.9 742.4,364.5Q744.9,369.0 746.0,373.6Q747.1,378.3 745.6,381.8Q744.0,385.3 741.1,388.6Q738.1,391.9 736.6,396.6Q735.0,401.2 736.3,405.1Q737.6,409.0 740.2,414.1Q742.9,419.3 743.8,424.0Q744.8,428.8 742.5,432.5Q740.1,436.3 736.2,441.8L732.3,447.4"/>
<path stroke="#93683f" stroke-width="3.9" d="M779.6,241.0Q784.5,243.2 787.1,245.0Q789.6,246.8 789.8,248.6Q790.0,250.4 787.8,252.0Q785.7,253.6 784.2,256.3Q782.7,259.0 783.6,260.8Q784.5,262.6 785.8,264.3Q787.2,266.1 786.4,269.0Q785.7,271.8 783.7,275.4Q781.8,279.0 782.4,281.4Q783.0,283.8 786.9,285.2Q790.9,286.6 794.5,290.2Q798.1,293.9 797.6,296.7Q797.2,299.5 794.4,301.8Q791.7,304.1 791.2,307.5Q790.7,311.0 793.2,314.5Q795.7,318.0 796.8,321.7Q797.9,325.4 794.7,328.6Q791.4,331.8 787.5,337.1Q783.5,342.5 784.2,346.0Q784.9,349.6 789.8,351.9Q794.8,354.2 797.9,359.2Q800.9,364.2 798.9,367.7Q796.9,371.2 794.1,375.7Q791.3,380.3 793.1,384.1Q794.8,387.9 799.3,393.9Q803.9,400.0 804.3,404.8Q804.7,409.6 799.2,413.0Q793.7,416.3 788.7,422.9Q783.8,429.6 785.4,434.0Q786.9,438.5 792.1,442.7Q797.3,446.9 798.3,452.6Q799.3,458.2 794.9,463.5Q790.6,468.7 788.2,475.0Q785.7,481.3 790.2,485.6Q794.7,489.9 800.8,498.0Q806.9,506.1 806.2,511.8Q805.5,517.5 798.4,521.5Q791.2,525.6 786.9,533.1Q782.6,540.5 785.9,545.6Q789.3,550.7 794.0,557.9Q798.6,565.1 796.4,570.8Q794.1,576.5 787.2,584.2Q780.2,592.0 778.7,599.1L777.1,606.2"/>
<path stroke="#7c583a" stroke-width="3.5" d="M815.2,285.4Q818.7,293.9 819.3,299.8Q819.8,305.6 820.2,311.2Q820.6,316.7 822.6,320.4Q824.6,324.1 828.6,325.7Q832.7,327.3 837.4,329.4Q842.0,331.5 844.9,335.0Q847.8,338.5 847.8,342.0Q847.8,345.6 846.5,349.7Q845.1,353.8 845.4,357.4Q845.7,361.1 849.1,363.2Q852.5,365.3 857.2,369.2Q861.8,373.1 863.8,376.7Q865.8,380.3 862.7,382.7Q859.6,385.0 853.5,387.9Q847.3,390.9 843.1,394.6Q838.8,398.2 839.9,400.1L840.9,402.0"/>
<path stroke="#7c583a" stroke-width="4.0" d="M825.1,244.1Q828.1,247.3 828.4,249.4Q828.8,251.4 828.8,253.5Q828.8,255.6 829.5,257.7Q830.2,259.7 831.9,261.7Q833.5,263.7 835.2,265.9Q836.8,268.1 837.3,270.5Q837.7,272.9 836.7,276.3Q835.7,279.7 834.3,283.9Q832.9,288.1 833.0,291.2Q833.1,294.4 835.6,296.0Q838.1,297.6 841.9,298.7Q845.7,299.8 848.8,303.0Q851.8,306.3 852.5,309.5Q853.2,312.7 852.2,315.8Q851.1,318.8 850.4,322.7Q849.7,326.6 851.2,329.7Q852.6,332.8 855.9,336.7Q859.1,340.7 861.9,344.9Q864.7,349.1 864.7,352.9Q864.6,356.7 861.6,360.0Q858.5,363.2 854.9,369.2Q851.3,375.2 850.2,380.1Q849.1,385.1 851.6,388.5Q854.2,391.8 858.4,394.8Q862.6,397.7 865.2,402.9Q867.8,408.0 866.9,412.4Q866.0,416.8 863.1,422.3Q860.3,427.7 858.8,433.4Q857.4,439.1 859.8,443.3Q862.1,447.5 867.2,452.9Q872.4,458.2 876.5,464.8Q880.5,471.3 880.3,476.6Q880.0,481.9 875.5,486.1Q871.0,490.2 865.9,496.7Q860.8,503.2 859.3,509.6Q857.7,516.0 860.7,520.8Q863.7,525.7 868.2,531.6Q872.6,537.4 874.2,544.1Q875.8,550.8 872.6,556.0Q869.5,561.2 864.3,569.2L859.0,577.1"/>
<path stroke="#8a613e" stroke-width="3.8" d="M769.9,299.0Q769.9,306.6 770.0,310.5Q770.2,314.4 769.7,317.8Q769.2,321.3 767.6,323.9Q765.9,326.6 763.3,328.7Q760.7,330.8 758.1,333.8Q755.5,336.7 753.9,340.1Q752.3,343.6 752.0,346.9Q751.7,350.3 752.0,353.6Q752.3,357.0 752.0,360.6Q751.7,364.3 750.2,367.8Q748.7,371.3 746.3,375.2Q744.0,379.1 742.2,383.1Q740.5,387.0 740.5,390.7Q740.6,394.3 742.5,397.6Q744.4,400.9 746.8,406.0Q749.2,411.0 750.3,415.6Q751.4,420.2 750.2,423.8Q749.0,427.4 746.2,430.3Q743.4,433.2 740.8,437.3Q738.3,441.3 737.7,445.6Q737.1,449.8 738.5,453.6Q740.0,457.4 742.0,462.5Q744.0,467.6 744.3,472.1Q744.7,476.6 742.5,480.2Q740.4,483.8 736.7,488.9Q733.1,494.1 730.4,499.5Q727.8,504.9 728.1,509.4Q728.4,513.9 731.8,517.4Q735.1,520.8 739.2,525.5Q743.4,530.2 745.6,535.6Q747.9,541.0 746.9,545.4Q745.9,549.8 742.8,553.7Q739.8,557.6 737.5,563.6Q735.2,569.5 736.0,574.3Q736.7,579.1 740.4,583.5L744.1,587.9"/>
<path stroke="#ab784a" stroke-width="3.3" d="M812.2,235.7Q814.0,235.5 814.6,236.3Q815.2,237.0 815.6,238.3Q815.9,239.7 816.5,240.7Q817.1,241.8 818.7,242.3Q820.2,242.8 822.5,244.0Q824.7,245.2 826.8,247.1Q828.8,248.9 829.6,251.1Q830.3,253.2 829.7,255.3Q829.0,257.5 827.8,260.1Q826.6,262.6 826.3,265.8Q826.0,269.0 827.1,271.5Q828.3,274.0 830.1,276.8Q831.9,279.6 832.9,283.0Q833.9,286.4 833.2,289.8Q832.6,293.3 831.0,298.0Q829.3,302.7 828.5,307.3Q827.6,311.8 828.9,315.6Q830.2,319.4 833.3,322.6Q836.4,325.8 839.6,331.1Q842.7,336.5 843.8,341.6Q844.9,346.7 843.7,351.3Q842.4,356.0 840.2,361.0Q838.0,366.0 837.3,371.9Q836.5,377.8 838.1,383.1Q839.7,388.3 842.4,394.8Q845.2,401.3 846.6,407.8Q848.1,414.4 846.6,420.3Q845.2,426.2 841.8,432.9Q838.3,439.7 835.5,447.6Q832.7,455.5 832.9,462.5Q833.1,469.5 836.3,475.7Q839.5,481.8 843.3,489.5L847.1,497.1"/>
<path stroke="#7c583a" stroke-width="4.2" d="M785.9,301.5Q777.2,303.6 773.1,305.2Q768.9,306.7 765.0,308.5Q761.1,310.3 757.3,311.8Q753.5,313.3 749.7,314.2Q745.8,315.1 741.8,315.7Q737.8,316.2 733.8,317.6Q729.8,319.0 726.2,320.8Q722.5,322.6 719.4,325.1Q716.4,327.5 714.1,330.4Q711.8,333.3 709.9,336.5Q708.0,339.6 706.1,343.1Q704.2,346.7 701.8,349.5Q699.5,352.4 696.7,355.0Q693.8,357.6 691.1,360.9Q688.3,364.2 686.3,367.8Q684.2,371.4 683.4,375.3Q682.6,379.1 682.7,383.7Q682.9,388.3 683.3,393.3Q683.7,398.4 683.3,402.9Q683.0,407.5 681.4,411.4Q679.8,415.3 677.2,418.9Q674.6,422.5 672.1,427.5Q669.5,432.4 668.1,437.8Q666.7,443.2 667.0,448.3Q667.3,453.5 669.0,458.3Q670.7,463.1 672.6,468.8L674.6,474.5"/>
<path stroke="#8f6541" stroke-width="3.3" d="M791.0,242.3Q795.0,243.3 797.0,243.8Q799.0,244.4 801.1,245.2Q803.1,245.9 804.9,247.1Q806.7,248.3 808.2,249.8Q809.7,251.3 811.0,253.5Q812.2,255.7 813.5,257.9Q814.8,260.1 816.5,261.8Q818.2,263.5 820.3,264.8Q822.4,266.1 824.6,267.6Q826.8,269.0 828.6,271.2Q830.5,273.3 831.9,275.8Q833.4,278.3 834.5,281.4Q835.7,284.4 837.0,287.3Q838.4,290.3 840.4,292.8Q842.3,295.4 844.8,298.3Q847.2,301.2 849.5,304.4Q851.8,307.7 853.4,311.2Q855.0,314.7 855.7,318.4Q856.3,322.1 856.6,326.1Q856.8,330.2 857.3,334.8Q857.8,339.3 859.3,343.5Q860.7,347.6 862.8,351.3Q864.9,355.1 867.0,359.5Q869.2,363.8 870.5,368.5Q871.9,373.2 872.3,378.1Q872.8,383.1 872.9,388.8Q873.0,394.5 873.7,399.9Q874.4,405.4 876.3,410.3Q878.2,415.3 880.9,420.2Q883.6,425.2 886.2,431.1Q888.8,437.1 890.2,443.1Q891.7,449.0 891.8,454.9Q891.9,460.8 891.4,467.0Q890.9,473.1 891.0,480.0Q891.1,486.9 892.4,493.3Q893.7,499.7 896.0,506.1Q898.2,512.5 900.3,519.6Q902.3,526.8 903.2,533.9L904.0,541.0"/>
<path stroke="#93683f" stroke-width="3.8" d="M792.1,237.4Q798.1,238.1 801.0,238.9Q803.8,239.8 806.5,241.0Q809.2,242.2 811.8,243.5Q814.4,244.7 817.2,245.9Q819.9,247.0 822.6,248.3Q825.4,249.6 827.8,251.3Q830.1,253.0 832.1,255.5Q834.1,258.1 836.1,260.7Q838.0,263.3 840.4,265.1Q842.8,266.9 845.7,268.0Q848.6,269.2 851.5,271.1Q854.3,272.9 856.5,275.4Q858.7,277.9 860.3,280.7Q862.0,283.5 863.8,286.6Q865.6,289.6 868.1,292.2Q870.6,294.8 873.3,297.8Q876.0,300.7 877.9,304.0Q879.9,307.2 880.8,310.8Q881.6,314.3 882.1,318.8Q882.7,323.2 884.0,327.2Q885.3,331.1 887.7,334.3Q890.1,337.5 892.7,341.0Q895.2,344.5 896.8,348.7Q898.3,352.9 898.9,357.5Q899.4,362.1 900.2,367.0Q900.9,371.8 902.9,376.0Q904.9,380.2 907.7,384.8Q910.5,389.4 912.6,394.4Q914.6,399.5 915.0,404.5Q915.4,409.5 914.7,414.8Q914.1,420.1 914.2,426.0Q914.3,431.8 916.0,437.0Q917.6,442.1 919.8,447.6Q922.0,453.0 923.0,458.9Q924.1,464.8 923.5,470.8Q922.9,476.9 922.3,483.7Q921.6,490.5 922.5,496.6Q923.4,502.8 925.9,508.6Q928.4,514.3 930.7,521.4Q933.0,528.5 933.3,535.2L933.6,542.0"/>
<path stroke="#ab784a" stroke-width="3.6" d="M753.4,253.5Q749.4,258.2 747.1,260.5Q744.8,262.8 743.1,265.4Q741.5,268.0 740.7,271.8Q740.0,275.5 739.2,279.3Q738.4,283.0 736.2,285.2Q734.0,287.4 730.6,288.5Q727.2,289.6 724.4,292.4Q721.6,295.1 720.4,298.2Q719.2,301.3 718.5,304.6Q717.9,307.9 716.1,310.9Q714.2,313.9 711.3,317.1Q708.3,320.3 706.3,323.7Q704.4,327.1 704.8,330.5Q705.2,334.0 706.5,339.0Q707.9,344.0 707.3,348.0Q706.7,352.0 703.8,354.4Q700.8,356.8 697.9,360.1Q695.0,363.4 694.6,367.2Q694.1,371.0 695.0,375.9Q695.9,380.7 694.9,384.7Q694.0,388.7 690.4,392.2Q686.8,395.6 683.5,400.3Q680.3,405.0 680.5,409.2Q680.8,413.3 683.6,417.6Q686.4,421.8 687.8,427.2Q689.1,432.6 686.9,436.4Q684.7,440.2 681.7,444.7Q678.8,449.2 678.9,453.8Q678.9,458.4 681.8,464.0Q684.6,469.6 685.7,475.1Q686.9,480.6 683.8,484.4Q680.7,488.2 676.2,494.0Q671.7,499.7 670.8,505.2Q669.9,510.7 673.2,514.8Q676.6,519.0 679.6,524.9Q682.5,530.9 681.3,535.9L680.0,540.9"/>
<path stroke="#8a613e" stroke-width="3.8" d="M757.6,260.7Q752.0,260.6 749.3,261.2Q746.6,261.7 744.1,263.1Q741.6,264.6 739.4,266.7Q737.2,268.9 735.0,270.9Q732.9,272.8 730.5,273.9Q728.1,275.0 725.1,275.0Q722.1,275.0 718.7,275.1Q715.2,275.1 711.9,276.6Q708.6,278.0 706.0,280.1Q703.4,282.3 701.8,285.1Q700.1,287.8 698.8,290.9Q697.6,293.9 695.9,297.4Q694.3,300.8 691.7,303.3Q689.1,305.7 685.7,308.7Q682.4,311.6 679.4,315.0Q676.3,318.3 674.5,322.1Q672.7,325.9 672.4,330.1Q672.1,334.2 672.6,340.0Q673.1,345.8 672.9,351.4Q672.7,357.0 670.8,361.3Q668.8,365.6 665.2,368.9Q661.5,372.2 657.3,376.1Q653.1,380.0 650.0,385.3Q647.0,390.6 645.9,396.1Q644.9,401.5 645.4,407.2Q645.9,412.8 646.3,419.9Q646.6,426.9 645.3,433.0Q643.9,439.1 640.4,444.2Q637.0,449.2 632.6,456.2L628.1,463.1"/>
<path stroke="#8c6340" stroke-width="3.8" d="M770.3,311.2Q767.0,313.6 767.3,314.0Q767.6,314.4 768.4,314.9Q769.3,315.3 768.5,316.6Q767.8,318.0 766.5,319.7Q765.3,321.4 766.4,322.4Q767.5,323.4 770.9,325.1Q774.3,326.8 776.2,329.3Q778.1,331.8 776.2,333.3Q774.4,334.7 771.8,336.5Q769.3,338.3 769.7,340.7Q770.0,343.0 771.8,346.1Q773.6,349.2 772.6,351.7Q771.5,354.2 767.7,358.2Q763.9,362.2 762.5,365.9Q761.1,369.6 764.6,371.9Q768.2,374.2 772.1,378.7Q776.0,383.2 775.3,386.8Q774.5,390.5 771.2,394.0Q767.9,397.5 768.0,401.7Q768.1,406.0 771.7,411.4Q775.4,416.9 776.2,422.0Q777.0,427.1 772.0,430.7Q767.1,434.3 762.3,440.9Q757.5,447.6 759.1,452.3Q760.7,457.1 765.7,462.0Q770.7,467.0 771.3,473.0Q771.8,479.1 767.5,484.7Q763.2,490.4 761.7,496.9Q760.2,503.5 765.1,509.6Q770.0,515.8 774.4,524.1Q778.7,532.4 775.3,537.9Q771.8,543.5 764.6,550.3Q757.4,557.1 756.1,564.6Q754.7,572.1 759.8,578.3Q764.9,584.5 767.1,593.0L769.3,601.6"/>
<path stroke="#8a613e" stroke-width="3.3" d="M753.6,309.1Q750.5,313.3 750.0,315.4Q749.4,317.5 750.1,319.5Q750.8,321.5 752.0,323.9Q753.1,326.3 753.4,329.1Q753.7,331.8 752.8,334.1Q751.9,336.3 750.8,338.6Q749.8,340.9 749.8,343.8Q749.8,346.7 750.8,350.2Q751.9,353.7 752.4,357.0Q753.0,360.3 751.7,363.0Q750.4,365.6 747.7,368.5Q745.0,371.4 743.0,375.3Q740.9,379.2 741.1,382.6Q741.3,385.9 743.1,388.9Q745.0,391.9 746.3,395.8Q747.6,399.7 746.8,403.3Q746.1,406.9 744.2,411.1Q742.4,415.4 741.8,419.6Q741.3,423.8 743.3,427.4Q745.3,431.0 748.2,436.4Q751.0,441.7 751.9,446.4Q752.8,451.1 750.5,454.8Q748.3,458.5 745.0,463.1Q741.7,467.7 740.5,472.9Q739.2,478.1 741.1,482.3Q742.9,486.6 745.5,491.6Q748.0,496.6 748.2,501.7Q748.4,506.9 745.8,512.1Q743.1,517.4 740.7,523.7Q738.3,530.1 739.2,535.2Q740.1,540.4 744.3,545.0Q748.5,549.6 752.3,556.3Q756.0,563.1 756.0,568.8Q756.0,574.5 752.7,579.4L749.4,584.2"/>
<path stroke="#86603d" stroke-width="4.0" d="M763.0,244.5Q763.8,246.2 764.7,247.2Q765.5,248.2 766.1,249.4Q766.8,250.6 766.7,251.8Q766.5,252.9 765.5,254.1Q764.6,255.3 763.5,257.5Q762.5,259.7 762.3,261.5Q762.1,263.4 763.0,264.9Q763.9,266.4 765.1,268.0Q766.2,269.5 766.7,271.6Q767.1,273.8 766.7,276.3Q766.3,278.8 766.0,281.5Q765.7,284.2 766.4,286.5Q767.1,288.9 768.9,291.7Q770.7,294.5 772.3,297.8Q773.9,301.1 774.1,304.1Q774.3,307.2 772.9,310.0Q771.6,312.7 770.1,316.3Q768.7,319.9 768.5,323.6Q768.3,327.3 769.5,330.5Q770.7,333.8 772.0,337.6Q773.2,341.5 773.2,345.4Q773.2,349.3 771.8,353.8Q770.5,358.3 769.4,363.2Q768.3,368.0 769.0,372.2Q769.8,376.4 772.2,380.3Q774.7,384.1 777.1,389.5Q779.5,394.9 780.0,399.9Q780.5,404.9 779.0,409.4Q777.5,414.0 775.9,419.2Q774.3,424.5 774.4,429.9Q774.6,435.3 776.4,440.6Q778.3,445.9 780.0,452.0Q781.7,458.1 781.2,463.8Q780.8,469.4 778.5,475.3Q776.2,481.3 774.2,488.3Q772.2,495.3 772.6,501.5Q773.1,507.7 775.9,513.1Q778.8,518.5 781.6,525.5Q784.4,532.5 784.9,539.3Q785.4,546.2 783.7,552.4Q781.9,558.7 780.2,566.2Q778.5,573.8 779.2,580.8Q779.8,587.9 782.7,595.2Q785.5,602.5 787.9,610.7L790.3,618.9"/>
<path stroke="#93683f" stroke-width="4.1" d="M811.4,266.2Q816.6,271.4 818.3,274.6Q819.9,277.7 821.0,282.0Q822.0,286.3 823.4,289.8Q824.8,293.4 827.2,295.6Q829.5,297.7 832.7,299.1Q835.8,300.5 838.7,302.9Q841.5,305.4 842.8,308.6Q844.1,311.9 843.5,316.2Q842.9,320.5 841.6,325.4Q840.2,330.3 840.0,334.2Q839.8,338.2 842.1,341.0Q844.3,343.7 848.6,346.6Q852.9,349.5 857.2,355.1Q861.5,360.8 863.3,366.1Q865.0,371.4 863.0,375.4Q860.9,379.5 856.1,382.3Q851.4,385.1 846.6,390.0Q841.9,395.0 839.8,400.0L837.7,405.0"/>
<path stroke="#8c6340" stroke-width="4.1" d="M788.5,230.7Q787.2,234.0 786.1,235.5Q785.1,236.9 784.6,238.9Q784.1,240.9 784.3,243.5Q784.5,246.0 784.3,248.3Q784.0,250.6 782.3,252.0Q780.6,253.3 778.2,255.0Q775.7,256.7 774.1,259.1Q772.5,261.5 772.6,263.9Q772.7,266.3 773.1,268.7Q773.6,271.2 773.0,273.9Q772.3,276.5 770.7,279.5Q769.2,282.4 768.5,285.3Q767.9,288.2 769.1,291.3Q770.3,294.3 771.8,298.4Q773.3,302.6 772.9,305.8Q772.5,309.0 770.0,311.3Q767.5,313.7 765.3,317.2Q763.2,320.7 763.1,324.2Q763.1,327.6 764.1,331.3Q765.2,335.0 764.9,338.8Q764.5,342.6 762.2,346.6Q760.0,350.7 758.1,355.1Q756.3,359.6 757.2,363.4Q758.2,367.2 761.0,371.5Q763.7,375.7 765.1,380.7Q766.5,385.7 764.9,389.6Q763.2,393.5 760.8,397.7Q758.3,401.9 758.2,406.6Q758.0,411.3 760.0,416.4Q761.9,421.4 762.8,426.7Q763.7,432.0 761.4,436.2Q759.2,440.4 755.8,446.5Q752.5,452.7 751.9,458.1Q751.4,463.5 754.3,467.9Q757.3,472.3 760.1,478.2Q763.0,484.2 762.5,489.7Q762.1,495.1 759.5,500.5Q756.9,506.0 756.2,512.1Q755.6,518.1 758.4,523.8Q761.1,529.4 764.1,536.4Q767.0,543.3 766.1,549.1Q765.3,554.9 761.3,560.8Q757.3,566.7 754.9,574.1Q752.5,581.4 754.5,587.2Q756.5,593.0 760.3,599.2Q764.0,605.4 764.8,612.3L765.6,619.1"/>
<path stroke="#8f6541" stroke-width="4.0" d="M737.4,252.7Q734.7,253.9 734.3,255.2Q733.9,256.5 734.2,258.3Q734.4,260.1 734.2,261.7Q734.1,263.4 732.6,264.9Q731.1,266.4 728.7,268.9Q726.3,271.3 724.5,273.8Q722.8,276.3 723.2,278.4Q723.6,280.4 726.0,282.1Q728.3,283.8 730.9,286.7Q733.4,289.6 734.2,292.6Q735.0,295.6 733.6,297.8Q732.3,300.1 730.4,302.4Q728.6,304.7 728.3,307.8Q727.9,310.8 729.6,314.5Q731.4,318.1 733.4,322.2Q735.5,326.3 735.4,329.8Q735.4,333.2 732.4,335.6Q729.4,338.1 725.2,342.4Q721.1,346.8 718.8,351.3Q716.6,355.9 717.8,359.4Q719.1,362.9 722.5,365.9Q725.9,368.8 728.3,373.6Q730.8,378.4 730.1,382.6Q729.4,386.7 726.6,391.2Q723.8,395.6 721.9,400.9Q720.1,406.1 721.7,410.3Q723.4,414.5 727.7,419.9Q732.0,425.3 735.5,431.6Q739.0,437.8 738.4,442.8Q737.8,447.8 733.3,451.5Q728.9,455.2 724.0,461.5Q719.1,467.8 717.7,473.9Q716.4,480.0 719.2,484.7Q722.1,489.4 726.1,495.1Q730.2,500.8 731.2,507.1Q732.2,513.4 729.0,518.8Q725.8,524.1 721.3,532.0Q716.8,539.9 715.6,546.8Q714.4,553.7 718.4,558.8Q722.5,563.9 728.9,571.0Q735.4,578.2 739.2,586.2Q743.1,594.3 741.2,600.5L739.3,606.8"/>
<path stroke="#7c583a" stroke-width="3.0" d="M725.8,240.2Q721.2,242.1 719.7,243.7Q718.1,245.3 717.5,247.5Q716.9,249.6 716.7,252.2Q716.5,254.8 716.0,257.8Q715.4,260.7 713.9,262.6Q712.4,264.5 710.2,265.8Q707.9,267.0 705.8,268.9Q703.7,270.7 702.6,273.3Q701.6,275.9 701.6,279.9Q701.7,283.8 702.0,287.9Q702.3,292.0 701.4,295.3Q700.5,298.5 697.7,300.4Q694.9,302.3 690.8,304.2Q686.6,306.1 682.8,309.8Q678.9,313.4 677.1,317.2Q675.2,321.0 675.6,324.9Q676.1,328.7 677.7,332.5Q679.3,336.3 680.0,341.6Q680.7,346.8 679.2,350.9Q677.7,355.0 674.4,358.8Q671.1,362.7 667.9,367.7Q664.8,372.7 663.8,377.6Q662.9,382.5 664.7,387.1Q666.6,391.7 669.7,398.7Q672.8,405.8 674.5,412.5Q676.2,419.1 674.6,424.2Q673.0,429.3 668.4,433.0Q663.7,436.8 658.5,442.4Q653.3,448.0 650.4,454.5Q647.5,461.1 648.3,466.9Q649.0,472.8 652.0,478.5L655.0,484.2"/>
<path stroke="#8a613e" stroke-width="3.0" d="M758.4,270.0Q758.5,272.0 758.2,273.4Q757.8,274.9 757.5,276.3Q757.2,277.7 757.5,278.8Q757.7,279.8 758.7,280.6Q759.8,281.3 761.4,282.0Q763.0,282.6 764.5,284.2Q766.1,285.7 767.0,287.7Q767.9,289.6 767.9,291.6Q768.0,293.6 767.6,295.6Q767.1,297.7 767.0,300.1Q766.8,302.5 767.4,304.9Q768.0,307.4 769.3,310.4Q770.6,313.3 772.0,316.5Q773.3,319.7 773.8,322.9Q774.3,326.0 773.5,329.0Q772.7,332.1 771.1,335.4Q769.4,338.8 767.8,343.2Q766.3,347.5 765.8,351.6Q765.4,355.7 766.5,359.3Q767.5,362.9 769.4,366.4Q771.4,369.9 773.0,374.4Q774.7,378.8 775.1,383.5Q775.6,388.1 774.6,392.5Q773.7,396.8 772.3,402.2Q771.0,407.5 770.4,412.8Q769.8,418.2 770.8,423.1Q771.8,428.0 774.0,433.4Q776.3,438.8 778.6,445.2Q780.9,451.6 781.7,457.6Q782.5,463.7 781.3,469.3Q780.1,474.8 777.4,480.1Q774.8,485.3 772.3,492.4Q769.8,499.6 769.0,506.4Q768.1,513.2 769.3,519.5Q770.5,525.8 772.7,532.1Q774.9,538.4 776.5,546.0Q778.1,553.7 777.8,560.8Q777.4,568.0 775.2,575.0L773.0,582.0"/>
<path stroke="#8f6541" stroke-width="3.5" d="M791.6,302.5Q785.1,305.1 781.8,306.7Q778.6,308.2 775.9,310.8Q773.3,313.4 771.4,316.3Q769.5,319.2 767.7,322.3Q765.9,325.5 763.5,328.1Q761.1,330.8 757.9,333.5Q754.7,336.2 751.5,339.1Q748.3,341.9 746.2,345.1Q744.1,348.3 743.6,351.8Q743.2,355.3 743.7,359.6Q744.2,363.9 744.2,368.6Q744.2,373.4 742.5,376.7Q740.8,379.9 737.8,382.2Q734.7,384.4 731.8,387.2Q728.9,390.1 727.5,393.8Q726.2,397.4 726.4,401.9Q726.7,406.3 727.1,411.2Q727.5,416.1 726.2,419.8Q724.8,423.5 721.3,425.9Q717.8,428.3 713.6,432.6Q709.3,437.0 706.7,441.3Q704.1,445.7 704.5,449.8Q704.9,453.9 707.3,457.6Q709.7,461.4 711.6,466.9Q713.5,472.4 712.9,476.8Q712.3,481.1 709.4,484.5Q706.5,487.8 703.6,492.8Q700.7,497.8 700.4,502.5Q700.1,507.1 702.7,511.6Q705.2,516.1 708.5,522.3Q711.7,528.5 712.6,533.7Q713.4,538.9 710.5,542.7Q707.7,546.6 702.9,551.1Q698.1,555.6 694.9,561.8Q691.6,568.0 692.3,573.0L692.9,578.0"/>
<path stroke="#7f5a3b" stroke-width="3.4" d="M717.3,273.8Q717.7,278.7 717.6,281.6Q717.5,284.5 716.6,287.2Q715.7,289.8 714.5,292.3Q713.2,294.8 712.4,297.6Q711.6,300.5 711.7,303.9Q711.8,307.3 712.3,311.1Q712.8,314.9 712.4,318.3Q712.1,321.6 710.2,324.1Q708.3,326.7 705.5,329.3Q702.6,331.9 700.3,335.5Q698.0,339.1 697.5,342.6Q696.9,346.1 697.7,349.5Q698.5,352.8 699.1,356.7Q699.8,360.7 698.8,364.3Q697.9,368.0 695.7,371.7Q693.4,375.5 691.4,379.7Q689.5,383.8 689.5,387.8Q689.5,391.7 691.4,395.9Q693.3,400.2 695.2,405.7Q697.0,411.2 696.7,415.7Q696.4,420.1 693.5,423.4Q690.7,426.6 687.0,430.6Q683.4,434.6 681.6,439.4Q679.8,444.2 680.6,448.6Q681.5,452.9 683.4,458.1Q685.2,463.3 685.4,468.5Q685.6,473.7 682.9,477.7Q680.3,481.6 676.4,487.3L672.5,493.0"/>
<path stroke="#7f5a3b" stroke-width="4.3" d="M770.9,295.3Q775.4,298.4 777.9,299.9Q780.4,301.4 783.0,302.9Q785.5,304.5 787.9,306.3Q790.2,308.2 791.8,310.4Q793.5,312.7 794.5,315.4Q795.5,318.1 796.4,321.7Q797.2,325.3 798.6,328.2Q799.9,331.1 802.1,333.1Q804.3,335.0 807.0,336.6Q809.6,338.1 812.1,340.2Q814.5,342.4 816.1,345.3Q817.7,348.1 818.5,351.6Q819.4,355.0 820.3,358.6Q821.2,362.2 823.0,365.1Q824.8,368.0 827.6,370.6Q830.4,373.2 833.4,376.6Q836.5,380.0 838.6,383.6Q840.6,387.2 841.1,390.9Q841.5,394.6 840.7,398.3Q840.0,402.0 839.3,406.9Q838.7,411.8 839.4,416.1Q840.1,420.3 842.2,423.7Q844.4,427.1 846.8,430.9Q849.3,434.7 850.7,439.2Q852.1,443.6 851.8,448.0Q851.5,452.3 850.3,457.9Q849.1,463.6 848.7,468.9Q848.3,474.1 849.9,478.5Q851.4,482.9 854.6,486.7Q857.9,490.5 861.1,496.2Q864.4,502.0 865.8,507.4Q867.2,512.9 866.2,517.8Q865.3,522.8 863.1,527.7Q861.0,532.6 859.7,538.8Q858.4,545.1 859.2,550.5Q860.0,555.9 862.4,561.4Q864.8,566.8 866.9,573.3Q869.0,579.8 868.9,585.8Q868.9,591.7 866.4,597.1L863.9,602.5"/>
<path stroke="#9c6c43" stroke-width="3.4" d="M758.1,239.1Q751.3,241.4 747.9,242.6Q744.5,243.8 741.1,245.1Q737.8,246.5 734.7,248.2Q731.7,249.9 729.0,252.1Q726.4,254.3 724.2,256.9Q722.0,259.5 719.9,262.8Q717.7,266.0 715.3,268.6Q712.9,271.3 710.1,273.2Q707.3,275.1 704.2,276.6Q701.2,278.2 698.3,280.3Q695.4,282.4 693.1,285.1Q690.8,287.9 689.1,291.4Q687.3,294.8 685.7,298.5Q684.1,302.1 682.0,305.1Q679.9,308.2 677.0,310.5Q674.1,312.8 670.8,315.5Q667.4,318.2 664.3,321.5Q661.2,324.8 659.1,328.4Q657.0,332.0 656.1,335.8Q655.1,339.6 654.9,343.5Q654.7,347.4 654.3,352.2Q653.8,357.0 652.4,361.1Q650.9,365.2 648.5,368.7Q646.1,372.2 643.6,376.2Q641.0,380.3 639.3,384.8Q637.5,389.2 637.1,393.7Q636.8,398.1 637.3,403.6Q637.9,409.0 638.2,414.6Q638.6,420.2 637.7,425.1Q636.8,430.0 634.3,434.1Q631.9,438.3 628.7,442.8Q625.5,447.4 622.9,453.0Q620.3,458.7 619.4,464.1Q618.5,469.6 619.4,474.8Q620.2,480.0 621.6,485.5Q623.0,491.1 623.6,497.3Q624.2,503.5 623.2,509.0Q622.1,514.6 619.9,520.4L617.6,526.3"/>
<path stroke="#7f5a3b" stroke-width="4.2" d="M760.8,279.3Q761.6,281.2 763.3,283.7Q765.0,286.1 766.4,288.4Q767.8,290.6 767.0,291.4Q766.2,292.2 763.4,292.0Q760.6,291.7 757.9,293.0Q755.3,294.3 754.9,296.1Q754.4,297.9 755.4,299.6Q756.5,301.4 756.4,303.5Q756.4,305.7 754.1,308.3Q751.8,310.9 749.3,313.9Q746.7,316.9 746.9,319.5Q747.0,322.0 750.4,324.0Q753.8,325.9 757.4,330.6Q760.9,335.2 761.0,338.4Q761.1,341.7 758.0,343.7Q754.8,345.8 752.0,349.0Q749.2,352.3 749.8,355.7Q750.4,359.1 753.1,363.8Q755.7,368.5 756.2,372.7Q756.7,377.0 752.9,380.0Q749.2,383.1 744.2,388.9Q739.3,394.7 738.2,399.5Q737.0,404.4 741.0,407.7Q744.9,411.1 749.8,416.4Q754.7,421.7 755.4,427.0Q756.1,432.3 752.4,436.1Q748.8,440.0 745.8,446.2Q742.9,452.3 744.8,457.2Q746.7,462.0 751.7,469.1Q756.8,476.2 758.8,482.8Q760.9,489.4 756.7,493.9Q752.5,498.5 745.7,505.3Q738.8,512.2 736.2,519.5Q733.6,526.8 737.5,531.9Q741.5,537.1 747.1,543.6Q752.7,550.2 753.3,557.3Q754.0,564.4 749.2,570.9Q744.4,577.4 740.5,586.1Q736.5,594.7 739.3,601.2L742.0,607.6"/>
<path stroke="#8a613e" stroke-width="3.1" d="M826.6,249.8Q834.6,254.3 838.1,257.5Q841.6,260.8 844.8,264.4Q848.1,268.0 851.3,271.1Q854.5,274.1 858.1,276.0Q861.7,277.9 865.8,278.8Q869.8,279.7 874.0,280.6Q878.2,281.5 881.9,283.8Q885.7,286.0 888.5,288.8Q891.3,291.7 893.3,294.9Q895.2,298.2 896.8,302.1Q898.4,306.0 900.5,309.3Q902.6,312.5 905.7,314.7Q908.8,316.8 912.5,319.9Q916.3,322.9 919.6,326.2Q923.0,329.6 924.8,333.3Q926.6,337.0 926.3,340.8Q926.1,344.6 924.5,349.0Q923.0,353.4 921.6,358.8Q920.2,364.1 920.5,368.3Q920.7,372.4 923.0,375.5Q925.3,378.5 928.6,381.3Q932.0,384.1 934.6,389.0Q937.1,393.8 937.5,398.3L937.8,402.8"/>
<path stroke="#7f5a3b" stroke-width="3.5" d="M781.9,235.0Q789.6,236.2 793.5,236.7Q797.3,237.2 801.1,238.4Q804.8,239.6 808.3,241.2Q811.9,242.7 815.1,244.7Q818.3,246.6 821.2,248.8Q824.1,251.0 826.9,253.5Q829.6,255.9 832.4,258.3Q835.2,260.7 838.2,262.8Q841.2,264.8 844.4,267.1Q847.6,269.4 850.8,271.8Q854.0,274.2 856.8,277.0Q859.7,279.8 861.8,282.9Q863.9,286.0 865.3,289.4Q866.7,292.8 867.5,296.8Q868.3,300.8 869.0,305.3Q869.7,309.8 870.9,313.8Q872.0,317.8 874.0,321.1Q875.9,324.4 878.6,327.3Q881.2,330.2 884.1,333.3Q887.0,336.3 889.4,340.5Q891.8,344.6 893.3,348.9Q894.7,353.2 895.1,357.5Q895.4,361.9 895.0,366.7L894.6,371.5"/>
<path stroke="#86603d" stroke-width="3.4" d="M693.3,299.1Q689.0,297.9 686.5,298.1Q684.0,298.2 682.7,299.6Q681.4,301.1 681.3,302.8Q681.2,304.5 680.9,306.4Q680.5,308.2 678.7,310.1Q676.9,312.1 674.6,314.3Q672.4,316.6 671.9,318.9Q671.5,321.2 673.6,323.4Q675.7,325.7 678.1,330.0Q680.5,334.4 680.4,337.3Q680.3,340.2 677.5,341.8Q674.7,343.4 672.0,345.9Q669.3,348.3 669.2,351.4Q669.1,354.6 670.7,358.7Q672.3,362.9 672.1,366.6Q672.0,370.2 668.6,373.1Q665.1,375.9 661.0,380.6Q656.9,385.4 656.1,389.5Q655.3,393.6 658.6,396.8Q661.9,400.1 665.5,405.3Q669.1,410.5 668.9,415.0Q668.8,419.6 665.4,422.9Q662.0,426.2 659.8,431.6Q657.5,436.9 659.4,441.4Q661.4,445.8 665.1,452.6Q668.8,459.3 669.3,464.8Q669.7,470.3 665.0,473.9Q660.4,477.6 654.8,484.4Q649.2,491.3 648.2,497.3Q647.3,503.3 651.4,507.8Q655.6,512.3 659.5,519.0Q663.5,525.6 662.5,531.5Q661.5,537.3 656.9,543.8Q652.4,550.3 650.4,557.5Q648.5,564.6 652.5,569.9Q656.6,575.2 662.7,584.0Q668.7,592.8 670.0,600.2L671.3,607.6"/>
<path stroke="#8c6340" stroke-width="3.5" d="M701.7,331.6Q697.2,335.3 694.3,336.1Q691.4,336.9 688.0,338.0Q684.5,339.1 681.5,341.1Q678.5,343.2 676.7,345.8Q674.8,348.5 674.1,351.5Q673.3,354.4 672.6,357.8Q671.8,361.2 670.0,363.9Q668.1,366.6 665.1,369.2Q662.1,371.8 659.2,374.9Q656.3,377.9 655.2,381.3Q654.1,384.7 655.2,388.5Q656.3,392.2 658.0,397.9Q659.7,403.6 659.6,408.0Q659.6,412.3 656.7,414.8Q653.8,417.3 649.3,419.3Q644.7,421.4 641.3,425.8Q637.8,430.1 637.5,434.2L637.1,438.4"/>
<path stroke="#93683f" stroke-width="3.1" d="M797.2,245.1Q796.2,246.7 795.3,247.2Q794.4,247.8 793.5,248.7Q792.6,249.7 792.4,251.0Q792.1,252.3 792.6,254.6Q793.2,256.9 793.8,259.4Q794.5,261.8 794.4,263.7Q794.2,265.7 792.6,266.9Q790.9,268.1 788.3,269.2Q785.7,270.3 783.3,273.0Q781.0,275.7 780.0,278.5Q779.1,281.2 779.7,283.9Q780.3,286.6 781.4,289.4Q782.4,292.3 782.5,295.8Q782.6,299.3 781.1,302.5Q779.6,305.8 777.4,309.9Q775.2,314.1 774.0,318.2Q772.7,322.3 773.6,326.1Q774.5,329.9 777.1,334.2Q779.7,338.4 782.1,344.1Q784.5,349.7 784.9,354.7Q785.2,359.6 783.0,363.7Q780.9,367.9 777.6,372.1Q774.2,376.3 772.1,382.3Q770.0,388.2 770.3,393.6Q770.7,398.9 772.9,404.4Q775.1,409.8 776.9,416.5Q778.7,423.1 778.0,429.1Q777.4,435.1 774.2,441.0Q771.1,447.0 767.6,454.7Q764.0,462.4 762.8,469.6Q761.6,476.8 763.8,483.1Q766.1,489.3 770.4,495.8Q774.7,502.3 778.0,510.9L781.3,519.5"/>
<path stroke="#86603d" stroke-width="3.5" d="M775.9,265.3Q772.7,266.7 772.1,268.1Q771.5,269.6 771.5,271.2Q771.4,272.8 770.9,274.2Q770.3,275.7 768.9,277.0Q767.5,278.3 765.9,279.9Q764.2,281.4 763.7,283.2Q763.1,285.0 764.1,287.7Q765.1,290.3 766.7,294.2Q768.3,298.1 768.7,301.0Q769.0,304.0 767.0,305.3Q765.0,306.7 761.4,307.2Q757.8,307.7 754.6,310.3Q751.5,312.8 750.6,315.7Q749.6,318.6 750.5,321.4Q751.4,324.2 752.2,327.8Q752.9,331.4 751.6,334.3Q750.3,337.2 747.1,340.8Q743.8,344.4 740.8,348.4Q737.8,352.4 737.5,356.1Q737.3,359.8 740.1,363.1Q742.9,366.3 746.6,371.9Q750.2,377.5 751.5,382.5Q752.8,387.6 750.5,391.1Q748.2,394.5 744.1,397.3Q739.9,400.1 737.3,405.3Q734.6,410.4 735.3,414.9Q736.0,419.4 738.7,425.2Q741.4,430.9 742.7,436.7Q744.1,442.6 741.6,447.0Q739.2,451.3 733.9,456.7Q728.6,462.0 724.3,468.6Q720.0,475.3 720.0,481.0Q720.0,486.6 724.1,491.2Q728.3,495.8 733.1,502.6Q737.8,509.4 739.1,516.2Q740.4,523.1 737.3,528.2Q734.2,533.4 729.7,539.8Q725.2,546.1 723.6,553.1Q722.1,560.2 725.2,565.9Q728.2,571.7 733.2,580.5Q738.1,589.4 740.2,597.3Q742.2,605.3 738.8,611.3L735.3,617.3"/>
<path stroke="#86603d" stroke-width="2.8" d="M796.5,253.6Q788.5,255.3 784.6,256.4Q780.8,257.6 777.2,259.5Q773.5,261.3 770.0,263.2Q766.5,265.2 763.0,266.7Q759.6,268.2 756.0,269.3Q752.5,270.4 748.9,271.2Q745.3,271.9 741.7,272.9Q738.1,273.8 734.8,275.4Q731.4,277.1 728.4,279.2Q725.4,281.2 722.7,284.0Q720.0,286.7 717.4,289.6Q714.9,292.5 712.2,295.0Q709.5,297.5 706.4,299.5Q703.4,301.5 700.0,303.5Q696.6,305.4 693.2,308.0Q689.7,310.6 686.6,313.6Q683.6,316.5 681.2,319.8Q678.9,323.1 677.4,326.7Q675.9,330.4 675.0,334.1Q674.1,337.9 673.2,342.5Q672.4,347.0 671.0,351.3Q669.7,355.5 667.6,359.2Q665.5,362.9 663.0,366.3Q660.4,369.7 657.9,373.8Q655.3,377.9 653.4,382.4Q651.5,386.9 650.7,391.5Q649.8,396.1 649.8,401.2Q649.8,406.3 650.0,412.0Q650.3,417.7 650.1,423.2Q649.9,428.7 648.6,433.7Q647.4,438.6 645.1,443.2Q642.8,447.8 640.1,453.0Q637.3,458.1 635.0,464.3Q632.6,470.4 631.4,476.4Q630.3,482.5 630.6,488.3Q630.9,494.2 632.2,499.8L633.6,505.5"/>
<path stroke="#a57246" stroke-width="3.1" d="M708.7,318.1Q703.2,316.3 700.5,317.0Q697.8,317.7 696.6,319.6Q695.4,321.5 695.1,323.8Q694.7,326.0 693.2,328.0Q691.7,329.9 689.3,331.9Q686.9,333.9 686.2,336.5Q685.5,339.0 687.0,343.4Q688.5,347.7 688.8,351.6Q689.2,355.4 686.0,356.8Q682.8,358.3 678.7,360.8Q674.5,363.2 673.6,366.9Q672.6,370.5 674.2,374.4Q675.7,378.4 675.1,382.4Q674.4,386.5 670.5,390.7Q666.6,395.0 664.3,399.9Q662.1,404.7 664.9,408.7Q667.8,412.6 671.8,419.2Q675.9,425.8 675.0,430.7Q674.1,435.5 669.3,439.6Q664.6,443.6 662.9,449.7Q661.2,455.7 664.5,461.4Q667.8,467.1 669.9,474.0Q671.9,480.9 667.9,485.9Q663.9,490.9 658.6,499.3L653.3,507.6"/>
<path stroke="#8c6340" stroke-width="4.2" d="M782.9,271.4Q784.8,277.4 786.0,280.2Q787.3,283.0 789.3,285.8Q791.3,288.5 793.9,291.8Q796.6,295.0 798.9,298.5Q801.1,301.9 801.9,305.3Q802.6,308.7 801.4,311.9Q800.2,315.0 797.8,318.6Q795.5,322.1 793.7,326.6Q791.9,331.2 792.1,334.7Q792.3,338.3 794.4,341.2Q796.6,344.0 799.2,347.7Q801.9,351.4 802.9,355.6Q803.9,359.9 802.3,363.4Q800.7,366.8 797.2,371.4Q793.8,376.1 790.9,380.9Q788.1,385.7 788.0,389.7L787.9,393.8"/>
<path stroke="#93683f" stroke-width="3.2" d="M808.2,242.7Q815.1,245.4 817.8,247.5Q820.5,249.6 822.4,252.2Q824.3,254.8 826.0,257.5Q827.8,260.2 830.0,262.7Q832.3,265.2 835.1,267.3Q837.9,269.4 840.5,271.7Q843.1,274.1 844.7,276.9Q846.4,279.7 847.0,284.3Q847.7,288.8 848.5,293.0Q849.3,297.2 851.4,299.8Q853.6,302.3 857.4,303.2Q861.1,304.1 865.2,305.8Q869.3,307.6 872.1,310.6Q874.8,313.5 875.8,316.9Q876.7,320.3 877.0,323.9Q877.3,327.6 878.7,331.2Q880.0,334.8 883.1,337.8Q886.1,340.8 889.5,344.3Q892.9,347.8 894.6,351.5Q896.3,355.3 895.4,359.0Q894.6,362.8 892.6,368.5Q890.7,374.1 890.2,379.2Q889.7,384.2 892.1,387.4Q894.5,390.5 898.6,392.7Q902.7,394.8 905.8,399.1Q909.0,403.3 909.3,407.6Q909.7,411.8 908.3,416.7Q906.8,421.7 906.4,426.9Q905.9,432.1 908.4,435.7Q910.9,439.3 915.3,444.0Q919.8,448.7 923.2,454.0Q926.5,459.3 926.2,464.0Q925.8,468.7 922.4,472.7Q918.9,476.7 915.6,483.2Q912.3,489.7 912.2,495.0Q912.2,500.2 915.4,504.2Q918.7,508.1 922.2,513.5Q925.6,518.9 926.0,524.3Q926.3,529.7 923.2,535.0Q920.2,540.3 916.8,547.1Q913.4,553.9 913.5,559.5Q913.6,565.1 917.8,569.4Q921.9,573.6 927.0,580.9Q932.1,588.2 930.4,594.9L928.7,601.5"/>
<path stroke="#86603d" stroke-width="3.2" d="M802.7,289.4Q810.4,289.7 813.9,290.7Q817.4,291.7 820.9,292.8Q824.3,293.8 828.0,294.3Q831.8,294.8 835.7,295.0Q839.7,295.3 843.3,296.5Q846.8,297.7 849.1,300.4Q851.5,303.0 852.9,307.6Q854.2,312.1 856.0,316.1Q857.7,320.2 860.9,321.1Q864.0,322.0 868.1,321.6Q872.2,321.2 875.5,323.0Q878.8,324.7 880.2,328.3Q881.7,331.8 882.5,336.4Q883.4,341.0 886.0,343.3Q888.6,345.6 893.5,346.4Q898.5,347.2 903.6,349.9Q908.7,352.6 910.9,356.2Q913.1,359.8 911.9,363.9Q910.6,367.9 908.9,373.6Q907.1,379.3 908.2,383.5Q909.3,387.7 913.4,389.8Q917.5,391.9 921.2,396.1Q924.9,400.3 924.9,404.7Q924.9,409.1 922.1,415.6Q919.3,422.2 917.9,428.2Q916.6,434.3 920.0,437.7Q923.5,441.1 930.0,444.8Q936.6,448.4 941.1,454.5Q945.5,460.6 944.6,465.7Q943.6,470.9 939.3,475.8Q935.1,480.7 933.0,487.5Q931.0,494.3 933.9,499.2Q936.9,504.0 941.8,511.0Q946.7,518.0 947.1,524.6Q947.6,531.2 943.5,536.1L939.5,540.9"/>
<path stroke="#8f6541" stroke-width="2.9" d="M811.0,249.8Q815.3,250.8 817.5,250.7Q819.7,250.6 822.2,250.0Q824.7,249.4 827.3,249.7Q829.9,249.9 832.4,250.7Q834.8,251.5 836.9,252.9Q838.9,254.3 840.6,256.2Q842.2,258.0 843.8,259.9Q845.4,261.8 847.3,263.6Q849.2,265.5 851.5,267.1Q853.8,268.8 856.2,270.7Q858.5,272.7 860.4,275.0Q862.2,277.3 863.2,280.1Q864.1,282.9 864.6,286.8Q865.2,290.8 866.0,294.4Q866.8,298.0 868.6,300.7Q870.5,303.5 873.4,305.4Q876.2,307.3 879.4,309.7Q882.5,312.1 885.0,315.6Q887.4,319.0 888.7,322.7Q889.9,326.4 890.3,330.2Q890.8,334.1 891.4,338.7Q892.0,343.2 893.7,347.2Q895.5,351.1 898.3,355.1Q901.0,359.1 903.9,363.7Q906.8,368.4 908.5,373.1Q910.3,377.8 910.3,382.6Q910.4,387.4 909.3,392.7Q908.3,398.1 907.6,404.4Q907.0,410.7 907.9,416.2Q908.8,421.6 911.4,426.3Q914.0,431.0 917.2,435.9Q920.4,440.8 922.5,446.9Q924.7,453.0 925.0,458.9Q925.4,464.8 924.5,471.4Q923.7,478.0 923.2,485.0Q922.8,492.1 924.1,498.5Q925.4,504.9 928.5,510.6Q931.6,516.4 935.2,524.0Q938.7,531.5 940.8,538.9Q942.9,546.3 942.6,553.3L942.3,560.3"/>
<path stroke="#8c6340" stroke-width="3.2" d="M776.1,234.1Q775.1,236.0 776.0,237.6Q777.0,239.2 778.4,241.9Q779.9,244.6 779.6,245.9Q779.4,247.3 777.0,247.3Q774.6,247.3 772.4,248.4Q770.1,249.4 769.8,251.2Q769.6,253.0 770.0,255.0Q770.5,257.0 769.2,259.0Q767.9,261.0 765.2,263.5Q762.6,266.1 761.7,268.6Q760.7,271.1 763.0,273.2Q765.3,275.3 767.9,279.3Q770.6,283.4 770.2,286.2Q769.7,289.0 766.8,290.8Q764.0,292.6 762.6,295.7Q761.2,298.9 762.6,302.7Q764.1,306.5 765.0,310.6Q765.9,314.7 763.1,317.2Q760.3,319.7 755.9,324.3Q751.5,328.8 750.5,333.0Q749.5,337.1 752.8,340.3Q756.0,343.5 758.7,348.6Q761.3,353.8 759.8,357.7Q758.2,361.6 755.0,366.0Q751.8,370.4 752.2,374.9Q752.5,379.5 756.1,385.5Q759.7,391.5 760.9,397.2Q762.1,402.9 757.8,406.4Q753.5,410.0 748.2,416.1Q742.9,422.2 742.7,427.7Q742.5,433.2 746.4,437.8Q750.2,442.5 751.7,449.1Q753.2,455.6 749.6,461.0Q746.1,466.4 742.7,473.4Q739.4,480.4 741.8,485.9Q744.2,491.4 749.8,499.3Q755.3,507.1 756.2,514.2Q757.2,521.3 751.7,526.0Q746.3,530.7 741.3,538.5Q736.4,546.3 737.8,552.9Q739.3,559.4 743.7,566.9Q748.0,574.5 747.5,581.7L746.9,589.0"/>
<path stroke="#ab784a" stroke-width="2.9" d="M721.0,290.4Q718.6,293.7 717.5,295.5Q716.4,297.4 716.2,299.4Q716.1,301.5 717.2,304.2Q718.3,306.9 719.9,310.7Q721.4,314.5 722.0,317.8Q722.5,321.0 721.0,323.2Q719.5,325.3 716.4,326.7Q713.3,328.1 710.1,330.7Q707.0,333.4 705.5,336.8Q704.1,340.2 704.7,343.4Q705.3,346.7 706.7,350.8Q708.1,354.9 708.1,359.0Q708.1,363.1 705.7,366.2Q703.2,369.2 699.3,374.1Q695.3,379.0 692.4,383.9Q689.4,388.8 689.6,393.2Q689.8,397.6 693.1,401.4Q696.5,405.3 700.6,411.6Q704.7,417.9 706.5,424.0Q708.2,430.1 706.1,434.7Q704.0,439.2 699.3,442.8Q694.7,446.4 691.0,452.7Q687.2,459.0 687.0,464.7Q686.8,470.5 690.0,476.2L693.3,481.8"/>
<path stroke="#7f5a3b" stroke-width="4.1" d="M740.2,323.2Q738.1,325.9 736.1,326.9Q734.2,327.9 732.2,329.5Q730.2,331.1 729.0,333.4Q727.9,335.7 727.8,338.0Q727.8,340.4 728.2,342.7Q728.5,345.1 728.2,347.8Q727.8,350.4 726.3,353.4Q724.8,356.3 722.7,359.6Q720.7,362.9 719.5,366.2Q718.4,369.4 719.2,372.4Q720.0,375.3 722.3,378.2Q724.7,381.2 727.1,385.8Q729.5,390.4 730.0,394.3Q730.6,398.3 728.9,401.4Q727.2,404.5 724.5,407.3Q721.7,410.2 720.1,414.7Q718.4,419.1 719.0,423.0Q719.6,427.0 721.6,431.7Q723.7,436.4 725.1,441.4Q726.5,446.4 725.4,450.6Q724.4,454.8 721.0,459.1Q717.6,463.4 714.0,469.4Q710.4,475.5 709.2,480.8Q708.1,486.2 710.4,490.6Q712.7,495.0 716.8,499.3Q721.0,503.7 724.0,510.1Q727.0,516.6 726.8,522.0Q726.5,527.5 723.6,532.1Q720.6,536.8 717.7,543.4Q714.7,550.0 714.7,556.0Q714.6,562.0 717.9,567.3L721.2,572.6"/>
<path stroke="#8c6340" stroke-width="3.2" d="M814.9,237.7Q804.0,239.3 798.7,240.3Q793.4,241.4 788.3,242.2Q783.2,243.1 778.1,243.7Q773.0,244.4 768.0,245.0Q763.1,245.6 758.3,246.6Q753.5,247.7 749.2,249.4Q744.8,251.1 740.9,254.0Q737.0,256.9 733.4,260.6Q729.9,264.3 726.2,266.9Q722.6,269.5 718.6,270.5Q714.5,271.4 710.1,271.1Q705.7,270.7 701.1,270.9Q696.6,271.2 692.7,272.8Q688.7,274.5 685.6,277.0Q682.5,279.5 680.3,282.6Q678.0,285.7 675.8,289.5Q673.7,293.3 670.8,295.7Q668.0,298.0 664.1,299.4Q660.3,300.7 656.0,303.0Q651.8,305.2 648.3,308.0Q644.8,310.7 643.0,314.1Q641.3,317.6 641.5,321.4Q641.6,325.2 642.5,330.5Q643.4,335.8 643.5,340.7Q643.5,345.5 641.7,348.6Q639.8,351.7 636.3,353.6Q632.7,355.6 628.9,358.6Q625.1,361.6 623.0,365.7Q620.8,369.9 621.0,373.9Q621.3,377.9 623.2,382.7L625.1,387.5"/>
<path stroke="#7f5a3b" stroke-width="3.2" d="M819.4,239.8Q817.3,243.3 816.6,244.9Q815.9,246.5 816.2,247.7Q816.5,248.9 817.8,249.8Q819.0,250.7 820.5,251.6Q822.0,252.6 823.0,254.4Q824.0,256.2 824.0,258.0Q824.1,259.9 823.6,262.0Q823.2,264.1 823.1,266.4Q823.0,268.7 824.0,270.9Q824.9,273.0 826.7,275.9Q828.5,278.9 830.1,281.9Q831.7,285.0 832.0,287.8Q832.3,290.7 830.9,293.2Q829.5,295.8 827.3,298.8Q825.2,301.8 823.6,305.8Q822.0,309.8 822.1,313.2Q822.2,316.7 823.8,319.7Q825.4,322.7 827.3,326.0Q829.1,329.4 829.8,333.4Q830.4,337.4 829.4,341.3Q828.5,345.2 826.8,350.1Q825.1,355.1 824.4,359.7Q823.7,364.4 825.1,368.5Q826.4,372.5 829.5,376.7Q832.5,380.9 835.5,386.6Q838.4,392.3 839.4,397.5Q840.4,402.7 838.9,407.3Q837.3,411.9 834.5,416.3Q831.6,420.7 829.6,426.9Q827.6,433.1 827.8,438.7Q828.1,444.2 830.4,449.1Q832.6,454.0 834.9,460.5Q837.3,467.0 837.7,473.1Q838.0,479.2 835.9,484.7Q833.7,490.1 830.5,497.7Q827.3,505.2 825.5,512.4Q823.7,519.6 825.0,525.8Q826.3,532.0 830.1,537.4Q833.9,542.9 837.9,550.8Q841.9,558.7 843.5,566.3Q845.0,573.8 843.3,580.5L841.7,587.1"/>
<path stroke="#8a613e" stroke-width="3.0" d="M813.3,269.3Q816.2,273.3 816.6,276.2Q817.1,279.1 817.9,281.8Q818.7,284.4 821.4,286.1Q824.1,287.7 827.1,290.5Q830.2,293.3 830.9,296.1Q831.6,298.9 830.4,301.7Q829.2,304.5 829.2,307.9Q829.1,311.3 831.0,313.9Q832.9,316.5 833.8,319.6Q834.6,322.7 833.3,327.1Q831.9,331.4 831.3,335.4Q830.8,339.4 833.9,341.4Q836.9,343.4 840.8,346.6Q844.8,349.8 845.4,353.3Q846.1,356.8 844.5,360.2Q843.0,363.5 843.6,367.2Q844.2,370.9 847.2,374.9Q850.2,379.0 850.9,382.8Q851.6,386.7 848.5,391.0Q845.4,395.4 843.4,400.6Q841.5,405.9 844.5,408.7Q847.5,411.6 851.5,415.2Q855.6,418.8 855.5,422.9Q855.5,427.0 853.3,431.9Q851.2,436.7 852.7,440.6Q854.3,444.5 858.8,449.5Q863.4,454.6 864.4,459.2Q865.4,463.9 861.1,467.9Q856.8,471.9 854.0,478.0Q851.1,484.1 854.1,487.8Q857.1,491.4 860.8,496.2Q864.5,500.9 863.0,505.4Q861.5,509.8 858.2,516.4Q854.9,522.9 857.0,527.3Q859.2,531.6 865.2,537.1Q871.3,542.6 872.7,548.3Q874.2,553.9 869.3,557.8Q864.5,561.7 861.5,568.4Q858.5,575.1 862.1,579.3Q865.6,583.5 869.0,590.0Q872.3,596.5 869.0,601.4L865.7,606.2"/>
<path stroke="#7f5a3b" stroke-width="4.2" d="M778.0,291.0Q782.6,296.8 784.5,300.0Q786.3,303.1 789.1,305.6Q791.8,308.0 795.1,310.2Q798.5,312.4 800.6,315.3Q802.7,318.2 802.9,323.7Q803.1,329.1 803.7,333.9Q804.3,338.6 807.8,339.8Q811.3,340.9 816.9,341.0Q822.4,341.1 826.2,344.0Q830.0,346.8 830.3,350.4Q830.5,354.0 830.1,358.3Q829.6,362.5 832.2,365.3Q834.7,368.1 839.4,371.6Q844.0,375.2 845.9,379.1Q847.7,382.9 844.5,386.8Q841.3,390.8 837.4,397.7Q833.6,404.6 834.8,408.2Q836.0,411.8 841.8,413.1Q847.6,414.3 851.4,419.1Q855.3,423.8 853.3,427.6Q851.3,431.4 847.8,437.2Q844.3,443.1 846.1,446.9Q847.8,450.7 854.3,455.9Q860.8,461.0 864.3,467.1Q867.7,473.1 863.2,476.4Q858.6,479.8 850.9,484.8Q843.3,489.9 841.5,495.3Q839.7,500.6 844.8,504.2Q849.9,507.8 853.5,514.8L857.2,521.8"/>
<path stroke="#7f5a3b" stroke-width="3.4" d="M773.5,296.5Q773.6,303.6 773.2,307.3Q772.8,311.1 771.4,314.6Q770.1,318.0 768.9,321.7Q767.6,325.3 767.7,329.5Q767.7,333.6 768.2,338.2Q768.7,342.8 767.8,346.5Q766.8,350.2 764.0,352.7Q761.1,355.2 758.2,359.1Q755.3,363.0 754.5,366.8Q753.8,370.6 754.6,374.1Q755.3,377.7 755.2,381.7Q755.0,385.7 752.9,389.5Q750.8,393.3 748.8,397.4Q746.8,401.5 747.5,405.2Q748.2,408.8 750.7,413.7Q753.2,418.5 754.0,423.1Q754.8,427.7 752.2,430.7Q749.7,433.6 746.3,437.1Q742.9,440.6 742.3,444.7Q741.6,448.7 743.4,452.7Q745.2,456.8 745.7,461.2Q746.3,465.7 743.4,469.2Q740.5,472.6 737.1,477.5Q733.6,482.5 733.9,486.4Q734.1,490.4 737.9,494.0Q741.7,497.5 744.3,502.8Q746.9,508.2 745.1,511.7Q743.3,515.2 739.7,518.9Q736.0,522.7 735.6,527.0Q735.1,531.3 738.3,535.7Q741.5,540.0 743.6,545.0L745.7,550.1"/>
<path stroke="#ab784a" stroke-width="3.3" d="M759.9,306.8Q751.8,310.3 749.1,312.9Q746.4,315.5 744.6,318.6Q742.9,321.7 740.7,324.6Q738.5,327.5 735.4,330.0Q732.3,332.5 729.8,335.3Q727.2,338.1 726.5,342.2Q725.8,346.3 725.6,351.5Q725.4,356.8 723.1,359.6Q720.8,362.3 716.4,362.8Q711.9,363.3 708.1,366.1Q704.3,368.8 703.2,372.3Q702.1,375.8 701.8,379.8Q701.6,383.9 699.1,386.8Q696.7,389.7 692.5,393.1Q688.3,396.6 686.3,400.3Q684.3,404.0 686.2,407.8Q688.0,411.6 690.2,417.9Q692.4,424.2 690.8,427.6Q689.1,431.1 684.6,432.9Q680.1,434.7 677.7,438.9Q675.3,443.1 676.7,447.6Q678.2,452.1 679.3,457.4Q680.5,462.6 677.1,465.5Q673.7,468.3 668.3,473.3Q662.9,478.3 661.6,483.0Q660.4,487.6 664.4,491.1Q668.5,494.6 672.0,500.7Q675.5,506.8 673.6,510.7Q671.7,514.7 667.5,519.1Q663.3,523.6 663.3,528.4Q663.4,533.2 668.0,538.6Q672.7,544.1 675.1,549.9Q677.4,555.6 673.2,559.2Q669.0,562.7 663.1,569.5Q657.1,576.2 657.3,581.5L657.4,586.9"/>
<path stroke="#93683f" stroke-width="2.9" d="M761.9,263.0Q762.3,265.0 762.8,266.0Q763.3,266.9 763.1,267.8Q762.9,268.8 762.1,269.7Q761.3,270.7 760.7,272.0Q760.0,273.2 760.5,274.8Q761.0,276.3 762.3,278.9Q763.6,281.5 764.4,283.9Q765.2,286.3 764.3,287.8Q763.3,289.3 760.7,290.2Q758.1,291.1 755.6,293.5Q753.0,295.8 752.1,298.4Q751.1,301.0 751.9,303.4Q752.7,305.9 753.7,308.6Q754.7,311.4 754.2,314.3Q753.6,317.3 751.5,320.7Q749.4,324.1 747.5,327.9Q745.6,331.6 745.8,335.0Q746.1,338.4 748.5,341.7Q751.0,345.1 753.6,350.4Q756.2,355.6 756.4,360.0Q756.7,364.3 754.1,367.6Q751.6,370.9 748.3,374.7Q745.0,378.4 743.6,383.3Q742.2,388.2 743.5,392.5Q744.7,396.9 746.5,402.6Q748.4,408.4 748.0,413.6Q747.7,418.7 744.5,423.4Q741.2,428.1 737.4,434.5Q733.6,441.0 732.3,446.9Q731.1,452.8 733.6,457.9Q736.0,463.0 739.9,469.3Q743.8,475.6 745.5,482.6Q747.2,489.7 745.1,495.4Q743.0,501.1 739.2,506.9Q735.3,512.7 733.4,519.9Q731.5,527.1 733.3,533.4Q735.1,539.7 738.4,548.2Q741.8,556.6 742.7,564.5Q743.7,572.3 740.4,578.6Q737.0,584.9 731.5,592.7L725.9,600.5"/>
<path stroke="#93683f" stroke-width="3.5" d="M750.1,289.0Q743.2,293.7 739.4,296.5Q735.6,299.2 732.2,302.5Q728.7,305.8 726.4,309.3Q724.0,312.8 722.6,316.6Q721.2,320.4 720.0,324.1Q718.8,327.9 716.9,331.7Q715.1,335.5 712.4,338.8Q709.7,342.2 706.9,345.7Q704.1,349.2 702.3,352.8Q700.5,356.5 700.0,360.6Q699.6,364.7 699.8,370.2Q700.0,375.6 699.4,380.2Q698.8,384.8 696.4,387.8Q694.0,390.8 690.1,392.6Q686.2,394.5 682.5,397.8Q678.7,401.1 676.6,404.9Q674.5,408.7 674.4,412.5Q674.3,416.3 674.8,420.6Q675.3,424.9 674.5,429.1Q673.8,433.3 671.0,436.3Q668.3,439.3 664.7,443.4Q661.1,447.5 658.8,451.5Q656.5,455.6 657.0,459.4Q657.5,463.2 660.1,467.4Q662.7,471.5 665.0,477.2Q667.3,482.9 667.0,487.1Q666.7,491.2 663.5,493.9Q660.4,496.5 656.4,499.6Q652.5,502.7 650.5,507.1Q648.4,511.4 649.5,515.2Q650.6,518.9 653.2,523.6Q655.9,528.4 657.2,533.1Q658.5,537.9 656.5,541.2L654.5,544.6"/>
<path stroke="#8c6340" stroke-width="3.0" d="M779.6,243.6Q770.8,244.1 766.3,243.5Q761.8,242.9 757.3,243.0Q752.9,243.1 748.7,244.3Q744.6,245.4 741.0,247.3Q737.4,249.1 734.1,251.3Q730.9,253.5 727.5,255.6Q724.2,257.6 720.4,259.1Q716.6,260.6 712.7,262.3Q708.7,264.0 705.4,266.3Q702.1,268.6 700.1,271.7Q698.1,274.9 697.3,279.2Q696.5,283.5 695.7,288.3Q694.9,293.1 692.8,296.2Q690.8,299.2 687.2,300.7Q683.7,302.2 679.8,304.3Q675.9,306.4 673.4,310.0Q670.9,313.6 670.4,317.4Q669.9,321.3 670.5,326.4Q671.1,331.4 670.6,336.0Q670.2,340.5 667.5,343.7Q664.9,346.9 660.8,351.2Q656.7,355.4 653.5,360.6Q650.3,365.8 650.2,370.6Q650.0,375.5 652.8,379.7L655.5,383.8"/>
<path stroke="#7f5a3b" stroke-width="3.7" d="M764.1,241.6Q759.3,245.5 758.0,247.9Q756.8,250.4 756.6,253.1Q756.4,255.8 756.1,259.3Q755.7,262.7 754.2,265.1Q752.7,267.5 750.5,269.5Q748.4,271.4 747.1,274.1Q745.8,276.8 745.6,280.5Q745.4,284.2 744.8,287.7Q744.3,291.1 742.0,293.1Q739.6,295.2 736.1,297.5Q732.5,299.8 730.0,303.1Q727.5,306.3 727.4,309.6Q727.3,312.8 728.3,316.2Q729.3,319.5 728.9,323.4Q728.5,327.2 726.3,330.3Q724.1,333.4 722.3,337.2Q720.4,341.0 721.0,344.5Q721.6,348.0 723.6,353.3Q725.6,358.5 726.0,362.9Q726.4,367.4 723.6,370.2Q720.8,373.0 716.9,376.7Q713.0,380.3 711.6,384.7Q710.2,389.1 711.7,393.0Q713.1,396.8 714.5,401.6Q715.9,406.4 714.4,410.4Q712.8,414.3 709.6,419.6Q706.4,424.8 705.3,429.7Q704.3,434.6 707.1,438.5Q709.9,442.3 713.6,448.4Q717.3,454.5 717.7,459.6Q718.1,464.7 714.8,468.5Q711.4,472.3 708.4,477.8Q705.4,483.3 706.2,488.2Q707.1,493.2 710.3,498.6Q713.5,504.1 714.4,509.8Q715.3,515.4 712.1,520.3Q708.9,525.1 705.0,532.2Q701.2,539.4 701.6,545.0Q702.1,550.6 706.9,554.6Q711.7,558.6 715.9,565.6L720.1,572.5"/>
<path stroke="#93683f" stroke-width="3.9" d="M765.3,300.2Q759.4,301.9 756.8,303.3Q754.2,304.7 753.0,307.1Q751.8,309.5 751.6,313.4Q751.4,317.3 750.5,320.6Q749.6,323.9 747.0,324.8Q744.4,325.7 741.4,326.4Q738.4,327.0 736.9,329.6Q735.3,332.1 735.0,335.9Q734.6,339.7 733.1,342.3Q731.5,344.8 727.6,346.0Q723.7,347.3 719.5,350.0Q715.4,352.8 714.3,356.0Q713.2,359.2 715.0,362.5Q716.8,365.8 718.1,370.6Q719.3,375.3 717.4,378.2Q715.5,381.0 712.3,383.9Q709.0,386.8 708.4,390.6Q707.7,394.3 710.1,399.5Q712.5,404.7 713.9,409.8Q715.2,414.9 712.0,417.7Q708.8,420.4 703.3,424.2Q697.7,427.9 695.3,432.9Q692.8,437.8 695.2,441.7Q697.6,445.6 700.7,450.6Q703.8,455.6 702.8,460.1Q701.8,464.6 697.8,470.0Q693.8,475.3 692.6,480.8Q691.4,486.3 695.6,490.5Q699.9,494.8 704.9,501.9Q710.0,509.1 709.7,514.4Q709.4,519.7 704.0,523.6Q698.6,527.5 694.8,534.9Q691.0,542.2 693.4,547.4Q695.7,552.5 700.7,558.4Q705.6,564.3 706.1,570.5Q706.6,576.7 701.8,583.5L697.1,590.3"/>
<path stroke="#93683f" stroke-width="3.5" d="M758.8,248.8Q768.7,251.8 773.4,253.4Q778.2,255.0 782.8,256.1Q787.4,257.2 791.9,257.3Q796.5,257.4 801.1,256.7Q805.7,255.9 810.3,255.4Q814.9,255.0 819.3,255.5Q823.7,256.1 827.7,257.4Q831.7,258.7 835.2,260.6Q838.8,262.6 841.9,264.9Q845.1,267.2 848.2,269.7Q851.4,272.2 854.9,273.4Q858.4,274.7 862.2,275.8Q866.1,276.9 870.1,278.3Q874.0,279.8 877.4,281.9Q880.7,283.9 882.8,286.8Q885.0,289.7 885.9,293.0Q886.8,296.4 887.1,301.6Q887.3,306.9 888.1,311.1Q888.8,315.3 890.9,317.8Q892.9,320.3 896.4,321.5Q899.8,322.7 903.8,324.2Q907.9,325.6 911.1,328.9Q914.3,332.2 915.6,335.8L916.9,339.3"/>
<path stroke="#8c6340" stroke-width="3.2" d="M798.0,253.0Q790.0,255.3 786.4,257.8Q782.7,260.4 779.2,263.0Q775.7,265.5 772.1,266.8Q768.5,268.1 764.5,267.7Q760.5,267.4 756.3,266.9Q752.1,266.4 748.3,267.5Q744.4,268.6 741.2,270.6Q738.1,272.6 735.3,275.2Q732.5,277.7 729.4,279.9Q726.4,282.0 722.6,283.4Q718.8,284.7 714.7,286.4Q710.7,288.0 707.5,290.5Q704.4,292.9 702.8,296.2Q701.2,299.5 700.6,304.3Q700.0,309.2 698.8,313.7Q697.6,318.2 694.8,320.5Q691.9,322.8 687.8,323.9Q683.8,325.0 680.2,327.7Q676.6,330.5 675.0,334.1Q673.4,337.8 673.2,342.7Q673.0,347.6 672.3,352.3Q671.5,357.0 668.5,359.9Q665.5,362.7 660.8,365.8Q656.1,368.8 652.0,373.1Q648.0,377.5 646.8,381.9Q645.7,386.4 647.4,390.9Q649.1,395.3 651.0,401.4Q652.9,407.5 652.3,412.6Q651.8,417.7 648.4,421.3Q645.0,424.9 641.4,429.9Q637.8,435.0 636.8,440.3Q635.8,445.6 638.0,451.1Q640.2,456.5 643.0,463.6L645.7,470.7"/>
<path stroke="#93683f" stroke-width="3.3" d="M816.8,314.5Q819.3,322.0 820.5,325.8Q821.6,329.6 822.0,333.1Q822.5,336.7 821.9,340.0Q821.4,343.4 820.3,346.5Q819.1,349.7 818.0,353.3Q817.0,357.0 816.8,360.7Q816.6,364.5 817.3,367.9Q818.0,371.3 819.2,375.1Q820.3,378.8 820.8,382.7Q821.4,386.5 820.7,390.0Q820.0,393.5 818.4,397.8Q816.7,402.1 815.1,406.6Q813.5,411.0 813.1,415.0Q812.8,419.1 814.2,422.5Q815.7,425.8 818.4,429.0Q821.1,432.1 823.7,436.9Q826.2,441.6 827.2,445.9Q828.1,450.2 827.0,453.8Q825.9,457.5 823.6,460.7Q821.3,464.0 819.5,468.7Q817.7,473.5 817.8,477.6Q817.8,481.7 819.9,485.3Q821.9,488.8 824.6,493.9L827.3,498.9"/>
<path stroke="#8f6541" stroke-width="4.1" d="M791.6,228.4Q797.2,228.9 800.3,229.2Q803.4,229.4 806.5,230.1Q809.6,230.8 812.3,232.1Q815.0,233.4 817.1,235.4Q819.1,237.4 820.8,239.7Q822.4,241.9 824.2,244.5Q826.0,247.1 828.3,248.8Q830.7,250.6 833.3,252.0Q835.9,253.4 838.2,255.5Q840.4,257.6 841.9,260.5Q843.3,263.4 844.2,267.2Q845.2,270.9 846.5,274.0Q847.9,277.2 850.4,278.9Q853.0,280.7 856.5,281.8Q860.0,282.8 863.4,285.4Q866.7,288.0 868.8,291.0Q870.8,294.0 871.5,297.3Q872.2,300.6 872.5,304.2Q872.9,307.8 874.2,311.4Q875.5,314.9 878.1,318.0Q880.7,321.0 883.4,324.7Q886.2,328.3 887.5,332.0Q888.9,335.8 888.5,339.7Q888.1,343.5 886.9,349.1Q885.8,354.7 885.9,359.5Q886.0,364.3 888.2,367.7Q890.5,371.2 894.1,374.0Q897.7,376.8 900.5,381.5Q903.4,386.2 904.2,390.8Q904.9,395.4 904.1,400.0Q903.3,404.6 902.8,410.2Q902.3,415.7 903.8,420.3Q905.4,424.9 908.6,429.8Q911.9,434.8 914.7,440.5Q917.6,446.2 918.0,451.5Q918.5,456.8 916.3,461.6Q914.1,466.4 911.5,473.0Q908.8,479.5 908.1,485.7Q907.4,491.9 909.5,497.0Q911.6,502.0 914.8,507.3Q918.0,512.5 919.6,519.0Q921.3,525.4 920.1,531.2Q919.0,537.0 916.4,543.9Q913.9,550.9 912.8,557.8Q911.6,564.7 913.5,570.6Q915.4,576.4 919.3,583.2L923.1,590.0"/>
<path stroke="#8f6541" stroke-width="3.3" d="M857.9,253.0Q860.1,258.8 860.2,262.1Q860.4,265.4 859.8,269.0Q859.3,272.6 859.6,275.9Q859.9,279.2 861.8,282.8Q863.7,286.4 865.9,290.6Q868.1,294.7 868.4,298.3Q868.7,301.9 866.5,304.7Q864.3,307.5 861.7,311.3Q859.0,315.1 858.5,319.0Q858.0,322.9 859.8,326.0Q861.5,329.0 862.9,332.8Q864.3,336.5 863.3,340.2Q862.3,343.9 859.9,348.8Q857.5,353.6 857.0,357.7Q856.5,361.8 859.6,364.6Q862.6,367.3 866.9,371.8Q871.2,376.4 872.8,380.8Q874.4,385.1 872.0,388.3Q869.7,391.6 866.5,395.6Q863.3,399.6 863.2,403.8Q863.2,408.0 866.3,411.7Q869.4,415.5 871.7,420.2Q874.0,425.0 872.1,428.6Q870.3,432.1 865.8,437.6Q861.3,443.2 859.2,448.4Q857.1,453.7 860.4,456.8Q863.7,459.8 869.5,463.5Q875.2,467.2 877.8,472.2Q880.4,477.2 877.8,480.8Q875.3,484.4 871.6,489.5Q867.8,494.6 868.4,499.0Q868.9,503.5 874.0,507.7L879.0,511.9"/>
<path stroke="#7c583a" stroke-width="3.0" d="M727.6,257.5Q723.6,258.8 721.2,259.5Q718.9,260.2 717.6,261.8Q716.2,263.3 716.6,265.7Q717.0,268.1 717.5,271.9Q718.1,275.8 716.7,277.3Q715.4,278.9 712.8,279.2Q710.1,279.6 708.4,281.2Q706.8,282.9 706.8,286.2Q706.8,289.6 706.1,292.3Q705.5,295.1 702.2,296.2Q698.9,297.3 694.9,300.0Q690.8,302.7 689.7,305.6Q688.5,308.6 690.5,311.6Q692.5,314.6 693.9,319.0Q695.3,323.5 693.3,326.1Q691.4,328.8 688.4,331.8Q685.5,334.8 685.5,338.4Q685.5,341.9 688.0,347.5Q690.4,353.1 690.6,357.6Q690.8,362.1 686.3,364.2Q681.9,366.2 676.9,370.9Q671.8,375.6 671.3,380.0Q670.7,384.5 673.7,388.4Q676.7,392.3 677.7,397.9Q678.6,403.4 675.1,407.7Q671.7,412.0 668.5,417.6Q665.4,423.3 667.4,427.9Q669.4,432.5 674.2,439.5Q679.1,446.6 679.8,452.6Q680.6,458.6 675.4,462.2Q670.3,465.8 665.4,472.2Q660.4,478.7 661.4,484.3Q662.3,489.9 666.3,496.2Q670.2,502.6 669.9,508.9Q669.6,515.2 664.1,521.7Q658.7,528.2 655.2,535.8Q651.8,543.3 655.7,548.8Q659.5,554.3 666.0,562.4L672.5,570.4"/>
<path stroke="#8a613e" stroke-width="2.8" d="M792.2,240.7Q783.9,239.8 779.6,239.9Q775.4,239.9 771.3,240.3Q767.2,240.8 763.3,241.8Q759.4,242.9 756.0,244.6Q752.6,246.4 749.5,248.6Q746.5,250.8 743.6,253.3Q740.7,255.9 737.6,258.0Q734.6,260.1 731.2,261.4Q727.8,262.7 724.3,264.3Q720.9,265.9 717.8,268.2Q714.7,270.4 712.5,273.2Q710.2,276.0 708.7,280.2Q707.3,284.4 705.9,288.7Q704.6,292.9 702.6,296.1Q700.7,299.4 697.6,301.4Q694.4,303.4 690.5,304.7Q686.5,306.0 682.6,309.2Q678.7,312.5 675.9,316.1Q673.2,319.8 672.1,323.8Q671.0,327.8 671.0,331.9Q671.0,336.0 670.9,341.0Q670.8,346.0 669.6,350.4Q668.3,354.8 665.6,358.5Q662.9,362.1 659.7,367.1Q656.4,372.0 654.2,377.1Q651.9,382.2 651.7,387.2Q651.5,392.2 653.2,396.9Q654.9,401.6 657.3,408.4Q659.6,415.2 660.8,421.5Q662.0,427.7 660.9,433.0Q659.9,438.4 656.9,443.1L653.8,447.8"/>
<path stroke="#86603d" stroke-width="3.0" d="M771.3,266.2Q766.2,268.8 764.9,271.2Q763.5,273.6 762.5,277.0Q761.5,280.4 759.5,282.2Q757.5,284.1 754.8,284.7Q752.1,285.4 750.1,287.4Q748.2,289.4 747.3,292.9Q746.4,296.4 744.7,298.7Q743.0,301.0 739.3,301.0Q735.5,301.1 731.4,302.9Q727.4,304.7 725.6,307.3Q723.9,310.0 724.4,313.2Q724.8,316.4 724.4,320.0Q723.9,323.6 721.2,325.7Q718.5,327.8 716.0,330.8Q713.6,333.8 714.0,337.5Q714.5,341.3 716.0,346.8Q717.5,352.3 716.0,355.5Q714.6,358.6 709.7,359.7Q704.9,360.8 701.1,364.6Q697.3,368.4 697.5,372.2Q697.7,375.9 699.1,380.3Q700.5,384.7 698.7,388.2Q696.9,391.8 692.8,396.3Q688.8,400.7 687.6,405.1Q686.5,409.5 689.8,413.9Q693.2,418.4 696.2,424.8Q699.1,431.2 696.8,435.0Q694.6,438.8 689.6,442.3Q684.6,445.7 683.1,450.9Q681.5,456.0 684.3,461.0Q687.0,466.1 688.1,471.9Q689.1,477.7 685.0,482.1Q680.9,486.4 676.1,493.1Q671.4,499.8 672.5,505.0Q673.6,510.1 679.2,515.3Q684.8,520.5 687.3,527.2Q689.7,533.9 686.1,538.5Q682.4,543.1 678.8,549.6Q675.2,556.2 677.4,561.5Q679.7,566.9 684.6,574.5Q689.4,582.2 689.0,588.4Q688.6,594.5 682.3,600.7L676.1,606.9"/>
<path stroke="#7c583a" stroke-width="4.1" d="M724.4,266.9Q719.7,270.4 717.1,272.1Q714.5,273.7 712.1,275.6Q709.6,277.5 707.9,279.8Q706.1,282.2 705.1,285.1Q704.0,288.1 702.9,291.5Q701.8,294.9 699.9,297.3Q698.0,299.6 695.4,301.2Q692.8,302.8 690.3,304.9Q687.9,307.0 686.4,309.9Q684.9,312.7 683.8,316.2Q682.8,319.7 681.2,322.7Q679.5,325.6 676.8,328.0Q674.0,330.3 671.1,333.4Q668.1,336.5 666.5,339.9Q664.8,343.2 664.7,346.7Q664.7,350.2 665.0,354.4Q665.4,358.7 664.5,362.5Q663.6,366.4 661.3,369.4Q659.1,372.4 656.9,376.1Q654.8,379.8 654.2,383.7Q653.7,387.6 654.3,392.6Q654.9,397.6 654.7,402.2Q654.5,406.8 652.3,410.3Q650.0,413.8 646.7,417.8Q643.3,421.8 641.2,426.5Q639.0,431.3 639.3,435.7Q639.7,440.1 641.1,444.8Q642.5,449.4 642.6,454.6Q642.7,459.7 640.8,464.1Q638.8,468.4 636.5,473.9Q634.3,479.4 634.2,484.4Q634.1,489.5 636.2,494.8Q638.4,500.2 640.2,506.4Q642.1,512.7 641.2,517.9Q640.4,523.1 637.3,527.6Q634.1,532.1 631.6,538.5Q629.1,544.9 629.5,550.6Q629.9,556.2 632.3,561.7Q634.6,567.1 635.8,573.6L637.0,580.0"/>
<path stroke="#7f5a3b" stroke-width="4.1" d="M757.9,271.2Q756.8,275.4 756.6,277.6Q756.5,279.7 756.9,281.8Q757.4,283.9 758.2,286.7Q759.0,289.5 759.5,292.3Q760.1,295.2 759.8,297.7Q759.6,300.3 758.6,302.6Q757.6,305.0 756.4,307.3Q755.2,309.7 754.5,312.7Q753.8,315.8 753.9,318.7Q754.0,321.6 754.5,324.8Q755.0,328.0 755.2,331.3Q755.3,334.6 754.6,337.7Q753.8,340.8 752.5,344.6Q751.1,348.4 750.0,352.3Q748.9,356.2 748.9,359.9Q749.0,363.5 750.3,366.8Q751.6,370.0 753.4,373.9Q755.2,377.7 756.3,382.0Q757.5,386.3 757.2,390.3Q757.0,394.2 755.8,398.0Q754.6,401.7 753.6,406.1Q752.6,410.5 752.7,414.8Q752.9,419.2 754.3,423.6Q755.7,428.1 757.2,433.1Q758.7,438.1 759.1,442.9Q759.5,447.6 758.2,452.0Q757.0,456.3 754.9,461.6Q752.8,466.8 751.4,472.5Q750.0,478.1 750.5,483.2Q751.0,488.2 753.2,492.6Q755.3,497.1 757.7,502.3Q760.2,507.6 761.2,513.2Q762.3,518.9 761.6,524.1Q760.8,529.3 759.3,535.2Q757.8,541.0 757.2,547.2Q756.7,553.3 758.1,558.7Q759.5,564.1 762.3,570.1Q765.2,576.0 767.7,582.7L770.2,589.3"/>
<path stroke="#93683f" stroke-width="3.7" d="M797.5,235.7Q805.4,239.6 809.4,240.8Q813.4,242.1 817.4,243.1Q821.4,244.1 825.3,245.6Q829.1,247.0 832.5,249.2Q836.0,251.4 839.2,254.0Q842.3,256.6 845.6,258.8Q848.8,261.0 852.4,262.7Q856.0,264.4 859.7,266.5Q863.5,268.6 866.8,271.0Q870.0,273.5 872.4,276.6Q874.8,279.6 876.4,283.0Q878.0,286.4 879.7,290.4Q881.3,294.4 883.7,297.5Q886.0,300.6 889.0,303.0Q892.0,305.4 894.7,308.6Q897.4,311.8 899.0,315.4Q900.7,319.1 901.3,323.5Q902.0,328.0 902.7,332.5Q903.4,337.0 905.4,340.5Q907.3,344.1 910.3,347.1Q913.4,350.1 916.4,354.5Q919.3,358.8 920.8,363.2Q922.2,367.7 921.9,372.0Q921.6,376.3 920.7,381.2Q919.9,386.0 920.1,391.0Q920.3,395.9 922.1,400.2Q923.8,404.4 925.9,409.7L927.9,415.1"/>
<path stroke="#8f6541" stroke-width="3.7" d="M735.8,312.8Q733.7,318.1 732.4,320.7Q731.1,323.3 730.2,326.1Q729.2,328.9 728.8,332.2Q728.4,335.4 728.4,339.0Q728.5,342.5 728.3,346.0Q728.1,349.4 727.2,352.5Q726.3,355.6 724.3,358.2Q722.4,360.8 719.9,364.2Q717.4,367.6 715.3,371.4Q713.1,375.1 712.1,378.8Q711.2,382.4 711.6,385.8Q712.1,389.3 713.4,392.6Q714.7,395.9 715.8,399.9Q716.8,404.0 716.8,408.0Q716.8,412.0 715.4,415.5Q714.1,418.9 712.2,422.9Q710.3,426.8 709.1,431.0Q707.8,435.3 708.1,439.2Q708.4,443.1 710.1,447.4Q711.8,451.6 714.0,456.8Q716.1,462.0 717.1,466.9Q718.1,471.7 717.1,475.7Q716.1,479.7 713.2,483.1Q710.3,486.4 707.0,491.0Q703.6,495.6 701.5,500.7Q699.4,505.9 699.5,510.5Q699.6,515.1 701.6,519.1Q703.7,523.1 706.1,527.9Q708.6,532.6 709.7,537.9Q710.8,543.2 709.7,547.7Q708.5,552.2 705.7,557.2Q703.0,562.2 700.3,568.2L697.7,574.2"/>
<path stroke="#8a613e" stroke-width="4.3" d="M705.4,246.7Q704.4,249.9 703.9,251.5Q703.4,253.2 702.5,254.9Q701.6,256.6 700.2,258.4Q698.9,260.3 697.7,262.4Q696.5,264.5 696.1,266.7Q695.7,269.0 696.3,271.6Q697.0,274.3 698.1,277.9Q699.2,281.5 699.7,284.8Q700.3,288.2 699.5,290.9Q698.6,293.6 696.5,295.8Q694.3,298.1 691.7,300.8Q689.1,303.6 687.5,307.4Q685.8,311.2 685.8,314.9Q685.7,318.5 686.9,322.0Q688.0,325.5 689.0,330.0Q690.1,334.4 689.8,338.6Q689.4,342.8 687.5,347.0Q685.6,351.2 683.2,356.6Q680.7,361.9 679.4,367.1Q678.2,372.3 679.2,377.0Q680.2,381.6 683.2,385.7Q686.2,389.8 689.4,396.1Q692.7,402.4 694.3,408.4Q695.8,414.4 694.8,419.7Q693.9,425.0 691.2,429.9Q688.5,434.9 686.2,441.5Q684.0,448.2 683.9,454.6Q683.8,461.0 686.2,466.5Q688.7,472.1 691.9,479.4L695.2,486.7"/>
<path stroke="#86603d" stroke-width="3.4" d="M768.5,307.7Q769.4,311.5 769.8,314.4Q770.2,317.2 769.6,319.2Q769.0,321.3 767.5,322.8Q766.0,324.3 764.8,326.2Q763.6,328.1 763.4,330.9Q763.3,333.6 763.8,336.8Q764.2,340.0 763.6,342.6Q763.1,345.3 760.8,347.2Q758.5,349.1 755.6,352.6Q752.7,356.2 751.4,359.6Q750.0,363.0 751.1,366.0Q752.1,369.1 754.1,372.3Q756.1,375.6 756.7,379.6Q757.3,383.6 755.7,386.8Q754.2,390.1 752.4,394.3Q750.6,398.6 750.8,402.6Q751.0,406.5 753.4,411.1Q755.9,415.6 758.1,420.8Q760.3,426.0 759.7,430.3Q759.0,434.6 755.6,438.0Q752.1,441.5 749.0,447.4Q745.9,453.4 745.9,458.3Q746.0,463.3 748.8,467.5Q751.7,471.6 754.0,477.3Q756.4,483.0 755.6,488.1Q754.8,493.2 751.8,499.4Q748.8,505.6 747.4,512.0Q746.1,518.4 748.7,523.3Q751.4,528.2 756.3,534.5Q761.2,540.7 764.0,547.5L766.9,554.4"/>
<path stroke="#7f5a3b" stroke-width="3.4" d="M778.7,243.3Q784.3,243.5 787.1,243.5Q790.0,243.5 792.8,243.9Q795.6,244.2 798.3,245.2Q800.9,246.2 803.4,247.7Q805.9,249.1 808.3,250.9Q810.6,252.6 813.1,254.2Q815.5,255.7 818.2,257.1Q820.9,258.4 823.8,260.0Q826.7,261.7 829.5,263.6Q832.4,265.5 834.8,267.9Q837.2,270.2 838.9,273.0Q840.7,275.8 841.9,278.8Q843.2,281.8 844.3,285.6Q845.5,289.4 847.0,292.9Q848.6,296.4 850.7,299.3Q852.9,302.2 855.5,305.0Q858.1,307.7 860.6,311.0Q863.1,314.4 864.9,318.2Q866.7,322.0 867.8,326.1Q868.8,330.3 869.5,335.2Q870.1,340.1 871.0,344.9Q871.9,349.7 873.6,354.1Q875.3,358.4 878.0,362.3Q880.6,366.2 883.6,371.0Q886.7,375.7 889.2,381.0Q891.7,386.2 893.0,391.5Q894.4,396.9 894.5,402.2Q894.6,407.5 894.2,413.1Q893.7,418.7 893.7,425.1Q893.7,431.6 894.7,437.6Q895.7,443.5 897.8,449.2Q899.9,454.8 902.2,461.3Q904.5,467.8 906.1,474.5L907.6,481.2"/>
<path stroke="#86603d" stroke-width="3.3" d="M760.6,314.3Q758.8,321.4 757.2,324.4Q755.6,327.3 753.5,330.0Q751.3,332.6 749.3,335.7Q747.3,338.9 746.0,342.3Q744.7,345.7 744.0,349.1Q743.4,352.6 742.6,356.1Q741.9,359.6 740.5,363.1Q739.0,366.5 737.1,370.2Q735.1,373.8 733.6,377.4Q732.1,381.1 731.7,384.7Q731.4,388.2 732.1,392.0Q732.8,395.8 733.3,400.3Q733.9,404.8 733.2,408.6Q732.5,412.4 730.6,415.5Q728.7,418.6 726.6,422.0Q724.6,425.4 723.7,429.3Q722.8,433.2 723.1,437.2Q723.5,441.2 723.8,445.6Q724.2,450.1 723.2,453.9Q722.3,457.6 719.9,461.2Q717.5,464.8 715.0,469.2Q712.6,473.7 711.8,477.8Q711.0,482.0 712.2,485.7Q713.4,489.4 715.2,493.8Q717.1,498.2 717.6,502.8Q718.1,507.4 716.6,511.1Q715.1,514.8 712.9,518.9Q710.8,523.0 710.0,527.4Q709.1,531.8 710.4,535.9Q711.7,539.9 713.7,545.2Q715.7,550.5 716.1,555.1Q716.6,559.8 714.5,563.4Q712.4,567.1 709.2,571.7Q706.0,576.3 704.3,581.4L702.5,586.5"/>
<path stroke="#93683f" stroke-width="3.3" d="M792.7,229.1Q800.1,228.6 803.8,228.8Q807.5,229.0 811.0,229.7Q814.5,230.5 817.9,231.7Q821.3,232.8 824.6,233.7Q827.9,234.7 831.4,235.2Q834.8,235.6 838.3,236.5Q841.9,237.3 845.4,238.5Q848.8,239.7 851.9,241.5Q855.0,243.3 857.6,245.6Q860.1,248.0 862.3,250.7Q864.4,253.5 866.6,256.6Q868.9,259.7 871.5,262.1Q874.1,264.5 877.1,266.6Q880.1,268.6 882.9,271.4Q885.8,274.1 888.0,277.3Q890.2,280.6 891.6,284.5Q893.0,288.4 894.1,292.8Q895.3,297.3 896.9,301.2Q898.6,305.2 901.2,308.4Q903.8,311.7 907.1,314.9Q910.4,318.2 913.4,322.5Q916.4,326.9 918.2,331.5Q920.1,336.1 920.7,340.8Q921.2,345.5 921.3,350.6Q921.4,355.7 922.0,361.3Q922.6,366.8 924.4,371.8Q926.2,376.8 928.6,382.2Q931.1,387.5 933.1,393.5Q935.1,399.4 935.7,405.3Q936.3,411.2 935.4,417.1Q934.6,423.0 933.4,430.2L932.2,437.4"/>
<path stroke="#7f5a3b" stroke-width="3.0" d="M772.9,275.5Q772.4,276.8 771.2,278.1Q770.0,279.3 768.7,281.0Q767.4,282.7 767.2,283.9Q767.1,285.1 768.4,285.6Q769.8,286.1 771.8,286.7Q773.8,287.3 774.9,289.1Q776.1,290.9 775.8,292.5Q775.5,294.1 774.8,296.0Q774.1,297.8 774.5,299.8Q774.9,301.7 776.6,304.4Q778.3,307.0 780.0,309.8Q781.7,312.7 781.5,315.1Q781.4,317.6 779.2,319.7Q777.0,321.7 774.4,325.4Q771.9,329.2 771.2,332.6Q770.5,336.0 772.1,338.6Q773.8,341.2 776.0,344.1Q778.2,346.9 778.8,350.6Q779.3,354.3 777.8,358.1Q776.4,361.9 774.9,366.4Q773.4,370.9 774.1,374.8Q774.9,378.6 778.0,382.5Q781.2,386.5 784.2,391.8Q787.3,397.2 787.5,401.8Q787.7,406.4 784.9,410.2Q782.1,414.0 778.9,419.2Q775.8,424.4 775.1,429.7Q774.5,435.0 776.8,439.5Q779.0,443.9 781.4,449.7Q783.8,455.6 783.4,461.0Q783.0,466.4 779.9,472.4Q776.8,478.4 774.1,485.3Q771.4,492.2 772.2,498.0Q773.1,503.8 777.3,508.7Q781.5,513.7 785.5,521.4Q789.6,529.2 790.0,535.9Q790.3,542.6 787.1,548.2Q783.8,553.9 780.5,561.1Q777.2,568.4 777.3,575.4Q777.4,582.5 780.8,589.5Q784.2,596.4 787.0,604.8Q789.9,613.2 788.7,620.4L787.5,627.5"/>
<path stroke="#93683f" stroke-width="3.5" d="M799.6,265.4Q802.7,271.6 804.6,274.4Q806.6,277.1 808.7,279.7Q810.7,282.3 812.5,285.2Q814.3,288.1 815.7,291.5Q817.0,294.9 818.1,298.5Q819.2,302.1 820.5,305.5Q821.8,308.9 823.7,311.7Q825.7,314.5 828.4,316.8Q831.0,319.1 833.8,322.3Q836.6,325.6 838.8,328.9Q841.0,332.2 842.2,335.7Q843.3,339.1 843.7,342.6Q844.0,346.1 844.3,349.9Q844.6,353.6 845.5,357.4Q846.4,361.2 848.2,364.5Q849.9,367.7 852.0,371.3Q854.1,375.0 855.7,378.8Q857.2,382.5 857.6,386.3Q858.0,390.0 857.5,394.5Q857.0,399.0 856.6,403.8Q856.2,408.6 856.8,412.7Q857.5,416.8 859.6,420.1Q861.8,423.3 864.7,426.3Q867.7,429.4 870.2,433.7Q872.7,438.1 873.8,442.3Q874.8,446.5 874.5,450.5Q874.1,454.5 873.3,458.9Q872.6,463.3 872.7,467.9Q872.8,472.6 874.3,476.5Q875.9,480.3 878.4,484.9Q880.9,489.5 882.9,494.3Q884.9,499.1 885.1,503.6Q885.4,508.1 883.8,512.2Q882.3,516.3 880.1,521.7Q877.9,527.1 876.7,532.5Q875.6,537.8 876.5,542.3Q877.4,546.8 880.0,550.6Q882.5,554.4 885.1,559.3Q887.8,564.1 888.8,569.2Q889.9,574.4 888.9,578.9Q887.9,583.5 885.9,588.7L883.8,594.0"/>
<path stroke="#8a613e" stroke-width="4.1" d="M769.2,278.8Q769.6,280.6 770.3,281.6Q771.0,282.6 772.5,283.9Q774.0,285.2 775.0,286.7Q776.1,288.2 775.6,289.6Q775.0,291.1 773.4,292.9Q771.7,294.7 770.8,297.2Q769.9,299.6 770.7,301.3Q771.6,303.0 773.1,304.5Q774.5,306.1 774.8,308.4Q775.1,310.7 774.2,313.7Q773.2,316.8 773.0,319.6Q772.8,322.4 774.7,324.5Q776.6,326.6 779.3,330.2Q782.0,333.8 782.8,337.2Q783.7,340.5 782.0,343.3Q780.2,346.0 778.1,349.6Q776.0,353.1 776.1,356.8Q776.2,360.4 778.1,363.9Q779.9,367.4 780.6,371.6Q781.3,375.7 779.4,379.8Q777.5,383.9 775.2,389.0Q772.9,394.2 773.4,398.5Q773.9,402.8 777.2,406.5Q780.5,410.1 783.2,415.8Q786.0,421.5 785.3,426.2Q784.6,430.9 781.9,435.3Q779.2,439.7 778.2,445.3Q777.3,450.9 779.4,456.1Q781.6,461.4 783.8,467.7Q786.0,474.1 784.6,479.4Q783.3,484.7 779.3,490.8Q775.2,496.8 772.9,503.7Q770.6,510.5 772.7,516.0Q774.8,521.5 778.7,527.7Q782.6,533.9 783.5,540.8Q784.4,547.7 781.5,553.5Q778.6,559.3 776.1,567.0Q773.6,574.7 775.3,581.1Q776.9,587.6 780.9,595.8L784.9,604.1"/>
<path stroke="#86603d" stroke-width="4.0" d="M765.8,293.7Q767.8,299.3 768.1,301.9Q768.4,304.6 768.2,307.2Q768.0,309.8 767.6,312.5Q767.3,315.2 767.5,318.0Q767.6,320.9 768.3,324.0Q768.9,327.1 769.6,330.2Q770.3,333.4 770.3,336.5Q770.3,339.6 769.5,342.4Q768.6,345.3 767.2,349.1Q765.9,352.9 765.0,356.6Q764.1,360.3 764.3,363.7Q764.5,367.0 765.9,370.0Q767.2,373.0 768.8,376.3Q770.4,379.6 771.1,383.5Q771.9,387.4 771.4,391.0Q771.0,394.5 769.9,398.1Q768.8,401.8 768.2,405.8Q767.6,409.9 768.3,413.6Q768.9,417.3 770.5,421.7Q772.0,426.1 773.3,430.7Q774.6,435.3 774.5,439.5Q774.4,443.6 772.6,447.2Q770.7,450.8 768.3,455.2Q765.8,459.5 764.2,464.3Q762.5,469.2 762.7,473.5Q762.9,477.8 764.5,481.8Q766.1,485.8 767.6,490.6Q769.0,495.4 769.0,500.1Q769.0,504.9 767.3,509.2Q765.6,513.6 763.5,519.0Q761.4,524.3 760.6,529.4Q759.7,534.5 760.9,539.0Q762.2,543.5 764.6,548.9Q767.1,554.4 768.9,560.4Q770.8,566.4 770.3,571.6Q769.9,576.8 767.3,581.1Q764.6,585.4 761.4,590.6Q758.2,595.7 756.4,601.5L754.6,607.3"/>
<path stroke="#8a613e" stroke-width="3.6" d="M761.8,230.4Q754.3,231.8 750.8,233.2Q747.3,234.6 744.2,236.9Q741.0,239.2 738.0,241.6Q735.0,244.0 731.7,245.3Q728.3,246.5 724.3,246.7Q720.3,246.9 716.2,248.1Q712.1,249.4 708.8,251.5Q705.6,253.6 703.5,256.5Q701.4,259.4 699.8,262.8Q698.2,266.1 696.0,269.2Q693.7,272.4 690.5,274.3Q687.3,276.2 684.1,278.9Q680.8,281.5 679.0,284.7Q677.1,287.9 676.7,292.6Q676.3,297.2 675.9,302.2Q675.5,307.1 673.3,310.2Q671.1,313.2 666.9,314.7Q662.8,316.1 658.6,319.2Q654.4,322.4 652.3,326.3Q650.2,330.2 650.3,334.3Q650.5,338.4 650.8,343.3Q651.2,348.3 649.5,352.3Q647.8,356.3 644.1,360.2Q640.5,364.2 637.5,369.0Q634.4,373.8 634.4,378.4Q634.4,383.0 636.9,388.1Q639.5,393.2 641.7,399.7Q643.8,406.1 642.7,410.9Q641.7,415.8 637.8,419.4Q633.9,423.0 630.4,428.6Q626.9,434.3 626.7,439.7Q626.6,445.2 629.2,450.6L631.8,456.0"/>
<path stroke="#86603d" stroke-width="3.6" d="M768.7,227.7Q775.6,228.3 778.9,229.0Q782.2,229.7 785.4,230.7Q788.6,231.7 791.6,233.0Q794.6,234.3 797.6,235.7Q800.6,237.1 803.7,238.2Q806.7,239.2 809.7,240.1Q812.8,241.0 815.9,241.9Q818.9,242.9 821.8,244.4Q824.7,245.9 827.3,247.9Q829.9,249.9 832.3,252.5Q834.6,255.0 836.9,257.7Q839.1,260.4 841.5,262.8Q843.8,265.2 846.5,267.1Q849.2,269.1 852.3,270.6Q855.3,272.1 858.5,274.1Q861.8,276.1 864.8,278.7Q867.8,281.3 870.4,284.2Q872.9,287.2 874.7,290.5Q876.6,293.7 878.0,297.2Q879.4,300.7 880.6,304.5Q881.9,308.3 883.5,312.2Q885.1,316.1 887.2,319.7Q889.4,323.2 891.9,326.7Q894.5,330.3 897.0,334.3Q899.5,338.4 901.5,342.6Q903.5,346.9 904.7,351.3Q905.9,355.7 906.3,360.4Q906.7,365.1 906.8,370.7Q907.0,376.3 907.5,381.7Q908.0,387.2 909.3,392.1Q910.6,397.1 912.9,401.7Q915.1,406.2 917.9,410.6Q920.6,415.1 923.1,420.7Q925.7,426.3 927.4,432.1Q929.1,437.9 929.8,443.6Q930.4,449.4 930.2,455.1Q930.0,460.9 929.7,467.4Q929.3,473.8 929.6,480.4Q929.8,486.9 931.1,493.1Q932.3,499.3 934.4,505.5Q936.4,511.8 938.6,519.0L940.8,526.2"/>
<path stroke="#7f5a3b" stroke-width="4.3" d="M809.5,265.2Q810.0,269.3 809.5,271.4Q809.1,273.4 808.2,275.5Q807.4,277.5 806.7,280.3Q806.1,283.1 806.1,285.7Q806.2,288.3 806.9,290.8Q807.6,293.2 808.4,295.7Q809.2,298.3 809.4,301.2Q809.7,304.1 809.1,307.3Q808.5,310.5 807.5,314.1Q806.5,317.7 805.8,321.2Q805.2,324.7 805.7,327.9Q806.2,331.1 807.8,334.0Q809.5,336.9 811.6,340.8Q813.6,344.8 815.0,349.0Q816.3,353.3 816.1,357.1Q815.9,360.9 814.4,364.3Q812.9,367.7 811.0,371.5Q809.2,375.3 808.3,379.8Q807.5,384.3 808.0,388.4Q808.6,392.4 810.1,397.1Q811.6,401.8 812.6,406.8Q813.7,411.8 813.1,416.4Q812.6,420.9 810.3,425.1Q808.1,429.2 805.3,434.9Q802.4,440.6 800.6,446.1Q798.9,451.6 799.2,456.5Q799.6,461.5 801.8,466.0Q804.0,470.6 806.6,476.4Q809.2,482.2 810.3,488.3Q811.4,494.4 810.2,499.8Q809.0,505.1 806.2,509.8L803.5,514.6"/>
<path stroke="#7f5a3b" stroke-width="3.8" d="M686.7,283.7Q682.7,291.8 680.5,296.1Q678.3,300.4 675.6,304.0Q672.9,307.6 670.0,310.9Q667.2,314.3 664.8,318.0Q662.5,321.8 661.1,326.1Q659.7,330.4 658.9,335.2Q658.1,340.0 657.0,344.3Q655.8,348.5 653.4,351.5Q651.0,354.6 647.5,356.7Q644.1,358.9 640.7,362.6Q637.3,366.3 635.4,370.1Q633.5,373.8 633.5,377.5Q633.4,381.1 634.2,384.9Q635.0,388.6 635.0,392.7Q635.0,396.8 633.4,399.9Q631.7,403.0 629.2,406.9Q626.6,410.7 625.1,414.7Q623.6,418.6 624.4,422.0Q625.3,425.3 628.1,428.9Q631.0,432.5 633.7,437.0Q636.4,441.4 636.8,444.9Q637.2,448.4 635.1,451.2Q632.9,453.9 629.9,457.7Q627.0,461.4 625.9,465.9L624.7,470.4"/>
<path stroke="#9c6c43" stroke-width="3.1" d="M795.7,256.6Q789.4,259.0 786.1,261.3Q782.7,263.6 780.2,266.4Q777.6,269.2 776.5,272.2Q775.4,275.2 775.2,278.4Q774.9,281.5 774.5,284.6Q774.0,287.8 772.4,290.9Q770.8,294.0 768.5,297.2Q766.2,300.4 764.4,303.7Q762.7,306.9 762.6,310.3Q762.5,313.6 763.9,318.1Q765.2,322.7 766.5,327.7Q767.7,332.7 767.0,336.4Q766.3,340.1 763.3,342.3Q760.3,344.5 756.3,346.6Q752.4,348.7 749.7,352.6Q746.9,356.4 746.5,360.2Q746.2,363.9 747.3,367.6Q748.3,371.3 748.7,375.9Q749.0,380.4 747.0,383.7Q745.1,386.9 741.4,391.3Q737.7,395.6 734.7,400.1Q731.7,404.7 731.7,408.7Q731.7,412.8 734.6,416.2Q737.6,419.7 741.2,425.5Q744.8,431.3 746.1,436.5Q747.3,441.6 745.0,445.1Q742.7,448.6 738.7,451.4Q734.6,454.2 732.0,459.3Q729.4,464.3 730.0,468.6Q730.7,472.9 733.7,478.1Q736.6,483.3 738.6,488.9Q740.6,494.5 738.9,498.6Q737.3,502.8 732.4,506.9Q727.6,510.9 722.8,517.3Q718.1,523.6 717.1,528.8Q716.1,534.1 719.6,537.9Q723.1,541.8 728.4,546.4Q733.6,551.0 736.5,557.2Q739.4,563.3 737.8,567.9Q736.3,572.5 732.1,577.0Q727.9,581.4 725.1,587.8Q722.4,594.1 724.1,598.9L725.8,603.7"/>
<path stroke="#8c6340" stroke-width="3.3" d="M719.0,282.5Q722.3,289.8 722.7,294.2Q723.1,298.5 722.4,302.6Q721.7,306.7 721.5,310.8Q721.4,315.0 723.0,319.4Q724.7,323.9 727.0,328.8Q729.3,333.7 729.6,337.8Q729.9,342.0 727.2,345.0Q724.5,348.0 720.7,352.2Q717.0,356.4 715.6,360.8Q714.2,365.1 716.0,368.3Q717.9,371.6 720.3,375.2Q722.7,378.8 722.4,382.5Q722.0,386.2 719.0,390.5Q716.0,394.8 714.0,399.1Q712.1,403.5 714.3,406.4Q716.5,409.4 721.5,413.8Q726.5,418.1 729.4,423.0Q732.2,427.8 729.8,430.5Q727.4,433.2 722.1,435.5Q716.8,437.8 714.1,442.1Q711.3,446.4 713.7,449.2Q716.0,451.9 720.0,456.2Q723.9,460.6 723.7,464.0Q723.6,467.5 718.3,470.2Q713.1,473.0 707.8,477.8Q702.6,482.6 703.3,485.6L704.0,488.6"/>
<path stroke="#8f6541" stroke-width="3.2" d="M850.3,263.4Q861.9,269.1 866.8,272.2Q871.8,275.4 875.8,278.9Q879.8,282.5 883.1,286.9Q886.4,291.2 889.4,295.0Q892.5,298.8 895.8,301.3Q899.1,303.7 902.7,305.3Q906.2,306.9 909.2,309.3Q912.2,311.8 913.7,314.8Q915.3,317.8 915.2,321.3Q915.2,324.9 914.7,328.3Q914.2,331.7 914.7,334.1Q915.3,336.4 917.1,338.5Q919.0,340.6 920.9,345.2Q922.7,349.7 922.6,353.8Q922.5,358.0 919.6,360.1L916.8,362.2"/>
<path stroke="#8f6541" stroke-width="4.1" d="M806.2,275.1Q809.3,278.7 811.7,279.5Q814.1,280.2 816.8,280.7Q819.6,281.1 822.1,282.4Q824.6,283.7 826.3,285.9Q828.0,288.1 829.0,290.6Q830.0,293.2 831.1,296.1Q832.1,299.1 833.9,301.2Q835.8,303.4 838.6,305.6Q841.5,307.8 844.8,310.4Q848.0,313.0 850.4,315.8Q852.8,318.7 853.5,321.8Q854.1,324.9 853.1,328.2Q852.1,331.4 850.7,336.1Q849.3,340.7 849.0,345.1Q848.7,349.6 850.4,352.6Q852.2,355.6 855.3,357.7Q858.4,359.8 861.4,362.8Q864.4,365.8 865.7,369.6Q867.1,373.4 866.5,377.6Q865.9,381.8 864.6,387.2Q863.3,392.7 863.3,397.4Q863.3,402.0 865.8,405.3Q868.3,408.6 872.8,411.5Q877.4,414.4 881.9,419.4Q886.5,424.4 888.9,429.2Q891.3,434.1 890.4,438.5Q889.6,442.9 886.7,447.0Q883.8,451.2 881.3,457.3Q878.8,463.4 878.8,468.7Q878.8,474.0 881.7,478.0Q884.7,482.0 888.6,487.1Q892.5,492.2 894.8,497.9Q897.1,503.6 896.1,508.6Q895.1,513.7 891.5,519.8Q887.9,525.9 884.5,533.3Q881.0,540.7 880.6,546.9Q880.2,553.0 883.8,557.5L887.3,562.0"/>
<path stroke="#93683f" stroke-width="3.2" d="M819.3,236.3Q823.3,237.1 825.4,237.3Q827.4,237.6 829.5,238.1Q831.5,238.6 833.4,239.5Q835.3,240.4 836.9,242.3Q838.4,244.1 839.7,246.4Q841.0,248.6 842.5,250.5Q843.9,252.3 846.0,253.3Q848.0,254.4 850.6,254.9Q853.3,255.4 856.0,257.0Q858.7,258.6 860.8,260.9Q862.9,263.1 864.1,265.8Q865.3,268.4 866.1,271.3Q866.9,274.2 868.1,277.5Q869.3,280.8 871.3,283.6Q873.3,286.3 875.9,289.7Q878.4,293.0 880.5,296.6Q882.7,300.2 883.5,304.0Q884.4,307.8 884.2,312.0Q883.9,316.2 883.5,321.6Q883.1,326.9 883.8,331.7Q884.5,336.5 886.7,340.4Q888.9,344.4 891.9,348.2Q895.0,351.9 897.4,357.1Q899.9,362.4 900.9,367.6Q901.8,372.9 901.5,378.3Q901.3,383.8 901.1,390.1Q900.9,396.5 902.1,402.3Q903.2,408.1 906.0,413.5Q908.8,419.0 911.9,425.8Q915.0,432.5 916.9,439.3Q918.7,446.0 918.4,452.5Q918.0,459.0 916.2,465.7Q914.5,472.3 913.1,480.5L911.8,488.7"/>
<path stroke="#7f5a3b" stroke-width="3.6" d="M838.0,307.0Q846.7,311.4 851.0,313.4Q855.3,315.5 859.1,318.3Q862.9,321.1 866.1,325.0Q869.2,328.8 872.1,332.6Q875.0,336.4 878.5,338.8Q882.0,341.2 886.4,342.0Q890.8,342.8 895.4,344.6Q900.1,346.3 903.7,349.1Q907.4,351.8 909.5,355.2Q911.5,358.6 912.5,362.3Q913.5,366.0 915.0,370.1Q916.5,374.1 919.4,376.6Q922.3,379.0 925.8,382.2Q929.3,385.3 931.6,388.8Q933.9,392.3 933.7,396.0Q933.6,399.6 932.0,405.1Q930.4,410.6 929.7,415.3Q929.1,420.0 931.2,422.8Q933.3,425.6 937.5,427.5Q941.6,429.3 943.3,433.8Q944.9,438.3 945.4,442.3Q945.8,446.4 945.0,449.8Q944.1,453.2 942.0,458.1Q939.8,463.0 940.5,466.8Q941.2,470.7 944.4,475.3Q947.6,480.0 948.5,485.8L949.4,491.7"/>
<path stroke="#8c6340" stroke-width="4.0" d="M797.9,227.1Q799.4,230.9 800.5,232.8Q801.6,234.7 802.8,236.8Q803.9,238.8 804.7,241.0Q805.4,243.1 805.5,245.7Q805.6,248.2 805.3,251.3Q805.1,254.4 805.2,257.3Q805.3,260.2 806.4,262.6Q807.4,264.9 809.3,266.9Q811.2,268.8 813.2,271.2Q815.2,273.7 816.4,276.7Q817.7,279.7 817.9,282.7Q818.2,285.6 818.0,288.7Q817.8,291.7 818.1,295.1Q818.4,298.5 819.7,301.8Q821.0,305.0 822.7,308.7Q824.5,312.4 825.7,316.2Q826.9,319.9 826.7,323.5Q826.5,327.0 825.1,330.5Q823.7,334.0 822.3,338.7Q820.9,343.5 820.7,347.7Q820.4,351.9 821.8,355.6Q823.1,359.3 825.1,362.8Q827.2,366.3 828.4,370.9Q829.7,375.5 829.5,379.8Q829.2,384.1 828.0,388.9Q826.8,393.6 826.0,398.7Q825.3,403.7 826.2,408.2Q827.0,412.6 829.3,417.4Q831.6,422.1 833.8,427.8Q836.0,433.5 836.5,438.7Q837.0,444.0 835.4,448.6Q833.8,453.2 831.2,458.2Q828.6,463.2 827.0,469.2Q825.4,475.2 825.8,480.5Q826.2,485.9 828.1,490.8Q830.0,495.8 831.5,502.1Q833.0,508.4 832.5,514.2Q832.0,519.9 829.7,525.7Q827.4,531.5 825.0,538.3Q822.6,545.1 822.1,551.3Q821.5,557.6 823.5,563.2Q825.4,568.8 828.4,575.6L831.4,582.4"/>
<path stroke="#7f5a3b" stroke-width="3.6" d="M851.2,258.8Q853.8,268.1 853.9,273.4Q854.0,278.8 854.1,284.0Q854.2,289.2 856.1,292.9Q858.1,296.7 862.1,299.0Q866.1,301.4 870.1,305.7Q874.1,310.1 875.5,314.2Q876.9,318.4 875.9,322.2Q874.8,326.1 874.1,330.3Q873.3,334.5 875.1,338.1Q876.9,341.7 880.1,345.9Q883.3,350.2 884.3,354.1Q885.4,358.0 882.7,361.4Q879.9,364.7 876.1,370.5Q872.2,376.4 871.7,380.4Q871.1,384.4 875.1,386.2Q879.1,388.1 883.9,391.4Q888.7,394.8 889.6,398.5Q890.4,402.2 887.2,404.8Q883.9,407.4 881.1,411.7Q878.4,416.0 880.3,418.6Q882.3,421.2 887.5,425.9Q892.7,430.6 895.1,435.1Q897.5,439.5 893.5,441.2Q889.4,442.8 882.2,445.2Q874.9,447.7 871.4,451.2L867.8,454.7"/>
<path stroke="#93683f" stroke-width="3.2" d="M748.3,262.4Q748.8,268.6 749.0,272.7Q749.3,276.8 748.3,279.7Q747.3,282.7 745.0,284.5Q742.7,286.4 740.4,288.3Q738.0,290.1 736.7,293.0Q735.5,295.9 735.3,299.6Q735.1,303.3 734.4,306.7Q733.6,310.0 731.2,312.1Q728.7,314.2 725.0,317.5Q721.4,320.8 718.9,324.3Q716.3,327.8 716.4,331.2Q716.6,334.5 718.6,337.7Q720.6,340.9 722.0,345.6Q723.4,350.3 722.3,353.7Q721.2,357.1 718.5,359.9Q715.9,362.7 714.3,366.6Q712.8,370.6 713.9,374.6Q715.0,378.5 717.3,383.9Q719.6,389.2 719.9,393.6Q720.3,397.9 717.1,400.7Q713.9,403.5 709.2,407.6Q704.5,411.7 702.0,416.6Q699.5,421.5 700.9,425.4Q702.4,429.3 705.7,433.0Q709.0,436.8 710.3,441.9Q711.7,447.0 709.4,450.7Q707.2,454.5 703.9,460.2Q700.7,465.8 700.4,470.6Q700.1,475.5 704.0,479.3Q707.8,483.2 712.5,489.7Q717.2,496.1 718.2,501.4Q719.3,506.6 715.5,510.3Q711.7,514.0 706.8,519.5Q701.9,525.0 700.6,530.9Q699.3,536.7 702.7,540.7Q706.1,544.8 710.3,550.4Q714.5,556.0 714.9,561.4Q715.2,566.8 711.2,572.4L707.2,577.9"/>
<path stroke="#a57246" stroke-width="3.5" d="M716.9,314.6Q715.1,321.0 714.0,323.3Q713.0,325.7 711.0,325.9Q709.1,326.1 706.0,324.8Q702.9,323.4 699.7,323.5Q696.5,323.6 694.3,325.2Q692.2,326.8 691.3,329.1Q690.4,331.4 689.6,334.0Q688.9,336.5 686.7,338.4Q684.6,340.4 681.2,342.4Q677.7,344.5 674.7,346.9Q671.7,349.4 671.1,352.4Q670.4,355.4 672.2,359.0Q674.0,362.6 675.9,368.5Q677.8,374.3 677.2,378.1Q676.6,381.8 673.0,383.4Q669.3,385.0 665.0,387.0Q660.6,389.0 658.5,392.8Q656.4,396.7 657.2,400.9Q658.1,405.1 659.4,410.9Q660.8,416.7 659.4,420.9Q658.0,425.0 653.2,427.9Q648.3,430.7 642.7,435.9Q637.1,441.2 634.7,446.3Q632.4,451.4 634.8,456.0Q637.2,460.6 641.5,466.4Q645.8,472.3 647.5,479.0Q649.2,485.8 646.2,490.2Q643.3,494.7 638.1,499.2Q633.0,503.8 630.3,510.1Q627.6,516.3 629.7,521.8Q631.8,527.2 636.2,535.7Q640.6,544.2 642.0,551.7Q643.5,559.1 639.2,563.9Q634.9,568.8 630.1,574.8L625.3,580.7"/>
<path stroke="#7c583a" stroke-width="3.2" d="M662.3,312.3Q652.5,320.9 647.5,324.2Q642.6,327.5 637.4,329.7Q632.2,331.8 629.8,334.8Q627.4,337.8 625.4,340.9Q623.4,344.1 621.7,347.6Q620.1,351.2 619.0,354.8Q617.8,358.5 616.9,362.4Q615.9,366.2 615.0,369.6Q614.0,373.0 613.1,374.9Q612.1,376.9 610.8,379.3Q609.5,381.7 608.3,385.3Q607.1,388.8 607.0,391.3Q606.9,393.8 608.0,393.8Q609.1,393.9 611.4,394.3L613.8,394.7"/>
<path stroke="#8f6541" stroke-width="3.5" d="M774.6,263.6Q778.0,262.2 780.9,262.0Q783.9,261.8 785.8,262.7Q787.8,263.7 787.0,265.6Q786.2,267.5 785.0,270.1Q783.8,272.8 784.8,274.1Q785.8,275.4 787.6,276.3Q789.3,277.3 788.7,280.1Q788.1,282.9 786.6,286.5Q785.0,290.2 786.7,291.5Q788.4,292.8 793.3,293.5Q798.2,294.2 800.9,297.0Q803.6,299.7 801.9,302.1Q800.3,304.5 798.8,307.5Q797.3,310.5 799.5,313.2Q801.8,315.9 804.1,319.4Q806.5,322.8 804.0,325.6Q801.5,328.4 797.4,334.1Q793.2,339.7 794.1,343.0Q795.0,346.2 800.5,348.1Q806.0,350.0 808.5,354.4Q811.0,358.9 808.3,362.2Q805.6,365.6 804.4,370.4Q803.2,375.2 807.4,379.5Q811.7,383.8 815.2,389.3Q818.7,394.8 815.1,398.3Q811.5,401.8 805.4,407.9Q799.3,413.9 799.6,418.8Q799.8,423.7 805.2,427.4Q810.6,431.1 811.9,436.8Q813.1,442.4 808.6,448.2Q804.1,453.9 802.7,459.9Q801.4,466.0 807.6,471.1Q813.7,476.2 818.7,483.9Q823.7,491.6 819.6,496.2Q815.5,500.9 808.5,507.2Q801.5,513.5 801.9,519.7Q802.4,525.8 807.9,532.2Q813.4,538.6 812.9,545.2Q812.4,551.8 805.3,559.3Q798.2,566.8 796.0,574.4Q793.9,582.0 801.3,587.4Q808.6,592.9 814.5,602.7L820.5,612.4"/>
<path stroke="#8f6541" stroke-width="3.1" d="M788.5,222.7Q780.5,225.1 776.7,226.6Q772.8,228.1 769.1,229.5Q765.4,231.0 761.6,232.4Q757.8,233.8 753.9,235.1Q750.0,236.3 746.1,237.6Q742.2,238.9 738.5,240.5Q734.7,242.2 731.5,244.3Q728.2,246.5 725.6,249.2Q722.9,251.9 720.8,255.5Q718.7,259.0 716.8,263.4Q715.0,267.7 712.8,271.3Q710.7,274.8 707.8,277.2Q705.0,279.6 701.5,280.9Q697.9,282.3 694.0,283.2Q690.0,284.2 686.3,286.6Q682.6,289.0 679.7,292.0Q676.8,295.1 675.1,298.6Q673.3,302.1 672.4,306.2Q671.5,310.3 670.6,315.1Q669.8,319.9 668.3,323.9Q666.8,328.0 664.0,330.9Q661.2,333.9 657.4,336.5Q653.5,339.2 649.3,343.2Q645.1,347.2 641.8,351.5Q638.4,355.8 636.7,360.2Q635.1,364.7 635.4,369.2Q635.7,373.7 637.4,378.1L639.0,382.5"/>
<path stroke="#ab784a" stroke-width="3.8" d="M749.9,317.5Q743.6,317.6 740.3,317.5Q737.1,317.4 734.2,318.5Q731.3,319.6 728.9,321.6Q726.4,323.7 723.9,325.4Q721.4,327.2 718.2,328.3Q715.1,329.3 711.6,330.9Q708.2,332.4 705.7,334.6Q703.3,336.9 702.4,339.9Q701.5,342.9 701.2,347.0Q700.9,351.0 699.5,354.2Q698.1,357.3 695.3,359.1Q692.5,360.9 689.9,363.5Q687.3,366.1 686.4,369.6Q685.5,373.1 685.8,377.8Q686.1,382.5 685.2,386.3Q684.3,390.1 681.0,392.5Q677.8,394.8 673.9,399.0Q670.0,403.1 668.4,407.5Q666.7,411.8 668.0,415.9Q669.3,419.9 671.0,424.9Q672.8,429.8 672.1,434.5Q671.5,439.1 668.8,443.6Q666.2,448.1 664.6,453.5Q663.1,458.9 664.7,463.5Q666.4,468.2 669.6,474.7Q672.8,481.2 673.6,487.0Q674.5,492.8 671.7,497.5Q668.8,502.2 665.2,508.8Q661.6,515.3 661.2,521.7Q660.9,528.1 664.1,533.2Q667.3,538.4 670.3,545.1Q673.4,551.9 673.0,558.2L672.5,564.5"/>
<path stroke="#7f5a3b" stroke-width="3.8" d="M803.5,260.8Q812.7,267.0 816.9,270.2Q821.2,273.4 824.9,277.0Q828.7,280.5 831.8,284.2Q835.0,288.0 837.9,292.6Q840.8,297.2 843.9,301.1Q847.0,305.1 850.5,308.2Q854.0,311.2 857.9,313.7Q861.7,316.2 865.4,318.9Q869.0,321.6 871.9,325.1Q874.9,328.5 877.2,332.4Q879.4,336.4 881.4,340.6Q883.4,344.7 885.9,348.1Q888.4,351.6 891.6,354.0Q894.8,356.5 898.4,359.7Q902.0,362.8 905.1,366.3Q908.2,369.7 909.9,373.3Q911.7,377.0 912.1,380.7Q912.5,384.5 912.4,388.7Q912.3,392.9 912.7,397.1Q913.1,401.4 914.8,404.7Q916.4,408.0 918.8,410.7Q921.2,413.5 923.3,417.3Q925.3,421.0 925.8,424.7Q926.4,428.4 925.5,432.3Q924.5,436.2 923.2,440.7Q921.8,445.2 921.5,449.1Q921.2,453.0 922.7,456.1Q924.2,459.2 926.8,462.5Q929.4,465.8 931.5,470.5Q933.6,475.2 933.7,479.3Q933.9,483.3 931.9,486.5Q929.9,489.7 927.0,492.8Q924.0,495.9 922.0,499.9L920.0,503.9"/>
<path stroke="#ab784a" stroke-width="3.9" d="M784.7,246.6Q784.4,252.4 783.8,255.6Q783.2,258.7 782.1,261.4Q780.9,264.2 779.7,266.9Q778.4,269.7 777.7,272.9Q777.1,276.1 777.1,279.8Q777.1,283.4 776.9,287.0Q776.8,290.7 775.7,293.7Q774.6,296.8 772.4,299.4Q770.2,302.0 767.9,305.8Q765.7,309.5 764.7,313.2Q763.7,316.8 764.2,320.3Q764.6,323.8 765.4,327.5Q766.1,331.2 765.9,335.1Q765.6,339.0 764.1,342.7Q762.6,346.4 761.0,350.6Q759.5,354.9 759.5,358.9Q759.5,362.8 761.0,367.0Q762.6,371.2 764.2,376.2Q765.8,381.3 765.7,385.6Q765.5,389.9 763.3,393.5Q761.1,397.0 758.5,401.5Q755.9,406.1 755.1,410.8Q754.3,415.6 755.6,419.7Q756.9,423.9 758.6,428.8Q760.3,433.8 760.3,438.6Q760.4,443.4 758.3,448.0Q756.2,452.7 754.0,458.5Q751.8,464.2 751.8,469.3Q751.9,474.3 754.6,478.5L757.4,482.6"/>
<path stroke="#7c583a" stroke-width="3.7" d="M827.0,261.6Q830.4,264.1 831.7,265.7Q832.9,267.3 834.1,268.9Q835.4,270.5 837.3,272.0Q839.2,273.5 841.7,275.0Q844.2,276.5 846.6,278.3Q849.0,280.1 850.3,282.3Q851.6,284.5 851.3,287.0Q850.9,289.6 849.6,293.1Q848.2,296.5 847.1,300.7Q846.1,304.9 846.7,307.8Q847.3,310.7 849.6,312.3Q852.0,313.9 855.1,315.2Q858.2,316.5 860.4,319.3Q862.6,322.2 862.9,325.3Q863.2,328.4 862.2,332.6Q861.3,336.9 860.7,341.0Q860.2,345.2 861.7,348.3Q863.1,351.4 866.8,354.0Q870.4,356.6 874.7,361.1Q878.9,365.6 881.4,370.1Q883.9,374.5 883.3,378.4Q882.7,382.4 879.6,385.9Q876.6,389.4 873.3,394.6Q870.0,399.8 869.0,404.9Q868.0,410.1 869.9,414.0Q871.9,418.0 875.3,421.9Q878.7,425.9 880.9,431.4Q883.2,436.9 882.3,441.7Q881.5,446.4 878.1,452.1Q874.7,457.7 871.2,464.4Q867.8,471.1 867.3,476.8Q866.7,482.4 870.1,486.8Q873.4,491.2 878.9,496.6Q884.4,502.0 888.6,509.4Q892.8,516.8 893.1,523.0Q893.4,529.2 889.7,534.1Q886.0,539.0 881.2,544.7Q876.3,550.3 873.7,557.5Q871.1,564.7 872.6,570.8Q874.0,576.8 878.1,583.6L882.2,590.5"/>
<path stroke="#86603d" stroke-width="3.9" d="M827.3,264.8Q829.2,269.5 829.7,272.2Q830.3,274.9 830.9,277.7Q831.4,280.5 832.4,283.0Q833.3,285.5 834.9,287.6Q836.6,289.6 838.8,291.5Q840.9,293.5 843.1,296.3Q845.2,299.1 846.6,302.0Q848.1,304.9 848.5,307.9Q849.0,310.9 848.9,313.9Q848.8,316.9 848.8,320.1Q848.9,323.3 849.6,326.5Q850.4,329.8 851.8,333.1Q853.3,336.4 854.8,339.9Q856.3,343.5 857.0,347.1Q857.8,350.6 857.3,354.1Q856.9,357.5 855.8,362.0Q854.6,366.4 853.8,370.9Q853.0,375.4 853.5,379.3Q853.9,383.2 855.8,386.6Q857.7,389.9 860.1,393.3Q862.6,396.7 864.4,401.3Q866.3,405.8 866.7,410.2Q867.0,414.5 866.2,418.5Q865.3,422.6 864.3,427.4Q863.3,432.1 863.3,436.8Q863.4,441.5 864.9,445.7Q866.4,449.9 868.7,455.3Q871.0,460.6 872.5,465.9Q874.0,471.2 873.7,476.1Q873.4,480.9 871.4,485.3Q869.3,489.6 866.7,495.4Q864.1,501.1 862.7,506.9Q861.3,512.7 862.0,517.8Q862.6,522.9 864.8,527.6Q867.0,532.2 869.2,538.0Q871.4,543.7 872.0,549.5Q872.5,555.4 871.1,560.6Q869.6,565.9 867.3,572.1Q864.9,578.3 863.4,584.6L862.0,591.0"/>
<path stroke="#7f5a3b" stroke-width="4.2" d="M751.9,299.1Q747.5,302.6 745.2,305.2Q742.9,307.7 741.8,310.2Q740.7,312.7 741.4,315.0Q742.1,317.3 743.7,319.5Q745.2,321.7 745.9,324.8Q746.6,327.9 745.7,330.5Q744.9,333.0 743.5,335.8Q742.1,338.5 741.8,341.5Q741.6,344.5 743.1,348.1Q744.7,351.7 746.6,355.9Q748.5,360.1 748.5,363.4Q748.6,366.8 745.9,369.2Q743.2,371.5 739.4,374.9Q735.7,378.3 733.7,382.4Q731.7,386.6 732.7,390.0Q733.6,393.3 736.1,396.4Q738.5,399.5 739.5,403.9Q740.5,408.3 738.7,411.9Q736.9,415.6 734.1,420.6Q731.3,425.6 730.7,430.0Q730.1,434.4 733.0,437.8Q735.9,441.2 740.2,446.8Q744.6,452.5 746.6,457.7Q748.6,463.0 746.4,466.9Q744.2,470.7 739.7,474.4Q735.3,478.1 732.7,483.9Q730.1,489.7 731.5,494.2Q732.9,498.7 736.5,503.6Q740.1,508.5 741.8,514.2Q743.4,519.9 740.8,524.3Q738.2,528.7 733.5,535.5Q728.8,542.4 726.6,548.8Q724.5,555.1 727.6,559.6Q730.6,564.1 736.8,569.1Q742.9,574.1 747.0,581.1L751.0,588.2"/>
<path stroke="#9c6c43" stroke-width="3.8" d="M746.0,253.9Q744.6,257.6 743.8,259.4Q743.1,261.3 741.9,263.1Q740.7,265.0 739.0,266.7Q737.3,268.4 735.6,270.4Q734.0,272.3 733.1,274.6Q732.3,276.9 732.3,280.2Q732.4,283.4 732.7,287.2Q733.1,290.9 732.7,294.1Q732.4,297.3 730.5,299.4Q728.7,301.6 725.5,303.0Q722.4,304.4 719.1,307.1Q715.8,309.9 713.8,313.2Q711.7,316.6 711.3,320.0Q711.0,323.4 711.7,326.9Q712.4,330.3 712.7,334.6Q713.0,338.9 711.7,342.5Q710.4,346.2 707.6,350.1Q704.8,354.0 702.0,358.5Q699.2,363.0 698.1,367.5Q697.0,371.9 698.2,376.1Q699.5,380.3 702.1,385.7Q704.7,391.0 706.7,397.2Q708.6,403.3 708.1,408.4Q707.6,413.4 704.5,417.3Q701.4,421.2 697.4,425.5Q693.4,429.8 690.9,435.7Q688.4,441.6 688.6,447.0Q688.8,452.4 690.9,458.0Q693.1,463.6 694.9,470.5Q696.7,477.5 696.0,483.4Q695.3,489.4 691.8,494.3Q688.2,499.3 683.7,506.8L679.2,514.3"/>
<path stroke="#cd9a62" stroke-width="3.0" d="M658.0,361.8Q658.2,369.2 656.9,372.4Q655.6,375.5 654.4,378.6Q653.2,381.8 653.5,385.6Q653.8,389.5 655.0,393.7Q656.2,398.0 655.9,401.6Q655.7,405.2 652.8,407.6Q649.8,409.9 645.9,414.3Q641.9,418.6 640.2,422.4Q638.6,426.2 640.6,429.1Q642.7,432.1 646.0,435.9Q649.3,439.6 649.9,443.7Q650.5,447.7 647.5,450.0Q644.4,452.3 641.0,456.4Q637.6,460.6 638.0,463.9Q638.3,467.2 642.5,471.7Q646.6,476.1 649.9,481.5L653.2,487.0"/>
<path stroke="#cd9a62" stroke-width="2.6" d="M865.7,316.4Q868.1,324.6 868.3,328.3Q868.5,332.0 867.7,335.5Q866.9,338.9 866.5,342.4Q866.1,346.0 866.8,349.8Q867.5,353.7 868.2,357.6Q868.9,361.5 868.1,364.9Q867.4,368.3 865.5,372.6Q863.7,377.0 863.1,381.1Q862.4,385.1 864.1,388.2Q865.9,391.3 868.3,394.8Q870.7,398.4 871.2,402.2Q871.8,406.0 870.4,409.4Q869.0,412.7 868.4,416.8Q867.8,420.9 869.7,424.3Q871.6,427.7 874.1,432.0Q876.6,436.3 876.5,439.9Q876.4,443.5 873.5,446.9Q870.6,450.3 868.4,455.1Q866.3,459.9 867.8,463.1Q869.3,466.3 872.6,469.3Q876.0,472.3 877.1,476.2Q878.2,480.1 876.1,483.7L873.9,487.4"/>
<path stroke="#cd9a62" stroke-width="3.2" d="M663.8,356.4Q666.1,364.5 667.0,368.5Q667.9,372.4 667.4,376.0Q666.9,379.7 664.9,383.1Q662.8,386.6 660.7,391.4Q658.6,396.2 658.1,400.3Q657.6,404.4 659.3,407.6Q661.0,410.9 663.4,413.9Q665.9,416.9 666.9,421.0Q668.0,425.0 666.9,428.7Q665.8,432.3 664.1,436.8Q662.4,441.4 662.5,445.2Q662.7,449.0 665.6,452.2Q668.4,455.3 672.2,460.3Q676.0,465.3 677.5,469.5Q679.0,473.8 676.6,476.9Q674.3,479.9 670.0,483.2Q665.6,486.5 662.9,491.3Q660.2,496.2 661.4,499.6Q662.6,503.0 666.3,505.9Q669.9,508.8 672.2,513.4Q674.4,518.0 672.7,521.2Q670.9,524.4 666.5,529.1Q662.0,533.7 659.2,538.5L656.3,543.4"/>
<path stroke="#c08a52" stroke-width="3.5" d="M855.1,379.6Q856.0,387.1 856.4,391.0Q856.8,394.8 856.7,398.4Q856.6,402.1 855.8,406.2Q855.1,410.3 854.1,414.5Q853.1,418.6 852.9,422.5Q852.6,426.4 853.5,429.8Q854.4,433.2 856.1,436.5Q857.8,439.7 859.3,444.0Q860.7,448.3 860.9,452.2Q861.1,456.0 860.0,459.4Q858.8,462.8 857.3,466.4Q855.8,470.0 855.3,473.9Q854.7,477.7 855.6,481.3Q856.5,484.9 858.1,489.4Q859.6,493.9 860.2,498.0Q860.8,502.2 859.4,505.5Q858.0,508.8 855.0,512.0Q852.0,515.2 849.2,519.5Q846.3,523.8 845.4,527.7Q844.5,531.5 845.9,534.8L847.3,538.1"/>
<path stroke="#c99760" stroke-width="3.4" d="M678.6,310.2Q682.4,316.6 683.3,320.4Q684.1,324.1 683.8,327.7Q683.5,331.2 683.2,335.0Q683.0,338.9 684.2,342.5Q685.3,346.2 687.6,350.6Q689.8,355.1 691.1,359.3Q692.4,363.5 691.0,366.8Q689.6,370.1 686.0,372.9Q682.3,375.7 679.1,380.1Q675.9,384.5 675.6,388.1Q675.3,391.7 677.5,394.7Q679.8,397.7 681.7,402.0Q683.5,406.3 682.4,409.7Q681.2,413.1 677.5,416.6Q673.7,420.0 670.7,423.9Q667.7,427.8 668.4,431.2Q669.1,434.6 672.9,439.4Q676.7,444.3 679.5,450.6Q682.4,457.0 680.6,460.4Q678.9,463.8 672.9,464.2L667.0,464.7"/>
<path stroke="#c08a52" stroke-width="3.1" d="M884.8,404.8Q886.9,411.6 888.2,415.4Q889.5,419.2 889.8,423.3Q890.1,427.4 889.1,430.9Q888.2,434.4 886.9,437.9Q885.6,441.4 885.4,445.2Q885.2,448.9 886.5,453.3Q887.7,457.7 889.4,462.3Q891.0,467.0 891.2,470.9Q891.3,474.9 889.0,477.8Q886.7,480.7 882.9,484.1Q879.0,487.6 876.2,492.1Q873.4,496.6 873.4,500.3Q873.4,504.0 875.8,507.0Q878.3,510.0 880.8,514.0Q883.4,518.0 883.4,521.9Q883.5,525.8 880.9,529.1Q878.2,532.3 875.2,537.0Q872.2,541.6 871.8,545.4Q871.4,549.3 874.7,552.0Q877.9,554.8 882.6,560.2Q887.2,565.7 889.5,570.4Q891.9,575.1 889.7,578.0Q887.4,581.0 882.1,583.0L876.8,585.0"/>
<path stroke="#c08a52" stroke-width="2.7" d="M686.2,347.5Q685.7,354.8 686.2,358.3Q686.8,361.8 687.8,365.5Q688.8,369.2 689.6,373.4Q690.3,377.6 690.1,381.4Q689.8,385.2 688.7,388.6Q687.5,392.0 686.2,395.3Q684.9,398.5 684.3,402.3Q683.7,406.1 684.1,410.0Q684.5,414.0 685.3,418.2Q686.1,422.5 686.2,426.4Q686.2,430.3 684.7,433.5Q683.2,436.7 680.5,440.2Q677.9,443.7 675.5,448.0Q673.1,452.2 672.3,456.0Q671.5,459.8 672.7,463.1Q673.8,466.5 675.9,469.9Q677.9,473.3 679.1,477.7Q680.3,482.2 679.5,485.7Q678.7,489.3 676.4,492.3Q674.1,495.4 672.0,499.5Q669.9,503.6 669.7,507.3Q669.5,511.0 671.4,514.5Q673.3,518.0 675.8,523.0Q678.3,528.1 679.2,532.4Q680.1,536.7 678.2,539.8L676.3,542.8"/>
<path stroke="#c48f57" stroke-width="3.4" d="M865.2,354.5Q862.8,362.1 861.2,366.0Q859.7,369.9 858.7,373.7Q857.8,377.4 858.0,380.9Q858.2,384.4 859.4,387.8Q860.5,391.1 861.3,395.4Q862.2,399.7 861.8,403.4Q861.4,407.1 859.9,410.3Q858.3,413.4 856.8,417.0Q855.4,420.5 855.2,424.1Q855.0,427.7 856.1,432.0Q857.1,436.3 857.9,440.6Q858.7,444.9 857.6,448.3Q856.6,451.7 853.6,454.4Q850.6,457.0 847.5,461.2Q844.3,465.4 843.1,469.2Q841.8,473.0 843.1,476.3Q844.3,479.6 846.4,483.3Q848.6,487.1 849.1,491.3Q849.7,495.6 847.7,498.5Q845.7,501.4 842.7,505.1Q839.6,508.8 838.1,512.7L836.7,516.5"/>
<path stroke="#cd9a62" stroke-width="3.4" d="M677.3,411.7Q678.0,418.5 678.9,421.8Q679.8,425.0 680.6,428.4Q681.3,431.8 681.5,435.3Q681.7,438.9 681.3,442.6Q680.9,446.3 680.7,450.1Q680.4,453.9 681.1,457.4Q681.8,460.8 683.6,464.0Q685.5,467.3 687.8,471.1Q690.1,475.0 691.7,478.7Q693.3,482.3 693.4,485.7Q693.4,489.1 692.0,492.3Q690.7,495.5 689.3,499.9Q687.8,504.4 687.7,508.6Q687.6,512.8 689.5,515.7Q691.4,518.7 694.5,521.2Q697.5,523.6 700.1,527.2Q702.7,530.8 703.5,534.3L704.3,537.8"/>
<path stroke="#c08a52" stroke-width="2.7" d="M844.4,333.5Q848.2,339.6 849.7,343.1Q851.2,346.7 851.7,350.4Q852.3,354.1 852.2,357.8Q852.1,361.5 852.2,365.4Q852.3,369.2 853.3,372.6Q854.3,376.0 856.2,380.1Q858.2,384.3 859.8,388.5Q861.5,392.7 861.6,396.5Q861.7,400.2 859.8,403.3Q857.9,406.3 855.0,409.9Q852.1,413.5 850.1,417.6Q848.0,421.8 848.1,425.3Q848.1,428.8 849.9,431.9Q851.6,435.0 853.2,439.3Q854.8,443.5 854.4,447.3Q853.9,451.2 851.2,454.0Q848.4,456.9 844.9,460.8Q841.5,464.8 839.7,468.5L838.0,472.2"/>
<path stroke="#c99760" stroke-width="3.0" d="M688.8,309.8Q690.0,317.4 690.3,321.2Q690.5,324.9 689.9,328.9Q689.3,332.9 688.3,337.2Q687.4,341.4 686.9,345.4Q686.5,349.4 687.3,352.8Q688.2,356.3 690.1,359.3Q692.0,362.4 693.8,366.6Q695.5,370.9 695.9,374.8Q696.3,378.7 695.2,382.1Q694.1,385.5 692.6,389.0Q691.2,392.5 690.8,396.3Q690.5,400.1 691.6,404.0Q692.7,407.9 694.1,412.4Q695.5,416.9 695.4,420.8Q695.4,424.7 693.1,427.6Q690.8,430.5 687.4,434.3Q684.0,438.2 681.7,442.3Q679.4,446.4 679.6,449.9Q679.8,453.5 681.9,456.7Q684.0,459.9 685.7,464.6Q687.4,469.3 686.7,473.0Q686.0,476.8 683.0,479.6Q680.1,482.3 677.1,486.3Q674.2,490.3 673.5,494.0Q672.7,497.7 674.6,501.6L676.5,505.4"/>
<path stroke="#c08a52" stroke-width="2.7" d="M887.7,397.1Q887.8,404.1 888.4,407.8Q889.1,411.5 890.5,415.3Q891.9,419.2 892.9,423.0Q894.0,426.8 893.3,430.2Q892.6,433.6 890.3,437.4Q887.9,441.1 885.8,445.6Q883.7,450.1 883.7,453.7Q883.8,457.2 886.3,459.9Q888.7,462.7 891.2,466.4Q893.8,470.1 894.0,473.9Q894.2,477.6 891.9,480.7Q889.6,483.8 887.3,487.9Q885.1,492.1 885.6,495.4Q886.2,498.8 889.4,503.0Q892.6,507.2 895.4,512.5Q898.1,517.7 897.0,521.2Q896.0,524.6 891.0,526.0Q886.1,527.4 880.9,531.5L875.7,535.5"/>
<path stroke="#b98450" stroke-width="3.0" d="M631.4,385.4Q631.3,393.4 631.7,397.1Q632.2,400.7 633.5,404.0Q634.8,407.3 636.7,410.4Q638.5,413.5 640.3,417.6Q642.0,421.8 642.9,425.7Q643.7,429.6 643.3,433.2Q642.9,436.8 641.8,440.1Q640.7,443.5 639.8,447.2Q638.9,451.0 639.1,454.6Q639.2,458.3 640.3,462.2Q641.4,466.2 642.8,470.5Q644.1,474.8 644.3,478.8Q644.6,482.7 643.1,486.0Q641.7,489.2 638.8,492.5Q635.9,495.7 633.0,500.0Q630.0,504.3 628.5,508.2Q627.0,512.1 627.6,515.5Q628.3,518.9 630.3,522.1Q632.4,525.2 634.4,529.9Q636.3,534.5 636.4,538.7Q636.5,542.9 634.4,545.9Q632.3,548.9 629.0,552.0Q625.6,555.0 623.9,558.9L622.1,562.8"/>
<path stroke="#cd9a62" stroke-width="2.7" d="M879.4,305.5Q880.4,312.3 880.8,315.8Q881.1,319.3 880.8,323.0Q880.6,326.7 879.8,330.5Q879.0,334.3 878.6,338.1Q878.2,341.8 878.9,345.2Q879.7,348.6 881.4,352.5Q883.2,356.4 884.8,360.6Q886.5,364.8 886.7,368.6Q887.0,372.3 885.4,375.3Q883.9,378.4 881.6,381.7Q879.3,385.0 878.0,389.1Q876.7,393.3 877.4,396.7Q878.0,400.1 879.9,403.4Q881.8,406.6 883.1,410.6Q884.4,414.6 883.7,418.0Q883.0,421.4 880.6,425.5Q878.2,429.5 876.1,434.0Q874.1,438.6 874.5,442.1Q874.8,445.7 877.9,448.2Q881.0,450.7 884.9,454.8Q888.8,458.8 890.8,463.0L892.7,467.1"/>
<path stroke="#c99760" stroke-width="2.8" d="M636.7,412.5Q633.1,418.2 630.8,422.0Q628.4,425.8 626.8,429.6Q625.3,433.5 625.4,436.8Q625.5,440.2 626.9,443.3Q628.3,446.3 629.2,449.9Q630.1,453.5 629.2,456.8Q628.4,460.2 626.1,464.0Q623.9,467.8 622.2,471.6Q620.5,475.3 621.2,478.6Q621.9,481.8 624.7,485.9Q627.6,490.0 630.3,495.3Q633.0,500.5 632.8,504.3Q632.6,508.1 628.9,510.0Q625.2,511.9 620.2,514.4Q615.3,516.9 613.0,520.8Q610.7,524.6 611.6,527.8Q612.6,531.1 615.0,535.1Q617.4,539.1 618.7,543.9L619.9,548.6"/>
<path stroke="#c48f57" stroke-width="3.5" d="M905.8,405.0Q906.1,413.0 904.9,416.4Q903.7,419.7 901.4,422.9Q899.1,426.0 897.3,430.1Q895.6,434.3 895.7,438.0Q895.7,441.7 896.8,445.0Q897.9,448.4 897.9,452.2Q898.0,455.9 896.5,460.0Q895.1,464.2 893.8,468.4Q892.5,472.5 893.7,475.9Q894.8,479.3 897.9,483.2Q901.0,487.0 903.1,491.4Q905.3,495.8 904.3,499.2Q903.2,502.5 900.4,505.6Q897.5,508.8 896.2,513.1Q895.0,517.5 896.9,520.6Q898.8,523.7 901.4,527.8Q904.1,531.9 903.9,535.5Q903.8,539.1 900.7,543.5Q897.6,547.9 895.4,553.0Q893.3,558.1 895.4,561.1Q897.6,564.1 902.8,566.6Q908.1,569.0 911.5,573.2Q914.9,577.4 913.7,580.8L912.5,584.2"/>
<path stroke="#c48f57" stroke-width="3.1" d="M678.6,303.9Q676.3,312.0 675.3,316.0Q674.3,320.0 674.3,323.8Q674.3,327.6 675.5,331.0Q676.7,334.5 678.3,338.8Q679.9,343.1 680.6,347.3Q681.3,351.5 680.5,355.1Q679.7,358.7 678.0,361.9Q676.4,365.2 675.3,369.1Q674.3,373.0 674.8,376.7Q675.4,380.4 676.8,384.8Q678.3,389.2 678.9,393.3Q679.6,397.4 678.2,400.7Q676.8,404.1 674.0,408.2Q671.2,412.4 669.0,417.0Q666.8,421.7 667.2,425.4Q667.5,429.2 670.3,432.1Q673.1,434.9 676.1,439.0Q679.1,443.1 680.1,447.1Q681.0,451.2 679.2,454.5Q677.5,457.7 675.2,462.0Q672.8,466.3 672.5,470.3Q672.3,474.4 674.9,477.4Q677.6,480.4 681.4,485.2L685.1,490.0"/>
<path stroke="#c99760" stroke-width="2.8" d="M875.3,403.8Q874.2,410.8 873.3,414.7Q872.5,418.6 871.9,422.7Q871.2,426.8 871.3,430.7Q871.4,434.5 872.2,438.0Q873.0,441.6 874.1,444.9Q875.3,448.3 876.0,452.1Q876.8,455.8 876.8,459.5Q876.7,463.2 876.0,467.3Q875.3,471.5 874.7,475.6Q874.0,479.8 874.2,483.5Q874.4,487.3 875.9,490.5Q877.3,493.8 879.6,497.7Q881.8,501.6 883.8,505.9Q885.8,510.1 886.4,514.0Q887.1,517.9 886.0,521.3Q885.0,524.7 883.0,527.8Q880.9,530.9 879.2,535.4Q877.6,539.9 877.4,543.9Q877.2,547.8 878.7,551.0Q880.2,554.2 882.4,557.9Q884.7,561.6 886.2,565.7L887.7,569.8"/>
<path stroke="#c08a52" stroke-width="2.9" d="M653.5,365.8Q654.4,374.1 654.6,378.3Q654.7,382.6 656.0,386.2Q657.2,389.8 659.9,392.9Q662.7,396.0 665.3,400.2Q667.9,404.3 668.6,408.2Q669.3,412.1 668.3,415.6Q667.3,419.2 666.8,423.3Q666.4,427.3 667.7,430.9Q669.1,434.5 670.9,438.6Q672.6,442.7 672.3,446.4Q672.1,450.1 669.9,454.8Q667.7,459.6 666.6,464.1Q665.5,468.7 667.6,471.7Q669.8,474.8 673.5,478.0Q677.2,481.3 678.8,485.5Q680.4,489.7 678.8,493.1Q677.3,496.4 675.5,500.6Q673.8,504.8 675.1,508.2Q676.4,511.6 679.6,516.3Q682.9,520.9 683.8,525.0Q684.7,529.1 681.4,531.9Q678.1,534.7 674.1,539.9Q670.0,545.1 669.9,549.0Q669.8,552.8 673.6,555.3Q677.3,557.9 680.1,562.5Q682.8,567.2 681.1,570.5Q679.3,573.7 675.7,578.1Q672.0,582.4 671.9,586.3L671.7,590.1"/>
<path stroke="#c48f57" stroke-width="3.5" d="M864.3,356.1Q865.1,363.6 865.9,367.9Q866.8,372.1 867.2,376.6Q867.7,381.1 867.1,385.0Q866.5,388.9 865.0,392.4Q863.6,395.8 862.0,399.3Q860.5,402.7 859.8,406.6Q859.1,410.5 859.5,414.7Q859.9,419.0 860.6,423.4Q861.3,427.8 861.0,431.8Q860.7,435.7 858.9,439.0Q857.0,442.2 854.2,446.5Q851.5,450.7 849.3,455.2Q847.2,459.7 847.1,463.6Q847.0,467.6 848.9,470.9Q850.8,474.2 853.3,478.0Q855.8,481.8 857.0,486.2Q858.3,490.6 857.4,494.2Q856.5,497.8 854.3,501.4Q852.2,504.9 850.7,509.4Q849.3,513.8 850.2,517.5Q851.0,521.1 853.9,525.1Q856.7,529.1 859.6,533.8Q862.5,538.6 863.2,542.6Q863.8,546.7 861.4,549.8Q859.0,552.9 855.2,556.9Q851.3,561.0 848.8,566.1Q846.2,571.3 846.9,575.1L847.5,578.9"/>
<path stroke="#c08a52" stroke-width="3.3" d="M667.1,367.7Q666.0,375.1 664.9,379.0Q663.8,382.8 662.3,386.8Q660.8,390.7 660.0,394.5Q659.2,398.3 659.7,401.8Q660.1,405.3 661.5,408.9Q662.9,412.5 663.8,416.9Q664.7,421.2 664.2,424.8Q663.6,428.5 661.9,431.6Q660.2,434.7 658.8,438.3Q657.4,442.0 657.5,445.5Q657.5,449.1 658.7,453.5Q659.9,457.8 660.4,462.0Q660.9,466.1 659.4,469.2Q657.9,472.4 654.8,475.9Q651.7,479.4 649.2,483.6Q646.7,487.9 646.8,491.5Q646.8,495.1 649.0,498.1Q651.2,501.2 653.3,505.6Q655.4,510.0 655.1,513.7Q654.8,517.5 652.3,520.3Q649.8,523.2 647.4,527.4Q645.0,531.6 645.3,535.2L645.5,538.7"/>
<path stroke="#b98450" stroke-width="3.3" d="M896.1,389.0Q894.5,396.8 893.4,400.8Q892.3,404.7 891.7,408.6Q891.2,412.5 891.8,416.1Q892.5,419.8 893.8,424.6Q895.1,429.4 895.8,433.9Q896.6,438.4 895.6,442.0Q894.7,445.7 892.3,448.6Q889.9,451.6 887.5,455.3Q885.1,459.0 884.3,463.0Q883.4,467.0 884.2,470.6Q884.9,474.2 885.9,478.4Q886.8,482.7 886.3,486.4Q885.7,490.2 883.3,494.1Q880.9,498.0 878.4,502.5Q875.8,507.1 875.3,511.0Q874.8,515.0 877.0,518.2Q879.2,521.4 882.5,525.7Q885.9,530.0 887.6,534.7Q889.4,539.3 888.2,542.7Q886.9,546.1 883.8,548.9Q880.7,551.6 878.6,556.1Q876.5,560.7 877.3,564.3Q878.1,567.9 881.0,572.0Q884.0,576.2 886.0,580.7Q888.1,585.3 886.9,588.8Q885.6,592.2 881.5,595.7Q877.4,599.2 873.6,604.6L869.8,609.9"/>
<path stroke="#c99760" stroke-width="2.7" d="M650.8,369.5Q650.4,377.2 650.7,381.1Q651.0,385.1 650.8,388.9Q650.5,392.6 649.1,396.0Q647.7,399.3 645.8,403.7Q643.8,408.2 642.9,412.4Q642.0,416.5 643.1,420.0Q644.2,423.5 646.3,426.6Q648.5,429.6 649.9,433.8Q651.3,437.9 650.8,441.5Q650.4,445.0 649.3,449.1Q648.2,453.2 648.6,457.0Q648.9,460.9 651.4,464.4Q653.9,467.9 656.8,472.1Q659.6,476.4 660.4,480.1Q661.2,483.9 659.2,487.2Q657.2,490.5 654.7,495.6Q652.2,500.7 652.1,505.0Q652.1,509.4 655.1,512.0Q658.1,514.5 661.8,517.7Q665.4,520.8 666.6,524.6Q667.8,528.4 666.3,532.8Q664.8,537.1 663.5,542.6Q662.2,548.1 664.3,551.4L666.4,554.6"/>
<path stroke="#cd9a62" stroke-width="3.4" d="M860.8,385.0Q863.2,392.2 863.9,396.4Q864.6,400.5 864.0,404.0Q863.4,407.4 861.7,410.4Q860.1,413.4 858.7,416.7Q857.2,420.0 857.0,423.5Q856.8,427.0 857.9,431.5Q859.0,435.9 860.0,440.3Q861.0,444.8 860.3,448.3Q859.5,451.8 856.4,454.0Q853.3,456.2 849.0,459.7Q844.6,463.1 841.5,467.0Q838.3,470.9 838.1,474.3Q837.8,477.7 840.2,480.8Q842.6,483.9 845.3,488.4Q847.9,492.9 848.2,497.1Q848.5,501.4 845.6,503.7Q842.7,506.0 838.3,509.1L833.9,512.3"/>
<path stroke="#c48f57" stroke-width="2.8" d="M689.1,359.8Q687.5,366.9 687.6,370.8Q687.6,374.7 688.4,378.8Q689.1,382.8 689.4,386.8Q689.8,390.7 688.7,394.3Q687.7,397.9 685.6,402.6Q683.5,407.4 682.1,412.0Q680.7,416.6 681.4,420.2Q682.2,423.9 685.0,426.7Q687.9,429.6 690.9,433.6Q693.9,437.6 694.9,441.7Q696.0,445.8 694.7,449.3Q693.4,452.7 691.7,456.7Q690.0,460.7 690.3,464.7Q690.5,468.6 693.2,472.4Q695.9,476.1 699.1,480.7Q702.3,485.2 703.0,489.2Q703.7,493.1 701.0,496.2Q698.2,499.3 694.2,504.5Q690.1,509.6 688.3,514.6Q686.4,519.6 688.6,522.6Q690.8,525.7 695.5,527.8Q700.1,529.9 703.3,534.4Q706.5,538.9 705.9,542.5Q705.2,546.1 702.0,550.6Q698.8,555.1 696.9,560.2L695.0,565.3"/>
<path stroke="#cd9a62" stroke-width="2.9" d="M924.9,416.3Q924.5,424.1 923.6,427.6Q922.7,431.1 920.4,434.3Q918.1,437.5 915.3,441.5Q912.4,445.6 911.0,449.5Q909.5,453.3 910.5,456.7Q911.4,460.0 913.6,463.5Q915.7,467.0 916.6,471.3Q917.4,475.6 915.9,478.7Q914.4,481.8 912.1,485.3Q909.8,488.8 909.5,492.4Q909.1,496.1 911.4,500.3Q913.7,504.6 916.0,509.4Q918.3,514.3 917.4,517.7Q916.5,521.1 912.2,523.0Q907.8,524.9 903.4,529.6Q899.0,534.4 898.3,538.2Q897.6,541.9 900.8,544.7Q903.9,547.4 907.1,551.6Q910.2,555.9 909.5,559.4Q908.8,562.8 904.8,566.3Q900.7,569.9 897.9,574.4Q895.0,578.8 897.2,581.8L899.3,584.8"/>
</g></g>
<g id="notes">
<g fill="none" stroke="#1d1d1d" stroke-width="2" stroke-linecap="round">
<path d="M990.6,539.6 L1012,529.5 M1039.3,518.3 L1046,513.6"/>
<path d="M984.6,910 L995.5,901 M1021.5,883 L1033,873.6 M1061.5,857.5 L1062,856.8"/>
<path d="M1006,972 L1020,964 M1051.3,944.4 L1051.9,943.8 M1065,933.8 L1083,921.5 M1096.7,929.7 L1105,922.9"/>
<path d="M1006.5,1037.7 L1023,1029.5 M1044.8,1017 L1072,998"/>
</g>
<text transform="translate(1090,506) rotate(-23) skewX(-20)" font-family="Liberation Serif, serif" font-style="italic" font-size="64" fill="none" stroke="#1d1d1d" stroke-width="1.5" textLength="110" lengthAdjust="spacingAndGlyphs">no</text>
<text transform="translate(1232,462) rotate(-17) skewX(-20)" font-family="Liberation Serif, serif" font-style="italic" font-size="84" fill="none" stroke="#1d1d1d" stroke-width="1.5" textLength="152" lengthAdjust="spacingAndGlyphs">bra</text>
<text transform="translate(1155,523) rotate(-18) skewX(-20)" font-family="Liberation Serif, serif" font-style="italic" font-size="62" fill="none" stroke="#1d1d1d" stroke-width="1.5" textLength="238" lengthAdjust="spacingAndGlyphs">needed</text>
<text transform="translate(1104,832) rotate(-16.5) skewX(-20)" font-family="Liberation Serif, serif" font-style="italic" font-size="84" fill="none" stroke="#1d1d1d" stroke-width="1.5" textLength="214" lengthAdjust="spacingAndGlyphs">pockets</text>
<text transform="translate(1118,932) rotate(-19.5) skewX(-20)" font-family="Liberation Serif, serif" font-style="italic" font-size="66" fill="none" stroke="#1d1d1d" stroke-width="1.5" textLength="150" lengthAdjust="spacingAndGlyphs">pleats</text>
<text transform="translate(1100,992) rotate(-13.5) skewX(-20)" font-family="Liberation Serif, serif" font-style="italic" font-size="62" fill="none" stroke="#1d1d1d" stroke-width="1.5" textLength="170" lengthAdjust="spacingAndGlyphs">white</text>
<text transform="translate(1290,951) rotate(-24) skewX(-20)" font-family="Liberation Serif, serif" font-style="italic" font-size="62" fill="none" stroke="#1d1d1d" stroke-width="1.5" textLength="78" lengthAdjust="spacingAndGlyphs">is</text>
<text transform="translate(1093,1066) rotate(-11.5) skewX(-20)" font-family="Liberation Serif, serif" font-style="italic" font-size="60" fill="none" stroke="#1d1d1d" stroke-width="1.5" textLength="190" lengthAdjust="spacingAndGlyphs">inner</text>
<text transform="translate(1308,1024) rotate(-5) skewX(-20)" font-family="Liberation Serif, serif" font-style="italic" font-size="60" fill="none" stroke="#1d1d1d" stroke-width="1.5" textLength="75" lengthAdjust="spacingAndGlyphs">co</text>
<g fill="none" stroke="#1d1d1d" stroke-width="1.8" stroke-linecap="round">
<path d="M1090,836.7 C1105,826 1118,815 1129,792"/>
<path d="M1258,748 C1290,738 1330,728 1359,730"/>
<path d="M1240,838 C1262,828 1285,820 1299,815"/>
<path d="M1128,1018 C1145,1004 1162,994 1178,985"/>
<path d="M1305,905 C1318,895 1325,890 1332,884"/>
</g>
</g>
<g id="specks">
<circle cx="1401.8" cy="181" r="3" fill="#f1d5cc"/>
<circle cx="1228" cy="626" r="2.5" fill="#f1d5cc"/>
<circle cx="1221" cy="697" r="2" fill="#f1d5cc"/>
<circle cx="110.5" cy="1667.5" r="2.5" fill="#f1d5cc"/>
<circle cx="428.5" cy="1303" r="1.5" fill="#333"/>
<circle cx="565" cy="1983" r="1.5" fill="#333"/>
<circle cx="1424.3" cy="1090" r="2.8" fill="#111"/>
<ellipse cx="1179.2" cy="1134.5" rx="4" ry="3" fill="#fff"/>
<circle cx="1264.2" cy="1139.6" r="3" fill="#fff"/>
<path d="M1337,1169 L1344,1174" stroke="#fff" stroke-width="5.5" stroke-linecap="round"/>
</g>
</svg>
<div id="stripL"></div>
<div id="stripR"></div>
<div id="layers"><svg width="163" height="1960" viewBox="1336 88 163 1960">
<defs>
<pattern id="ck" x="1428.15" y="0" width="33.5" height="33.5" patternUnits="userSpaceOnUse">
 <rect width="33.5" height="33.5" fill="#fff"/>
 <rect x="0" y="0" width="16.75" height="16.75" fill="#d9d9d9"/>
 <rect x="16.75" y="16.75" width="16.75" height="16.75" fill="#d9d9d9"/>
</pattern>
</defs>
<circle cx="1427.8" cy="223.5" r="34.8" fill="#fff" stroke="#b9b5ae" stroke-width="1"/>
<path d="M1415.5,223.5 H1440.2 M1427.8,211.2 V235.8" stroke="#4083b7" stroke-width="2" fill="none"/>
<rect x="1363" y="308.7" width="130.3" height="130.3" rx="2.5" fill="#fff" stroke="#4083b7" stroke-width="3.5"/>
<g transform="translate(0,374)"><rect x="1369.60" y="-58.70" width="117.10" height="117.10" fill="url(#ck)" opacity="0.45"/></g>
<svg x="1364.90" y="310.60" width="126.50" height="126.50" viewBox="1364.90 310.60 126.50 126.50" overflow="hidden">

<path fill="#f8e9e5" d="M1376.5,327 L1393,326 L1394.4,338 L1386,355 L1376,339 Z"/>
<path fill="#f8e9e5" d="M1457,332 L1471,331 L1472,338 L1465.7,356 L1456,338 Z"/>
<path fill="#bdaa9b" d="M1375.7,337.6 L1386,355.4 L1394.4,336.7 C1398,339 1401,341.5 1402.9,344.2 C1404,349 1404,354 1403.8,358.3
 C1405.5,366 1407,374 1407.6,381.7 C1408.8,388 1409,394 1408,400.4 C1404,409 1397,414 1387.9,415.4 C1379,415 1372,410 1368.2,403.3
 C1366.5,399 1366,395 1366.3,391 C1366.5,383 1367.5,375 1369.1,367.6 C1370,364 1371,361 1371.9,358.3 C1370,354 1369,350.5 1369.1,347
 C1371,343.5 1373,340.5 1375.7,337.6 Z"/>
<path fill="#bdaa9b" d="M1455.4,336.7 L1465.7,356.4 L1472.3,337.2 C1475.5,340 1478,343.5 1479.8,347 C1481,352 1481.5,357.5 1481.6,363
 C1484,371 1486,379 1487.3,386.4 C1488.8,391 1489.2,396 1488.7,400.4 C1485,410 1478,415.5 1468.5,416.4 C1460,415.5 1453.5,411 1449.8,405
 C1447.5,400.5 1446.3,396 1446.5,391 C1446.5,383 1447.5,375 1448.8,367.6 C1449.2,365 1449.5,362.5 1449.8,360 C1447.5,356.5 1446.3,352.5 1446.5,348.9
 C1449,344 1452,340 1455.4,336.7 Z"/>
<g fill="#fff" opacity="0.85">
<path d="M1377,341 L1383,352 L1379,356 L1373.5,349 Z M1393,342 L1399,346 L1398,355 L1390,352 Z"/>
<path d="M1373.5,361 L1384,361 L1381,370 L1376,377 L1373,372 Z M1390,361 L1400,362 L1401,372 L1396,380 L1392,372 Z"/>
<path d="M1376,382 L1378.5,380 L1375.5,395 Z M1402,390 L1405,397 L1403.5,403 Z"/>
<path d="M1457,341 L1462,351 L1459,356 L1452,350 Z M1471,344 L1477,348 L1477,356 L1469,353 Z"/>
<path d="M1452,364 L1460,364 L1460,378 L1456,384 L1452,376 Z M1468,364 L1479,366 L1481,380 L1476,386 L1470,384 Z"/>
<path d="M1450,392 L1453,400 L1456,407 L1451,403 Z M1483,392 L1486,398 L1483,406 Z"/>
</g>
<g fill="none" stroke="#a8978a" stroke-width="1.2" stroke-linecap="round">
<path d="M1372,359 C1380,356.5 1394,356.5 1403.5,359.5"/>
<path d="M1375.7,337.6 L1386,355.4 L1394.4,336.7"/>
<path d="M1450,362 C1458,358.5 1472,358.5 1481.5,364"/>
<path d="M1455.4,336.7 L1465.7,356.4 L1472.3,337.2"/>
<path d="M1386,356 L1387,372 M1465.7,357 L1466,376"/>
</g>
<g fill="none" stroke="#3f7fb5" stroke-width="2" stroke-linecap="butt">
<path d="M1408.8,373.7 C1414,365.5 1420.5,361.8 1427.7,361.8 C1431,361.8 1434,362.6 1436.6,364 M1441.8,368 C1443.8,369.7 1445.6,371.6 1447.2,373.7 C1442,381.5 1435,385.4 1427.7,385.4 C1424.5,385.4 1421.5,384.7 1418.8,383.4 M1413.8,379.6 C1411.9,377.9 1410.2,375.9 1408.8,373.7"/>
<path d="M1433.5,369.8 A7,7 0 0 1 1423.8,379.5 M1421.9,377.6 A7,7 0 0 1 1431.6,367.9"/>
<path d="M1412.3,389.2 L1443.2,358.3"/>
</g>
</svg>
<text x="1356.8" y="477" font-family="Liberation Sans, sans-serif" font-size="21.5" fill="#4f8dc0" textLength="142.5" lengthAdjust="spacingAndGlyphs">SKETCH LAYER</text>
<rect x="1361.8" y="517.5" width="132.8" height="133" rx="4" fill="#fff" stroke="#c9c9c9" stroke-width="1"/>
<g transform="translate(0,584)"><rect x="1366.60" y="-61.70" width="123.10" height="123.10" fill="url(#ck)" opacity="1"/></g>
<svg x="1366.60" y="522.30" width="123.10" height="123.10" viewBox="1366.60 522.30 123.10 123.10" overflow="hidden">

<g fill="#7a5336">
<path d="M1414.5,633 C1415,629.5 1420.5,629 1421.5,632.5 C1422.8,637 1422.6,642 1421.5,645 C1419,646.2 1416,646 1414,644.8 C1413.5,641 1413.8,637 1414.5,633 Z"/>
<path d="M1430.5,633 C1431,629.5 1436.5,629 1437.3,632.5 C1438.4,637 1438.6,642 1437.8,645.2 C1435.5,646.4 1432.5,646.2 1430.6,645 C1430,641 1430,637 1430.5,633 Z"/>
</g>
<g fill="none" stroke="#f1d5cc" stroke-linecap="round">
<path stroke-width="2.5" d="M1434,626 C1434.5,618 1435.5,610 1436.5,603"/>
<path stroke-width="1" d="M1421.5,603 L1421,596 M1437.5,603 L1437.8,596 M1420,631 L1420.3,626"/>
<path stroke-width="1.5" d="M1431.5,625 L1433,615"/>
</g>
<g fill="none" stroke="#444" stroke-width="0.7" stroke-dasharray="1.5 1.2 0.8 1">
<path d="M1449,535 L1458,531.5 M1461,532 C1465,530 1470,527 1477,524 M1468,530 L1478,526.5"/>
<path d="M1455,562 C1460,559 1466,556.5 1474,553.5 M1454,570 C1460,567 1466,565 1473,562 M1456,577 C1461,575 1468,572 1477,568.5 M1457,584 L1464,581.5 M1472,579 C1476,577 1480,576 1484.5,575"/>
<path d="M1447,575 L1449,583"/>
</g>
</svg>
<text x="1356.8" y="687" font-family="Liberation Sans, sans-serif" font-size="21.5" fill="#505050" textLength="142.5" lengthAdjust="spacingAndGlyphs">SKETCH LAYER</text>
<rect x="1361.8" y="727.5" width="132.8" height="133" rx="4" fill="#fff" stroke="#c9c9c9" stroke-width="1"/>
<g transform="translate(0,794)"><rect x="1366.60" y="-61.70" width="123.10" height="123.10" fill="url(#ck)" opacity="1"/></g>
<svg x="1366.60" y="732.30" width="123.10" height="123.10" viewBox="1366.60 732.30 123.10 123.10" overflow="hidden">
<g transform="translate(846.5,207.8) scale(0.78)"><use href="#knot"/></g>
</svg>
<text x="1356.8" y="897" font-family="Liberation Sans, sans-serif" font-size="21.5" fill="#505050" textLength="142.5" lengthAdjust="spacingAndGlyphs">SKETCH LAYER</text>
<rect x="1361.8" y="937.5" width="132.8" height="133" rx="4" fill="#fff" stroke="#c9c9c9" stroke-width="1"/>
<g transform="translate(0,1004)"><rect x="1366.60" y="-61.70" width="123.10" height="123.10" fill="url(#ck)" opacity="1"/></g>
<svg x="1366.60" y="942.30" width="123.10" height="123.10" viewBox="1366.60 942.30 123.10 123.10" overflow="hidden">

<path fill="#f1d5cc" d="M1418.5,943 L1436,942 L1436.5,972 L1419.5,972.5 Z"/>
<path fill="#c6d6ed" d="M1411.5,955 L1419.5,953.5 L1420,964 L1412,964.5 Z M1436,954 L1443,952.5 L1441.5,960.5 L1436,961 Z"/>
<path fill="none" stroke="#c6d6ed" stroke-width="2.2" stroke-linecap="round" d="M1415.5,945.5 L1437,964 M1435.5,946 L1418.5,964"/>
<g fill="none" stroke="#f1d5cc" stroke-linecap="round">
<path stroke-width="2.2" d="M1413.5,1031 L1415,1046 M1416.5,1029 L1417.5,1040 M1420,1029 L1419.5,1036"/>
<path stroke-width="2.6" d="M1435,1030 C1438,1036 1440,1043 1440.5,1050 C1441,1055 1440.5,1060 1440,1064"/>
<path stroke-width="2" d="M1438.5,1032 L1441.5,1045"/>
</g>
</svg>
<text x="1356.8" y="1107" font-family="Liberation Sans, sans-serif" font-size="21.5" fill="#505050" textLength="142.5" lengthAdjust="spacingAndGlyphs">SKETCH LAYER</text>
<rect x="1361.8" y="1147.5" width="132.8" height="133" rx="4" fill="#fff" stroke="#c9c9c9" stroke-width="1"/>
<g transform="translate(0,1214)"><rect x="1366.60" y="-61.70" width="123.10" height="123.10" fill="url(#ck)" opacity="1"/></g>
<svg x="1366.60" y="1152.30" width="123.10" height="123.10" viewBox="1366.60 1152.30 123.10 123.10" overflow="hidden">

<path fill="#a87446" d="M1423.5,1155 C1426,1152 1432,1152.5 1434,1156 C1435.5,1164 1435.5,1174 1434,1182 C1432,1186 1427,1186.5 1424,1184 C1421,1176 1420.5,1164 1423.5,1155 Z"/>
<g fill="none" stroke="#8a5f3b" stroke-width="0.9" stroke-dasharray="1.2 1">
<path d="M1424,1156 L1423,1183 M1427,1153 L1426.5,1185 M1430,1153 L1430.5,1185 M1433,1155 L1433.5,1182"/>
</g>
<g fill="none" stroke="#cd9a62" stroke-width="0.8" stroke-dasharray="1 1.6">
<path d="M1425.5,1155 L1425,1184 M1428.5,1153 L1428.5,1186 M1431.5,1154 L1432,1184"/>
</g>
</svg>
<text x="1356.8" y="1317" font-family="Liberation Sans, sans-serif" font-size="21.5" fill="#505050" textLength="142.5" lengthAdjust="spacingAndGlyphs">SKETCH LAYER</text>
<rect x="1361.8" y="1357.5" width="132.8" height="133" rx="4" fill="#fff" stroke="#c9c9c9" stroke-width="1"/>
<g transform="translate(0,1424)"><rect x="1366.60" y="-61.70" width="123.10" height="123.10" fill="url(#ck)" opacity="1"/></g>
<svg x="1366.60" y="1362.30" width="123.10" height="123.10" viewBox="1366.60 1362.30 123.10 123.10" overflow="hidden">

<g transform="translate(1305.49,1339.55) scale(0.1225)"><use href="#hair"/></g>
<path fill="#fff" d="M1394.5,1400 L1407,1400 L1411,1420 L1395.5,1420 Z"/>
<path fill="#f1d5cc" d="M1394,1386 C1394,1375 1406,1375 1406,1386 L1406,1395 C1405,1404 1395,1404 1394,1395 Z"/>
<path fill="none" stroke="#e6c5bc" stroke-width="0.8" d="M1397,1400.5 C1399,1401.8 1402,1401.8 1404,1400.5"/>
</svg>
<text x="1356.8" y="1527" font-family="Liberation Sans, sans-serif" font-size="21.5" fill="#505050" textLength="142.5" lengthAdjust="spacingAndGlyphs">SKETCH LAYER</text>
<rect x="1361.8" y="1567.5" width="132.8" height="133" rx="4" fill="#fff" stroke="#c9c9c9" stroke-width="1"/>
<g transform="translate(0,1634)"><rect x="1366.60" y="-61.70" width="123.10" height="123.10" fill="url(#ck)" opacity="1"/></g>
<svg x="1366.60" y="1572.30" width="123.10" height="123.10" viewBox="1366.60 1572.30 123.10 123.10" overflow="hidden">

<rect x="1402.8" y="1573" width="9" height="10" fill="#f1d5cc"/>
<g transform="translate(1337.2,1529.9) scale(0.093)"><use href="#skin"/><use href="#top"/><use href="#skirt"/></g>
<rect x="1459.2" y="1628.7" width="0.9" height="0.9" fill="#333"/>
<path d="M1465,1634.6 h4.5" stroke="#fff" stroke-width="1"/>
</svg>
<text x="1356.8" y="1737" font-family="Liberation Sans, sans-serif" font-size="21.5" fill="#505050" textLength="142.5" lengthAdjust="spacingAndGlyphs">SKETCH LAYER</text>
<rect x="1361.8" y="1777.5" width="132.8" height="133" rx="4" fill="#fff" stroke="#c9c9c9" stroke-width="1"/>
<g transform="translate(0,1844)"><rect x="1366.60" y="-61.70" width="123.10" height="123.10" fill="url(#ck)" opacity="1"/></g>
<svg x="1366.60" y="1782.30" width="123.10" height="123.10" viewBox="1366.60 1782.30 123.10 123.10" overflow="hidden">
<rect x="1383.9" y="1777" width="88.3" height="134" fill="#f8f8f4"/>
</svg>
<text x="1356.8" y="1947" font-family="Liberation Sans, sans-serif" font-size="21.5" fill="#505050" textLength="142.5" lengthAdjust="spacingAndGlyphs">BACKGROUND</text>
</svg></div>

<div id="brushes">
<svg width="167" height="844" viewBox="0 646 167 844">
 <defs>
  <filter id="b1" x="-5%" y="-50%" width="110%" height="200%"><feGaussianBlur stdDeviation="0.7"/></filter>
  <filter id="b2" x="-10%" y="-20%" width="120%" height="140%"><feGaussianBlur stdDeviation="2.2"/></filter>
  <filter id="b3" x="-30%" y="-60%" width="160%" height="220%"><feGaussianBlur stdDeviation="5"/></filter>
  <filter id="wc" x="-10%" y="-20%" width="120%" height="140%">
   <feTurbulence type="fractalNoise" baseFrequency="0.035" numOctaves="3" seed="4" result="n"/>
   <feDisplacementMap in="SourceGraphic" in2="n" scale="7" xChannelSelector="R" yChannelSelector="G" result="d"/>
   <feGaussianBlur in="d" stdDeviation="1.9"/>
  </filter>
  <pattern id="chk" x="0" y="1305" width="19.4" height="19.4" patternUnits="userSpaceOnUse">
   <rect x="0" y="0" width="9.7" height="9.7" fill="#a9a9a9"/>
   <rect x="9.7" y="9.7" width="9.7" height="9.7" fill="#a9a9a9"/>
  </pattern>
  <linearGradient id="fadeR" x1="0" y1="0" x2="1" y2="0">
   <stop offset="0" stop-color="#fff" stop-opacity="0"/>
   <stop offset="0.45" stop-color="#fff" stop-opacity="0.35"/>
   <stop offset="0.85" stop-color="#fff" stop-opacity="0.75"/>
   <stop offset="1" stop-color="#fff" stop-opacity="1"/>
  </linearGradient>
  <linearGradient id="fadeV" x1="0" y1="0" x2="0" y2="1">
   <stop offset="0" stop-color="#fff" stop-opacity="0.75"/>
   <stop offset="0.3" stop-color="#fff" stop-opacity="0.1"/>
   <stop offset="0.6" stop-color="#fff" stop-opacity="0.1"/>
   <stop offset="1" stop-color="#fff" stop-opacity="0.85"/>
  </linearGradient>
  <linearGradient id="wcv" x1="0" y1="1180" x2="0" y2="1248" gradientUnits="userSpaceOnUse">
   <stop offset="0" stop-color="#3a3a3a"/>
   <stop offset="0.18" stop-color="#555"/>
   <stop offset="0.45" stop-color="#747474"/>
   <stop offset="0.72" stop-color="#5c5c5c"/>
   <stop offset="1" stop-color="#8c8c8c"/>
  </linearGradient>
  <radialGradient id="wcg" cx="0.62" cy="0.62" r="0.6">
   <stop offset="0" stop-color="#2e2e2e"/>
   <stop offset="0.5" stop-color="#555"/>
   <stop offset="1" stop-color="#777"/>
  </radialGradient>
 </defs>
 <!-- swatches -->
 <rect x="0" y="722" width="10" height="35.5" fill="#555"/>
 <rect x="0" y="840" width="10" height="35.5" fill="#5a3d29"/>
 <rect x="0" y="958" width="10" height="35.5" fill="#e9b748"/>
 <rect x="0" y="1072" width="10" height="43.5" fill="#ea7a5a"/>
 <rect x="0" y="1177" width="10" height="70" fill="#8fb446"/>
 <!-- pencil -->
 <path d="M11,739.2 H144" stroke="#444" stroke-width="1.1" stroke-dasharray="3 0.6 5 0.4 2 0.7 7 0.5" opacity="0.85"/>
 <path d="M11,738.6 H144" stroke="#666" stroke-width="0.7" stroke-dasharray="1 2.2 2 1.4 1 3" opacity="0.8"/>
 <!-- marker line -->
 <rect x="9" y="855.5" width="135.5" height="5.6" rx="2.8" fill="#111" filter="url(#b1)"/>
 <!-- taper brush -->
 <path d="M9,960.3 C40,962 75,964.5 100,967.5 C118,969.5 132,972.5 144.5,976.3 C132,981 118,984.5 100,987 C75,989.5 40,991 9,992.5 Z" fill="#141414" filter="url(#b1)"/>
 <!-- dry brush -->
 <path d="M10,1075.5 C30,1076 50,1077.5 75,1077.5 C95,1077.5 108,1079 118,1081.5 C126,1083 134,1082 139,1085.5 C141,1088 138,1092 132,1096 C124,1101 112,1107 96,1110.5 C70,1113.5 40,1112.5 10,1112 Z" fill="#050505"/>
 <path d="M116,1085 L137,1086.5 M112,1089 L137,1089.5 M120,1096 L131,1094" stroke="#eee" stroke-width="1" opacity="0.8"/>
 <path d="M60,1100 L118,1093 M50,1104 L112,1099" stroke="#333" stroke-width="0.7"/>
 <!-- watercolor -->
 <clipPath id="wclip"><rect x="10" y="1180.2" width="150" height="80"/></clipPath>
 <g clip-path="url(#wclip)">
  <g filter="url(#wc)">
   <path d="M4,1172 H118 C128,1174 134,1184 134,1196 C135,1208 144,1212 143,1221 C141,1232 131,1240 114,1243 C80,1248 40,1247 4,1246 Z" fill="url(#wcv)"/>
   <g filter="url(#b3)">
   <ellipse cx="100" cy="1224" rx="26" ry="10" fill="#262626" opacity="0.5"/>
   <ellipse cx="108" cy="1188" rx="24" ry="6" fill="#2a2a2a" opacity="0.4"/>
   <ellipse cx="52" cy="1206" rx="32" ry="8" fill="#8a8a8a" opacity="0.4"/>
   </g>
  </g>
 </g>
 <path d="M5,1177 C20,1176 35,1177.5 48,1178 M73,1178 C85,1177 100,1177.5 112,1179.5" stroke="#8e8e8e" stroke-width="1.8" fill="none" filter="url(#b1)"/>
 <!-- eraser -->
 <rect x="0" y="1305" width="126" height="49.5" fill="url(#chk)"/>
 <rect x="0" y="1305" width="126" height="49.5" fill="url(#fadeR)"/>
 <rect x="0" y="1305" width="126" height="49.5" fill="url(#fadeV)"/>
 <!-- plus -->
 <path d="M63.5,1428 H92.5 M78,1413.5 V1442.5" stroke="#3a7db5" stroke-width="2" fill="none"/>
</svg>
</div>
<div id="selbar"></div>


<div id="header">
<div id="close">Close</div>
<svg id="hicons" viewBox="0 0 1536 88" fill="none" stroke="#4083b7" stroke-width="2" stroke-linecap="butt" stroke-linejoin="miter">
 <!-- undo -->
 <path d="M1045.7,29 L1036.2,37 L1045.7,45"/>
 <path d="M1036.5,37 H1056.5 A11,11 0 0 1 1056.5,59 H1040.3"/>
 <!-- shapes -->
 <circle cx="1145.9" cy="47.7" r="14.8"/>
 <path d="M1134,25.1 L1150.2,52.8 L1117.8,52.8 Z" fill="#4083b7" stroke="none"/>
 <!-- layers -->
 <path d="M1228,27.6 L1248.6,36.9 L1228,46.2 L1207.4,36.9 Z"/>
 <path d="M1213.9,43.0 L1207.4,46.0 L1228,55.3 L1248.6,46.0 L1242.1,43.0"/>
 <path d="M1213.9,51.9 L1207.4,54.9 L1228,64.2 L1248.6,54.9 L1242.1,51.9"/>
 <!-- share -->
 <path d="M1312.6,35.8 H1299.5 V64.4 H1332.7 V35.8 H1319.6"/>
 <path d="M1316.1,54.5 V21.5"/>
 <path d="M1308.2,29 L1316.1,21 L1324,29"/>
 <!-- gear -->
 <path d="M1399.76,29.51 L1400.72,24.37 L1407.28,24.37 L1408.24,29.51 A15.00,15.00 0 0 1 1411.17,30.73 L1415.48,27.77 L1420.13,32.42 L1417.17,36.73 A15.00,15.00 0 0 1 1418.39,39.66 L1423.53,40.62 L1423.53,47.18 L1418.39,48.14 A15.00,15.00 0 0 1 1417.17,51.07 L1420.13,55.38 L1415.48,60.03 L1411.17,57.07 A15.00,15.00 0 0 1 1408.24,58.29 L1407.28,63.43 L1400.72,63.43 L1399.76,58.29 A15.00,15.00 0 0 1 1396.83,57.07 L1392.52,60.03 L1387.87,55.38 L1390.83,51.07 A15.00,15.00 0 0 1 1389.61,48.14 L1384.47,47.18 L1384.47,40.62 L1389.61,39.66 A15.00,15.00 0 0 1 1390.83,36.73 L1387.87,32.42 L1392.52,27.77 L1396.83,30.73 A15.00,15.00 0 0 1 1399.76,29.51 Z"/>
 <circle cx="1404" cy="43.9" r="8.4"/>
 <!-- expand -->
 <path d="M1475.3,60.6 L1489.3,46.6 M1494.6,41.3 L1508.8,27.4"/>
 <path d="M1498,26.8 H1509.4 V38"/>
 <path d="M1474.8,50 V61 H1486"/>
</svg>
</div>

</body>
</html>
